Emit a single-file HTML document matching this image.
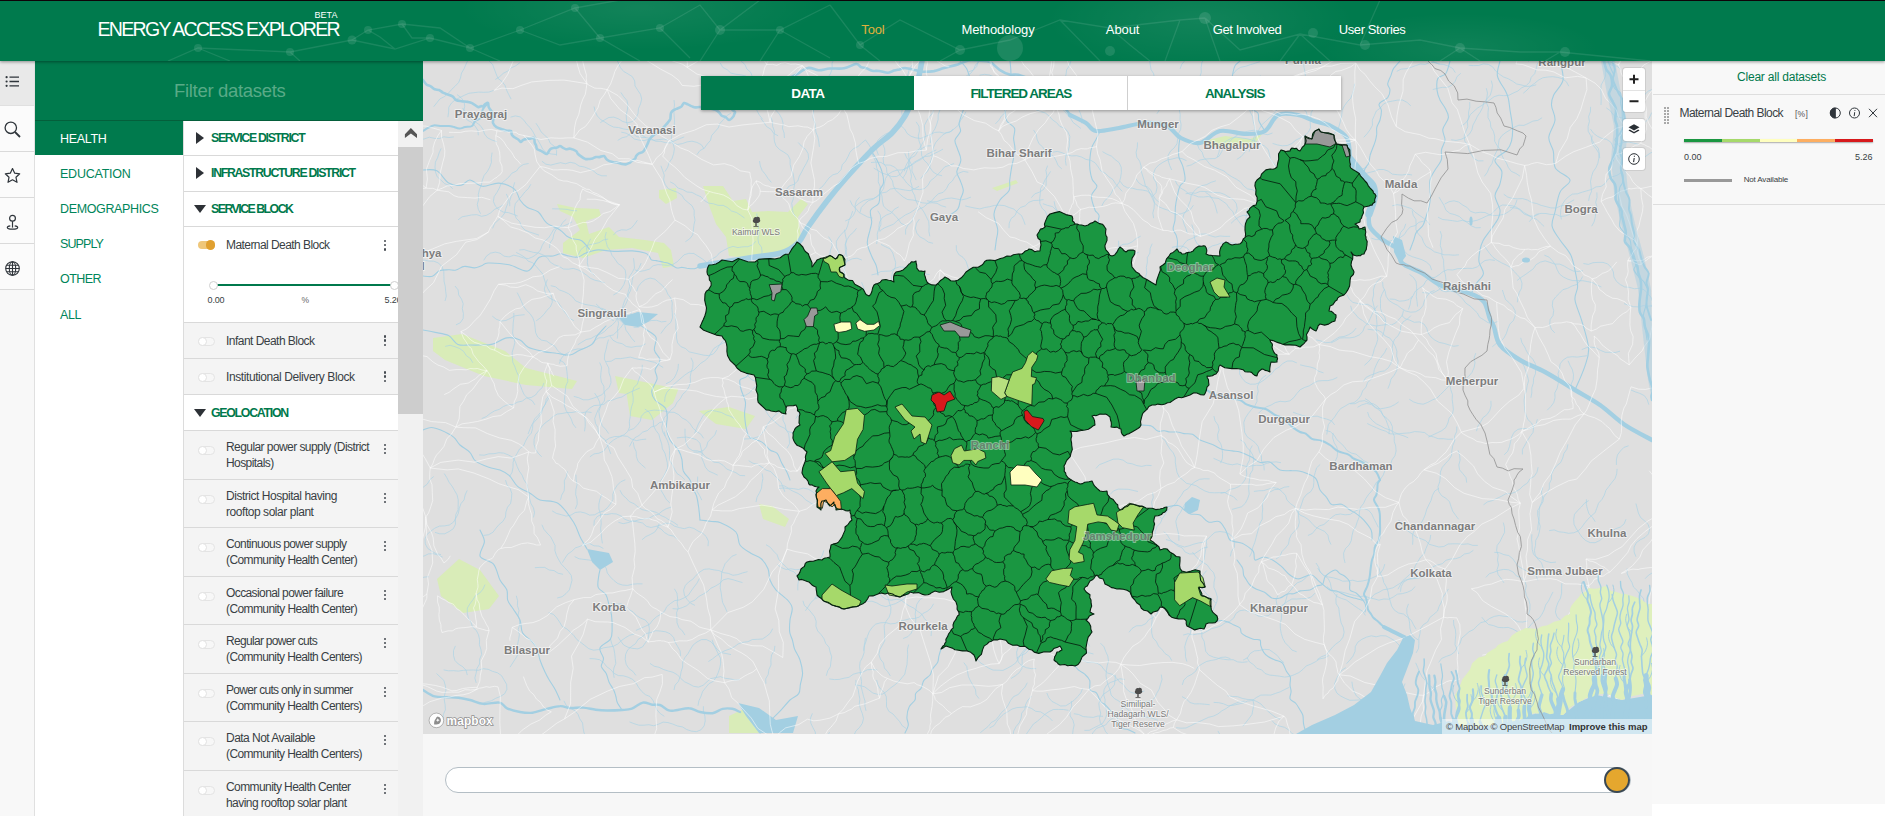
<!DOCTYPE html>
<html lang="en">
<head>
<meta charset="utf-8">
<title>Energy Access Explorer</title>
<style>
*{box-sizing:border-box;margin:0;padding:0}
html,body{width:1885px;height:816px;overflow:hidden;background:#f7f7f7;font-family:"Liberation Sans",sans-serif;color:#393f44}
.abs{position:absolute}
#top{position:absolute;left:0;top:0;width:1885px;height:61px;background:#007a4d;z-index:20;box-shadow:0 1px 3px rgba(0,0,0,.4);overflow:hidden}
#topline{position:absolute;left:0;top:0;width:1885px;height:1px;background:#0e0308;z-index:21}
#iconbar{position:absolute;left:0;top:61px;width:35px;height:755px;background:#f8f8f8;border-right:1px solid #e0e0e0}
.ic{position:absolute;left:0;width:34px;height:46px;border-bottom:1px solid #dadada;background:#fbfbfb}
.ic svg{position:absolute;left:3.800px;width:17px;height:17px}
#filter{position:absolute;left:35px;top:61px;width:388px;height:60px;background:#007a4d;border-bottom:1px solid #045f3b}
#cats{position:absolute;left:35px;top:121px;width:148px;height:695px;background:#fff}
#list{position:absolute;left:183px;top:121px;width:215px;height:695px;background:#fff;border-left:1px solid #dcdcdc;overflow:hidden}
#listin{position:absolute;left:-184px;top:-121px;width:1885px;height:816px}
.row{position:absolute;left:184px;width:214px;border-bottom:1px solid #d9d9d9}
.hd{background:#fff}
.off{background:#f4f4f4}
.tri-r{position:absolute;width:0;height:0;border-left:8px solid #2d3136;border-top:6.500px solid transparent;border-bottom:6.500px solid transparent}
.tri-d{position:absolute;width:0;height:0;border-top:8px solid #2d3136;border-left:6.500px solid transparent;border-right:6.500px solid transparent}
.tg{position:absolute;left:198px;width:17px;height:9px;border-radius:5px;border:1px solid #e4e4e4;background:#f7f7f7}
.tg i{position:absolute;left:-1px;top:-1px;width:9px;height:9px;border-radius:5px;background:#fff;border:1px solid #e2e2e2}
.dots{position:absolute;left:384px;width:3px;height:12px}
.dots i{position:absolute;left:0;width:2.400px;height:2.400px;border-radius:2px;background:#444a50}
.lbl{position:absolute;left:226px;font-size:12px;line-height:16px;color:#393f44;white-space:nowrap}
#sbar{position:absolute;left:398px;top:121px;width:25px;height:695px;background:#f1f1f1}
#sthumb{position:absolute;left:398px;top:147px;width:25px;height:267px;background:#cdcdcd}
#map{position:absolute;left:423px;top:61px;width:1229px;height:673px;background:#dfdfdf;overflow:hidden}
#tabs{position:absolute;left:701px;top:76px;width:640px;height:34px;background:#fff;box-shadow:0 1px 3px rgba(0,0,0,.35);z-index:5}
.ctl{position:absolute;left:1623px;width:22px;background:#fff;border-radius:3px;box-shadow:0 0 0 1px rgba(0,0,0,.08);z-index:5}
#right{position:absolute;left:1652px;top:61px;width:233px;height:743px;background:#f8f8f8}
#rightb{position:absolute;left:1652px;top:804px;width:233px;height:12px;background:#fff}
#tl{position:absolute;left:445px;top:767px;width:1186px;height:26px;border:1px solid #b4bec5;border-radius:13px;background:#fff}
#knob{position:absolute;left:1604px;top:767px;width:26px;height:26px;border-radius:13px;background:#e5a72e;border:2px solid #3a4853}
#attr{position:absolute;left:1442px;top:719px;width:210px;height:15px;background:rgba(255,255,255,.5);z-index:4}
</style>
</head>
<body>
<div id="top">
<div class="abs" style="left:0;top:0;width:1885px;height:61px;background:radial-gradient(ellipse 260px 60px at 640px 8px,rgba(255,255,255,.07),rgba(255,255,255,0) 70%),radial-gradient(ellipse 220px 70px at 1200px 20px,rgba(255,255,255,.07),rgba(255,255,255,0) 70%),radial-gradient(ellipse 200px 50px at 1460px 48px,rgba(255,255,255,.06),rgba(255,255,255,0) 70%)"></div>
<svg class="abs" style="left:0;top:0" width="1885" height="61" viewBox="0 0 1885 61" fill="none" stroke="#fff" stroke-opacity=".1" stroke-width="1.300">
<path d="M168 61L198 48 290 52 352 40 395 49 430 38 470 48 520 30 575 8 620 0M352 40L368 30 402 24 412 38 430 38M368 30L380 37 395 49M402 24L440 28 470 48M198 48L230 61M290 52L300 61M470 48L500 61M520 30L560 45 600 38 640 61M575 8L600 38M600 38L660 28 700 5 720 30 760 0M660 28L690 58M720 30L780 30 830 5M720 30L700 61M780 30L760 61M780 30L830 58M830 5L860 45 900 20 960 50 1010 40 1060 20 1110 28 1180 20 1205 18M860 45L880 61M960 50L940 61M1060 20L1100 61M1110 28L1130 45 1150 61M1180 20L1165 61M1205 18L1240 50 1300 34 1360 45 1420 40 1460 48 1520 52 1560 52 1600 56 1650 61M1205 18L1220 61M1300 34L1280 61M1300 34L1330 61M1360 45L1380 0M1460 48L1440 61M1460 48L1480 61M1560 52L1545 61"/>
<g fill="#fff" fill-opacity=".11" stroke="none"><circle cx="198" cy="48" r="4"/><circle cx="290" cy="52" r="4"/><circle cx="352" cy="40" r="4.500"/><circle cx="368" cy="30" r="4"/><circle cx="402" cy="24" r="4"/><circle cx="430" cy="38" r="4"/><circle cx="470" cy="48" r="4"/><circle cx="520" cy="30" r="4"/><circle cx="575" cy="8" r="4"/><circle cx="600" cy="38" r="4"/><circle cx="660" cy="28" r="4"/><circle cx="720" cy="30" r="5"/><circle cx="780" cy="30" r="4"/><circle cx="860" cy="45" r="4"/><circle cx="960" cy="50" r="5"/><circle cx="1010" cy="48" r="13"/><circle cx="1110" cy="51" r="5"/><circle cx="1205" cy="18" r="6"/><circle cx="1313" cy="33" r="5"/><circle cx="1365" cy="45" r="5"/><circle cx="1460" cy="48" r="5"/><circle cx="1565" cy="52" r="5"/></g>
</svg>
<div style="position:absolute;top:15.5px;font-size:19.5px;line-height:27px;white-space:nowrap;letter-spacing:-1.67px;color:#fff;left:97.5px;">ENERGY ACCESS EXPLORER</div>
<div style="position:absolute;top:9.2px;font-size:9px;line-height:13px;white-space:nowrap;letter-spacing:0.04px;color:#fff;left:314.5px;">BETA</div>
<div style="position:absolute;top:20.7px;font-size:13px;line-height:18px;white-space:nowrap;letter-spacing:-0.14px;color:#e0b13c;left:861.3px;">Tool</div>
<div style="position:absolute;top:20.7px;font-size:13px;line-height:18px;white-space:nowrap;letter-spacing:-0.13px;color:#fff;left:961.5px;">Methodology</div>
<div style="position:absolute;top:20.7px;font-size:13px;line-height:18px;white-space:nowrap;letter-spacing:-0.09px;color:#fff;left:1105.8px;">About</div>
<div style="position:absolute;top:20.7px;font-size:13px;line-height:18px;white-space:nowrap;letter-spacing:-0.35px;color:#fff;left:1212.7px;">Get Involved</div>
<div style="position:absolute;top:20.7px;font-size:13px;line-height:18px;white-space:nowrap;letter-spacing:-0.41px;color:#fff;left:1338.8px;">User Stories</div>
</div>
<div id="topline"></div>

<div id="iconbar">
<div class="ic" style="top:0;height:45px;background:#e9e9e9;border-bottom-color:#e0e0e0">
<svg style="top:12.200px" viewBox="0 0 17 17" fill="none" stroke="#2f353b" stroke-width="1.300"><path d="M5.500 4.200H15M5.500 8.500H15M5.500 12.800H15"/><g fill="#2f353b" stroke="none"><circle cx="2.600" cy="4.200" r="1.100"/><circle cx="2.600" cy="8.500" r="1.100"/><circle cx="2.600" cy="12.800" r="1.100"/></g></svg></div>
<div class="ic" style="top:45px">
<svg style="top:14.800px" viewBox="0 0 17 17" fill="none" stroke="#2f353b" stroke-width="1.300"><circle cx="6.800" cy="6.800" r="5.700"/><path d="M11 11L16 16" stroke-width="1.800"/></svg></div>
<div class="ic" style="top:91px">
<svg style="top:15.200px" viewBox="0 0 17 17" fill="none" stroke="#2f353b" stroke-width="1.200" stroke-linejoin="round"><path d="M8.500 1.500l2.200 4.700 5 .6-3.700 3.500 1 5-4.500-2.500-4.500 2.500 1-5L1.300 6.800l5-.6z"/></svg></div>
<div class="ic" style="top:137px">
<svg style="top:15.600px" viewBox="0 0 17 17" fill="none" stroke="#2f353b" stroke-width="1.200"><circle cx="8.500" cy="4.300" r="2.900"/><path d="M8.500 7.200V13.600"/><path d="M6.300 11.900c-2 .3-3 .9-3 1.600 0 1 2.300 1.700 5.200 1.700s5.200-.7 5.200-1.700c0-.7-1-1.300-3-1.600"/></svg></div>
<div class="ic" style="top:183px">
<svg style="top:15.500px" viewBox="0 0 17 17" fill="none" stroke="#2f353b" stroke-width="1.100"><circle cx="8.500" cy="8.500" r="6.800"/><ellipse cx="8.500" cy="8.500" rx="3.200" ry="6.800"/><path d="M8.500 1.700v13.600M1.700 8.500h13.600M2.600 5.200h11.800M2.600 11.800h11.800"/></svg></div>
</div>

<div id="filter"></div>
<div style="position:absolute;top:78.0px;font-size:18.5px;line-height:26px;white-space:nowrap;letter-spacing:-0.31px;color:#59aa87;left:174px;">Filter datasets</div>

<div id="cats"></div>
<div class="abs" style="left:35px;top:121px;width:148px;height:34px;background:#007a4d"></div>
<div style="position:absolute;top:129.5px;font-size:12.5px;line-height:18px;white-space:nowrap;letter-spacing:-0.32px;color:#fff;left:60px;">HEALTH</div>
<div style="position:absolute;top:165.0px;font-size:12.5px;line-height:18px;white-space:nowrap;letter-spacing:-0.24px;color:#00855a;left:60px;">EDUCATION</div>
<div style="position:absolute;top:200.0px;font-size:12.5px;line-height:18px;white-space:nowrap;letter-spacing:-0.36px;color:#00855a;left:60px;">DEMOGRAPHICS</div>
<div style="position:absolute;top:235.0px;font-size:12.5px;line-height:18px;white-space:nowrap;letter-spacing:-0.90px;color:#00855a;left:60px;">SUPPLY</div>
<div style="position:absolute;top:270.0px;font-size:12.5px;line-height:18px;white-space:nowrap;letter-spacing:-0.55px;color:#00855a;left:60px;">OTHER</div>
<div style="position:absolute;top:306.0px;font-size:12.5px;line-height:18px;white-space:nowrap;letter-spacing:-0.41px;color:#00855a;left:60px;">ALL</div>

<div id="list"><div id="listin">
<div class="row hd" style="top:121px;height:35px"></div><div class="tri-r" style="left:196px;top:131.5px"></div><div style="position:absolute;top:129.8px;font-size:12.3px;line-height:17px;white-space:nowrap;letter-spacing:-1.28px;font-weight:bold;color:#00794c;left:211px;">SERVICE DISTRICT</div>
<div class="row hd" style="top:156px;height:36px"></div><div class="tri-r" style="left:196px;top:167px"></div><div style="position:absolute;top:165.3px;font-size:12.3px;line-height:17px;white-space:nowrap;letter-spacing:-1.29px;font-weight:bold;color:#00794c;left:211px;">INFRASTRUCTURE DISTRICT</div>
<div class="row hd" style="top:192px;height:35px"></div><div class="tri-d" style="left:193.500px;top:204.5px"></div><div style="position:absolute;top:200.8px;font-size:12.3px;line-height:17px;white-space:nowrap;letter-spacing:-1.50px;font-weight:bold;color:#00794c;left:211px;">SERVICE BLOCK</div>
<div class="row" style="top:227px;height:96px;background:#fff"></div>
<div class="abs" style="left:198px;top:241px;width:17px;height:8px;border-radius:4px;background:#efc77a"></div><div class="abs" style="left:205.500px;top:240.200px;width:9.600px;height:9.600px;border-radius:5px;background:#e0a030"></div>
<div style="position:absolute;top:236.5px;font-size:12px;line-height:17px;white-space:nowrap;letter-spacing:-0.56px;left:226px;">Maternal Death Block</div>
<div class="dots" style="top:239.8px"><i style="top:0"></i><i style="top:4.2px"></i><i style="top:8.400px"></i></div>
<div class="abs" style="left:213px;top:284px;width:185px;height:2px;background:#00794c"></div>
<div class="abs" style="left:208.500px;top:280.500px;width:9px;height:9px;border-radius:5px;background:#fff;border:1px solid #cfcfcf"></div>
<div class="abs" style="left:390px;top:280.500px;width:9px;height:9px;border-radius:5px;background:#fff;border:1px solid #cfcfcf"></div>
<div style="position:absolute;top:293.8px;font-size:9px;line-height:13px;white-space:nowrap;letter-spacing:-0.13px;left:207.5px;">0.00</div>
<div style="position:absolute;top:294.3px;font-size:8.5px;line-height:12px;white-space:nowrap;letter-spacing:-1.06px;color:#666;left:301.5px;">%</div>
<div style="position:absolute;top:293.8px;font-size:9px;line-height:13px;white-space:nowrap;letter-spacing:-0.13px;left:384.5px;">5.26</div>
<div class="row off" style="top:323px;height:36px"></div><div class="tg" style="top:336.5px"><i></i></div><div style="position:absolute;top:332.5px;font-size:12px;line-height:17px;white-space:nowrap;letter-spacing:-0.53px;left:226px;">Infant Death Block</div><div class="dots" style="top:335.3px"><i style="top:0"></i><i style="top:4.2px"></i><i style="top:8.400px"></i></div>
<div class="row off" style="top:359px;height:36px"></div><div class="tg" style="top:372.5px"><i></i></div><div style="position:absolute;top:368.5px;font-size:12px;line-height:17px;white-space:nowrap;letter-spacing:-0.41px;left:226px;">Institutional Delivery Block</div><div class="dots" style="top:371.3px"><i style="top:0"></i><i style="top:4.2px"></i><i style="top:8.400px"></i></div>
<div class="row hd" style="top:395px;height:36px"></div><div class="tri-d" style="left:193.500px;top:408.8px"></div><div style="position:absolute;top:405.1px;font-size:12.3px;line-height:17px;white-space:nowrap;letter-spacing:-1.25px;font-weight:bold;color:#00794c;left:211px;">GEOLOCATION</div>
<div class="row off" style="top:431px;height:49px"></div><div class="tg" style="top:446px"><i></i></div><div style="position:absolute;top:439.0px;font-size:12px;line-height:17px;white-space:nowrap;letter-spacing:-0.57px;left:226px;">Regular power supply (District</div><div style="position:absolute;top:455.0px;font-size:12px;line-height:17px;white-space:nowrap;letter-spacing:-0.58px;left:226px;">Hospitals)</div><div class="dots" style="top:443.5px"><i style="top:0"></i><i style="top:4.2px"></i><i style="top:8.400px"></i></div>
<div class="row off" style="top:480px;height:48px"></div><div class="tg" style="top:495px"><i></i></div><div style="position:absolute;top:488.0px;font-size:12px;line-height:17px;white-space:nowrap;letter-spacing:-0.46px;left:226px;">District Hospital having</div><div style="position:absolute;top:504.0px;font-size:12px;line-height:17px;white-space:nowrap;letter-spacing:-0.45px;left:226px;">rooftop solar plant</div><div class="dots" style="top:492.5px"><i style="top:0"></i><i style="top:4.2px"></i><i style="top:8.400px"></i></div>
<div class="row off" style="top:528px;height:49px"></div><div class="tg" style="top:543px"><i></i></div><div style="position:absolute;top:536.0px;font-size:12px;line-height:17px;white-space:nowrap;letter-spacing:-0.62px;left:226px;">Continuous power supply</div><div style="position:absolute;top:552.0px;font-size:12px;line-height:17px;white-space:nowrap;letter-spacing:-0.60px;left:226px;">(Community Health Center)</div><div class="dots" style="top:540.5px"><i style="top:0"></i><i style="top:4.2px"></i><i style="top:8.400px"></i></div>
<div class="row off" style="top:577px;height:48px"></div><div class="tg" style="top:592px"><i></i></div><div style="position:absolute;top:585.0px;font-size:12px;line-height:17px;white-space:nowrap;letter-spacing:-0.60px;left:226px;">Occasional power failure</div><div style="position:absolute;top:601.0px;font-size:12px;line-height:17px;white-space:nowrap;letter-spacing:-0.60px;left:226px;">(Community Health Center)</div><div class="dots" style="top:589.5px"><i style="top:0"></i><i style="top:4.2px"></i><i style="top:8.400px"></i></div>
<div class="row off" style="top:625px;height:49px"></div><div class="tg" style="top:640px"><i></i></div><div style="position:absolute;top:633.0px;font-size:12px;line-height:17px;white-space:nowrap;letter-spacing:-0.69px;left:226px;">Regular power cuts</div><div style="position:absolute;top:649.0px;font-size:12px;line-height:17px;white-space:nowrap;letter-spacing:-0.62px;left:226px;">(Community Health Centers)</div><div class="dots" style="top:637.5px"><i style="top:0"></i><i style="top:4.2px"></i><i style="top:8.400px"></i></div>
<div class="row off" style="top:674px;height:48px"></div><div class="tg" style="top:689px"><i></i></div><div style="position:absolute;top:682.0px;font-size:12px;line-height:17px;white-space:nowrap;letter-spacing:-0.70px;left:226px;">Power cuts only in summer</div><div style="position:absolute;top:698.0px;font-size:12px;line-height:17px;white-space:nowrap;letter-spacing:-0.62px;left:226px;">(Community Health Centers)</div><div class="dots" style="top:686.5px"><i style="top:0"></i><i style="top:4.2px"></i><i style="top:8.400px"></i></div>
<div class="row off" style="top:722px;height:49px"></div><div class="tg" style="top:737px"><i></i></div><div style="position:absolute;top:730.0px;font-size:12px;line-height:17px;white-space:nowrap;letter-spacing:-0.53px;left:226px;">Data Not Available</div><div style="position:absolute;top:746.0px;font-size:12px;line-height:17px;white-space:nowrap;letter-spacing:-0.62px;left:226px;">(Community Health Centers)</div><div class="dots" style="top:734.5px"><i style="top:0"></i><i style="top:4.2px"></i><i style="top:8.400px"></i></div>
<div class="row off" style="top:771px;height:49px"></div><div class="tg" style="top:786px"><i></i></div><div style="position:absolute;top:779.0px;font-size:12px;line-height:17px;white-space:nowrap;letter-spacing:-0.59px;left:226px;">Community Health Center</div><div style="position:absolute;top:795.0px;font-size:12px;line-height:17px;white-space:nowrap;letter-spacing:-0.55px;left:226px;">having rooftop solar plant</div><div class="dots" style="top:783.5px"><i style="top:0"></i><i style="top:4.2px"></i><i style="top:8.400px"></i></div>
</div></div>
<div id="sbar"></div>
<div id="sthumb"></div>
<div class="abs" style="left:398px;top:122px;width:25px;height:25px;background:#f1f1f1"></div>
<svg class="abs" style="left:398px;top:121px" width="25" height="26" viewBox="0 0 25 26" fill="#555"><path d="M12.900 7L19 13.200V17L12.900 12.400 6.900 17V13.200z"/></svg>

<div id="map">
<svg width="1229" height="673" viewBox="0 0 1229 673" style="position:absolute;left:0;top:0">
<rect width="1229" height="673" fill="#dfdfdf"/>
<g fill="#d9ecb8"><path d="M280 125L300 125 310 140 323 138 329 151 345 150 365 151 378 138 385 143 375 156 378 176 368 189 345 194 326 197 306 195 303 176 293 163 287 147Z"/><path d="M236 129L253 127 254 137 243 143 236 137Z"/><path d="M134 143L153 147 176 148 178 155 163 160 166 173 186 166 196 176 222 179 241 182 248 189 251 205 240 207 235 192 209 187 183 189 160 197 140 192 140 182 157 169 150 156 137 150Z"/><path d="M569 127L593 119 595 122 574 130Z"/><path d="M10 277L39 273 82 290 103 307 154 320 149 328 103 324 61 315 22 299 10 290Z"/><path d="M192 315L255 328 251 339 196 332Z"/><path d="M203 329L255 329 250 342 229 359 207 355Z"/><path d="M276 350L306 346 332 355 323 368 293 363Z"/><path d="M336 443L349 445 366 458 362 466 340 458Z"/><path d="M14 518L36 498 57 509 76 535 66 548 40 552 18 535Z"/><path d="M306 655L323 647 336 672 306 672Z"/><path d="M781 80L802 75 827 78 839 73 832 83 807 85 787 86Z"/></g>
<path d="M318.1 0.2L321.9 3.4 323.9 8 327.7 11.3 329.4 16 329.5 21 330.5 25.9 331.8 30.7 333.8 35.3 333.5 40.3 332.8 45.2 334.1 50 336.6 54.4 339.7 58.3M607.7 346.5L608.2 341.5 611.2 337.5 612 332.6 611.4 327.6 609.1 323.2 606.3 319.1 602.3 316 597.9 313.6 593 313 588.6 310.6 583.7 309.4 578.7 309.2 574.2 307.1 569.3 306M732 475.2L732.3 470.2 734.1 465.5 737.5 461.9 739.4 457.3 742.3 453.2 744.9 448.9 748.9 445.9 752.7 442.7 755.2 438.4 758.3 434.4 760.8 430.1 765.1 427.6 768.2 423.7 772.2 420.6 776.6 418.3 781.6 417.8 786.6 417.9M140.1 513.3L135.2 512.3 131 509.6 126.1 509 121.8 506.4 116.8 506.4 111.8 506.7M496.8 227.8L495 232.5 491.5 236 488.4 240 485 243.6 482.8 248.1 481.8 253 479.6 257.5 479.1 262.5 479 267.5 478.1 272.4 476.5 277.1 475 281.9 475 286.9 472.8 291.4 468.8 294.3 464 295.8 459 295.3 454.9 292.5 449.9 291.9 445 292.9 440.3 294.5 436.8 298.1M738.7 457.5L734.9 454.3 731.5 450.6 729.4 446.1 728.6 441.2 730.3 436.4 729.5 431.5M729.8 135.3L733 131.5 734 126.6 733.1 121.6 730.5 117.4 730.5 112.4 732.3 107.7 735.7 104.1 739.9 101.3 744.3 99 749.2 98 754.1 96.7 759 97.7 763.5 99.7M482.6 164.5L478.1 162.3 475.2 158.2 472 154.4 468.3 151 464 148.6 460.5 145 459.4 140.1 459 135.1 457 130.5 457.2 125.5 455.2 120.9 455.5 115.9 455.4 110.9 453.5 106.3 453.1 101.3 450.9 96.8 449 92.2 448.1 87.3 445.5 83.1 442.5 79M129.2 147.8L134.2 147.9 139.2 148 144.1 148.4 149 149.5 154 149.8M324.5 510.7L319.7 511.9 314.9 513.6 310 514.3 305.4 512.4 300.4 511.6 295.9 509.5 291 508.9 286.1 507.9 281.1 508.3 276.8 511 273.1 514.3 269.9 518.1 265.7 520.9 262.3 524.5 260.6 529.2 261.4 534.2 264.1 538.4 267.4 542.1 271.9 544.4M966 373.1L966.3 368.1 964.6 363.4 962.9 358.7 960.2 354.5 957.5 350.2 953.5 347.2 949.8 343.9 946.3 340.3 942.1 337.6M236.3 462.3L234.6 467 231.7 471.1 227.3 473.5 222.8 475.6 219 478.8M1147.1 153.1L1142.4 154.9 1137.5 155.4 1132.9 153.3 1127.9 153.5 1123 152.5 1118 152.4 1113.1 153.4 1109.5 156.9 1106.3 160.7M730.7 157.2L729.8 152.2 731 147.4 731.4 142.4 730.6 137.5 728.1 133.1 724.2 130 719.3 129 714.3 128.6 709.5 127.2 704.5 126.8 700.1 124.4 697.2 120.3M715 430.5L710.1 429.4 705.2 428.3 700.2 428.2 695.2 428.1 690.5 429.9 687.1 433.5 683.2 436.6 680.5 440.8 677.3 444.7 675.7 449.4 676.8 454.3M922.1 502L920.9 497.1 920.6 492.1 922.5 487.5 926.1 484 928.3 479.5 929 474.6 930.2 469.7 932.8 465.4 934.3 460.7 936.2 456 936.4 451 937.6 446.2 940.7 442.2 942.7 437.7 945.5 433.5 948.9 429.8 951.2 425.4 953.6 421 957.6 418.1 960.3 413.9 962 409.2 963.4 404.3M583.9 379.1L580.5 382.7 579.1 387.5 575.8 391.3 572.5 395 569.5 399 566.2 402.8 562.4 406.1 559.8 410.3 555.8 413.4 552.3 417 547.6 418.7 542.6 418.5 537.8 417.1 532.9 416.6 528.1 415 523.2 415.7 518.4 414.3 513.4 414.5 508.8 416.5M756.8 228.8L751.8 228.4 746.8 228.5 742.4 226.2 737.6 224.7 732.6 224.3 727.8 225.8 722.8 225.5 718.1 227 713.9 229.7 709 230.8 704 231.3 699.7 233.8 696.2 237.4 694.1 241.9 694.1 246.9 693.7 251.9 692 256.6M432.1 623.8L437 624.6 441.8 625.9 445.8 628.9 449.8 632 454.6 633.3 459.6 633.1 463.8 630.3 467.5 627 471.6 624.1 475.4 620.9 478.6 617.1 481.8 613.2 482.8 608.3 484 603.5 484.3 598.5 484.7 593.5 484.4 588.5 485.6 583.6M542.9 50.8L540.6 55.2 537.6 59.3 535.7 63.9 531.9 67.2 528.2 70.5 523.3 71.6 519.2 74.4 515.7 78 512.5 81.8 510.5 86.4 509.2 91.3 509.1 96.2 507.4 101 506.8 105.9 504.5 110.4 500.8 113.7 497.7 117.7M270.5 391.1L275.5 391.2 280.2 389.6 283.5 385.8 284.8 381 288.3 377.4 291.8 373.9 293.6 369.2M91.7 121.3L90.3 126.1 90.5 131.1 88.1 135.5 86.6 140.2 86.8 145.2M285 485.2L285.4 480.2 283.3 475.7 279.7 472.2 275.1 470.1 270.9 467.4 266.1 466.2 261.3 467.7 256.4 466.6 251.6 465.2 247.5 462.4 242.5 462.2 237.8 464 233 465.3 228.1 466.5 223.3 465.3 219.6 462 214.7 460.9 209.8 460 205.1 461.6 200.2 462.7 195.4 461.3M438.8 199L434.1 197.2 429.2 197.8 424.7 200 420.5 202.8 417.5 206.7 413.4 209.7 409.9 213.2 407.2 217.4 405.4 222.1 404.6 227 401.4 230.9 397.4 233.9 393.6 237.1 391.8 241.8 389.8 246.4 389.2 251.3M985.5 542.8L983.8 547.5 983.9 552.5 985.7 557.1 986.6 562 986.9 567 988.1 571.9 991 576 995.1 578.9M825.7 71.9L820.8 73.1 815.9 73.2 811.6 75.9 807.9 79.2 804.6 82.9 800.7 86.1 798.7 90.7 796.2 95.1 791.9 97.6 786.9 97.7 782 98.1 777 99 772.6 101.4 768.3 103.9 763.5 105.2M476.5 233.1L472.7 229.9 470.6 225.3 468.7 220.7 468.5 215.7 469.7 210.8 472.2 206.5 472.7 201.5 471.2 196.8 469.8 192 467 187.8 462.4 185.7 458 183.4M969.2 144.8L974.1 143.7 979 144.4 983.7 146.1 988.5 147.6 992 151.1 996.1 154.1 1000.2 156.9 1004 160.1 1007 164.1M753.1 666.7L758 667.2 763 667 767.5 664.8 772 662.5 776.6 660.5 781.1 658.4 785.6 656.3 790.5 655.1 795 652.9 798.9 649.8 803.3 647.4 807.4 644.5 812 642.5 816.7 640.8 821.6 640.1M555 588.3L555.4 583.3 557.4 578.7 556.8 573.8 558.1 568.9 560.2 564.4 564.1 561.2 568.5 558.9 573.1 556.9 576.8 553.5 578.8 548.9 582.5 545.5 587.1 543.6 590.9 540.3 595.8 539.3 600.8 539.2 605.6 540.6 609.8 543.3 614.4 545.2 619.2 546.6 624.2 546.7 628.9 545M703.1 250.1L707 246.9 709.3 242.5 710.2 237.6 712.2 233 714.9 228.8 716.1 223.9 719 219.9 722.5 216.3 723.8 211.5 723.3 206.5 724.3 201.6 724.3 196.6 726.8 192.2 727.2 187.3 729.2 182.7M447.2 521.5L449.2 526.1 453.2 529.1 458.1 529.7 462.2 532.6 465 536.8 466.4 541.6 467.9 546.4 467.7 551.4 466.2 556.1 463.2 560.1 461.2 564.7 461.4 569.7 461.8 574.7 461.7 579.7 459.4 584.1 456.9 588.5 455.9 593.4 457.4 598.1 460.5 602 461.4 607 464.7 610.7 467.4 614.9M1148.8 328.1L1148.2 323.1 1150.2 318.5 1150.5 313.6 1149.4 308.7 1147 304.3 1145 299.7M558.3 370.2L563.3 369.4 567.6 366.9 572.6 366.5 577.5 367.1 582.2 368.9 585.9 372.3M535.4 33.8L530.4 33.5 525.5 34.8 520.7 36 516.7 39 513.4 42.8 511.2 47.2 509.6 52 506.4 55.8 503.7 60 501.4 64.5 501.7 69.5 502.8 74.3 501.4 79.1 498.8 83.4 496.5 87.8 492.4 90.6 488.9 94.3 486.1 98.4 485.5 103.3 484.3 108.2 482.6 112.9 479.8 117.1M152.3 447.9L154.2 443.3 154 438.3 152.7 433.5 152.9 428.5 154.1 423.6 153.1 418.7 152.9 413.7M989.1 114L984.2 113.2 979.2 114 974.2 113.7 969.3 113.1 965.2 110.1 960.5 108.5 955.5 108.5 950.9 110.4 946 111.5 941.2 113 936.4 114.3 931.4 114.6M197 429.2L199.3 433.7 203 437 206.4 440.7 211 442.7 214.9 445.8 219.1 448.6 223.9 449.8 228.9 450.1 233.7 451.5 237.7 454.4 242.3 456.4 246.5 459.2 250.9 461.5 255 464.4M631.1 140.3L632.1 145.2 634.2 149.8 635.7 154.5 634.8 159.5 632.2 163.7M20.2 658.4L20.4 653.4 22.4 648.8 22.1 643.8 21.3 638.9 21.6 633.9 23 629.1 22.2 624.1 20.8 619.3 17.1 615.9 13.5 612.5M44.3 614.1L43 609.2 39.6 605.6 35.3 603 31.9 599.4 30.5 594.6 30.5 589.6 32.4 584.9M144.3 410.3L143.5 415.3 141.3 419.8 141.5 424.8 141.2 429.8 138.7 434.1 137.5 438.9M430.3 400.9L426 403.4 421.1 404.4 416.1 404.1 411.1 403.9 406.5 406 403.4 409.8 398.9 411.9 394.3 413.9M561 304.7L558.9 300.2 557.1 295.5 557 290.5 555.1 285.9 552.5 281.6 548.4 278.8 545.4 274.8 541.6 271.5 537.7 268.4M871.6 34.1L867.6 37.1 862.9 38.7 859.2 42.1 856.5 46.3 853 49.9 850 53.9 846.2 57.1 842.5 60.5 838.8 63.8 836.3 68.1 833.9 72.5 832.2 77.2 830.9 82.1 828.1 86.2 826 90.7M10.7 415.5L6.9 418.7 4.4 423 0.4 426.1 -3.6 429.1 -7 432.7 -10 436.7 -14.1 439.6 -18.4 442.2 -22.3 445.3 -25.2 449.4 -27.9 453.6 -31 457.5 -33.7 461.8M489.7 346.8L485 348.4 480.6 350.8 476.9 354.2 475.3 359 472.2 362.9 469.8 367.3 469.4 372.3 467 376.6 465.8 381.5 466.6 386.4 466.7 391.4 464.6 396 462.7 400.6 462.9 405.6 461.8 410.5 461.5 415.4M938.4 539.1L943.4 539 948 537.1 951.3 533.4 955.9 531.3 960.2 528.8 965.1 528 970 526.8 974.2 524.1 978.4 521.5 982.8 518.9 987.7 518 992.6 517.4 996.7 514.5 1001.7 513.8 1006.7 513.8 1011.6 514.5M652.5 179.3L648.6 182.3 644 184.4 640.8 188.2 638.6 192.7 638.3 197.7 639 202.6 637.6 207.4M982.8 162.8L981.1 167.5 977.8 171.3 976.3 176.1 977.1 181 979.1 185.6 981.4 190 984.8 193.7 989.4 195.7 994.1 197.2 998.9 198.7 1003.3 201 1007.1 204.4 1008.6 209.1M140.9 639.8L143.2 644.3 147.2 647.3 151.7 649.5 155 653.3 156.8 657.9 159.6 662 160.1 667 161 671.9 163.4 676.3 166.3 680.4 170.1 683.6 175 684.5 180 684.5 184.6 686.3 189.3 688.1 194.2 687.2 199.2 686.8 204.2 687.4 209.2 687.5 214 688.9 218.9 688.4 223 685.4M1067.9 339.8L1068.1 344.8 1066.7 349.6 1063.9 353.7 1059.9 356.7 1057.5 361.1 1054.8 365.3 1053.5 370.2M572.4 62.9L575.8 59.3 578.4 55.1 582.2 51.7 583.6 47 583.4 42 582.6 37 582.4 32 579.7 27.8 577.6 23.3 574.8 19.2 571 15.9 566.4 14 561.4 13.3 556.5 14.2M733.9 52.8L736.6 48.6 741.1 46.3 744.5 42.7 747.2 38.4 751 35.2 754.9 32 759.8 31.2 764.4 29.2 769.3 28.4 774.2 29.5 779.2 30.3 783.5 32.7 788.3 34M136.4 302.6L138 297.9 141 293.9 145.5 291.6 149.8 289.1 154.6 287.9 159.6 288 164.2 286.1 168.5 283.5 171.5 279.5 175.8 276.9 180.8 276.7 185.5 275 190.3 273.9 193.9 270.4 197.5 266.9 200.4 262.8 204 259.3 207.1 255.4 208.7 250.7M351.9 584.9L351.2 589.9 348.5 594 347.9 599 348 604 345.9 608.5 345.2 613.5 342.7 617.8 342.9 622.8M742.9 478.5L747.7 479.9 752.1 482.4 756.6 484.5 761.4 486 766.2 484.8 770.9 483.1 775.8 481.9 780.7 481.2 784.7 478.2 788.2 474.6 792 471.3 797 470.5 801.9 471.2 806.5 473.2 810.2 476.6 811.7 481.4 811.3 486.4 808.4 490.5 807.4 495.4M701.7 618.4L696.7 617.8 692.1 619.8 687.4 621.5 683.4 624.4 681 628.8 680.7 633.8 682.1 638.6 681.8 643.6 683.3 648.4 683.9 653.3 682.2 658 679.7 662.3 675.3 664.7 670.8 666.9 666.4 669.3 661.4 669.4M940.1 320.9L942.8 316.6 947.2 314.3 951.9 312.6 956.6 310.7 961.5 309.9 965.4 306.7 967.9 302.4 969.3 297.6 969.9 292.7 969.1 287.7 969.8 282.8 971.6 278.1 975.2 274.6 977.4 270.1 977.7 265.1 980.1 260.8 984.4 258.1 987.9 254.6M153 366.9L149.9 362.9 148.3 358.2 145.9 353.8 143.2 349.7 141.4 345 141.3 340 141.8 335 142.4 330 142.8 325 144.8 320.5 144.4 315.5 143.9 310.5 143.2 305.5 140.6 301.3 136.2 298.9M372.8 357.6L375.5 353.4 377.2 348.6 379 344 380.5 339.2 383 334.9 385.9 330.8 387.4 326 386.9 321.1 387 316.1 387.4 311.1 388.5 306.2 391.1 301.9M1026.8 318.8L1026.9 323.8 1027.8 328.7 1029.4 333.5 1029.2 338.5 1029.8 343.4 1030.4 348.4 1029.4 353.3 1026.1 357.1 1024.9 361.9 1022.8 366.5 1018.9 369.6 1014.4 371.8 1009.9 373.9 1005.4 376.1M635 505.7L635.6 510.7 636.2 515.6 635.9 520.6 638.1 525.1 638.6 530.1 640.5 534.7 643.1 539 643.4 544 645.7 548.4 648.7 552.4 649.5 557.3 651.9 561.7 654.1 566.2 655.3 571.1 654.8 576 655.6 581 658.5 585.1 661.3 589.2 665.6 591.7 670.5 593M643.2 104.6L642.4 99.7 642.9 94.7 645.1 90.2 646.3 85.4 646.3 80.4 646.9 75.4 644.9 70.8 641.5 67.1 636.8 65.4 633.5 61.6 629.4 58.8 626.1 55 622.2 51.9 617.4 50.6 612.8 48.6 608.2 46.6M22 240L23.3 235.2 22.7 230.2 22.2 225.2 21.1 220.4 20.9 215.4 20.8 210.4 19 205.7 15.6 202.1 10.9 200.2 5.9 200.1 1 199 -3.9 199.3 -8.3 201.8 -13.3 201.8 -18.2 202.6 -23.2 202.7 -27.7 204.8 -32.3 206.9 -37.2 207.8M993.1 568.1L990.5 563.8 988.3 559.3 984.4 556.2 980.5 553 975.6 552 971.4 549.2 968.6 545.1 967.3 540.3 965.8 535.5 965 530.6 963.4 525.9 960.8 521.6 959.7 516.7 957.2 512.4 956.2 507.5 953.7 503.2M533.3 184.2L533.4 189.2 535.8 193.6 540 196.3 543 200.3 544.6 205.1 546.2 209.8 546.6 214.8M555.9 378L554.7 382.8 553 387.6 553.8 392.5 555.5 397.2 557.4 401.8 559.8 406.2 564 408.9 566.5 413.2 569 417.6 570.1 422.4 571.4 427.3 570.8 432.2 569.8 437.1 568.3 441.9 565.5 446M406.6 671.2L404.1 675.5 401.6 679.8 397.2 682.2 394.6 686.5 391.9 690.7 390.1 695.4 390.6 700.4 390.9 705.3 389 710 385.4 713.4 381.9 717 379.8 721.5 376.1 724.9 373.5 729.2 370.2 732.9 368.2 737.5 364.5 740.9M345 227.5L342.9 223 340.1 218.8 337.9 214.4 335 210.3 334.4 205.3 335.6 200.5 337.7 195.9 339.1 191.1 338.5 186.2 335.6 182.1 334.9 177.1 336.2 172.3 335.5 167.3 334.7 162.4 334 157.4 333.8 152.5M1032.3 11.6L1029.6 7.4 1025.2 5 1020.5 3.4 1015.5 3 1010.9 1 1006.9 -2 1002.3 -3.9 998 -6.5M88.1 38.1L85.8 33.7 83.6 29.2 82 24.4 79 20.5 75 17.4 73.1 12.8 71.3 8.1 69.6 3.4 66 -0 64.2 -4.7 65 -9.6 67.3 -14.1 71.2 -17.2 76.1 -18 80.3 -20.7 85.2 -22 90 -23.1 95 -23.2 100 -23.6 104.9 -22.5M1080.7 133.2L1084.8 136.1 1089.6 137.5 1094.6 137.8 1099.6 137.6 1104.4 139 1108.7 141.5 1113.6 142.5 1118.2 144.4 1123.1 145.6 1127.9 146.9 1132.9 147 1137.5 145.1 1142.4 143.8 1146.7 141.3 1151.1 138.8M1138.4 657.9L1141.8 654.3 1143.7 649.7 1146.6 645.6 1151.2 643.6 1156.2 642.9 1160.8 641 1164.8 638 1169.6 636.9 1173.5 633.8 1175.4 629.1 1177.2 624.4 1179.5 620 1182.7 616.2M658.8 62.4L659 57.5 657.5 52.7 655.6 48.1 654.3 43.2 654.3 38.2 653.4 33.3 650.2 29.6 646.3 26.3 642.9 22.7 638.2 21.1 633.2 20.5 628.3 21.4 623.5 22.7 618.6 21.7 613.8 23.1 609.4 25.5 606.9 29.9 602.6 32.5 599.7 36.5 597.8 41.1 594.3 44.7M912.1 400.4L914.2 395.9 914.6 390.9 913.8 385.9 911.2 381.7 909.7 376.9 910.1 371.9M769.4 491L772.5 494.9 775.9 498.6 780 501.4 784.3 504 787.1 508.1 790.6 511.7 792 516.5 791 521.4 790.9 526.4 792.9 531 794.3 535.8 793.9 540.8 791.7 545.3 789.8 549.9 786.1 553.2M72.3 18.5L76.5 15.8 80.2 12.4 84.6 10.1 88.4 6.8 92.9 4.7 96.9 1.7M1193.4 403.9L1193.4 398.9 1194.4 394 1197.4 390 1200.9 386.4 1205.6 384.8M294.7 414.2L290.2 412 285.6 410 282.4 406.2 280.7 401.5 278.7 396.9 279.2 391.9 278 387.1 276.9 382.2 273.4 378.6 268.6 377.2 263.7 376.1 258.7 376.4 253.8 376.9M455.4 94L453.7 89.3 453.2 84.3 454.6 79.6 458.2 76 462.3 73.2 466.9 71.1 470.7 68 474.2 64.4 477.8 61 479.6 56.3 478.7 51.3 479.7 46.4 480 41.4 479.4 36.5 480.3 31.6 482.3 27 482.9 22 483.9 17.1 485.3 12.3 486.4 7.4 489.7 3.6M356 427.5L360.9 426.9 365.8 427.9 370.2 430.3 374.8 432.3 379 435 382.4 438.7 386.7 441.3 390.8 444.1M836.9 0.7L832.1 2.2 827.3 3.7 822.6 5.3 817.7 6.3 813.4 8.9 810.4 12.9M214.4 251.7L209.8 253.6 204.8 254.2 199.8 254.4 195.3 252.3 190.3 251.9 185.8 249.7 180.8 249.4 176.5 246.8 171.8 245.1 166.9 244.3 162 243.4 157.2 241.8 152.6 239.9 149.6 235.9 145.7 232.8 141.2 230.6 136.5 229 132.6 225.8 127.7 224.7M468.4 286.1L471.5 290 476.1 292.1 481 292.5 486 292.3 490.9 291.1 495.8 290.5 500.8 290.3 505.7 291.6 510.4 293.3 515.1 295 520 294.2 525 294.4M470.1 440.4L468 435.8 468.2 430.8 465.8 426.4 463.9 421.8 462.6 417 463 412 462.6 407 461.1 402.2 460.4 397.3 459.5 392.4 459 387.4 460.3 382.6 461.8 377.8 464.3 373.5 464.7 368.5 462.5 364 459.7 359.9 455.3 357.5M656.1 223.8L660 220.6 664.8 219.3 669.3 217.1 674.3 217 678.6 214.4 683 212 688 211.9 692.9 211.1 697.9 210.3 702.6 208.9M126.1 334.3L123.1 338.4 122.3 343.3 119.5 347.4 118.5 352.3 115.5 356.3 112.2 360 108.8 363.7 106.9 368.3 105.1 373M757.1 7.9L758.8 3.2 762.1 -0.6 766.7 -2.4 769.8 -6.3 773.5 -9.7 775.7 -14.2 776.1 -19.2 773.9 -23.7 770.3 -27.1 768.5 -31.8 764.6 -35 761.5 -38.9 758.8 -43.1 757.6 -48 757.9 -53 760 -57.5 762.7 -61.7 764.2 -66.4 766.7 -70.8M243 322.8L247.5 320.5 251.1 317.1 253.4 312.7 255 307.9 255.4 302.9M118.9 463.7L120.9 468.3 124.1 472.1 127.6 475.7 129.9 480.1 132.1 484.6 131.9 489.6 133.4 494.3 135.7 498.8 138.3 503.1 141.8 506.7 145.2 510.4 148.2 514.3 149 519.3 147.7 524.1 146.4 528.9 143 532.6 139.1 535.7 134.2 537M914.3 316.4L909.8 318.5 904.9 319.6 899.9 319.6 894.9 320 890.4 322.2 886.2 324.9 881.5 326.5 877.1 328.8 873.8 332.6 870.8 336.6 867 339.8 862.1 340.8 857.1 340.3 852.3 341.6 848 344.1 843.3 345.9 839.1 348.7 835.6 352.2M1054.5 657.8L1053.4 662.7 1054.1 667.7 1056.5 672 1056.3 677 1054.5 681.7 1054.8 686.7 1054.3 691.7 1056.1 696.4 1059.1 700.4 1061.2 704.9 1064.5 708.6 1069 710.7 1073.4 713.2M1194.1 407.8L1193.7 412.8 1192.1 417.5 1188.9 421.4 1185.9 425.4 1182.9 429.3 1181.3 434.1 1178.9 438.5 1175.5 442.2 1173.9 446.9 1172.2 451.6 1168.4 454.8 1164.8 458.3 1161.6 462.2 1158.7 466.3 1155.3 469.9 1150.7 471.8 1145.7 472.3 1140.8 471.3 1135.8 470.8 1131.2 468.9 1126.2 469.6M967.6 403.7L969 398.9 971.9 394.8 973.1 390 972.7 385 971.2 380.2 971.3 375.2 969.2 370.7 969.4 365.7 967.4 361.1 964 357.4 960 354.4 958 349.8 955 345.8 950.9 343 946 341.8 941.5 339.7 936.5 340.3 932.1 342.7 927.1 342.8M792.1 285.8L789.2 281.7 787.9 276.8 784.6 273.1 783.2 268.3 782.2 263.4 783.6 258.6 787.3 255.3 790.5 251.4 791.7 246.6 791.5 241.6 792.1 236.6 794.3 232.2 798.6 229.5 801.5 225.4 802.2 220.4 802.7 215.5 803.6 210.6 806.1 206.2 808.2 201.7 808.3 196.7 809.3 191.8M1200.2 549.6L1200.4 554.6 1201.1 559.6 1203.6 563.9 1204.2 568.9 1202.9 573.7 1199.3 577.1 1194.6 579 1189.6 578.9M650.8 652.7L655.7 653.5 660.2 655.6 665.2 656 670.2 656.4 675 655 680 655.3M237.9 104.7L239.6 109.4 241.3 114.1 240.6 119 242.3 123.7 245.3 127.7 249.9 129.7 254.6 131.3 258.8 134.1 261.4 138.4 265.2 141.6 269.1 144.8 271.2 149.3 271.1 154.3 272 159.2 270.9 164.1 270.4 169 269.7 174 266.6 177.9 262.4 180.7M959.5 658.8L957.5 654.2 956.6 649.3 953.6 645.2 951 641 946.6 638.6 941.7 637.6 936.9 638.9 931.9 639.2 926.9 639.3 922.3 637.4 917.8 635.1 913.9 632.1 911.8 627.5 911.7 622.5 913.5 617.8 915.9 613.4 918.7 609.3 922.9 606.6M855.7 142.1L851.5 139.3 846.6 138.6 841.8 137.2 838 133.9 833.8 131.2 829.5 128.7 824.5 127.9 820.6 124.8 817.5 120.9 813.3 118.1 808.9 115.8 804.7 113.1 800.8 109.9 796.2 108.1 791.6 106.2 787.2 103.7 784.1 99.8 780.7 96.1 779.2 91.3 776 87.6 774.2 82.9M555.9 432.1L551.5 434.4 547 436.7 542.3 438.5 538.8 442 535.3 445.6 530.9 448 528.4 452.3 524.2 455.1 519.5 456.7 516.1 460.4 511.3 461.9 507.5 465.2M166.6 597.6L171.6 597.8 176.5 598.7 180.6 601.6 183.6 605.6 187.6 608.5 190.9 612.3 195.4 614.6 200.4 614.8 205.1 616.2 209.7 618.4 213.1 622 215.6 626.4 218.6 630.3 222.4 633.7 227 635.5 230.1 639.5 231.9 644.1 233.9 648.7 237.2 652.5 241.3 655.3M873.8 301.9L869.2 300 864.2 300 859.8 302.5 856.2 306 851.9 308.5 848.9 312.5 845 315.6 841.2 318.9 837 321.6 832.2 323.1 827.2 323.2 822.6 321.2 819.3 317.5 816.7 313.2 816.6 308.2 816.1 303.2 815.9 298.2 813.5 293.8 812.8 288.9M243.4 260.3L238.4 260.9 233.7 259.3 228.7 259.5 223.8 260.5 219.8 263.5 215.6 266.2 210.6 266.3M1069.3 285.8L1073.1 282.6 1077.7 280.5 1081 276.8 1083.4 272.4 1084.9 267.6 1086.9 263 1090.4 259.5 1092.2 254.8 1092.1 249.8 1089.7 245.4 1086.3 241.8 1082.5 238.5 1080.9 233.7 1079.4 229M305.6 282.1L303.7 277.4 300.3 273.7 297 270 295.1 265.4 295.2 260.4 293.2 255.8 290.6 251.5M58.8 642.6L63.5 640.9 68.4 639.8 72.7 637.3 77.4 635.5 81.6 632.8 83.9 628.3 83.6 623.3 81.1 619 78.6 614.7 74.5 611.8 69.7 610.4 65.1 608.3 60.2 607.7 55.4 609.3 50.4 609 45.4 609.1 40.4 609.3 35.5 610.1 30.5 609.7 25.5 609.8 20.6 608.9M987.8 44.8L984.1 41.4 979.7 39.1 974.7 39.1 969.8 40 964.9 40.9 960.4 43.1 957.3 47 953.3 50 951.3 54.6 949.3 59.2 949.5 64.2 947.1 68.6 944.2 72.6 940.8 76.3M481.3 110.4L482.5 105.5 484.8 101.1 487.8 97.1 492.2 94.6 494.7 90.3 498.9 87.5 503.2 85 508.2 84.8M10.7 45.7L13.8 41.8 16.9 37.9 21.4 35.6 25.2 32.4 28.5 28.6 32.1 25.2 35.6 21.6 37.5 16.9 38.5 12.1 41.1 7.8 43 3.1 45.2 -1.3 46 -6.3M993.1 591.9L995.5 587.5 995.9 582.5 995.8 577.5 997 572.7 997.4 567.7 1000.3 563.7 1004.6 561 1006.8 556.5 1010.7 553.4 1014.5 550.1 1016.1 545.4 1018.5 541 1019.8 536.2 1022.8 532.2 1025.4 527.9M1035.1 389.4L1036.6 394.2 1037.1 399.1 1035.8 404 1036.6 408.9 1039.9 412.7 1043 416.6 1043.7 421.6M792.9 542.3L789.6 538.6 785.9 535.2 782.5 531.6 779.4 527.6 777.7 522.9 778.4 518 780.4 513.4 783.6 509.6M1208.7 99.9L1213.2 97.9 1218.2 97.9 1222.6 95.4 1226.6 92.5 1231.1 90.2 1236 89.1 1240.9 89.9 1245.2 92.6 1249.8 94.5 1253.5 97.8 1258.2 99.6 1263.2 99.3 1268.1 98.4 1272.9 99.6M1172.2 460.7L1169.5 456.4 1166 452.9 1164.4 448.1 1163.3 443.3 1163.4 438.3M783 478.7L783.8 483.6 782.6 488.5 781.8 493.4 781.1 498.4 778.4 502.5 774.7 506 771.6 509.9 769.5 514.4 766.1 518.1 764 522.6 762.7 527.4M673 407.4L676.3 403.7 681 401.9 685.6 400 690.3 398.2 695.3 398 700.1 399.1 704.2 402 709.2 402.8 713.8 404.6 718.8 405.4 723.6 404.3 728.6 404.6M658.7 460.7L654.5 463.4 649.6 464.6 644.6 464.9 639.8 463.6 635.2 461.7 630.2 461 625.4 459.6 620.4 459.3 615.4 459.4 610.5 460.1 605.5 459.6 600.9 461.4 596.4 463.6M857.5 658.4L852.8 656.5 848.8 653.5 845 650.3 841.4 646.8 838.1 643.1 833.8 640.5 829.1 638.6 824.1 638.4 819.3 637.4 814.6 635.7 809.6 635.5 804.6 634.7M364.2 28.3L369.1 27.7 373.4 25.1 376.5 21.2 381 19.1 385.5 16.9 390.4 15.6 395.4 15.5 399.8 17.8 404.7 18.6 408.7 21.7 413.3 23.7 416.9 27.1 421.7 28.4 426.1 30.8 431 31.8 435.3 34.3 439.6 37 442.8 40.8M522.6 297.2L525.2 301.5 528.5 305.2 532 308.8 536.7 310.5 541.7 310.6 546.6 309.7M1071.9 199.4L1066.9 198.7 1062 199.5 1058 202.5 1054.3 205.9 1049.5 207.4 1044.5 207.3 1039.6 207.6 1034.6 207.7 1029.7 209 1024.7 208.7 1020.1 210.5 1016.2 213.7 1012 216.4 1007 216.8 1003 219.8 1000.6 224.2 996.5 227.1 992.5 230 990.2 234.4 987.8 238.8 987.1 243.8 985.4 248.5M432.9 618.9L433 623.9 435.2 628.3 435.9 633.3 436.9 638.2 436.2 643.1 437.5 648 439.3 652.6 440.5 657.5 439.3 662.3 436.5 666.5 432.9 670 430.8 674.5 428.2 678.7 424.9 682.5 423.3 687.3 422.8 692.3 423 697.2M49.8 301.8L47.4 297.5 43.3 294.6 40.6 290.4 36.6 287.5 31.9 285.7 27.1 284.3 22.2 285.4M351.7 22.4L354.4 26.6 357.7 30.4 361.6 33.5 366.4 34.9 371.4 35.7 376.4 35.4 381.4 35.8 385.7 38.3 389.1 41.9 390.3 46.8 390.5 51.8 390 56.7 391.8 61.4 392.3 66.4 393 71.3 394.9 76 395.8 80.9 396.4 85.9M480.6 388.8L475.6 388.4 470.9 389.9 467 393.1 463.9 397 462.5 401.8 463.5 406.7 465.6 411.2 466.3 416.2 466.9 421.2 468 426M486.3 500L481.8 502.1 476.8 501.9 471.9 500.7 467.3 498.7 462.6 497.1 457.6 497.2M87.5 56.2L92.3 54.9 97.2 55.9 100.9 59.2 103.8 63.3 107.4 66.8 110.1 71 112.3 75.4 115.1 79.6 117.6 83.9 119.8 88.4 123.5 91.8 128.4 93 133.4 93.5M1178 44L1178.2 39 1178 34 1177.9 29 1178.1 24 1180.5 19.6 1182.6 15.1 1182.7 10.1 1183.2 5.1M1160.4 202.5L1165.3 203.4 1170 201.7 1175 201.4 1180 201.4 1184.7 202.9 1188.2 206.5 1190.4 211 1190.9 216 1193.4 220.3 1197.2 223.5 1201.6 225.9 1206.6 226.4 1211.4 227.8 1216.3 227.2 1221.1 228.7 1224.6 232.3 1227.8 236.1 1229.7 240.8 1228.9 245.7M1114.5 605.2L1113.7 600.2 1114.1 595.2 1114.6 590.3 1114.6 585.3 1112.8 580.6M959.3 275.7L960.8 270.9 961.9 266 962.8 261.1 961.9 256.2 959 252.1 957.5 247.4 957.5 242.4 957.4 237.4 959.2 232.7 961.6 228.3M982.1 622.5L980.2 627.1 976.7 630.7 975.5 635.5 974 640.3 970.9 644.3 968.3 648.5 965.1 652.3 961.1 655.4 956.4 657.1 952 659.3 947 659 942 658.7 937 658.5M139.4 501.7L141.9 497.4 144.7 493.2 148.8 490.3 152.4 486.9 157.2 485.3 161.6 483 166.6 482.5 171 484.8 176 485.1 180.4 487.5M980.5 249.4L979.4 254.3 976.2 258.1 972.8 261.8 968.3 264 963.3 263.6 958.4 264.2 953.4 265 948.5 264 943.6 262.8 939.7 259.7 935.5 257 932.3 253.1 928.9 249.5 927.6 244.7M242 110.6L244.6 106.4 246.2 101.6 249 97.5 250.6 92.7 251.4 87.8 250.2 82.9 248.2 78.4 248.8 73.4 250.9 68.9 251.3 63.9 251.5 58.9 251.1 53.9 250.8 48.9 251.5 44 251 39M894.9 195.8L895.5 190.9 894.6 186 895 181 897.2 176.5 898.7 171.7 902.1 168.1 904.8 163.9 906.2 159.1 908.1 154.4 907.9 149.4 905.2 145.2 902.9 140.7M734.3 508.1L730.4 505 726.8 501.6 723.7 497.6 721.5 493.1 721.8 488.1 720.4 483.3 717.5 479.3 716.4 474.4M254.5 478.4L250.7 475.1 245.8 474.1 241.5 471.6 238 468 233.7 465.5M211.4 572.9L206.6 574.3 202.3 576.8 198.2 579.7 194.6 583.1 190.1 585.4 185.2 586.1 180.3 586.9 175.6 588.6 170.6 589.2 165.8 587.7 161.9 584.6 157.9 581.5 153.9 578.6 150.9 574.6 147.4 571.1 143.6 567.8 139.2 565.4 136.6 561.1 133.8 557 130.4 553.3 125.6 551.8M319.4 277.7L323.1 281.1 326.6 284.6 330.5 287.7 332.4 292.3 334.1 297 337.8 300.4 340.4 304.6 343.2 308.8 346.9 312.2 350.6 315.5 354.9 318 357.9 322.1 359.5 326.8 359.4 331.8 357.2 336.2M501.8 304.9L500 309.6 499.2 314.5 498.1 319.4 496.8 324.2 494.5 328.7 494.4 333.7 492.6 338.3M493.8 496.6L493.5 491.6 495.6 487 498.5 482.9 502.4 479.8 504.3 475.2 507.8 471.6 511.4 468.1 516.2 466.8 520.7 464.6 524.5 461.4 526.8 456.9 529 452.5 531.9 448.4 532.4 443.4 530.4 438.8 527 435.2 523.2 431.9 519.2 429 516.8 424.6M247.2 120.9L251.6 123.2 254.9 127 259.7 128.5 264 131 269 131.4 273.4 133.8 278 135.8 281.3 139.5 285.6 142.1 290.6 142.8 295.3 144.4 300.3 144.4 304.7 146.7 308.5 150 313.3 151.4 317.5 154.1 321.5 157.1M1038.2 65.1L1042.3 62.3 1045.4 58.3 1047.2 53.7 1050.9 50.3 1054.6 47 1058.9 44.4 1063.1 41.6 1067.1 38.7 1071.1 35.7 1075.9 34.2 1080.9 34.7 1085.9 34.3 1090.3 32 1094.9 30 1098.7 26.8 1103.2 24.6 1106.8 21.1 1108.2 16.3 1111.7 12.7 1113.1 7.9 1114.2 3.1 1116.9 -1.2M934.5 346.3L938.8 343.9 943.6 342.4 948.5 343.6 952.4 346.8 957.3 347.8 962.2 347 967.1 345.9 971.6 343.7 975.7 340.9M759.3 623.9L760.8 619.1 764.4 615.6 768.8 613.3 772.7 610.2 775 605.7 779.1 602.9 783.5 600.5 788.3 599.4 793.3 598.5 797.8 596.4 802.8 596.1 807.5 597.7M942.4 554.4L939.6 550.2 935.4 547.6 931.3 544.8 927.2 541.8 923.2 538.9 918.4 537.4 913.8 535.4 910.6 531.5 908.3 527.1 907.4 522.2 905.3 517.7 901.3 514.7 897.6 511.3 894.7 507.2M712.8 117.5L715.6 121.7 719.7 124.5 724.5 126 728.1 129.5 729.9 134.1 732.6 138.3 736.5 141.5M5.8 515.7L0.8 516.2 -3.2 519.1 -7.3 522 -11.8 524.3 -15.2 528 -18.6 531.6 -22.3 534.9 -27.2 536.2 -31.8 538.2 -36.6 539.5 -41.6 539 -46.5 538.2 -51.4 537.2 -55.7 534.6 -60.5 533.4M554.6 428.4L557.4 432.5 558.1 437.5 558.3 442.5 560.7 446.9 561.7 451.8 560.2 456.5 557 460.4 556.2 465.3 555.1 470.2 552.3 474.3 548.2 477.1 545.8 481.5 541.9 484.6 538.1 488M666.6 585.3L664.3 580.9 660.9 577.2 658.4 572.8 658.1 567.8 656.3 563.2 652.9 559.5 648.4 557.3 643.4 557.5 638.6 556.1M143.4 158.1L139.7 161.5 137.1 165.8 132.9 168.6 130.8 173.1 129.8 178 127 182.1 126.5 187.1M638.8 107.9L635.1 104.5 633.2 99.9 630.8 95.5 626.6 92.7 622.4 90.1 619.6 85.9 615.9 82.6 614 78 613.2 73.1 610.5 68.9M493.2 119.1L491.1 114.5 488.9 110 489.2 105 486.9 100.6 483.7 96.8 481.7 92.2M1107.9 336.8L1108.8 331.9 1108.8 326.9 1110.3 322.2 1110.6 317.2 1112.5 312.5 1112.5 307.5 1112.3 302.6 1109.8 298.2 1106.3 294.6 1103.7 290.4 1101.6 285.9 1098.9 281.6 1097.7 276.8M152.1 196.9L155.5 193.3 157.7 188.8 161.5 185.5 166.2 183.8 171.1 182.8 176 181.7 180.2 179 185.1 178.1M457 170.8L455.9 165.9 456.6 160.9 459.3 156.7 463.5 154 468.2 152.2 471.3 148.3 475.7 145.9M607.6 419.3L602.7 418.6 598.7 415.6 595.2 412 590.8 409.7 587.4 406 585.4 401.4 582 397.8 579.4 393.5 576.9 389.1 572.6 386.5 568.2 384.3 564.3 381.1 560.5 377.9 557.3 374.1 554.6 369.9 553.4 365 550.7 360.8 547 357.4 544.3 353.2 543.9 348.2 541 344.1 538.2 340M1222.1 517.7L1225.6 514.1 1229.9 511.5 1233 507.6 1234.6 502.9 1235.2 497.9 1233.5 493.2 1232.9 488.2 1233.9 483.3 1234.6 478.4 1234.2 473.4 1236.3 468.9M487.5 456.5L483.7 453.2 481.3 448.8 477.2 446 473.6 442.5 468.9 440.6 465.6 436.8 461.8 433.6 457.4 431.3 453.2 428.6 449.3 425.4 445 422.8M908 483.6L905.9 479.1 904.9 474.2 901.6 470.4 897.1 468.3 892.5 466.1 889.1 462.5 885.7 458.8 881.5 456 877 454 874 450 871.7 445.6 867.6 442.7 864 439.2 862.5 434.4 859.1 430.7 855.3 427.6 850.4 426.6 845.6 428.1 840.8 429.6 835.8 429.8 830.9 430.4M723.6 513L723.5 518 724.7 522.8 724.6 527.8 724.7 532.8 726.3 537.6 726.4 542.6 726.4 547.6 728.3 552.2 729.3 557.1 728.8 562.1 728.6 567.1 728.7 572.1 730 576.9 733.4 580.6 735.5 585.1 739 588.6 742.1 592.6 746.3 595.3 748.8 599.6M211.8 208.8L216.6 210.5 221.5 209.6 226.3 208.2 230 204.8 234.9 203.6 239.8 203.9 244.8 204.4 249.7 203.5 254 200.9 257.6 197.4 261.1 193.8 265.9 192.3 270.9 192.5 275 195.2 279.3 197.9 283.2 201M986.5 213.4L990.5 216.5 993.1 220.7 993.6 225.7 993.7 230.7 993.3 235.7 994.1 240.6 994.5 245.6M989.6 235L986.1 238.5 981.2 239.8 976.3 240.2 971.6 238.3 966.7 238M989.6 483.7L989.9 478.8 989.5 473.8 991.4 469.1 993.9 464.8 998.2 462.2 1000.5 457.8 1002.4 453.1 1003.7 448.3 1005.9 443.8 1008.1 439.3 1009.4 434.5 1011.7 430.1 1015.9 427.3M834.7 215.1L830.1 217 825.2 217.9 821 220.7 816.7 223.3 811.8 224.1 807.2 226.1 802.3 226.6 797.3 225.8 792.5 227.2 788.6 230.3 785.2 233.9 782.9 238.4M206.5 385.5L208.8 381 211.7 376.9 216 374.5 219.7 371.1 224.5 369.5 228.1 366 232.9 364.7 236.7 361.5 241.6 360.6M1015.7 601.4L1018.7 597.4 1023.3 595.4 1028 593.7 1032 590.6 1034.3 586.2 1037.2 582.1 1038.6 577.3 1042.4 574 1046.1 570.7 1050.6 568.5 1054.1 564.9 1057.9 561.6 1062.7 560.4 1066.7 557.4 1071.3 555.4 1076.2 554.5 1081.2 555.3 1086.1 555.7 1090.3 558.4 1094.7 560.8 1099.7 561 1104.6 560M770.6 227.7L774.6 230.7 777.7 234.6 781.6 237.7 784.6 241.7 788.6 244.7 792.8 247.3 797.5 249.1 802.3 250.5 807.2 249.6 812 251 816.9 249.8 821.9 249.6 826.7 248.5 830.9 245.7 834.9 242.7 838 238.8 841.9 235.7 844.7 231.5M636.9 331.3L633.2 327.9 629.3 324.7 624.7 322.9 621 319.6 617.5 315.9 612.7 314.5 608 312.9 603 312.5 598 312.5 593.1 313.2 588.1 313.2 583.3 311.5 578.6 309.9 575.2 306.2 571.7 302.7 567.5 300 563.2 297.4 558.4 296M1080.9 521.8L1078.1 517.6 1075.1 513.6 1074 508.8 1075.5 504 1074.5 499.1 1075.2 494.1 1073.6 489.4 1074.2 484.4 1077.1 480.4 1079.3 475.8 1081.6 471.4 1081.5 466.4 1080.3 461.6M348.4 121.4L345.1 117.6 342.4 113.4 339.2 109.5 337.3 104.9 336.5 100M107.9 123.2L105.4 127.5 101.8 131 98.8 135 95.5 138.8 92.3 142.6 91.4 147.5 91.5 152.5 93.2 157.2 96.7 160.7 98.5 165.4 101.9 169 106.5 171 111.3 172.5 116 174.2M1121.1 165.4L1117.4 162 1113.9 158.4 1109.2 156.7 1105 153.9 1100.7 151.4 1096.9 148.2 1092 147 1087.1 146.5M866.2 626.4L861.7 628.5 857.3 630.8 852.5 632.4 847.8 634.1 842.8 634 837.8 634.1 833.4 636.5 829.4 639.5 824.5 640.1 819.9 642.1 815 643.2 810.1 644.3 805.1 644.8 800.6 642.8 795.7 641.7 790.7 641.4M1030.5 559L1030.8 564 1032.4 568.7 1032.8 573.7 1032.3 578.7 1032 583.7 1034.1 588.2 1035.7 593M285.3 600.6L289.5 597.9 293.4 594.8 297.4 591.9 301.9 589.7 306.7 588 311.2 585.9 315.2 582.9 319.9 581.3 324.9 580.7 329.4 578.5 334.4 578.3 339.4 578 343.6 575.3 347.4 572.1 349.7 567.6M401.7 384.3L396.7 384 392.6 381.1 387.8 379.6 383 378.4 379 375.5 374.7 372.9 369.8 371.9 364.9 370.5 361.3 367.1 356.8 365.1 353 361.8 349.2 358.5 345.9 354.8 343.1 350.6 342.5 345.7 343.5 340.8 346.6 336.9 350.1 333.3 354.8 331.6M900.5 311.9L895.8 310.3 891.7 307.4 886.9 305.9 882 305 877.1 303.8M60.6 474.4L65.5 473.8 69.9 471.3 72.9 467.3 76.1 463.5 80 460.3 82.5 456 82.9 451 84.5 446.3 87.6 442.4 88.5 437.4 88.8 432.4 87.2 427.7 84 423.8 82.5 419.1M420.8 227.3L420.6 222.3 422.3 217.6 421.6 212.7 421.3 207.7 422.5 202.9 424.4 198.2 423.6 193.3 422.3 188.5 422.2 183.5 424 178.8 426.6 174.5 430.4 171.3 433.5 167.3M790.5 397.3L795.1 399.3 799.6 401.3 804.4 402.9 809.3 403.8 814.2 402.8 818.9 404.3 823.8 405.6 828.7 404.8 833.7 404.3 838.7 404.5 843.2 402.5 848.1 401.2 853.1 400.9 858 401.7M317 618.5L312.1 619 307.2 617.9 302.2 617.3 297.5 615.7 292.6 616.6 287.7 617.7 283.9 620.9 280.1 624.3 275.5 626.1 270.5 625.3 266.1 622.9 261.6 620.8 257.8 617.5 254.4 613.8 250.1 611.3 245.3 610 240.5 608.5 236 606.3 231.1 605.2 227 602.4M332.9 180.2L329.5 183.9 324.8 185.7 319.8 185.8 314.9 186.6 310.1 185.4 305.3 186.9 300.9 189.2 296.6 191.7 293.3 195.6 288.9 198 284.8 200.7M527.8 520.2L526.1 515.5 524.9 510.7 523.4 505.9 524.6 501 526.1 496.3 528 491.6 529.6 486.9 529.2 481.9 528.9 476.9 530.2 472.1 533.8 468.6 537.6 465.3 542.1 463.2 547.1 463.1 552.1 463.7 556.8 465.4 560 469.2 563.5 472.8M1044.3 664.3L1045.6 669.1 1045.9 674.1 1048.7 678.2 1049.4 683.2 1052.4 687.2 1055.5 691.1 1058.4 695.2 1058.6 700.2 1059.5 705.1 1060.3 710 1061.8 714.8 1064.4 719.1 1066.9 723.4 1067.9 728.3 1070.6 732.5 1072.7 737.1 1073.6 742M624.6 104.6L622.9 109.3 623.8 114.2 623.2 119.2 623.1 124.2 620.5 128.5 616.4 131.2 611.7 132.9 608.4 136.7M240.2 306.6L236 303.9 231.7 301.3 226.8 300.3 222 298.9 217 298.6 212.1 297.5 207.3 296.1 202.4 296.9 197.5 297.6 192.5 297.6 188.2 300.2 183.2 300.5M150.8 259.6L146.3 257.4 143.5 253.3 140.4 249.4 137.7 245.1 134.7 241.1 130.2 239 125.8 236.6 122.6 232.8 121.3 228 122.6 223.2 124.4 218.5M246.9 442L243.3 438.5 240.9 434.1 238.3 429.8 237 425 237.6 420 240.4 415.9 242.7 411.4 244.6 406.8 244.3 401.8 243.2 396.9 241.9 392.1 239.4 387.8 238.7 382.9 237.1 378.1 235.8 373.3 232.8 369.3 230.5 364.8 230.4 359.8 228.6 355.2 226 350.9 221.9 348.1M171.6 332.1L174.4 336.2 176.5 340.8 177.5 345.7 175.8 350.4 176.5 355.3 177.6 360.2 179.3 364.9 182.8 368.5 185.7 372.6M83.3 132.9L85.4 137.4 84.8 142.4 83 147 81.8 151.9 78.8 155.9 75.1 159.3 71.5 162.7 69.6 167.4M19.7 496.2L15.2 494.1 10.4 492.7 5.4 492.9 0.9 495.1 -4.1 495.1 -9.1 495 -14 493.9 -19 494.2 -24 494 -28.5 491.9 -33.3 490.3 -37.7 488 -42.7 487.9 -47.1 485.6 -52 484.2M62 523.6L60 528.1 56.8 532 52.5 534.5 49.9 538.8 46.9 542.8 44.3 547.1 44.3 552.1 45.3 557 48 561.2 49.5 566 53.2 569.3 55.5 573.8 56.6 578.7 56.4 583.7 57.9 588.4 58.7 593.4 56.7 598 56.6 603 54 607.3 53.1 612.2 51.8 617 53.2 621.8M586 167.2L586.2 162.2 588.1 157.6 592 154.5 594 149.9 597.6 146.4 602.3 144.8 605.9 141.3 610.6 139.5 615.6 139.3 620.5 138.6M281.1 87.8L278.3 83.7 273.9 81.4 269 80.2 264 80.9 259.3 82.6 254.4 83.5 249.6 82 245.6 79 240.7 78 235.8 78.6 230.8 79.3 225.9 78.2 221.1 79.6 216.1 79.1 211.3 78 207.5 74.8 203.2 72.2 198.3 71.2M645.4 649.3L640.4 648.5 635.4 648.4 630.4 648.5 625.9 650.6 621.8 653.5 618.2 656.9 614.4 660.2 610.3 663.1 607.5 667.2 604.6 671.3 601.8 675.4 597.8 678.4 593.7 681.3 591.3 685.7M973.7 10.4L978.1 8.1 983.1 7.7 987.9 6.4 992.6 4.6 997.3 3 1002.3 3.4 1006.9 1.4 1011.9 1.6 1016.7 3M545.3 111.3L540.4 110.4 535.7 112.2 531.9 115.5 529.5 119.8 525.7 123.1 523.5 127.6 520.2 131.3 515.4 132.8 511.7 136.2 508.6 140.1 504.4 142.8 500.6 146.1 496 148.1 492.6 151.7 490.4 156.2 488.7 160.9 484.9 164.1 482.6 168.6 482.6 173.6M12 471.4L16.7 472.8 21.7 472.8 26.2 470.5 30.3 467.7 32.5 463.2 32.3 458.2 32.9 453.3 35.1 448.8 35.2 443.8 35.2 438.8 34.1 433.9 31.6 429.6 29.1 425.2 26.1 421.3 23.9 416.8 21.2 412.5M30.8 75.9L25.8 76.5 20.9 75.8 16.2 77.6 11.2 77.3 6.3 76.2 1.6 77.8 -3.3 79.1 -8 80.5 -12 83.6 -16.8 85.1 -21.5 86.6 -26.4 85.5 -31.3 84.2 -35 80.8 -38.8 77.6 -43 75 -47.7 73.2 -52.6 74M237.8 272.6L240.7 268.6 243.8 264.7 247.7 261.5 249.5 256.8 249.3 251.8 248.9 246.8 249.3 241.9 247.8 237.1 244.8 233.1 242.8 228.5 239.5 224.7 235.7 221.4 232 218.2 227.1 217.1 222.3 218.5 218.4 221.6 215.3 225.5 213.7 230.3M532.1 262L532.5 257 534.8 252.6 536.5 247.9 539.8 244.1 541.5 239.4 543 234.7 546.7 231.3 550.1 227.6 554 224.6 557.1 220.6 561.3 217.8 565.5 215.2 570.5 215.2 575.5 215 580.5 215.9 585.1 217.7 589.5 220 593.6 222.9 597.9 225.5M190.4 174.1L193.8 170.4 198.6 168.8 203.6 169.1 208.2 167.2 211.5 163.4 214.4 159.3M771.4 201L776.1 199.4 779.8 195.9 781.6 191.3 785 187.6 789.2 184.9 794.1 183.7 798.7 181.8 803.7 181.3 808.6 181.9 813.5 182.8M457.5 504.7L460.6 500.8 461.8 496 460.6 491.1 457.8 487 457.5 482 454.8 477.8 453.1 473.1 450.8 468.6 448.3 464.3 445 460.6 441.6 456.9 438.8 452.7 437.6 447.9M884.9 474.5L889.4 472.4 892.5 468.5 896.1 465 900.9 463.5 904.7 460.2 908.3 456.7 912.3 453.8 917.3 453 922.2 453.8 927.2 453.4 931.4 450.6 935.8 448.4 940.8 447.5 945.5 449.2 948.7 452.9 950.8 457.5 953.1 461.9 955.3 466.4M422.2 160L426.8 158 430.3 154.4 432.5 149.9 432 144.9 433.3 140.1 436.5 136.3M178.8 433.3L177 438 175.9 442.8 175.9 447.8 177.3 452.6 177.9 457.6 178.2 462.6 177.6 467.5 178.2 472.5 178.6 477.5 179.4 482.4M507.3 82.1L508 77.1 509 72.2 511.8 68.1 513.7 63.5 515.1 58.7 515.2 53.7 516.9 49 518.3 44.2 519.8 39.4 522.3 35.1 526.5 32.3 530.7 29.7 535 27.1 538.4 23.5 541 19.2 543.5 14.8 547.8 12.3 550.8 8.3 552.6 3.6 556.5 0.5 558.3 -4.2 557.4 -9.1M416.4 508.2L412.5 511.3 409 514.9 406.7 519.4 405.4 524.2 402.4 528.2 399 531.8 396.2 536 391.6 538.1 387.9 541.5 385.3 545.7 382.4 549.8M149.1 160.8L144.7 163.3 140.1 165.1 135.1 165.8 130.8 168.3 128.3 172.6 125.6 176.9 121.8 180.1 119.2 184.4 117.4 189.1 114.1 192.8 110 195.7 105.4 197.6 100.4 196.9 95.7 195.3 90.8 194.2 86.1 195.9 81.1 195.2 77.1 192.2 72.3 191.1 67.4 192.2 63.4 195.2 60.7 199.4M280.4 645.2L280.4 650.2 281.9 655 282.2 660 281.1 664.9 278 668.8 273.4 670.7 268.4 670.1 263.7 668.5 259.4 665.9 254.5 665 249.8 663.1 245.1 661.6 240.1 661.1 235.5 663.2 230.8 664.8 225.9 663.7 220.9 664.2 215.9 664.2 211.2 662.7 206.5 660.9M1145.7 560.8L1147.4 565.5 1150.4 569.6 1153.2 573.6 1157.5 576.2 1161 579.9 1162.5 584.6 1165.9 588.3 1169.7 591.5 1173.5 594.8 1176 599.1 1179.9 602.2 1181.8 606.9 1184.1 611.3 1187.5 615 1189.3 619.6 1190 624.6 1189.2 629.5M821.7 209L817 207.3 812.2 206 808.3 202.9 803.4 201.8 798.5 200.7 793.5 200.9 788.5 200.4 783.8 201.9 778.8 202.3 774.2 200.4 769.2 200.7 764.2 200 759.4 201 754.9 203.3 750 204.1 745.3 205.9 740.4 207.1 736.1 209.5M593.7 597.1L597.9 594.4 602.5 592.5 606 588.9 610.7 587.1 614 583.3 615 578.4 613.4 573.7 613.3 568.7M1177.3 666.2L1179.1 670.9 1178.9 675.9 1177.8 680.7 1174.8 684.7 1171.8 688.8 1167.7 691.6 1165.2 695.9 1164.5 700.9 1163 705.7 1163 710.7 1160.4 715 1159.7 719.9 1160.1 724.9 1159.4 729.9 1158.6 734.8 1155.3 738.6 1150.7 740.5 1146 742.3 1141 742.4M403.3 614.7L404.7 609.9 407.4 605.7 407.9 600.7 408.7 595.8 407.1 591 406 586.2 402.7 582.4 401 577.7 398.1 573.6 394.7 570 392.9 565.3 393.2 560.3 391.5 555.6 388.4 551.6 385.2 547.8 381.4 544.5 379.9 539.8M178.4 247.1L183 249 186 253.1 189.7 256.4 194.6 257.4 198.5 260.6 201.8 264.2 202.9 269.1 205.9 273.1 208.7 277.3 212 281M873.1 25.2L872.6 30.2 872 35.1 873.6 39.9 875.8 44.4 879.8 47.3 883.3 50.9 884.5 55.8 887.2 60M1218.5 47.3L1218.1 42.3 1218.8 37.4 1221.8 33.4 1225.5 30 1230.2 28.2M483.4 667.6L479.3 664.8 476.6 660.5 473.3 656.8 470 653 465.8 650.3 463.5 645.8 463.5 640.8 463.3 635.8 461.2 631.3 457.5 628 454.9 623.7 453.6 618.9M959.6 220.9L960 225.8 962.2 230.3 963.1 235.2 965.8 239.4 970 242.1 974.5 244.3 978.4 247.4 982.7 250 987.6 251.2 992.5 250.8 996.9 248.4 1000 244.5 1001.4 239.7 1003.8 235.3 1006.9 231.4 1011.5 229.4M964.9 327.6L966.8 323 968 318.1 971.2 314.2 973.6 309.9 974.4 304.9 975.1 300 973.7 295.2 973.9 290.2 972.4 285.5 969.9 281.1 966.9 277.1 962.3 275.1 959 271.4 954.6 269.1 949.6 268.9 944.6 268.2M1186 550.1L1187.9 554.7 1189.4 559.5 1191.6 564 1195.5 567.1 1200.3 568.7 1203.5 572.5 1206 576.8 1208.4 581.2 1212.6 583.8 1216.3 587.2 1220.6 589.9 1224.7 592.7 1229.6 593.4 1234.6 592.9 1239 590.5 1243.3 588 1247.9 586 1251.8 582.9 1254.2 578.5M778.2 279.3L776.7 274.5 776.4 269.5 778.4 265 781.2 260.9 785.8 258.8 788.7 254.7 789.8 249.8 788.3 245 787.1 240.2 788.3 235.3 787.2 230.4 784.1 226.5 780.8 222.8 779.4 218 779.6 213M650 195.1L650.2 200.1 649.4 205 651 209.8 652.3 214.6 653.9 219.3 653 224.3 649.8 228.1 647.2 232.4 646.4 237.3 643.3 241.2 642.4 246.2 644 250.9 645.8 255.6 649.5 258.9 652.7 262.8 654.2 267.6 658 270.8 660.9 274.9 664 278.9M337.9 57.5L340.9 61.5 343.6 65.6 347.9 68.2 350.7 72.4 355.1 74.8M804.7 221.8L809.2 224 813.4 226.7 817.5 229.5 821.5 232.6 826.3 234 831.2 233.8 836 232.3 839.5 228.7 843.6 225.9 846.5 221.8 849.9 218.1 851.4 213.3 851.3 208.3 852.1 203.4 851.9 198.4 849.4 194.1 848.5 189.2 849.9 184.4 850.4 179.4 853.3 175.4M1187 4.1L1187 -0.9 1187.8 -5.9 1190.1 -10.3 1192.7 -14.5 1195.2 -18.9 1198.1 -23 1201.3 -26.8 1204.8 -30.4M358.6 137.2L361.9 133.6 363.1 128.7 366.4 124.9 371.1 123.3 374.8 120 376.3 115.2 378.7 110.9 381 106.4 383.5 102.1 385.6 97.5 385.1 92.6 382.5 88.3 378.5 85.2 375.2 81.5M1115.7 153.2L1111.1 155.2 1106.1 154.9 1101.4 153.2 1097.7 149.9 1094 146.4 1089.3 144.8 1084.3 144.2 1079.3 144 1074.9 146.3 1071.5 150 1067.8 153.4 1063.2 155.2 1058.7 157.4 1054 159.3 1049.1 160.3 1044.1 160.6 1039.3 159.3 1034.4 160.4 1029.5 159.7 1024.5 159 1019.6 158.5 1015.1 156.2M362.9 348L358.1 349.5 354.1 352.5 350.3 355.7 347.3 359.7 344.3 363.7 342.1 368.2 339.1 372.2 335.5 375.7 330.7 377.1 325.7 377.8 320.7 378M353.8 288.2L355.5 283.5 357.7 278.9 358.5 274 360.7 269.5 363.3 265.2 364.7 260.4M794.9 669.9L797.3 674.3 799.7 678.7 799.8 683.7 798 688.4 794.4 691.9 790.3 694.7 785.4 695.5 780.7 697.3 775.8 696.5 770.9 695.4 766.8 692.5 762.5 689.9 757.5 689.8 752.8 691.5 747.9 691.9 742.9 692.5 738 693.5 733 693.4 728 693.9 723.2 692.7 718.7 690.4M555.1 308.8L550.4 307.1 545.5 308.1 540.7 309.5 537.1 313 535.3 317.7 534.7 322.6 533.1 327.4 532.9 332.4 533.7 337.3 533.5 342.3 533.2 347.3 530.6 351.5 530.2 356.5 528.9 361.3 527 366 524.6 370.4 523.8 375.3 525 380.1 525.8 385.1 523.9 389.7 523.6 394.7 525.7 399.3M897.2 403.4L893.6 406.8 892.2 411.6 890.7 416.4 890.9 421.4 890.3 426.3 887.8 430.6 883.6 433.4 880.5 437.3 878.9 442.1 877.3 446.8 875.4 451.4 875.7 456.4 876.3 461.4 875.1 466.2 871.8 469.9 868.3 473.6 866.3 478.2 865.5 483.1 862.4 487 858.9 490.6 857 495.2 852.9 498.1M849.5 72L844.8 73.7 839.9 72.8 835.9 69.8 830.9 69.2 826 70 821.1 71 816.1 70.6M1017.2 170.1L1018.7 174.8 1017.7 179.7 1017.3 184.7 1018.9 189.5 1018.9 194.5 1020.6 199.2 1020.7 204.2 1021.2 209.2 1022.4 214 1023 219 1021.4 223.7 1018 227.4 1013.7 230 1009.3 232.3 1004.3 232 999.3 231.6M481.3 51.8L480.1 56.6 479 61.5 476.9 66 473.1 69.3 470.3 73.4 466.3 76.4 462.6 79.8 458.2 82.2 453.3 82.8M1131.8 271.9L1128.4 268.3 1126.7 263.6 1127.1 258.6 1130 254.5 1130.7 249.6 1129.3 244.8 1129.8 239.8 1132.8 235.8 1136.4 232.3 1139.8 228.7 1144.6 227.3 1149 225 1153.8 223.5 1157.2 219.9 1159.7 215.5M677.5 582.2L681 585.8 682.7 590.5 684.8 595 685.5 600 684.2 604.8 683.4 609.7 683 614.7 683.8 619.6 685.2 624.4 687.1 629.1 688.1 634 691.5 637.7 695.9 640 699.3 643.7 703 647 706.8 650.3 710.9 653.1 715.8 654.1 720.5 655.9 725.5 656.2 730.3 657.6 735 659.3M1035.6 458.3L1032.6 454.3 1029.7 450.2 1028 445.5 1026.5 440.7 1022.9 437.3 1018.6 434.7 1015.8 430.6 1015 425.6 1016.7 420.9 1017.2 416 1017.4 411 1019.3 406.3 1022.5 402.5 1025.9 398.9 1028.5 394.6 1028.9 389.6 1029.7 384.7 1031.7 380 1031.6 375 1033.7 370.5 1033.8 365.5M275 644.7L275.9 639.8 278 635.2 279.6 630.5 282.7 626.6 285.9 622.7 290.3 620.3 293.2 616.2 295.2 611.7 296.8 606.9 297.7 602 297.4 597 295.1 592.6 292.9 588.1 290.7 583.6 289.1 578.8M34 33.6L38 36.6 41.1 40.5 41.7 45.5 40.5 50.4 41.3 55.3 44.4 59.2 48.9 61.4 52.2 65.2 54.9 69.4 55.3 74.3M217 69L212.3 70.6 207.6 72.3 203.8 75.6 199 76.8 194.7 79.4M510.6 542.8L508 547.1 504.3 550.3 499.8 552.5 496.3 556.1 491.5 557.5 486.5 557.8 481.7 559.2 476.8 560.1 472.3 562.4 467.3 562.9 462.6 561.5 457.6 561.8 452.7 563.1 449.1 566.5 446.3 570.6 444.4 575.3 443.1 580.1 441.5 584.8 440.8 589.8M691.6 191.2L696.4 190.1 701.4 189.8 706 191.8 710.9 192.7 715.7 191.3M319.5 521.6L314.7 520.2 309.9 518.7 305 517.6 300.2 518.9 296.7 522.5 292.4 525.1 287.9 527.2 284.3 530.7 280 533.2 275.6 535.6 272.1 539.1 267.5 541.1 263.9 544.6 259.3 546.6 254.6 548.1 249.6 547.6M901.6 26.6L902.1 31.5 900.3 36.2 897.1 40 894 43.9 890.4 47.5 888.1 51.9 887.7 56.9 887.2 61.8 887.5 66.8 885.3 71.3 881.6 74.6 877.2 77 872.7 79.2 868.9 82.5 864.3 84.5 859.3 84.8 854.4 83.9 849.6 82.4M354.3 330.5L349.5 329 344.6 329.6 339.9 328 336.3 324.4 333.2 320.5 328.5 318.7 325.1 315.1 323.1 310.5 323 305.5 321.2 300.8 321.4 295.8 323.1 291.1 326.1 287.1 327.7 282.4 331.3 278.9 335 275.5M958.1 216.7L954.4 220.1 951.7 224.3 950.4 229.1 950.6 234.1 949.4 238.9 950.6 243.8 951.8 248.6 953.2 253.5 953.6 258.4 954 263.4 953.2 268.4 954.1 273.3 954.8 278.2 953.4 283.1 951.4 287.6 950.2 292.5 948.4 297.2 945.2 301 941.4 304.3M755.9 479.9L755.9 474.9 754.9 470 753.6 465.2 752.8 460.3 754.5 455.5 757.4 451.5 759.7 447.1 762.1 442.7M118.9 100.2L122.9 103.2 127.8 104.1 132.6 102.8 137.5 101.7 142.4 102.8 147.1 101.3 152 102.3 156.2 105.1 161.1 105.9 165.8 107.7 170.3 109.8 174.1 113 178.8 114.8 183.8 114.8M1169.2 74.5L1168.4 79.5 1170.1 84.2 1173.3 88 1175.8 92.3 1175.8 97.3 1174.9 102.2 1172.9 106.8 1170 110.9 1168.5 115.7 1167.5 120.6 1168.1 125.5 1168.5 130.5 1166.5 135.1 1165.6 140M1176.7 97.2L1176.3 92.2 1175.3 87.3 1171.9 83.6 1169.3 79.3 1167.7 74.6 1165.2 70.3 1165.1 65.3 1166.4 60.5 1165.6 55.5 1167.4 50.8 1167.6 45.8M341.6 262.9L341.2 257.9 339.6 253.2 337.5 248.6 334.4 244.7 329.9 242.6 324.9 242.4 320.1 241.2 316.1 238.2 313.3 234 312 229.2 313.1 224.3 313.4 219.3 315.9 215 319.7 211.8 323.6 208.7 328.4 207.3 332.4 204.3 335.4 200.2 339.7 197.7 344.7 197.2 349.5 198.4 354.4 197.7M510.1 182.3L505.3 181.1 501.3 178.1 496.8 175.8 493.7 171.9 492.4 167.1 493.5 162.2 496.4 158.1M87 606.2L89.7 602 92.4 597.8 94.9 593.5 95 588.5 94.6 583.5 95.6 578.6 96.4 573.7 95.2 568.8 96.5 564 96.7 559 95 554.3 96 549.4 94.4 544.7 94.6 539.7 93.3 534.8M101.6 253.7L96.7 254.2 91.7 254.9 87.4 257.4 82.9 259.5 77.9 260 73.2 258.2 69.3 255.1M1201 242.6L1205.8 244.2 1210.5 245.7 1215.5 245.9 1220.4 244.7 1225.4 245.1 1230.3 244.8 1235.1 246.2 1239.3 249 1242.8 252.6 1245.3 256.9 1248 261.1 1250.1 265.7 1250.9 270.6 1252 275.5 1252 280.5 1254.3 284.9M1203 458.2L1201.1 462.9 1197.3 466.1 1192.6 467.7 1188.5 470.5 1184.8 473.9 1180.4 476.4 1176.6 479.6 1172.1 481.7 1167.1 481.6 1162.5 479.4 1158.9 476 1156.1 471.9 1153.3 467.7 1151 463.3 1150.7 458.3 1151.5 453.3 1154.7 449.5 1158.3 446 1161.5 442.2 1165.8 439.6M590.8 317.7L588.6 322.2 585.2 325.9 583.4 330.5 582.9 335.5 580.5 339.9 578 344.2 574.3 347.6 572.8 352.4 570.9 357M629.5 660L626.1 656.4 621.9 653.6 617.7 650.9 612.7 650.3 608.6 647.5 603.9 645.7 598.9 646.3 593.9 646.6 589.2 648 584.9 650.7 580.6 653.2 576.9 656.6 573.7 660.4 571 664.6 566.6 666.9M707.6 459.3L703 457.2 698.5 455.2 694.5 452.1 690.3 449.5 685.8 447.2M496 125.3L491.7 127.7 487.1 129.7 482.1 129.1 477.2 128.2 472.3 127.3 467.3 128.1 463.3 131.1 458.4 132 454.7 135.4 450.2 137.6 445.3 138.2 440.5 139.6 436.2 142.2 432.4 145.4M523.1 146.1L518.3 144.7 514 142.3 509 141.7 504 142.3 499.1 141.8 494.4 140 489.5 139 484.5 138.5 480.2 136 476.4 132.7 472.7 129.4 470.4 124.9 469.5 120 466.8 115.8 463.9 111.7 463.5 106.7 460.7 102.6 460.1 97.6 461.9 92.9 461.7 87.9 459.9 83.3M343 483.7L347.3 486.3 350.5 490.1 354 493.6 355.7 498.3 359 502.2 362.7 505.5 366.2 509.1 370.9 510.8 374.3 514.5 375.5 519.3 374.8 524.3 374.8 529.3M848.7 659.3L852.1 663 856.6 665.1 861.5 666.3 865.7 668.9 869.1 672.6 873.7 674.6 877.1 678.2 881.3 680.8 885.2 684 888.5 687.8 893.1 689.6 898.1 690.3 902.3 693 907.2 694.2 912 695.4 917 695.9 921.4 698.3 926.4 698.8M242.3 375.4L239.8 371.1 238.7 366.2 239.9 361.3 241.2 356.5 244.8 353 247.8 349.1 251.7 345.9 254 341.4 257.3 337.7 259.7 333.3 263.4 329.9 266 325.7 267.5 320.9 267.2 315.9 268.1 311 269.8 306.3 270 301.3 268 296.7M448 101.5L453 101.1 457.9 101.4 462.2 104 467.2 104.1 471.8 106.2 475.2 109.9 477.2 114.4 480.8 117.9 483.7 122 487.4 125.4 491.5 128.2 496.5 128.7 501.4 127.6 505.1 124.2 507.4 119.8 511.4 116.8 514.9 113.3 518.4 109.7 521.7 105.9 526.4 104.3 531.1 102.5M190.8 259.7L186.3 257.6 182.3 254.5 180.3 249.9 176.7 246.4 173.1 243M1114.8 519.3L1113.2 514.6 1109.4 511.3 1104.5 510.5 1100.1 508.1 1095.7 505.7 1092.6 501.8 1089.7 497.7 1085.8 494.6 1080.8 493.6 1076.3 491.7 1071.3 491.3M1114.7 469.3L1115.1 464.3 1115.9 459.3 1114.7 454.5 1114.7 449.5 1117.3 445.2 1119.9 440.9 1120.7 436 1123.8 432 1126.3 427.7 1126.3 422.7 1128.5 418.3 1128.5 413.3 1130.6 408.7 1133.7 404.8 1137.6 401.7 1139.7 397.1 1141 392.3 1143.9 388.2 1144.9 383.3M1138.8 522.2L1138.6 527.2 1138.6 532.2 1137.5 537.1 1135 541.5 1133.3 546.2 1132.4 551.1 1134 555.8 1137.7 559.3 1142.3 561.1M557.3 671.7L561.2 668.6 565.1 665.5 568.2 661.5 572.6 659.2 575.8 655.3 578.7 651.3 582.5 648 585.3 643.9 587.6 639.4 590.7 635.5 595.3 633.5 598.5 629.7 602 626.1 604.3 621.7M443 649.9L441.9 645.1 442 640.1 440.5 635.3 439.3 630.4 438.1 625.6 438.6 620.6 437.7 615.7 437.3 610.7 436.6 605.7 437.1 600.8 439.5 596.4 441.1 591.6 440.9 586.7 441.7 581.7 442.5 576.8M763.9 600.6L762.5 595.8 762.4 590.8 761.7 585.9 763 581.1 764.7 576.4 767.5 572.2 768 567.2M923.9 233.6L926.2 238.1 929.9 241.4 934.8 242.5 939.7 243.4 944.7 243.4 949.1 245.7 952.4 249.5 955.5 253.5 958.9 257.1 962 261M1204 507.6L1204.2 512.6 1206.3 517.1 1208.9 521.4 1210.5 526.1 1214.2 529.5 1217 533.6 1220.4 537.3 1221.3 542.2 1221.1 547.2M1183.3 46.9L1187.4 49.8 1190.3 53.9 1194.9 55.9 1199.8 57.1 1203.9 59.8 1208.4 62.1 1213.2 63.4 1218.1 62.6 1222.8 60.7 1226.2 57.1 1228.3 52.5 1231.5 48.7 1234.5 44.7 1238.8 42.2 1243.7 41 1247.4 37.7 1250.8 34 1255.2 31.8 1260.2 30.9 1264.9 29.3 1268.7 26.1M650.2 314L655.2 313.6 659.9 311.8 664.5 309.9 667.5 305.9 670.5 301.9 671.7 297 674.6 293 675.9 288.2 676.2 283.2 675.9 278.2M678.3 285.1L682.4 288 687.1 289.7 691.9 291 696.3 293.3 701.3 294.1 705.5 296.8 710.2 298.3 715.2 298.2 719.9 300.1 724.8 301 729.6 299.8 734.6 300.4 738.7 303.1M740.9 470.6L744.4 474.1 746.9 478.4 750.8 481.6 754.6 484.9 759.2 486.9 762.1 491 766.7 493 771.7 492.7 775.9 489.9 780 487.1 784.9 486.1M1126.6 641.7L1127.7 646.6 1129.3 651.3 1128.8 656.3 1125.9 660.4 1125.5 665.4 1124.1 670.2 1121.3 674.3 1119.3 678.9 1115.8 682.4 1112.5 686.2 1107.7 687.7 1102.7 687.4 1098.2 689.5 1094.6 693M602.2 163.8L600.5 159.1 598.5 154.5 594.6 151.5 590.9 148.1 586.1 146.5 581.5 144.6 576.5 144.2 571.5 144.4 566.7 145.7 561.8 146.5 556.9 147.9 552 147.1 547.1 146.1 542.2 144.9M194.9 575.8L197.7 580 200.6 584 205.1 586.3 209.9 587.4 214.9 587.9 219.5 585.9 222.4 581.8 225.2 577.7 225.9 572.7 226.4 567.8 225.5 562.8 222.2 559 217.6 557.1 213.4 554.4 210 550.8 205.6 548.4 202.2 544.7 197.6 542.7 192.6 543.5 187.8 542.2M812.6 152.4L814.2 147.6 813.3 142.7 810.4 138.7 806 136.2 801.8 133.5 797.1 131.8 792.1 131.6 787.1 131.1 782.2 130.5 777.2 130.4 772.5 132.3 767.5 131.8 762.6 132.8M611.8 242.6L616.5 244.5 619.8 248.2 623.6 251.6 628.4 252.8 633 254.7 638 254.4 642.9 255.5 647.9 255.2 652.4 257.4 655.6 261.2M170.9 464.6L171.3 459.6 174.2 455.6 178.7 453.3 183.7 453.6 188.6 452.6 193.5 453 198.1 455 201.8 458.3 206.5 460 211.5 460.1 216.3 458.7 221.2 457.8 226.2 457.2 230.5 454.7 235.3 453.3 239.2 450.1 243.5 447.6 248.3 446.1M779.3 560.9L776.9 556.6 773.3 553.1 769.6 549.6 765.9 546.3 761.2 544.6 756.5 542.9 751.7 541.7 747.3 539.2 742.5 537.8M1212.9 495.7L1211.1 491 1211.1 486 1213.4 481.6 1217.5 478.7 1222 476.4 1225.5 472.9 1226.7 468 1225.1 463.3 1221.5 459.8 1217.7 456.6 1215.4 452.1 1214.2 447.3 1212.9 442.5M622.2 165L623.8 160.3 624.3 155.3 622.5 150.6 619 147.1 616.9 142.6 616.7 137.6 617.3 132.6 617.6 127.6 620.1 123.3 622.1 118.7 625 114.6 627.6 110.4M605.3 586.6L601 589.2 597.9 593.2 595.4 597.5 592.9 601.8 588.8 604.7 584.4 607.2 580 609.4 575 609.2 570 609.1 565.5 607 561.3 604.3 557.1 601.5 553.7 597.8 550.6 593.9 546.8 590.7 543.4 587 540.6 582.9 537.2 579.3 532.9 576.7 528.1 575.2 523.1 574.7M680.1 329.4L675.3 330.6 670.3 330.4 665.7 328.4 660.8 327.6 656.3 325.4 652.3 322.3 649.9 318M1223.1 616.3L1221.1 611.8 1220.9 606.8 1219.1 602.1 1219.8 597.2 1222 592.7 1222.6 587.7 1221.2 582.9 1222.2 578 1224.1 573.4 1226.9 569.2 1230.3 565.6M382.6 36.5L387.5 35.4 392.2 33.8 397.2 33.6 401.4 31 403.7 26.5 404.5 21.6 404.9 16.6 407.6 12.3 409.3 7.6 409 2.6 410.8 -2 411.3 -7M1124.2 349.2L1127.7 345.7 1130.7 341.7 1132 336.9 1131.8 331.9 1134.1 327.4 1135.2 322.5 1135.9 317.6 1135 312.7 1136.5 307.9 1137.1 302.9 1140.1 299 1144.3 296.3 1149.3 295.7 1154.3 296.1 1159.2 295.4 1164.2 294.7M695.8 185.9L700 183.3 705 183 709.4 180.7 713.3 177.4 717.7 175.2M837.3 14.4L835.8 19.2 832.9 23.3 830 27.3 827.2 31.4 826.5 36.4 826.6 41.4 826.2 46.4 827.3 51.2 829.7 55.6 830.3 60.6 831.6 65.4 832.6 70.3 831.4 75.1 829.8 79.9 826 83.2 824.2 87.9 821.3 91.9 818 95.7 813.8 98.4M517.4 244.4L521.7 246.9 526.7 246.8 531.6 245.6 536 243.2 541 243.1 545.7 244.8 550.3 246.6 555.3 246.9 560.2 248 565 249.6 569 252.5M978.4 254.1L982 257.6 986.8 259.2 991.3 261.3 996.3 260.9 1000.8 262.9 1003.7 267 1005 271.8 1007.9 275.9 1011.8 279.1 1016.2 281.4 1021.1 282.4 1025.9 283.9 1030.7 285.3 1035.6 284.6M1122.1 516.4L1121.7 511.4 1120.1 506.6 1118.5 501.9 1115.1 498.3 1112.2 494.2 1111.4 489.3 1112.5 484.4 1112.7 479.4 1115.2 475 1116.5 470.2 1117.2 465.3 1115.9 460.4 1116.2 455.4 1116.2 450.4 1116.8 445.5 1118.8 440.9 1119.6 435.9 1118.4 431.1 1119.7 426.2M151.6 495.6L156.1 497.8 161 498.4 166 499 171 499.6 175.9 500.6 180 503.3 183.2 507.2 184.3 512 187.4 516 190.9 519.5 194.9 522.6 199.7 524.1 204.6 524.4 209.5 523.2 214.5 522.8 219.5 522.9M210.5 197.1L211.1 202.1 211.5 207.1 209.2 211.5 206.3 215.6 205.7 220.6 206.7 225.4 205.4 230.3 204.2 235.1 201.7 239.4 200.1 244.2 198.8 249 195.7 252.9 194.6 257.8 195.6 262.7 194.5 267.6 194.8 272.6 194.3 277.6M508.1 575.1L508.4 570.1 507.8 565.1 504.9 561.1 501.4 557.6 498.9 553.2 494.7 550.4 490.9 547.2 486.4 545 482.2 542.3 478.3 539.1 473.4 538.3 468.5 539.2 463.5 538.4 459.3 535.8 456.2 531.9 452.4 528.6 448.8 525.1 446.4 520.7 442.5 517.5M312.1 357.7L307.7 355.4 302.9 353.8 298.5 351.5 293.6 350.3 288.7 349.4 284 351.1 280.2 354.4 277.8 358.8 275.3 363.1 273.5 367.7 271.6 372.3M261.2 75.9L256.6 77.7 252 79.6 247.5 81.9 242.5 81.7 237.7 80.3 232.7 80.3 228.3 77.9 223.5 76.6 218.5 76.4 213.6 75.6 209.7 72.4 206.6 68.5 204.3 64.1 203.5 59.1 203.2 54.2 204.3 49.3 205 44.3 203.9 39.5 200.6 35.6 197.9 31.4M702.5 222.5L697.5 223 692.5 223.2 687.8 224.8 683.7 227.6 679.3 230.1 676.5 234.2M168.5 351.5L163.6 350.8 158.7 351.9 153.9 350.5 149 351.5 144 351.5 139.1 352.5 134.2 353.1 129.9 355.7 126.2 359.1 122.1 362 118.7 365.6 115.8 369.7 112.5 373.5 111.1 378.3 111 383.3 112.5 388 115.2 392.2 118.7 395.8M480.1 577.5L484.8 575.7 488.3 572.1 490 567.4 492.5 563.1 492.8 558.1 492.2 553.2 492.9 548.2 493.8 543.3 496.6 539.1 500.5 536M1081.2 393.8L1084.7 390.3 1086.5 385.6 1087.5 380.7 1088.7 375.9 1090.9 371.4 1094.9 368.4 1099.8 367.4 1104.8 367.9 1109.6 366.6 1113.1 363 1114.4 358.2M389.4 652.4L387.5 657.1 387.8 662.1 389.9 666.6 392.3 671 392.6 676 391.2 680.8 387.8 684.4 384.5 688.1 379.8 689.8 374.8 690.7 371 694 366.1 694.8 361.9 697.5 357.3 699.4 352.7 701.4 349.5 705.2 346.4 709.2 345.2 714 341.8 717.7 337.4 720.1 332.9 722.4 327.9 722.2M677.9 195.5L673.1 194 669 191.2 664.4 189.2 659.4 188.8 654.6 187.5 649.6 187.9 644.7 187 640.1 184.9 637 181 635.3 176.3M262 574.1L259.3 569.9 255.8 566.4 254 561.7 253.9 556.7 253.6 551.7 255.2 547 254.2 542.1 254.6 537.1 253.9 532.1 251.4 527.8M588.9 556.4L584.9 553.4 582.9 548.8 580.7 544.3 577.5 540.5 576.8 535.5M57.6 152.7L55.3 148.3 54.3 143.4 55.6 138.5 55.3 133.5 56.4 128.7 58.3 124 59.4 119.1 61.1 114.4 64.3 110.6 66.7 106.2 68.4 101.5 68.3 96.5 69.1 91.6M748.7 109L746.7 104.4 745.2 99.6 745 94.6 747.4 90.2 751.2 86.9 754 82.8 754.7 77.8 755.4 72.8 757.7 68.4 758.1 63.5 757 58.6 757.2 53.6 756.3 48.7M1000.8 160.1L995.9 161.3 992.2 164.6 987.3 165.9 983.9 169.5 981.2 173.7 977.1 176.6 972.3 178.1 967.6 179.9 962.7 180.6 958.1 178.6 953.1 178.6 948.3 177.2M1057.8 166.6L1052.8 166.8 1048.2 164.7 1044.3 161.6 1040.1 158.9 1036.4 155.5 1031.7 153.6 1026.9 152.4 1023 149.3 1021.1 144.7 1018.6 140.4 1016 136.1M657.9 67.5L654 64.4 650 61.4 647.5 57 644.1 53.3 640.8 49.5 637.5 45.8 634.8 41.6 631.8 37.6 630.1 32.9 629 28M961.8 503.1L960.3 507.8 957.6 512.1 953.5 514.9 949 517 944.4 518.9 939.5 520 934.5 520.5 929.7 519.2 924.7 520 919.7 520.2 915.1 518.2 910.3 516.8 905.4 516 900.6 514.5 897 511 895.7 506.2 893 502M861.1 601.8L857.3 598.5 854.3 594.5 850.4 591.5 846.2 588.7 841.2 588.3 836.3 589.5 831.3 589.9 827.1 592.6 824.5 596.8 820.1 599.1M1097 115.2L1092.9 112.4 1088.3 110.4 1085.3 106.4 1083.4 101.8 1080.5 97.7 1078.4 93.2 1077.2 88.3 1074 84.4 1071.6 80.1 1071.7 75.1 1070.4 70.3 1067.8 66 1067.3 61 1065 56.6 1065 51.6 1065.5 46.6 1063.5 42 1063.8 37 1064.5 32.1 1063.3 27.2M431.1 257.5L432.8 252.8 433.9 247.9 437.1 244.1 440.7 240.6 442 235.8 441.7 230.8 440.5 226 438.6 221.3M112.9 62.2L115.7 66.3 118 70.8 121.6 74.2 125.3 77.6 127.2 82.2 131.2 85.2 133.6 89.6 133.5 94.6M992.7 601.8L994.7 606.4 996.5 611 998.8 615.5 1002.2 619.2 1004.9 623.3 1009.1 626.2 1011.7 630.4M396.5 437.5L393.1 433.8 389.4 430.5 385.1 428 380.2 427.1 375.4 428.5 370.5 427.6 365.5 427.2 361.1 424.8 356.1 424.9M70.5 29.5L65.8 31.1 60.8 31.3 55.8 31.1 50.8 31.7 45.8 32.3 41.3 34.3 36.8 36.6 32.3 38.7 28.5 42 25.8 46.2 25.6 51.2 24.9 56.2M540.9 447.8L536.9 450.8 534 454.9 530.3 458.3 526.8 461.8 522.2 463.9 517.9 466.4 513.5 468.8 510 472.4 506.6 476 503.3 479.8 498.7 481.5 493.8 482.7 489.7 485.6 486.6 489.5 482.8 492.8 480.2 497 477.3 501.1 474.1 504.9M905.1 256L904.8 251 904.3 246.1 905.9 241.3 905.9 236.3 905.9 231.3M1168.7 165.2L1171.1 160.8 1172.3 155.9 1172.8 151 1174 146.1 1172.7 141.3 1174 136.4 1173.9 131.4M714.5 81.4L714.3 86.4 713.1 91.3 713.8 96.2 716.7 100.3 718.1 105.1 718.2 110.1 719.7 114.9 721.2 119.7 722.3 124.5 725.1 128.7 727.3 133.2 729.5 137.7 731.6 142.2 735.3 145.5 739.9 147.5 744.7 149.1 749 151.7 753.6 153.5 758.5 152.7 763.2 150.8 767.5 148.3 770.4 144.3M620.4 298L615.6 296.5 610.7 296.8 606 298.7 602.9 302.6 598.8 305.5 596.3 309.8 591.9 312.2 588.2 315.6 585.6 319.8 581.2 322.3 576.7 324.4 571.7 324.4 567.3 326.8 563 329.4 558.5 331.5M1197.8 8.4L1194 5.2 1189 4.4 1185 1.4 1180.1 0.6 1176 -2.2 1171.6 -4.6 1166.6 -4.5 1161.6 -4.7 1156.6 -4.7 1151.8 -6.1 1147.1 -7.9 1142.2 -8.7 1137.2 -8.2 1132.7 -6 1128.2 -3.8 1123.2 -3.7 1118.4 -5.1 1113.4 -5 1109.2 -2.3 1105 0.4M587.6 440L584.5 444 583.8 448.9 583.8 453.9 584.2 458.9 585 463.9 585.2 468.9 586.4 473.7 588.1 478.4 587.7 483.4 587 488.4 587.2 493.4M824.7 147L824.1 151.9 823 156.8 822.1 161.7 823.1 166.6 824.8 171.4M222.6 282.8L218.2 285.1 213.2 285.4 208.3 286.3 203.3 285.5 199.2 282.7 194.3 281.6 189.9 279.2 187 275.1M332.2 17.9L337 19.4 340.5 22.9 344.5 26 346.3 30.6 347.8 35.4 349.8 40 351.8 44.6 353.1 49.4 356.4 53.2 358.8 57.5 360.1 62.3 359.5 67.3 361.1 72 361.4 77M914.1 532.9L912.9 537.7 913.1 542.7 915.8 547 916.3 551.9 917.1 556.9 918.1 561.8 920.2 566.3 921.1 571.2 920 576.1 917 580.1 912.9 583 909.3 586.4 906.1 590.3 902.9 594.1 898.2 595.8 894.1 598.7M421.5 168.7L422.3 173.6 423.4 178.5 422.6 183.4 423.7 188.3 422.3 193.1 419.2 197.1 416.8 201.5 412.7 204.2 408.1 206.2 403.1 205.8 398.9 203.1M495 145.9L491.1 149.1 486.9 151.9 482.4 153.9 478.3 156.8 474.2 159.6 470.6 163.2 466 165 461.4 166.9 457.1 169.6M1215.7 83.3L1210.8 82.2 1205.9 81.1 1200.9 81.3 1196.2 82.8 1191.2 83.3M958.7 641.1L960.7 636.6 964.3 633 967.2 629 968.2 624.1 970.1 619.5 973.9 616.2 975.7 611.5 976.8 606.7 976.7 601.7 977.9 596.8M540.8 601.6L543.8 605.6 544.5 610.5 545.4 615.5 547.5 620 550 624.3 552.5 628.6 553 633.6 556 637.6M171.1 45.5L172.1 50.4 174.3 54.9 177.7 58.6 182 61.1 186.1 63.9 190.6 66.1 195.6 66.5 200.4 67.9 205.3 68.7 210.3 69.1 214.7 71.4 218.9 74.2 223.2 76.7M1212.7 656.8L1213.7 651.9 1215.8 647.3 1219 643.5 1222.6 640.1 1224.1 635.3 1227.7 631.8 1232.1 629.6 1237.1 628.9 1241.4 626.3 1245.8 623.9 1250.7 623.7 1255.7 623 1260.7 623.2 1265.5 624.6 1269.8 627.2 1272.1 631.7 1276.3 634.4 1280.8 636.5 1285.8 636.6 1290.6 637.9 1295.6 638.2M648.8 167.9L646.2 163.6 642.4 160.3 639.7 156.1 637.3 151.8 633.1 149 629.5 145.6 624.6 144.4 619.9 142.7M790.9 355.1L792.1 359.9 795 364 796.1 368.9 794.6 373.6 795 378.6 797.8 382.8 799.1 387.6 799.6 392.6 799.4 397.6 797.6 402.2M29.9 127.8L26.2 124.4 21.5 122.6 18 119.1 14.2 115.8 12.5 111.1 12 106.1 12.4 101.1 14.6 96.7 16.1 91.9 18.2 87.4M257.6 594.9L257.1 589.9 254.7 585.5 252.1 581.2 250.6 576.5 247.2 572.8 242.6 570.8 237.7 570.1 232.7 569.7 228.1 571.5 223.2 572.5 219.3 575.7 215.1 578.4 212.5 582.7 208.4 585.5 204.7 588.8 202.6 593.4 202.2 598.4 203.2 603.3 205.8 607.5 209.9 610.4 212.9 614.4M1221.9 574.4L1224.8 578.5 1225.8 583.3 1225.4 588.3 1226.9 593.1 1227.3 598.1 1226.1 602.9 1225 607.8 1226.2 612.7 1225.6 617.6 1226.4 622.6M317.8 334.9L322.8 334.1 327 331.5 330.1 327.5 334.1 324.5 337.1 320.5 338.2 315.7 337.4 310.7 338.8 305.9 338 301 335.8 296.5 332.6 292.6 328 290.6 323.1 290 318.1 289.4M177.3 61.7L181.5 58.9 185.8 56.5 190.8 56.1 195.5 57.8 199.7 60.5 204.5 61.8 209.4 60.6 213 57.1 215 52.5 215.5 47.5 217.5 42.9 218.7 38.1 217.5 33.3 214.7 29.1 212 24.9 211.7 19.9 209.2 15.5 205 12.9 200.6 10.4 197.4 6.6 195.5 2 193 -2.3M724.9 456.8L725.4 461.8 726.9 466.5 727.8 471.5 726.7 476.3 723.8 480.4 721.8 485 721 489.9 722.2 494.8 721.4 499.7 720.7 504.6 722.2 509.4 723.9 514.1 725.4 518.9 727.8 523.3 730.6 527.4 733 531.8 735 536.4 737.3 540.9 740.5 544.7 743.6 548.6M1167.5 68.1L1170.4 72.2 1174.3 75.2 1178.8 77.4 1183.7 78.4 1187.8 81.2 1190 85.8 1192.6 90 1194.1 94.8 1197.7 98.3 1201 102M829.3 384.5L826.9 388.9 826.8 393.9 826.6 398.9 824.3 403.3 823.3 408.2 823.8 413.2 822.4 418 819.7 422.1 816 425.5 811.4 427.5 806.5 428.5 802.5 431.5 797.6 432.2M1083.1 657.9L1080.6 653.6 1079.6 648.7 1078.1 643.9 1077.9 638.9 1075.8 634.4 1075.2 629.4 1073.3 624.8 1069.3 621.8 1064.5 620.5M167.6 177.8L165.4 182.3 163.5 186.9 164.1 191.9 164.6 196.8 164.3 201.8 165.3 206.7 167.9 211 171.5 214.4M1034.7 641.8L1035.6 646.8 1035.7 651.7 1037.4 656.5 1038.7 661.3 1040.6 665.9 1042.1 670.7 1043.6 675.4 1043.6 680.4 1043.2 685.4 1040.3 689.5 1036.8 693 1032 694.4M1108.9 473.3L1108.6 478.3 1109.1 483.3 1109.2 488.3 1110.4 493.1 1113.9 496.7 1118.7 498.2 1123.2 500.4 1128 501.6 1133 501.1M315.2 264.4L311.9 268.2 309.6 272.6 307.8 277.3 303.8 280.3 299.3 282.5 294.9 284.8 290.7 287.6 288.1 291.8 285.6 296.2 282 299.6 277.7 302.3 274.2 305.8 270.6 309.3 266 311.2 261.9 314 258 317.2 254.2 320.4 250.4 323.7 247.3 327.6 243.8 331.3 242.1 335.9 241.6 340.9M1009.8 28.5L1014.7 27.3 1019.6 26.3 1024.5 26.4 1028.9 24 1032.2 20.3 1034 15.6 1037.8 12.3M861.3 112.2L857.7 108.7 853.5 106 850.4 102.1 847.3 98.1 846.5 93.2 845.1 88.4 841.5 85 837 82.8 832.6 80.3 827.9 78.7 823 77.6 818.1 76.9 813.1 76.1 808.3 77.3 803.9 79.6 799.6 82.3 796.7 86.3 796 91.3 794.3 96M604.8 93.8L609.8 93.3 614.8 93.7 619.7 92.7 624.5 91.4 629.5 91.2 634.5 90.4 639.3 91.8 643.8 94 648.7 94.9 653.7 94.7 658.5 96 662.9 98.4 667.8 99.3 672.1 101.8 675.1 105.8 677.8 110 682.3 112.3 685.9 115.8 690 118.7 692.6 122.9 695.9 126.7 699.2 130.4M120.9 321.9L119.2 326.7 115.5 329.9 112.6 334 108.2 336.5 103.3 337.1 99.3 340.1 94.4 341.2 90 343.6 85 343.7 80.4 345.5 76.2 348.4 71.5 349.9 67.2 352.5 63.3 355.6 58.7 357.6M824.6 600.8L819.7 601.3 814.7 600.9 810.2 598.7 805.2 598.8 800.2 598.2 795.3 597.3 790.4 596.1 785.8 594.1 782.7 590.3 781.9 585.3 781.2 580.4 778.8 576 778.9 571 776.4 566.6 774.5 562 773.8 557.1 773.7 552.1 773.1 547.1 772 542.2M183.3 171.1L182 175.9 183.1 180.8 184.4 185.6 187.3 189.7 189 194.3 192.1 198.3 194.9 202.5 199 205.2 202.2 209.1 202.9 214 202.4 219 200.8 223.7 198.1 228 194.7 231.6 190.3 234M944.2 362.5L948.7 364.7 953.3 366.7 957.9 368.7 962.7 370.2 966.9 372.8 971.9 373.1 976.9 372.6 981.9 372.2 986.9 371.8 991.7 370.6 996.7 370.9 1001.7 371.6 1005.6 374.7 1010.5 375.9 1015.1 377.7 1020.1 377.7 1025.1 378.3 1030.1 378.1M501.8 477.3L506.1 474.9 511.1 474.5 515.6 472.3 520.6 471.8 525.1 469.8 530.1 470.2 534.8 471.9 538.6 475.2 543.1 477.3 548 478.6 552.9 478.4 557.9 478.6 562.5 476.5 565.5 472.5 568.8 468.8M1198.2 111.7L1193.9 114.4 1189.1 115.8 1184.8 118.3 1182.1 122.6 1178 125.4 1173 125.9 1168.7 128.4 1164 129.8 1159.1 131.2 1154.4 132.8 1149.4 133.1 1145.3 135.9 1141.8 139.5 1139.1 143.7 1137.8 148.5 1137.5 153.5 1138.4 158.4M527 417.8L525.2 422.5 524 427.4 523.8 432.3 524.9 437.2 524.3 442.2 522.1 446.7 521.6 451.6 523.8 456.1 525.9 460.7 527.4 465.4 530.5 469.4 531.6 474.2 532.7 479.1 534.9 483.6 538.2 487.4 542.7 489.5 545.7 493.5 549.7 496.5M593.7 531.8L593.4 536.8 594.9 541.6 597.6 545.8 601.1 549.3 602.9 554 605.7 558.2 609.5 561.5 611.5 566 611.7 571 610.1 575.8 607.9 580.2 604.7 584 603 588.7 599.8 592.6 599 597.5 599.2 602.5 598.9 607.5 596.2 611.7 592.3 614.8 588.1 617.5M928.9 620.7L929.6 625.7 931.1 630.5 933.3 634.9 937.2 638.1 940.7 641.7 944.7 644.7 948.1 648.3 952.7 650.3 957.7 650.2M129.1 449.8L133.4 452.4 138.3 453.7 143.1 455.1 148 454.1 152.2 451.5 157.2 450.9 162.1 452 166.6 454.1 171.6 453.8 176 451.4 180.8 449.9 184.5 446.6 187.6 442.6 190 438.3 189.8 433.3 191.5 428.6 194.2 424.3 197.7 420.8 202.3 418.8M210.3 381.2L211.1 386.1 213.2 390.7 213.4 395.7 215.1 400.4 218.7 403.8 222.5 407.1M453.4 537.5L449.5 534.3 446.6 530.3 442.9 527 438 525.7 434 522.7 431 518.8 426.7 516.2M110.5 456.4L111.5 451.5 110.4 446.7 107.9 442.4 106.6 437.5 106.2 432.5 104.8 427.8 103.7 422.9 100.9 418.7 99.1 414.1 96.2 410 94.1 405.4 92.4 400.7 89.9 396.4 85.5 394 80.8 392.1 75.9 391.7 71 392.7 66 392.8 61.2 394.2 56.2 393.9M1225.8 343.6L1224.3 338.8 1221.4 334.7 1216.9 332.4 1212.2 330.8 1207.6 328.9M870 351.2L874.7 352.9 879.5 354.4 884.3 355.7 889.3 355.4 894.3 355.2 899 356.9 903.8 358.1 908.5 359.9 911.6 363.8M733.7 22.3L731.4 17.8 730.7 12.9 728.1 8.6 727.2 3.7 726.6 -1.3 724.8 -5.9 722.8 -10.5 722.1 -15.5 724 -20.1 725.8 -24.8 726.6 -29.7 729.8 -33.6 732.5 -37.8 733.4 -42.7 735 -47.4 736.8 -52.1M659.7 627.3L657.8 631.9 654.6 635.7 651.1 639.3 647 642.2 642.7 644.8 637.7 645 633.3 642.6 628.9 640.4 625.7 636.5 623.8 631.9M476.8 2.5L477.4 -2.5 476.4 -7.4 473.6 -11.6 469.2 -14 464.2 -13.9 459.2 -13.9 454.3 -14.2 449.3 -14.8 444.5 -16.4 439.6 -17.2 434.8 -18.5 429.8 -18.2 425 -19.5 420.2 -20.9 416.3 -24.1 411.6 -25.8 407.2 -28.1 402.4 -29.5 399 -33.2 395.1 -36.3 391.9 -40.1 388.2 -43.5M954.6 244.6L951.6 248.6 949.3 253 947.2 257.5 945.1 262.1 941.6 265.7 939.9 270.4 936.3 273.9 931.8 276 926.9 276.9 921.9 276.8 916.9 277 912.7 279.7 908.2 281.8M616.3 31.2L621.3 31.1 625.6 28.6 629.7 25.8 634.7 25.3 639 22.9 641.5 18.5 643 13.7 643.6 8.8 646.4 4.6 647.9 -0.1 649 -5 651.7 -9.2 652.2 -14.2 653.7 -19 657.3 -22.4 660.3 -26.4 662.3 -31 662.1 -36M905.8 594.6L901.4 596.9 896.5 598 892.4 600.8 887.9 603.1 883.3 604.9 879.8 608.5 875.9 611.6 871.3 613.7 866.6 615.4 861.7 616.1 856.8 615.2 851.8 614.6 846.8 614.1 842.1 612.5 838.7 608.9 833.9 607.4 830.6 603.7 826.4 600.9 824 596.5M574 448.6L570.2 451.8 566 454.6 562 457.6 559.1 461.7 556 465.6 552 468.7 547.2 469.9 542.6 471.9 537.6 471.5 532.7 472.4M262 367.7L262 372.7 262.4 377.7 263.3 382.6 265.6 387.1 269.8 389.7 274.8 389.9 279.3 392.1 282.6 395.9 286.9 398.3 291 401.2 296 401.7 300.2 404.4 303.6 408 308.3 409.9 312.9 411.7 317.1 414.5 322.1 414.7M619.5 330.1L623.6 332.9 627.6 336 629.9 340.4 632.4 344.7 634 349.4 636.1 354 639.9 357.3 644.6 358.8 649.6 359.4 654.1 361.6M1074.6 260.5L1070 262.3 1065 261.7 1060.9 258.9 1056.6 256.3 1054.3 251.9 1050.7 248.4 1047.1 245 1042.9 242.2 1039.9 238.2 1036.4 234.6 1032.6 231.4 1027.8 229.9 1022.9 230.8 1018.1 229.4 1014.8 225.6M191.2 616.9L190.3 612 190.9 607 192.8 602.4 192.2 597.4 191.7 592.4 190.8 587.5 188.8 582.9 187.5 578.1M219.3 303.8L219.1 308.8 217.7 313.6 215.9 318.3 214.4 323 210.8 326.6 209.4 331.4 210.2 336.3 210.1 341.3 208.5 346 207.5 350.9 207.2 355.9 206.3 360.8 206.7 365.8 204.8 370.4 201.1 373.8 196.4 375.4 191.4 375.6 186.6 377 182.4 379.8M305 267.6L304.6 272.6 302.9 277.3 299.2 280.6 296.2 284.6 293.7 289 290.5 292.8 285.8 294.6 280.8 294.2 276 293.1 271.1 292 266.2 290.9 262.5 287.5 257.9 285.7 254.6 281.9 253.5 277 253.6 272 252.8 267.1 253 262.1 252.7 257.1 251.5 252.2M663.5 299.1L665.5 294.5 667.2 289.7 667.6 284.8 670.1 280.4 672.2 275.9 671.9 270.9 672.7 266 675.6 261.9 679.6 258.9M1045.6 4.3L1050.6 4.6 1055.6 4.5 1060.4 2.9 1065.3 3.4 1069.7 5.9 1072.6 10 1076.4 13.2 1080.6 16 1085.2 17.7 1089.6 20.2 1093.7 23 1098.6 24 1103.4 25.5 1108.4 25.1 1113.2 23.8M779 199.3L775.1 196.1 771 193.3 767.1 190.2 763.5 186.7 758.8 185.1 753.8 185.4 748.9 186.4M486.7 206L481.8 206.4 476.8 205.8 472.1 207.3 467.8 210 462.8 210.2 457.8 210.5 453.4 212.8 448.5 213.9M371.8 23.6L376.8 24 381.4 26.1 385.3 29.1 389 32.5 392.8 35.7 397.2 38.1 401.6 40.5 406.6 41 411.6 41.3M1119.1 56.7L1114.8 59.4 1109.9 60.1 1105.4 62.4 1100.9 64.4 1095.9 64.2 1091.3 66.2 1087.1 68.9 1082.8 71.5 1078.9 74.6 1076.1 78.7 1075.4 83.7 1074.6 88.6 1072.2 93 1070.4 97.7 1069 102.5 1066.2 106.7 1064.3 111.3 1061.4 115.3M449.6 157.1L444.7 156 440.3 153.7 435.9 151.4 432.9 147.4 429.2 144 427.1 139.4M839.4 550.2L844.4 551 849.4 551 853.8 548.7 858.1 546 861.7 542.6 863.3 537.9 864.3 533 867.7 529.3 870.7 525.3 874.3 521.8 879 520 882.8 516.8 886.3 513.2M945.2 401.8L940.7 399.7 936.9 396.4 933.1 393.2 928.2 392 923.9 389.4 921 385.3 917.4 381.9 913.7 378.5 911.2 374.2 907.5 370.8 902.7 369.4M678.8 144.9L681.1 140.4 684.7 137 687.8 133.1 690 128.6 693.5 125 696.4 120.9 697.7 116.1 698.4 111.2 698.2 106.2 696.1 101.6 692.2 98.6 688.5 95.2 683.9 93.1 679.5 90.7M695.6 179.8L695.8 184.8 694.4 189.6 692.8 194.3 689.7 198.3 687 202.5 684.1 206.6M397.1 346.8L400.6 343.2 403.1 338.9 405.5 334.5 406.1 329.5 407.3 324.7 409.7 320.3 412.2 316 416.2 312.9 419.7 309.4 423.4 306 427.2 302.8 429.1 298.2 430.6 293.4 431 288.4 432.3 283.6 433.5 278.7M782.5 131.4L786.7 134.1 789.3 138.3 791.7 142.7 793 147.5 794.3 152.4M538.7 308L542.9 310.9 545.4 315.2 548 319.4 548.8 324.4 549.9 329.2 552.3 333.6 555.1 337.8 557.4 342.2 561.3 345.3 565.4 348.3 569.7 350.7M648.4 640.2L648.7 645.2 646.9 649.9 647.2 654.9 649.9 659.1 651.2 663.9 650.1 668.8 649.6 673.8 651.6 678.4 652.3 683.3 653.1 688.3 652.7 693.3 654.3 698 653.7 703 653.6 708 653.2 713 651.5 717.7 648.4 721.6 646.5 726.2 644.6 730.8 641.7 734.9 640 739.6M738.1 376.4L742.1 379.4 744.3 383.9 747 388.1 750.3 391.9 752.3 396.5 752.3 401.5 753.1 406.4 754 411.3 756.1 415.9 759.9 419.1 763.6 422.4 768.5 423.4 773.3 424.8 777.5 427.5 781.9 430 786.6 431.6 791.6 431.8 796.6 431.7 801.6 431.5 806 433.8 810.6 435.8 814.1 439.4M610.5 349L606.9 345.5 603.3 342.1 600.3 338.1 596.6 334.7 593.7 330.6 590.1 327.1 586.9 323.3 583.2 319.9 579.2 316.9 576.5 312.7 572.5 309.8 567.7 308.4 562.7 308.7 558.2 306.5 553.7 304.2 548.7 304M216.8 327L212.2 329 207.7 331 203.2 333.2 199 336 194.1 337.2 189.5 339.1 184.6 340 180.9 343.3 175.9 344.2 171 344.6 166.7 347.2 163 350.6 161.6 355.4 162.2 360.4 162.2 365.4 161.5 370.3M1115.6 658.6L1112.6 654.6 1111.9 649.6 1111.4 644.7 1111.8 639.7 1113.6 635 1113 630 1111.7 625.2 1109.4 620.8 1107.3 616.2M94.2 231.6L96.5 236.1 98.5 240.7 100.5 245.2 103.5 249.3 107.1 252.7 109.9 256.9 111.5 261.6 112.1 266.6 112.6 271.5 114.7 276.1 118.6 279.2 123.5 280 127.6 282.9 132 285.3 134.6 289.5 138.4 292.7 143 294.7M467.1 249.4L466.6 254.3 466.4 259.3 465.4 264.2 465.3 269.2 466.4 274.1M944 106.3L939.3 107.9 934.4 108.7 929.8 110.8 925 112.1 920 111.4 915.3 109.7 910.7 107.9 905.7 107.7 901.1 109.8 897.6 113.4 894.7 117.5 892.4 121.9 889.4 125.9 885.5 129 880.8 130.7 875.9 131.9 871.5 134.2M125.7 337.1L123.2 341.5 120.7 345.8 118.4 350.3 115.3 354.2 111.8 357.7 109.8 362.3 109.6 367.3 108.3 372.1 104.9 375.8 102.5 380.2 100.5 384.8 96.6 387.9 94.2 392.3 91.6 396.6 90.1 401.3 90 406.3 89.1 411.2 86.6 415.6M557.3 556.7L557 551.7 557.5 546.7 557.6 541.7 559.4 537 559.9 532.1M1091.5 598.9L1091.9 594 1094.6 589.8 1096.3 585 1099.4 581.1 1101.1 576.4 1103.4 572 1105.1 567.3 1108.3 563.4 1111.7 559.8 1116.1 557.3 1119 553.2 1121.2 548.8 1122.6 544 1125.5 539.9 1127.7 535.4 1130 530.9M1099.4 393.5L1099.4 388.5 1101.9 384.1 1104.4 379.8 1107 375.5 1110 371.5 1110.6 366.6 1108.6 362 1104.9 358.6 1103 354 1101.7 349.2 1101.4 344.2 1101.1 339.2 1101.9 334.3 1103.4 329.5 1104.2 324.6 1105.6 319.8 1104.4 314.9 1102.8 310.2 1101.2 305.4 1098.7 301.1M150.8 335.4L155.7 336.7 160.2 338.8 165.2 338.8 170 337.3 174.7 335.6 179.2 333.6 182.4 329.7 186.2 326.4 188 321.7 187.7 316.8 186 312 185.8 307 183.5 302.6 181.4 298.1 181.7 293.1 183.1 288.3 184.1 283.4 185.5 278.6M420.5 516.7L416.8 513.4 411.9 512.3 406.9 512.9 402 512.5 397.6 510 392.8 508.6 387.9 507.8 382.9 508.1 377.9 508.3 372.9 508.7 368 507.8 363.1 508.5 358.4 506.6 354.5 503.6M166.9 395.8L171 392.9 175.9 392.2 180.5 390.2 183.6 386.3 186.6 382.3 190.4 379.1 194.7 376.6 199.4 374.8 204.4 375.3 208.6 378.1 213.4 379.6 218.3 378.6 223.2 378.1M545.4 10.9L550.1 9.2 553.6 5.7 555 0.9 557.9 -3.2 560.1 -7.7 560 -12.7 561.8 -17.4M39.5 46.9L42.5 50.9 45.1 55.2 48.7 58.6 52.9 61.3 57 64.2 60 68.3 61.5 73 64.6 76.9 69.1 79.1 73.9 80.7M1123.1 620.1L1123 615.1 1121.7 610.3 1121 605.3 1119.3 600.6 1116 596.8 1112.6 593.2 1109.6 589.2 1105.1 587 1101.4 583.7 1098.8 579.4 1096.8 574.8 1094.3 570.5 1089.9 568.1 1085.2 566.4 1080.2 566.7 1075.2 566.4 1070.5 564.6 1065.6 563.5 1062 560.1 1058.8 556.2M826.6 495.7L828.8 491.2 829.8 486.3 831.7 481.7 833 476.9 834.3 472.1 835.6 467.3 836.9 462.4 839.3 458.1 839.2 453.1 839.7 448.1 839.3 443.1 841.2 438.5 843.4 433.9 847.2 430.8 851.7 428.6 856.7 428.3 861.3 426.2 866.2 425.6M829.8 638.7L830.9 643.6 829.9 648.5 829 653.4 826.1 657.4 823 661.3 819.9 665.2M944.6 351.1L946.2 355.8 949.4 359.6 953.3 362.8 957.8 365 962.1 367.4 966.9 368.9 971.3 371.3 975.8 373.4 980.6 374.8 985.2 376.8M992.1 525.5L988.8 529.2 984.2 531.3 979.4 532.6 974.4 533.2 970.3 536 965.8 538.2 960.8 538 955.9 539.2 951.1 537.8 946.2 536.7 941.6 534.9 936.6 535.7 931.8 534.5 926.9 533.3 922.2 531.9 917.3 530.8 912.3 531 907.9 528.6 903.9 525.6M1007.7 473.9L1007 478.8 1004.8 483.3 1002.8 487.9 1001.3 492.6 997.6 496 995 500.3 992.4 504.6 990.7 509.3 987.3 512.9 983.6 516.3 979.8 519.6 977.3 523.9 974.9 528.3M297.3 2L299.8 6.4 304.2 8.7 307.9 12.1 312.8 13.2 317.7 13.9 322.6 14.9 326.8 17.6 331.7 18.6 336 21.2 340.5 23.3 344.2 26.6 348.9 28.5 353.2 31 357.4 33.7 362.4 34.1M406.3 617.9L411.3 618.6 416.2 618.4 421.1 617.2 426 616.3 430.1 613.3 434.9 611.9 439.8 611.2 444.2 608.8 449.2 608.5 454.2 609M400.8 489.4L399.4 494.2 396.7 498.4 394 502.6 393.9 507.6 394.8 512.6 397.3 516.9 401.5 519.6 406.4 520.4 411.4 519.8 416.4 520 421.4 520.7 425.8 523M618.2 270.2L616.4 274.8 612.5 277.9 609.2 281.7 604.9 284.3 600.2 285.9 595.9 288.4 591.3 290.5 586.4 291.5 581.8 293.4M32.9 263.9L37.4 261.7 40.1 257.6 40.4 252.6 39.3 247.7 40.2 242.8 38.5 238.1 35.7 233.9 35.1 228.9 32 225M105.6 102.5L100.7 103.4 96.4 106 93.5 110 88.9 112.2 85.8 116.1 82.1 119.4 78.1 122.5 76.3 127.1 73.9 131.5 71.1 135.7 70.4 140.6 72.4 145.2 76 148.7 80.3 151.1 85.3 151.6 90.1 153.2 94.7 155.1M454.7 149.7L457.3 153.9 457.8 158.9 457.9 163.9 455.6 168.3 454.2 173.1 454.5 178.1 453.6 183M1228.8 619.7L1227.5 614.9 1228.7 610.1 1232.2 606.5 1236.9 604.8 1241.9 604.1 1246.7 605.3 1250.5 608.6 1255.1 610.6 1259.5 612.9 1264.1 615 1268.9 616.4 1273.1 619.1 1276.1 623 1278.1 627.7 1282.1 630.6 1287 631.8 1292 631.6 1296.6 633.5 1300.9 636.1 1304.8 639.2M485.5 90.6L485.8 95.6 486.3 100.6 486.1 105.6 487.6 110.4 488.5 115.3 487.5 120.2 489 125 489.2 130 491.6 134.4 492.7 139.3 494.9 143.8 498.4 147.3 501.2 151.4 503.4 155.9 505.7 160.4 506.1 165.4 505.9 170.4 506.8 175.3M738.3 613.6L739 618.5 737.5 623.3 736.2 628.1 733.7 632.4 731.7 637 727.7 639.9 722.8 641 717.8 641.2 712.8 641.6 707.8 641.2 703.3 643.3 699.4 646.5 697.7 651.2 694.2 654.7 689.8 657.1 685.8 660 682.7 664 678 665.7 673.4 667.5 670.2 671.4 667.6 675.7 664.2 679.3M891.9 532.2L888.5 535.8 883.8 537.5 878.8 537.7 873.8 538 868.8 538 864.4 540.5 860.4 543.5 856.1 546M520 88.1L515.7 90.5 511.1 92.6 506.7 95 501.8 95.6 497.7 98.6 493.3 100.9 489.2 103.7 484.6 105.7 480.4 108.5 477.9 112.8 473.7 115.5 468.7 115.6 464.1 113.6 459.3 112.2 455 109.6 450.7 107.1M1094.4 241.3L1094.9 236.4 1096.2 231.5 1098.6 227.1 1099 222.2 1097.4 217.4 1094.2 213.6 1090.6 210.1 1087.4 206.3 1083 203.9 1078.5 201.8 1074.1 199.3 1070 196.5 1066.8 192.7 1063.8 188.7 1061.1 184.5M308 593.6L303.1 592.5 298.2 591.7 294.3 588.5 291.3 584.5 288 580.8 283.5 578.6 278.5 578.6 274.1 580.9 270.1 584 267.5 588.2 265 592.6 261.9 596.5 259.7 601 259.6 606 258.1 610.8 257.2 615.7 255.4 620.4 252.1 624.1 251 629M692.3 613.9L692.1 618.9 691.4 623.8 688.3 627.8 684.3 630.7 680.1 633.5 677.6 637.8 675.8 642.4 676.4 647.4 677.7 652.2 676.5 657.1 677.4 662 680.6 665.9 682.5 670.5 685.7 674.3 688.7 678.3 691.4 682.5 692.1 687.5 694 692.1 693.7 697.1 691.6 701.7 690.4 706.5M408.3 199L406.7 194.3 407.4 189.3 409.2 184.7 408.3 179.7 405.5 175.6M854.8 534.5L853.1 539.2 854 544.1 857.1 548 858.5 552.8 858.4 557.8 857.2 562.7 857.4 567.7 858.3 572.6 859.8 577.4 862.2 581.8 865.7 585.3 869 589.1 873.7 590.8M280.6 377.3L277.8 373.1 273.6 370.5 269.9 367.1 267.2 362.9 263.7 359.3 259.2 357 255.6 353.6 251.1 351.3 246.1 351.2 241.3 350 236.3 349.4 231.3 349.1 226.4 349.8 221.7 351.5 218.3 355.3 217.3 360.1 214.3 364.2 210.7 367.6 206 369.3M35.1 158.8L39.1 155.8 44 154.9 48.9 153.9 53.9 153.7 58.6 155.3 63.5 154.3 67.8 151.8 71.5 148.4 76 146.3 80.4 143.8M534.2 370L531.4 365.9 527.8 362.3 526.4 357.6 523.1 353.8 520.5 349.5 517.2 345.7 514.6 341.5 510.4 338.8 506.6 335.5 503.8 331.4 502 326.7 499.1 322.7 497.1 318.1 497.7 313.1 499 308.3 500.2 303.4 502.3 298.9 505 294.6 509.3 292.1M769.4 23.1L773.1 19.8 776.6 16.3 778.3 11.5 778.1 6.5 778.9 1.6 781.6 -2.6 784.9 -6.3 789.1 -9.1 793.7 -11 797.7 -14 802 -16.6 805.2 -20.4M979.6 601.9L980.4 597 979.2 592.1 978.4 587.2 975.3 583.2 971.7 579.7 967.4 577.2 963 574.9 958 574.7 953.1 575.8 948.2 574.8 943.4 576.2 938.9 578.3 934.8 581.2 932.3 585.5 932 590.5 930 595.1 926.9 599 923.5 602.7M361.3 339.6L362.2 344.5 361.7 349.5 360 354.2 360 359.2 362.2 363.7 363 368.6 365.7 372.8 366.3 377.8 366.5 382.8 364 387.2M613 279.2L615.4 274.8 616.6 270 617.7 265.1 620.9 261.3 622.6 256.6 625.5 252.5 626.6 247.6 627.1 242.7 628.9 238 630.3 233.2 633 229 635.7 224.8 637.2 220 636.6 215.1M820 193.2L822.5 188.9 826.4 185.8 829.6 181.9 833 178.2 834.5 173.5 837.5 169.5 839.1 164.7 840.5 159.9 843 155.6 846.4 152 849.7 148.2M372.9 156.3L370.1 152.2 369.4 147.3 368.7 142.3 370.4 137.6 370.3 132.6 370.8 127.6 371.7 122.7 370.9 117.8 370.2 112.8 368.3 108.2 367.1 103.4 367.1 98.4 364.9 93.9 360.8 91.1 356.5 88.5 353 84.9 351.4 80.2 351 75.2 351.4 70.2 349.7 65.5 349.5 60.5 347.7 55.8M809.1 448.4L813.9 447.1 818.7 445.7 822.3 442.3 824.6 437.8 826.2 433.1 825.7 428.1 825.9 423.1 826.6 418.2 827.1 413.2 829.7 408.9 830 403.9 830.8 399 829.8 394.1 827.2 389.8 823.7 386.2 821.6 381.7 817.4 378.9M1068.3 19.6L1069.5 24.4 1068.7 29.3 1067.3 34.1 1063.9 37.8 1060.7 41.6 1059.6 46.5 1057.3 51 1054.5 55.1 1052.4 59.6 1050 64 1048.9 68.9 1046.4 73.2 1042.5 76.3 1037.9 78.4 1033 79.4 1028.1 78.8M583.9 282.8L580.6 279.1 577 275.7 573.2 272.3 568.5 270.6 564.3 267.9 559.7 266.1 555.3 263.6M1158.7 288.7L1163.3 286.7 1168.3 286.1 1173.2 286.9 1177.6 289.4 1182.2 291.3 1187.2 291.3 1192.2 291.5 1197 290.2M786.7 643.7L781.7 643.2 776.7 642.8 771.7 642.9 767 641.5 763.4 638 759 635.6M428.8 402.4L431.1 398 434.3 394.1 437.7 390.5 439.5 385.8 440.8 381 441.9 376.1 442.1 371.1 443.2 366.2 445.8 362 447.5 357.3 449.2 352.6 450.6 347.8 450.7 342.8 449.2 338 447.6 333.3M339.1 412.4L339.9 417.4 339 422.3 338.5 427.2 336.5 431.8 334 436.2 333 441.1M735.7 548.2L734 552.9 730.4 556.3 725.9 558.6 722.9 562.6 718.4 564.7 713.4 564.8 709.1 567.4 706 571.3M176.6 301.5L178.6 306.1 178 311.1 177.6 316 178.4 321 180.9 325.3 181 330.3 182 335.2 181.3 340.1 178.1 344 175.4 348.2 173.4 352.8 171.7 357.5 172.5 362.4 175 366.7 175.4 371.7 178.2 375.9 182.2 378.8 184.2 383.4 186 388.1 187.7 392.8M96.2 189L101.2 188.6 105.9 190.2 110.7 191.4 115.7 192.1 120.3 194.1 124.4 196.9 127.2 201.1 131.4 203.8 136.1 205.4 140.4 208 145.4 208.2 150.3 207.4 155.1 208.9 159.5 211.3 163.6 214.2 167.4 217.3 172 219.3 176.9 220.3 181.7 221.9M856 544.1L852.8 547.9 849.3 551.5 845.4 554.6 840.4 555.4 835.4 555.1 831.2 552.4 826.5 550.8 821.8 549 816.9 549.7 812.8 552.6 810.7 557.1 806.8 560.3 802.1 561.8 798 564.8 793.3 566.5 788.5 567.6 784.2 570.2 779.8 572.6 774.8 572.9 769.9 573.8 765 572.7 760.2 574.1M304 550.8L302 546.1 299.7 541.7 298.8 536.8 298.2 531.8 297.2 526.9 297.6 521.9 298.5 517 298.6 512 300.3 507.3 302.1 502.7 305.5 499 308.9 495.3 313.5 493.4M547.9 136.1L543.2 137.9 538.3 138.9 533.4 137.9 528.5 137 523.5 137.5 518.7 138.8 514 140.6 509 140.9 504.1 139.7M417.1 194.4L414.8 190 413.3 185.2 413.4 180.2 416 176 419.2 172.2 423 168.8 424.8 164.2 425.9 159.3 428.1 154.8 429.7 150.1M212.9 569.4L217.5 567.4 222.1 565.4 226.6 563.3 229.6 559.3 233.3 555.9 237.6 553.3 241.5 550.3 243.7 545.7 247.5 542.5 251.6 539.7 256.5 538.9 261.1 536.9 265.4 534.2 268.1 530 271 526 274.1 522 276.3 517.6M396.2 128.2L400 124.9 403 120.9 406 116.9 409.9 113.8 414.7 112.4 418.1 108.7 419.2 103.8 422.6 100.1 425 95.7 427 91.2 430.5 87.6 435.1 85.5 438.7 82.1 442.5 78.9M90.8 252L90.9 257 90.2 262 90 267 89.6 272 90.9 276.8 91.9 281.7 90.6 286.5 89.2 291.3 89.3 296.3 89.8 301.3 91.9 305.8 93.5 310.5 95.7 315 95.2 320 97.4 324.5 99.1 329.2 101.2 333.8 104.8 337.3 109.2 339.7 111.9 343.8M487.9 530.4L484.2 533.7 481.2 537.7 476.9 540.3 472.5 542.6 467.7 544.1 462.9 545.6 458.1 544.4 453.8 541.9 449 540.2 444 540.4 439 540.5 434.6 538.3 429.9 536.4 425.4 534.3 421.1 531.8 416.3 530.2 412 527.7 407.1 526.6 402.1 526.9 398 529.7 394.7 533.4 391.8 537.4M475.6 348.4L476.5 353.3 478 358.1 476.9 363 474.5 367.4 473.5 372.3M241 370.5L242.3 375.4 244.5 379.8 246 384.6 246.6 389.6 246.4 394.6 246.7 399.5 249.4 403.8 251.5 408.3 254.1 412.6 258.3 415.3 261.9 418.8M883.8 24.6L883.7 19.6 882.4 14.7 881.7 9.8 880.8 4.9 881.3 -0.1 883.1 -4.8 885.8 -9 886.7 -13.9 887.4 -18.8 890.4 -22.8 894.5 -25.8 896.6 -30.3 896.3 -35.3 894.2 -39.8 891.5 -44.1 890.8 -49 890.7 -54 892.8 -58.5 894.7 -63.2 894.5 -68.2 895.6 -73M274.7 415.6L274.5 420.6 273.4 425.5 274.1 430.4 276.7 434.7 278.8 439.2M1060.4 99.8L1055.4 99.9 1050.9 97.6 1048.2 93.4 1046 89 1044.8 84.1 1041.8 80.1 1041.2 75.1 1042.8 70.4 1044.8 65.8 1044.3 60.8 1045.6 56 1045.6 51 1046.8 46.1 1046.7 41.1M807.1 175.3L802.1 175.4 797.1 175 792.2 176.1 787.4 174.7 782.7 173 777.7 173.1 773.2 175.4 768.8 177.6 764.1 179.4 760.9 183.2 758.1 187.4 753.6 189.7 750.9 193.8M721.4 630L716.6 631.3 711.7 632.4 706.9 630.9 703.1 627.6 700.4 623.4 696.2 620.7 693.3 616.7 689.6 613.4 684.7 612.1 681.1 608.7 678.2 604.6 673.9 602.1 669 601.1 664 601.1 659.4 599.2 655.4 596.2 650.9 593.9M154.8 283.8L158.9 281.1 163.3 278.5 168.1 277.5 172.4 274.8 177.1 273.2 181.4 270.7 184.9 267 189 264.2 192.5 260.6 194.8 256.2 197.1 251.8 199.9 247.6 202.6 243.4 204.6 238.8 205.3 233.9 207.6 229.4 208.5 224.5 209.2 219.6 210.2 214.7 213.3 210.8 216.2 206.7 218.1 202.1M1115.1 406.2L1114 411.1 1111.3 415.3 1106.9 417.8 1104.4 422.1 1100.2 424.8 1096.6 428.3 1092.4 431 1087.7 432.7 1082.7 432.8 1078.4 435.3 1073.9 437.4 1069.4 439.6 1064.5 440.9 1060.5 443.8M1145.8 25.2L1143.4 20.8 1139.5 17.7 1134.6 16.4 1129.7 15.7 1124.7 16 1119.8 16.8 1115.4 19.2 1111.5 22.4 1107.4 25.3 1104.1 29 1100.3 32.2M506.6 213.5L501.7 213 496.8 214.1 492.1 215.9 489 219.8 487.4 224.5 485.2 229 481.5 232.4 477.9 235.8 473.2 237.7 468.3 238.4 463.4 239.5 458.4 240.2 453.9 242.3 449 243.4 445 246.3 440 246.7 435.5 249 431.3 251.6 426.7 253.7M1105.4 553.5L1106.9 548.7 1107 543.7 1105.8 538.8 1103.4 534.5 1102.3 529.6 1103.3 524.7 1101.7 520 1098 516.6 1093.3 514.9 1090.1 511 1085.6 508.8 1080.6 508.4 1075.7 509.4 1071.1 511.2 1066.3 512.7 1062.9 516.4M703.5 526.3L708.4 525.3 713.4 524.6 718.3 523.5 722.8 521.4 727.8 521.8 731.9 524.7 736.2 527.1 741.2 527.3 746.2 526.8M1035.9 193.8L1030.9 194.2 1026 193.8 1021 193.8 1016.2 192.2 1011.4 190.8 1007.4 187.8 1003 185.4 1000.5 181.1 998.8 176.4 995.2 172.9 992.9 168.5 993.1 163.5 992.9 158.5 990.2 154.3 989.2 149.4M1052.7 292.2L1051.1 297 1052 301.9 1051 306.8 1049 311.4 1045.8 315.2 1041.9 318.4 1037 319.4 1032.1 320.1 1028 323.1 1024.4 326.5 1021 330.1 1017.4 333.6 1013.9 337.2 1009.2 339 1004.8 341.4 1000.2 343.2 995.2 342.5 990.5 340.9 986.2 338.2M808 162.4L811.6 159 815.7 156 820.4 154.3 825.3 154.7 830 156.5 833.8 159.8 836.3 164.1 836.8 169.1M821.3 166.6L817.8 163.1 814.8 159.1 811.7 155.2 809.8 150.5 806.2 147 803.5 142.9 799.4 140 795.2 137.3 790.2 136.9 785.4 135.5 780.4 136 775.4 135.9 770.8 134.1 765.9 133 762.1 129.7 757.8 127.2 754.2 123.7 752.1 119.2M473 63.6L477.9 64.7 481.6 68 484.1 72.4 488.1 75.3 492.9 76.9 497.8 77.4 502.4 75.5 507.1 73.7 511.6 71.4 516.6 71.1 521.4 72.2 526.4 71.4 530.1 68.1M791.5 231.8L789.8 227.1 788.5 222.3 789.3 217.4 788.5 212.4 788.2 207.5 787.6 202.5 784.5 198.5 783.6 193.6 781.7 189 778.1 185.5 774 182.7 771.8 178.2 770.9 173.3 770.3 168.3 768.8 163.6M963.8 287.1L961.6 291.6 958.5 295.5 955.5 299.5 953.2 304 951.3 308.6 950.5 313.5 948.4 318.1 944.6 321.4 943 326.1 939.7 329.8 937.9 334.5 935 338.5 931 341.6 926.1 342.7 921.8 345.3 917.5 347.7 914.4 351.7 911.7 355.9 908.5 359.7 905.3 363.6 904.5 368.5 903.8 373.5M1094.1 138.7L1092.4 143.4 1089.6 147.6 1085.7 150.6 1081.4 153.2 1076.5 154.2 1071.5 154.6 1066.6 153.8 1062.1 151.5 1057.1 151.3 1052.2 151.9 1047.4 150.3 1044.2 146.5 1039.8 144.1 1035.8 141.1 1031 139.8 1026.1 140.7 1021.7 143.1M752.5 260.4L751.5 255.5 752.3 250.6 751.2 245.7 752.8 241 754.7 236.4 757 231.9 759.4 227.5 761.1 222.8 763 218.2 764.2 213.3 767.1 209.3 769.5 204.9M764.3 172.1L762.8 167.3 760.9 162.7 759.7 157.8 760.9 153 763.9 149 765.5 144.3 767.4 139.6 768.1 134.7 770.8 130.4 774.4 127 778.8 124.7 783.7 123.6 788.1 121.3 792.9 119.8M307.8 52.2L303.6 54.8 300.4 58.7 297 62.3 295.2 67 291.9 70.8 288.6 74.5 287.5 79.4 284.2 83.1 281.3 87.2 276.9 89.6 273.9 93.7M1094.1 219.5L1098 216.4 1102.2 213.7 1106.2 210.8 1110.3 207.8 1113.1 203.7 1117.4 201.1 1122.2 199.9 1127 201.4 1131.7 203.1 1136.7 203.1 1141.3 205.1 1145.6 207.7 1150.1 210 1155 210.5 1160 209.7M841.2 409.4L840.9 404.4 838.5 400 838.4 395 836.4 390.4 835.2 385.5 832.1 381.6 828.1 378.6 824.1 375.7 821.6 371.3 821.2 366.4 820.8 361.4 822.5 356.7 825.3 352.5 828.4 348.6 831.8 344.9 834 340.4 833.8 335.4 835.2 330.6 834.4 325.7 836.3 321.1 839.2 317 843.2 314.1M482 480.2L483.6 484.9 485.4 489.6 488.2 493.7 492.4 496.5 496.6 499.2 500.6 502.2 504.4 505.4 509.1 507.2 514.1 507.4 519 506.8M1178.4 226L1173.8 224.1 1169.5 221.6 1164.6 220.6 1159.7 219.7 1154.7 219.7 1149.7 219.6 1144.9 218.2 1140.3 216 1136.4 212.9 1134.1 208.5 1132.4 203.8 1129.4 199.8 1126 196.1 1121.4 194.2M18 493.6L13.1 492.6 8.7 490.2 4.6 487.3 2.3 482.9 2 477.9 4.1 473.4 7.9 470.1 11.9 467.1 16.5 465.1 21.5 464.9 26.4 464 30.5 461.1 33.1 456.8 35.3 452.4 36.3 447.4 37.9 442.7 41.1 438.9 42.1 434 44.2 429.4M977.5 530.7L978.1 525.7 980.5 521.3 984.6 518.6 989.4 517 994.4 517.3 999.3 516.3 1003.3 513.4 1006.7 509.7 1009.8 505.8 1014.4 504 1019.3 502.7 1022.9 499.3 1027.7 498 1032.7 497.7 1037.5 496.1 1041.4 493 1046.3 492.1 1050.4 489.3M608.4 635.3L605 639 602.7 643.4 601.8 648.3 598.7 652.2 598.1 657.2 596.2 661.8 593 665.6 590.7 670.1 590 675 588.9 679.9 590.1 684.7 593.7 688.2 597.6 691.4 600.7 695.3 602.8 699.8 606.4 703.4 609.1 707.6 611.5 711.9 613 716.7 613.3 721.7M893.7 122.7L897.2 119.2 899.1 114.5 899.5 109.6 900 104.6 899.7 99.6 900.7 94.7 902.8 90.2 905.5 86 907.3 81.3 908.7 76.5 911.4 72.3 914.9 68.7 916.4 64 917.7 59.1 918.7 54.2 919.2 49.3 921.4 44.8 924.4 40.7 927.8 37.1 929.7 32.4 931.1 27.6 931.5 22.7M832.1 226.1L836.2 228.9 839.5 232.7 841.1 237.4 844.5 241.1 848.3 244.4 850.1 249 850.7 254 850.8 259 850.3 264M584.3 287.6L587.2 291.7 589 296.3 588.6 301.3 588.5 306.3 588.7 311.3 587.6 316.2 585.5 320.7 585.2 325.7 582.8 330.1 579.8 334.1 577.4 338.5 576.2 343.3 575.9 348.3 574.4 353.1 570.8 356.6 569 361.2 568.1 366.1 566.9 371 565.1 375.7 564.6 380.6 565 385.6M93.1 191.4L97.6 193.7 101.8 196.3 105.1 200.1 109.8 201.8 113.3 205.5 116.5 209.3 119.8 213 121.2 217.8 122.7 222.6 124.6 227.2 127 231.6 128.8 236.3 129.3 241.3 127.4 245.9 123.8 249.4 120.9 253.4 117.3 256.9 113.2 259.8M975.7 458.9L978.2 463.3 981.4 467.1 985.2 470.3 989.4 473.1 993.4 476.1 998.1 477.8 1002.7 479.7 1006.2 483.3 1011 484.6 1015.8 486 1020.8 485.5 1025.1 483 1030.1 482.8 1035.1 482.8 1040.1 483.3 1045 482.8 1049.8 484.4 1054.8 484.4M361.8 430.8L360.1 426.1 358 421.5 354.8 417.7 351.2 414.2 347.8 410.6 343 409.1 339 406.2 334.9 403.3 330 402.3 325.7 399.7M513.3 88.9L508.8 91 504.3 93.2 500.2 96.1 495.9 98.6 491.5 101 487.9 104.4 483.8 107.4 479.1 108.9 474.1 109.1 469.4 110.7 465.1 113.3 462.5 117.6 461.4 122.5 460.6 127.4 457.8 131.6 454.3 135.1 450.3 138.1 445.5 139.6 441.7 142.9 438.3 146.5 437.1 151.4M493.2 60.9L495.9 65.1 496.4 70.1 495.3 74.9 496 79.9 497.7 84.6 498.3 89.5 498.7 94.5 500.9 99 504.5 102.5 507.1 106.8 510 110.9 514.2 113.5 519.1 114.8M576 352.5L576.5 347.5 576 342.5 576.8 337.6 577.5 332.6 578.6 327.7 580.5 323.1 581.9 318.3 581.2 313.4 579.4 308.7 578.1 303.9 575.2 299.8 571.7 296.2 568.8 292.1 564.4 289.8 559.7 288 555.1 286.2 550.6 284M691.8 243.9L695.7 247 700.3 249 704.1 252.2 707.3 256 712.1 257.6 717 258.5 721.4 260.8 724.3 264.9M933.1 267.1L929.9 271 925.7 273.7 921.1 275.5 916.1 276.1 911.8 278.7 907.6 281.3 902.6 281.7 897.9 280 893.1 278.8M633.4 570.9L628.4 571.6 623.6 570.1 618.7 569.2 613.9 570.3 609.8 573.2 606.1 576.6 602.2 579.7 597.9 582.2 595.1 586.4 593.6 591.1 594.1 596.1 595.3 601 598.7 604.6 603.3 606.7 608.2 607.6 613.2 607.7" fill="none" stroke="#a9d3e6" stroke-width=".8" opacity=".8"/>
<path d="M0 19C0.6 19.7 2.2 22.4 3.5 23.5C4.8 24.5 6.3 24.5 7.7 25.3C9.1 26.1 10.4 27.7 11.8 28.3C13.2 28.9 14.6 28.5 16 29C17.4 29.5 18.8 30.9 20 31.6C21.1 32.2 21.4 32.3 23 32.9C24.6 33.5 27.8 34.3 29.5 35.4C31.1 36.4 31.5 38.2 33 39C34.5 39.8 36.8 39.9 38.7 40.2C40.6 40.5 42.6 40.6 44.4 40.9C46.1 41.2 47.3 41.3 49 42.1C50.8 43 53.6 45.5 55 46C56.4 46.5 56.9 45.3 57.7 45.2C58.6 45 59.2 45.7 60 45.3C60.8 45 61.6 43.5 62.5 43C63.3 42.4 64.4 41.4 65 42C65.6 42.6 65.1 44.8 65.9 46.5C66.6 48.1 68.9 50.3 69.7 51.9C70.5 53.6 70.6 54.7 70.6 56.4C70.7 58 69.5 60.3 70 62C70.5 63.7 72 65.2 73.7 66.3C75.3 67.4 78.2 68.1 79.9 68.6C81.6 69.2 82.6 69.5 83.9 69.7C85.3 70 87.2 69.3 88 70C88.8 70.7 88.3 72.7 88.8 73.7C89.4 74.7 90 75.3 91.1 76.1C92.1 76.9 94.2 77.7 95.3 78.5C96.5 79.4 97.2 80.9 98 81C98.8 81.1 99.1 79.5 100.1 79C101.1 78.4 102.6 78.1 103.8 77.9C104.9 77.7 105.9 77.8 107.1 77.7C108.3 77.5 110.2 76.4 111 77C111.8 77.6 111.3 80.3 111.7 81.6C112 82.8 112.7 83.4 113.1 84.4C113.5 85.5 113.4 87.2 114 88C114.6 88.8 115.7 88.8 116.6 89.3C117.6 89.7 118.4 90.1 119.7 90.8C120.9 91.4 122.8 93.4 124 93C125.2 92.6 125.8 89.6 126.8 88.7C127.8 87.7 128.8 87.4 130 87.1C131.3 86.7 132.9 86.9 134.1 86.6C135.2 86.3 136 85 137 85C138 85 138.8 86.1 139.8 86.7C140.8 87.2 141.8 88.1 143.1 88.3C144.3 88.5 145.6 87.4 147.3 87.7C148.9 88 151.8 89.2 153 90C154.2 90.8 153.9 91.7 154.7 92.6C155.4 93.5 156.4 94.3 157.7 95.1C158.9 96 160.8 97.4 162.2 97.9C163.6 98.3 164.8 98.1 166 98C167.2 97.9 168.5 97.9 169.6 97.5C170.8 97.2 171.8 96.2 172.9 96C174 95.8 175 96.3 176.4 96.1C177.7 96 179.7 94.6 181 95C182.3 95.4 182.4 97.7 184 98.7C185.5 99.8 188.6 100.8 190.3 101.3C191.9 101.8 192.5 101.3 194 101.6C195.5 101.9 197.6 102.7 199 103C200.4 103.3 201.4 103.5 202.6 103.4C203.8 103.2 205.3 102.5 206.4 101.9C207.4 101.3 208.1 100.3 209 99.6C210 99 211.3 98.7 212 98C212.7 97.3 212.4 96.3 213 95.3C213.6 94.4 214.6 93.2 215.7 92.5C216.9 91.7 218.7 91.7 219.7 90.9C220.8 90.2 221.1 89.5 222 88C222.9 86.5 224.1 83.8 224.9 82.2C225.6 80.6 225.5 79.7 226.6 78.2C227.7 76.7 229.6 74.8 231.5 73.4C233.4 72.1 236.4 71.3 238 70C239.6 68.7 240 67.1 241.2 65.7C242.3 64.3 243.8 62.9 244.8 61.6C245.8 60.3 246.7 59.6 247.3 58C247.8 56.4 247.4 53.5 248 52C248.6 50.5 249.7 49.8 250.6 49.1C251.4 48.5 252 48.5 253.3 47.9C254.5 47.3 256.9 46.6 258.2 45.7C259.5 44.7 260 42.4 261 42C262 41.6 263.1 42.7 264.5 43.3C265.8 43.8 267.8 44.9 269.1 45.4C270.4 45.9 271.1 46.3 272.4 46.4C273.8 46.5 275.5 45.8 277 46C278.5 46.2 280.1 47.2 281.3 47.4C282.5 47.6 283 47 284.4 47.2C285.8 47.3 288.1 47.8 289.5 48.1C291 48.5 291.9 48.4 293 49C294.1 49.6 295.3 50.6 296.2 51.5C297.2 52.5 297.7 54 298.8 54.8C299.9 55.6 301.5 55.4 302.7 56.1C303.9 56.8 304.8 59 306 59C307.2 59 309.1 57 309.9 56C310.8 55 311 54 311.3 53.1C311.7 52.3 312.3 51.7 312 51C311.7 50.3 310.4 49.9 309.5 49C308.7 48.1 307.6 46.7 307 45.4C306.3 44.2 306.1 42.5 305.4 41.4C304.8 40.4 302.7 39.7 303 39C303.3 38.3 306.1 38 307.3 37.4C308.5 36.8 309.2 36.2 310.4 35.4C311.6 34.6 313.3 33.5 314.4 32.5C315.5 31.4 315.4 29.9 317 29C318.6 28.1 321.3 27.8 323.8 27.1C326.2 26.5 329 26 331.9 25C334.7 24.1 338.2 22.7 340.7 21.4C343.2 20.1 344.3 17.6 347 17C349.7 16.4 353.8 17.5 356.9 17.5C360 17.5 362.9 17.8 365.7 17.2C368.5 16.5 370.4 15 373.6 13.3C376.8 11.6 381.3 7.7 385 7C388.7 6.3 392.1 9.1 395.7 9.2C399.3 9.3 402.6 7.8 406.8 7.5C411 7.2 416.7 8.1 421 7.3C425.4 6.6 430.1 3.2 433 3C435.9 2.8 436.6 5.6 438.4 6.3C440.1 7 441.7 6.6 443.5 7.2C445.3 7.8 447 9.3 449.1 9.7C451.2 10.2 453.3 9.7 456 10C458.7 10.3 462.5 11.8 465 11.7C467.5 11.7 469.2 10.2 471.1 9.6C473 9.1 474.8 8.8 476.6 8.4C478.4 8 479.4 6.9 482 7C484.6 7.1 489.1 8.4 491.9 9.1C494.8 9.7 495.7 10.5 498.9 10.7C502.1 10.8 507.3 10.7 511 10.1C514.7 9.4 517 8.1 521 7C525 5.9 530.7 4.6 534.8 3.4C538.9 2.1 541.9 0.1 545.6 -0.5C549.3 -1.1 553.5 -0.4 557 -0.2C560.6 0.1 563.7 -0.5 567 1C570.3 2.5 573.3 6.7 576.6 8.8C579.8 10.9 583.5 12.7 586.6 13.5C589.7 14.4 592 12.9 595.4 13.8C598.8 14.7 604.5 17.3 607 19C609.5 20.7 608.9 22.4 610.4 24.2C611.9 25.9 613.8 28.1 615.9 29.6C618 31.1 621.1 31.6 623 33.1C624.8 34.7 625.5 37.8 627 39C628.5 40.2 630.3 39.3 632.1 40.3C634 41.3 636.2 43.5 638 44.9C639.8 46.2 641.5 46.8 643 48.3C644.5 49.8 646.3 53.1 647 54" fill="none" stroke="#a3cfe2" stroke-width="2.6" stroke-linecap="round" stroke-linejoin="round"/>
<path d="M0 70C0.9 69.5 3.3 67.8 5.1 66.9C6.9 66 8.5 64.7 10.8 64.4C13 64.1 16.2 65 18.7 65.1C21.2 65.2 24.1 64.9 26 65C27.9 65.1 28.5 65.3 30.2 65.8C31.9 66.2 34.3 67.5 36.3 67.6C38.3 67.7 39.9 66.5 42 66.1C44.1 65.7 47.3 66 49 65C50.7 64 50.7 61.3 52.2 59.9C53.6 58.6 56.6 58.7 57.9 56.8C59.2 54.8 58.8 50.7 59.9 48.2C61.1 45.8 64.2 43 65 42" fill="none" stroke="#a3cfe2" stroke-width="2" stroke-linecap="round" stroke-linejoin="round"/>
<path d="M647 54C649.7 55.3 658.7 59.3 663 62C667.3 64.7 667.5 69.2 673 70C678.5 70.8 687.8 68.3 696 67C704.2 65.7 714 62.3 722 62C730 61.7 738 62.5 744 65C750 67.5 752.5 74.2 758 77C763.5 79.8 770.5 83.2 777 82C783.5 80.8 789.3 71.5 797 70C804.7 68.5 815.5 73 823 73C830.5 73 836.7 73.2 842 70C847.3 66.8 849.5 56.7 855 54C860.5 51.3 869 53 875 54C881 55 885.5 58.2 891 60C896.5 61.8 902.5 62.2 908 65C913.5 67.8 920.8 71.5 924 77C927.2 82.5 926.5 94.5 927 98" fill="none" stroke="#a3cfe2" stroke-width="4.2" stroke-linecap="round" stroke-linejoin="round"/>
<path d="M927 98C929.2 100.7 936.2 109.5 940 114C943.8 118.5 948.2 121.2 950 125C951.8 128.8 951.7 132.3 951 137C950.3 141.7 946.8 150.3 946 153" fill="none" stroke="#a3cfe2" stroke-width="7.5" stroke-linecap="round" stroke-linejoin="round"/>
<path d="M946 153C946.2 155.2 944.7 161.7 947 166C949.3 170.3 955.2 175.2 960 179C964.8 182.8 972.8 185.2 976 189C979.2 192.8 975.2 198.2 979 202C982.8 205.8 992.3 208.2 999 212C1005.7 215.8 1010.8 221.5 1019 225C1027.2 228.5 1041 230.3 1048 233C1055 235.7 1057.8 236.8 1061 241C1064.2 245.2 1065.3 253.8 1067 258C1068.7 262.2 1069.3 261.7 1071 266C1072.7 270.3 1072.7 278.5 1077 284C1081.3 289.5 1089.5 294.5 1097 299C1104.5 303.5 1112.8 306 1122 311C1131.2 316 1142.8 323.5 1152 329C1161.2 334.5 1168.7 338.2 1177 344C1185.3 349.8 1193.3 358.2 1202 364C1210.7 369.8 1224.5 376.5 1229 379" fill="none" stroke="#a3cfe2" stroke-width="4.5" stroke-linecap="round" stroke-linejoin="round"/>
<path d="M0 215C1.6 215.1 6.7 216.2 9.4 215.3C12.2 214.5 13.7 210.9 16.4 209.8C19.1 208.7 23 209 25.7 208.8C28.5 208.7 30.4 209.6 33 209C35.6 208.4 38.4 205.7 41.4 205.4C44.5 205 48.5 207 51.4 206.9C54.3 206.8 56.3 205.5 58.6 204.7C60.9 203.9 60.4 202.1 65 202C69.6 201.9 79.6 202.5 86.2 203.8C92.8 205.2 99.7 211.3 104.8 210C109.8 208.8 112.2 198.8 116.4 196.3C120.6 193.8 126.5 195.6 130 195C133.5 194.4 134.9 192.8 137.3 192.8C139.6 192.7 141.1 194 144 194.6C146.8 195.2 151.2 196.6 154.4 196.2C157.6 195.8 159.5 193.2 163 192C166.5 190.8 170.7 189.2 175.3 188.9C180 188.7 185.3 190.2 191 190.4C196.7 190.5 204.4 189.6 209.5 189.9C214.7 190.1 219.3 191.1 222 192C224.7 192.9 224.9 193.8 226 195C227 196.1 227.3 198.1 228.4 198.9C229.4 199.7 231.2 199.4 232.3 199.5C233.4 199.7 233.6 199.7 235 200C236.4 200.3 239.2 200.8 240.8 201.2C242.4 201.5 243.3 201.5 244.7 202C246.1 202.5 247.4 203.4 249 204.2C250.5 205 252.4 206.6 254 207C255.6 207.4 257.2 206.3 258.8 206.3C260.5 206.4 261.8 207 263.9 207.3C266 207.5 269.3 208.1 271.5 207.7C273.7 207.3 276.1 205.5 277 205" fill="none" stroke="#a3cfe2" stroke-width="1.1" stroke-linecap="round" stroke-linejoin="round"/>
<path d="M277 205C285.2 203.7 312.5 199.2 326 197C339.5 194.8 349.8 194.5 358 192C366.2 189.5 370.5 186.3 375 182C379.5 177.7 380.2 173 385 166C389.8 159 397.5 148.3 404 140C410.5 131.7 416.3 124.7 424 116C431.7 107.3 442.5 95.3 450 88C457.5 80.7 463.7 77.5 469 72C474.3 66.5 478.7 60.5 482 55C485.3 49.5 486.8 45 489 39C491.2 33 493.3 25.5 495 19C496.7 12.5 498.3 3.2 499 0" fill="none" stroke="#a3cfe2" stroke-width="5.5" stroke-linecap="round" stroke-linejoin="round"/>
<path d="M957 419C956.6 419.6 955.3 421 954.8 422.3C954.4 423.7 954.6 425.1 954.4 427C954.2 428.9 953.9 431.9 953.4 433.9C952.8 435.9 950.7 436.8 951 439C951.3 441.2 954.3 444.7 955.3 447C956.3 449.3 956.5 450.4 956.8 452.9C957.1 455.5 957 459.3 957 462.4C957.1 465.4 957.2 468.1 957 471C956.8 473.9 956.6 477.1 955.8 479.5C954.9 482 952.7 483.3 952 485.6C951.2 487.8 951.6 490.9 951.1 493.2C950.6 495.4 949.6 496.7 949 499C948.4 501.3 948.1 504.1 947.7 507.1C947.3 510 947.1 513.6 946.5 516.6C946 519.6 945.3 522.2 944.4 524.9C943.5 527.6 941.2 530.9 941 533C940.8 535.1 942.6 535.5 943.1 537.3C943.7 539.2 944 542.2 944.3 544.2C944.7 546.1 944.5 547.5 945.1 548.9C945.7 550.4 947.1 551.7 948 553C948.9 554.3 949.1 555.4 950.4 556.7C951.6 557.9 954.1 559.6 955.3 560.7C956.6 561.8 957 562.5 958 563.4C958.9 564.3 960.5 565.6 961 566" fill="none" stroke="#a3cfe2" stroke-width="2" stroke-linecap="round" stroke-linejoin="round"/>
<path d="M961 566C963 567 969.3 570.2 973 572C976.7 573.8 981.3 576.2 983 577" fill="none" stroke="#a3cfe2" stroke-width="4" stroke-linecap="round" stroke-linejoin="round"/>
<path d="M0 629C1.9 630.1 7.4 634.3 11.6 635.4C15.8 636.6 21.1 635.9 25.1 636.2C29.1 636.4 32 636.4 35.6 636.8C39.3 637.3 42.9 638 47 639C51.1 640 55.4 642.5 60.3 642.9C65.3 643.4 72.6 640.8 76.5 641.6C80.5 642.3 80.7 645.8 84.1 647.4C87.5 649 92.8 650.3 97 651C101.2 651.7 105.1 652.2 109.5 651.7C114 651.2 119.3 649 123.9 647.9C128.5 646.8 133.4 645.2 137.2 645.1C141.1 644.9 143.2 646.7 147 647C150.8 647.3 155.7 646.3 159.9 646.6C164.2 646.9 168.7 648.2 172.7 648.7C176.8 649.2 179.7 649.4 184 649.5C188.4 649.5 194.9 649.3 199 649C203.1 648.7 205.5 648.8 208.9 647.6C212.4 646.3 216.4 642.2 219.8 641.6C223.2 641 226.4 643.3 229.3 643.7C232.2 644.1 234.3 643.1 237 644C239.7 644.9 243 648.5 245.7 649.4C248.3 650.3 249.4 649.7 252.8 649.3C256.2 649 262 646.9 266.1 647.2C270.1 647.4 273.1 650.2 277 651C280.9 651.8 285.6 652.7 289.4 652.2C293.2 651.7 296.4 648.6 299.7 647.9C303.1 647.1 306.5 647.3 309.4 647.8C312.3 648.3 315.7 650.5 317 651" fill="none" stroke="#a3cfe2" stroke-width="2.4" stroke-linecap="round" stroke-linejoin="round"/>
<path d="M177 509C176.7 510.2 175.8 513.5 175.5 516.5C175.2 519.4 174.1 523.7 175.3 526.6C176.5 529.4 181 530.6 182.8 533.5C184.6 536.4 185.1 540.6 186 544C186.9 547.4 188 550 188.5 554.1C189 558.1 189.3 564.2 189.1 568.2C189 572.2 189.5 575 187.4 578.1C185.4 581.3 178.2 583.8 177 587C175.8 590.2 180.2 594.3 180.5 597.4C180.7 600.5 177.9 602.9 178.3 605.4C178.8 607.9 181.9 609.8 183.2 612.4C184.5 615 184.7 618.2 186 621C187.3 623.8 189.6 626.8 190.8 629.2C191.9 631.6 192.3 633.4 192.9 635.5C193.5 637.6 193.3 639.3 194.3 641.5C195.4 643.8 198.2 647.8 199 649" fill="none" stroke="#a3cfe2" stroke-width="1.1" stroke-linecap="round" stroke-linejoin="round"/>
<path d="M784 329C785 329.7 788 332.4 790.3 333.4C792.6 334.3 795 333.8 797.8 334.5C800.7 335.2 804.3 336.7 807.5 337.5C810.7 338.2 814.3 338 817 339C819.7 340 820.9 342.2 823.5 343.4C826.1 344.6 829.4 345.5 832.6 346.3C835.9 347.1 839.9 346.9 843.2 348.2C846.4 349.5 849.4 352.6 852 354C854.6 355.4 857.1 355.5 859.1 356.6C861 357.7 861.9 359 863.8 360.7C865.7 362.4 868.3 365.1 870.5 366.9C872.7 368.6 875 370 877 371C879 372 880.7 371.5 882.7 372.6C884.7 373.7 886.2 376.6 888.9 377.8C891.6 379 895.7 378.7 898.7 379.7C901.8 380.7 904.3 382.3 907 384C909.7 385.7 911.7 388.4 914.8 390C917.9 391.6 922.9 392.4 925.5 393.6C928.1 394.8 928.3 396.2 930.5 397.5C932.8 398.7 936.7 399.8 939 401C941.3 402.2 942.6 403.9 944.1 404.8C945.6 405.7 946.6 405.6 948.2 406.6C949.7 407.7 951.9 409.1 953.4 411.2C954.9 413.2 956.4 417.7 957 419" fill="none" stroke="#a3cfe2" stroke-width="2" stroke-linecap="round" stroke-linejoin="round"/>
<path d="M718 364C719.7 364.2 725.5 364 728.3 365C731.1 366 732.6 369.3 734.8 370.1C736.9 370.9 739.2 369.7 741.2 369.8C743.3 370 744.8 370.8 747 371C749.2 371.2 752.1 370.7 754.4 371C756.7 371.2 758.4 372.2 760.9 372.6C763.5 373 766.9 372.2 769.5 373.3C772.2 374.4 773.7 377.3 777 379C780.3 380.7 785.9 382 789.5 383.6C793.2 385.1 795.7 387.1 798.9 388.2C802.2 389.2 806.2 389.4 809.2 389.9C812.2 390.4 813.8 390 817 391C820.2 392 825.1 394.2 828.5 395.9C831.9 397.7 834.1 400.7 837.2 401.5C840.3 402.3 843.6 399.7 846.9 401C850.2 402.2 853.3 407.5 857 409C860.7 410.5 865.8 409.4 869.3 409.7C872.9 409.9 874.5 409.2 878.3 410.4C882.1 411.7 889.2 413.9 892.3 417C895.4 420 895.1 425.8 897 429C898.9 432.2 901.6 433.9 903.5 436.3C905.5 438.7 906.2 442.4 908.7 443.6C911.2 444.7 915.5 442.4 918.6 443.3C921.6 444.2 924.4 447.4 927 449C929.6 450.6 931.6 451.4 933.9 453.1C936.2 454.7 938.2 456.2 940.6 458.9C943 461.6 946.8 466 948.2 469.3C949.6 472.7 948.9 477.4 949 479" fill="none" stroke="#a3cfe2" stroke-width="1.1" stroke-linecap="round" stroke-linejoin="round"/>
<path d="M794 560C794.8 559.9 797 559.4 798.8 559.5C800.7 559.7 803.1 560.4 805 561.1C806.9 561.8 808.4 562.7 810.4 563.7C812.4 564.6 815.7 565.6 817 567C818.3 568.4 817.4 570.6 818.4 572C819.5 573.4 821.1 574.2 823.1 575.3C825.1 576.3 828 577.6 830.3 578.2C832.6 578.9 835.8 577.9 837 579C838.2 580.1 837.1 582.5 837.8 584.6C838.4 586.7 839.6 589.7 840.9 591.6C842.1 593.4 843.6 594.5 845.4 595.7C847.3 597 849.7 598 852 599C854.3 600 857.4 600 859.3 601.9C861.2 603.9 862.2 608.3 863.6 610.6C864.9 613 866.8 613.8 867.3 616C867.9 618.2 866.9 621.6 867 624C867.1 626.4 868.1 628.3 868.1 630.6C868.1 632.9 866.3 635.9 867.1 637.9C867.9 639.9 871.3 640.7 872.9 642.5C874.6 644.4 875.8 647 877 649C878.2 651 879.3 652.2 879.9 654.5C880.5 656.7 880.1 660.1 880.5 662.4C880.9 664.8 881.2 667.1 882.3 668.7C883.4 670.3 886.2 671.5 887 672" fill="none" stroke="#a3cfe2" stroke-width="1.1" stroke-linecap="round" stroke-linejoin="round"/>
<path d="M744 446C745.9 445.7 752.2 443.9 755.2 444.5C758.1 445 759.6 447.9 761.7 449.3C763.7 450.7 764.9 452.2 767.5 453C770 453.7 774 452.6 777 454C780 455.4 782.2 460 785.4 461.1C788.6 462.2 793.1 459.2 796 460.6C798.9 461.9 800.8 466.1 802.7 469.2C804.5 472.3 804.9 477 807 479C809.1 481 812.8 480.6 815.1 481.3C817.4 482 818.4 481.6 820.9 483.1C823.4 484.6 828.4 487.8 830.3 490.4C832.1 493.1 830.2 498.1 832 499C833.8 499.9 837.8 495.9 840.9 496C844 496 847.5 497.9 850.4 499.4C853.3 501 855.7 503 858.4 505.4C861.2 507.8 864.1 511.9 867 514C869.9 516.1 872.1 517.9 875.7 517.9C879.2 517.8 884.7 513.3 888.1 513.7C891.6 514.2 893.2 517.9 896.3 520.5C899.5 523 904.1 527.4 907 529C909.9 530.6 911.2 529.2 913.7 530C916.3 530.9 919.7 533.1 922.2 534.2C924.8 535.3 926.4 535.7 929.2 536.5C932 537.3 937.4 538.6 939 539" fill="none" stroke="#a3cfe2" stroke-width="1.1" stroke-linecap="round" stroke-linejoin="round"/>
<path d="M814 499C814.9 500.3 818.4 504.4 819.5 506.9C820.6 509.4 820 512.2 820.6 514.1C821.2 516 822 516.6 823 518.2C824.1 519.9 825.2 522.3 827 524C828.8 525.7 831.1 527 833.5 528.2C836 529.4 839 529.9 841.5 531.3C844.1 532.8 846.5 536 849 537C851.6 537.9 854.5 537.7 857 537C859.5 536.3 862 533.8 864.3 533.1C866.5 532.3 868.5 533.2 870.7 532.7C872.9 532.2 874.6 530.5 877.3 529.9C880 529.3 884.3 529.8 887 529C889.7 528.2 891.6 525.8 893.7 524.9C895.8 523.9 898.2 525 899.6 523.4C901.1 521.8 900.4 517.6 902.5 515.2C904.6 512.8 909.6 509.5 912 509C914.4 508.5 915 511.4 916.7 512.5C918.4 513.5 920.4 514.1 922.1 515.5C923.7 516.9 925.8 518.4 926.6 520.7C927.5 522.9 925.9 527.1 927 529C928.1 530.9 931.1 530.5 933.1 532C935.1 533.5 937.5 536.2 939.1 538.2C940.7 540.1 942 541.7 942.5 543.8C943 545.9 942.1 549.8 942 551" fill="none" stroke="#a3cfe2" stroke-width="1.1" stroke-linecap="round" stroke-linejoin="round"/>
<path d="M518 588C517.6 589.2 516.4 593.1 515.8 595.3C515.3 597.5 515.7 599.3 514.6 601.4C513.5 603.6 510.7 606.1 509.4 608.2C508.2 610.3 508.4 612.1 507 614C505.6 615.9 502.4 617.2 500.9 619.4C499.4 621.6 499.3 625.2 498 627.4C496.6 629.5 493.7 630.5 492.7 632.5C491.7 634.4 493.1 636.8 492 639C490.9 641.2 487.5 642.9 486.2 645.8C484.8 648.7 484 653.2 483.9 656.2C483.7 659.2 485.6 661.4 485.3 664C485 666.6 482.6 670.7 482 672" fill="none" stroke="#a3cfe2" stroke-width="1.1" stroke-linecap="round" stroke-linejoin="round"/>
<path d="M652 605C652.6 605.7 654.1 607.9 655.7 609.2C657.2 610.6 659.5 611.3 661.4 612.9C663.2 614.6 665.8 616.6 666.7 619.3C667.7 622 665.9 626.9 667 629C668.1 631.1 671.6 629.8 673.4 631.8C675.1 633.7 676.1 638.5 677.6 640.5C679.1 642.5 680.5 642.2 682.1 643.6C683.7 645 685 646.7 687 649C689 651.3 692.5 654.2 694.2 657.1C695.9 660.1 695.4 664.8 697.2 666.6C698.9 668.5 702.2 667.5 704.7 668.4C707.1 669.3 710.8 671.4 712 672" fill="none" stroke="#a3cfe2" stroke-width="1.1" stroke-linecap="round" stroke-linejoin="round"/>
<path d="M1181 0C1181.4 1.4 1182 5.8 1183.2 8.2C1184.3 10.7 1186.9 11.9 1187.8 14.7C1188.8 17.5 1189.2 21.8 1188.9 24.9C1188.6 27.9 1185.8 30.3 1186 33C1186.2 35.7 1188.9 38.7 1190 41.3C1191.2 43.8 1192.6 45.6 1193 48.5C1193.4 51.3 1192.1 55.5 1192.2 58.3C1192.4 61 1193.7 62.5 1194 65C1194.3 67.5 1194.2 70.9 1194.2 73.3C1194.2 75.6 1194.3 76.7 1194 79.2C1193.7 81.7 1193 85.3 1192.4 88.4C1191.7 91.5 1191 94.9 1190 98C1189 101.1 1186.7 104 1186.3 107.1C1186 110.2 1186.7 113.9 1187.6 116.6C1188.6 119.4 1191.1 121.1 1192 123.5C1192.9 125.9 1192.9 128.4 1193 131C1193.1 133.6 1191.9 136 1192.8 139C1193.6 142 1197.2 146.2 1198.2 148.8C1199.3 151.4 1198.6 152.3 1199 154.7C1199.5 157 1200.4 160.2 1201 163C1201.6 165.8 1202.7 168.3 1202.8 171.2C1203 174.1 1201.3 177.7 1201.9 180.3C1202.6 182.9 1205.6 184.2 1206.9 186.8C1208.3 189.4 1208.8 193.1 1210 196C1211.2 198.9 1213.2 201.8 1214.1 204.5C1215 207.1 1214.8 209.6 1215.4 212.1C1216 214.6 1217.3 216.7 1217.7 219.4C1218.2 222 1218.2 224.4 1218 228C1217.8 231.6 1216.7 237.3 1216.5 241.1C1216.3 244.9 1216.1 248.3 1216.8 251C1217.5 253.8 1219.9 255.2 1220.8 257.7C1221.6 260.2 1221.1 262.6 1222 266C1222.9 269.4 1225.5 273 1226 278C1226.5 283 1225.2 291.4 1225 296C1224.7 300.6 1224.1 301.9 1224.4 305.8C1224.8 309.6 1226.2 315.8 1227 319C1227.8 322.2 1228.7 323.3 1229.2 325.3C1229.6 327.2 1229.9 328.8 1229.8 330.4C1229.7 332 1228.7 333.5 1228.5 334.9C1228.4 336.4 1228.9 338.3 1229 339" fill="none" stroke="#a3cfe2" stroke-width="2.6" stroke-linecap="round" stroke-linejoin="round"/>
<path d="M1189 0C1189.5 1.4 1191.7 5.4 1191.9 8.4C1192 11.4 1189.8 15 1189.9 17.9C1190 20.8 1191.6 23.1 1192.6 25.6C1193.6 28.2 1194.8 30.8 1196 33C1197.2 35.2 1198.9 36.6 1199.5 38.9C1200.1 41.2 1199.3 44.1 1199.6 46.8C1199.9 49.5 1200.9 52.1 1201.3 55.1C1201.7 58.2 1202.5 62.1 1202 65C1201.5 67.9 1198.8 69.6 1198.2 72.3C1197.6 75 1198.9 78.1 1198.6 81.2C1198.4 84.2 1196.8 87.9 1196.8 90.7C1196.9 93.5 1198.8 95.3 1199 98C1199.2 100.7 1197.7 104.2 1197.8 107.2C1197.9 110.2 1199.1 113.3 1199.6 116C1200.1 118.6 1200.2 120.7 1200.8 123.2C1201.4 125.7 1202.1 128.4 1203 131C1203.9 133.6 1205.9 135.6 1206.4 138.5C1206.9 141.4 1205.8 145.6 1206 148.2C1206.3 150.8 1207.4 151.8 1207.9 154.2C1208.4 156.7 1208.4 160 1209 163C1209.6 166 1210.8 169.5 1211.2 172.5C1211.6 175.4 1210.4 177.9 1211.2 180.7C1212.1 183.5 1215 186.7 1216.2 189.2C1217.3 191.8 1217.1 193.3 1218 196C1218.9 198.7 1220.1 202.7 1221.4 205.5C1222.7 208.2 1225.3 209.9 1225.6 212.5C1226 215.2 1223.6 219 1223.5 221.6C1223.4 224.2 1225 225.4 1225 228C1225 230.6 1224 234.4 1223.7 237.2C1223.5 240.1 1223.4 242.6 1223.7 244.9C1224 247.3 1224.8 248.8 1225.5 251.2C1226.2 253.5 1227.6 257.7 1228 259" fill="none" stroke="#a3cfe2" stroke-width="2" stroke-linecap="round" stroke-linejoin="round"/>
<path d="M1185 0C1185.4 1.1 1186.7 4.6 1187.4 6.4C1188.1 8.1 1188.7 9.2 1189.3 10.6C1189.9 12 1190.9 13.3 1190.8 14.7C1190.8 16.1 1188.9 16.9 1189 19C1189.1 21.1 1190.1 25.1 1191.5 27.3C1192.9 29.5 1196.6 29.6 1197.6 32.1C1198.7 34.5 1197.4 39.2 1197.7 42C1197.9 44.8 1198.7 46.4 1199 49C1199.3 51.6 1199.2 54.7 1199.4 57.3C1199.6 59.9 1200.8 61.8 1200.4 64.4C1199.9 67 1197.9 70.3 1196.6 72.8C1195.2 75.2 1191.8 76.6 1192 79C1192.2 81.4 1196.3 83.9 1197.8 87.1C1199.2 90.3 1200.6 95.1 1200.6 98.3C1200.6 101.5 1197.9 103.8 1197.8 106.4C1197.7 109 1199.7 111.5 1200 114C1200.3 116.5 1200.1 119.3 1199.6 121.4C1199 123.6 1197.3 124.7 1196.7 126.8C1196.1 128.9 1196.1 131 1195.9 133.9C1195.8 136.7 1195.8 140.4 1196 144C1196.2 147.6 1197.1 152.1 1197.2 155.7C1197.4 159.3 1196.2 162.7 1196.9 165.5C1197.7 168.2 1200 169.9 1201.7 172.2C1203.3 174.4 1205.9 176.5 1207 179C1208.1 181.5 1207.6 184.2 1208.4 187C1209.2 189.9 1211 193.3 1211.7 196.1C1212.4 198.9 1213 201.7 1212.9 203.8C1212.8 206 1210.5 207 1211 209C1211.5 211 1214 213.7 1215.7 215.8C1217.5 217.8 1219.7 218.8 1221.3 221.4C1222.8 223.9 1224.5 227.3 1224.8 231C1225.1 234.8 1223.7 240.2 1223 244C1222.3 247.8 1220.8 250.6 1220.5 253.7C1220.3 256.7 1221.1 259.6 1221.5 262.2C1221.8 264.8 1222.2 266.3 1222.6 269.1C1223 271.9 1223.8 277.4 1224 279" fill="none" stroke="#a3cfe2" stroke-width="1.1" stroke-linecap="round" stroke-linejoin="round"/>
<path d="M817 0C816.1 0.8 813.1 2.8 811.9 4.9C810.7 7 810.3 10.3 809.8 12.7C809.3 15.1 808.7 17.2 809 19.1C809.4 20.9 811.2 22.3 812 24C812.8 25.7 813.2 27.9 813.7 29.5C814.2 31.1 814 32.4 814.9 33.7C815.8 35 817.9 35.4 819.1 37.2C820.3 38.9 820.7 42.2 822 44C823.3 45.8 825 46.7 827.2 48C829.3 49.3 833.4 49.9 834.9 52C836.3 54 834.8 57.3 836 60.3C837.2 63.3 841 68.4 842 70" fill="none" stroke="#a3cfe2" stroke-width="1.1" stroke-linecap="round" stroke-linejoin="round"/>
<path d="M977 0C975.9 1.2 972.2 5 970.6 7.4C969.1 9.8 968.8 12 967.9 14.6C966.9 17.2 964.9 20.5 964.7 22.9C964.6 25.3 967 26.7 967 29C967 31.3 966.5 34.2 964.7 36.6C962.8 38.9 957.2 40.7 956.2 42.9C955.1 45 958.3 46.8 958.4 49.4C958.5 52.1 957.8 56.2 957 59C956.2 61.8 954.4 64 953.8 66.4C953.3 68.8 953.9 71.1 953.7 73.4C953.4 75.7 953.1 77.5 952.3 80.1C951.6 82.7 949.9 86.6 949 89C948.1 91.4 947.6 92.3 947.1 94.4C946.5 96.6 946.5 100 945.7 102.2C944.8 104.3 943.1 105.4 942.1 107.4C941.2 109.3 940.4 112.9 940 114" fill="none" stroke="#a3cfe2" stroke-width="1.1" stroke-linecap="round" stroke-linejoin="round"/>
<path d="M1027 0C1026.3 2.1 1024.9 9.5 1022.8 12.5C1020.8 15.4 1016.2 14.8 1014.8 17.6C1013.3 20.5 1013.7 26 1014.1 29.6C1014.5 33.2 1015.7 36.1 1017 39C1018.3 41.9 1020.8 44.3 1022.2 47.2C1023.6 50.2 1025.8 53.1 1025.4 56.6C1025 60.1 1020.4 64.6 1019.8 68.3C1019.2 72 1022.2 75.6 1022 79C1021.8 82.4 1019.1 85.5 1018.5 88.9C1017.9 92.2 1019.4 95.8 1018.2 99.3C1017 102.8 1013.2 106.7 1011.4 110C1009.5 113.2 1007.7 115.7 1007 119C1006.3 122.3 1007 126.5 1007 129.7C1007.1 132.8 1007.5 134.9 1007.3 137.7C1007.1 140.5 1006.7 143 1005.8 146.6C1004.9 150.2 1003 155.9 1002 159C1001 162.1 1001 162.9 999.5 165C998.1 167 994.7 169.1 993.3 171.4C991.8 173.7 991.9 175.9 990.8 178.9C989.8 181.8 987.6 187.3 987 189" fill="none" stroke="#a3cfe2" stroke-width="1.1" stroke-linecap="round" stroke-linejoin="round"/>
<path d="M1077 0C1076.6 2.5 1073.5 10 1074.4 14.9C1075.2 19.8 1080.3 25.7 1082.2 29.4C1084 33.1 1084.5 34.1 1085.3 37.3C1086.1 40.6 1086.3 44.2 1087 49C1087.7 53.8 1089.3 60.9 1089.5 66.1C1089.8 71.3 1089.4 76.2 1088.5 80.1C1087.5 84 1086.5 86.2 1083.7 89.3C1081 92.5 1072.8 95.5 1072 99C1071.2 102.5 1078 106.3 1078.8 110.4C1079.6 114.5 1077.9 119.3 1076.8 123.3C1075.7 127.4 1072 130.5 1072 134.8C1072.1 139 1076.5 145.1 1077 149C1077.5 152.9 1076.4 154.8 1074.9 158.1C1073.3 161.4 1070.2 165.1 1067.7 168.8C1065.2 172.4 1061.6 176.6 1059.9 179.9C1058.1 183.3 1057.6 185.5 1057 189C1056.4 192.5 1055.4 196.8 1056 200.7C1056.5 204.7 1060.8 209.1 1060.4 212.7C1060 216.2 1055.6 218.7 1053.6 222.1C1051.5 225.5 1048.9 231.2 1048 233" fill="none" stroke="#a3cfe2" stroke-width="1.1" stroke-linecap="round" stroke-linejoin="round"/>
<path d="M1137 0C1137.5 3.2 1141 13.4 1140 19.1C1138.9 24.7 1132.6 29.8 1130.7 34C1128.8 38.2 1128.3 40.1 1128.5 44.2C1128.7 48.4 1132.4 53.6 1132 59C1131.6 64.4 1126.1 71.1 1125.8 76.3C1125.5 81.5 1129.2 85.1 1130.3 90.2C1131.4 95.4 1129.7 102.4 1132.5 107.2C1135.3 112 1146.2 115.1 1147 119C1147.8 122.9 1139.5 125.6 1137.1 130.9C1134.6 136.1 1133.4 144.8 1132.1 150.5C1130.8 156.2 1128.3 160.5 1129.1 165.2C1129.9 170 1133.9 174.2 1137 179C1140.1 183.8 1145.1 188.4 1147.8 194.1C1150.4 199.8 1151.6 207.9 1152.8 213.2C1153.9 218.5 1154.7 221.7 1154.6 226C1154.5 230.3 1151.3 233.4 1152 239C1152.7 244.6 1156.4 251.6 1158.7 259.6C1161 267.6 1165 279.4 1165.6 287C1166.1 294.6 1164.2 298.1 1161.9 305.1C1159.7 312.1 1153.7 325 1152 329" fill="none" stroke="#a3cfe2" stroke-width="1.1" stroke-linecap="round" stroke-linejoin="round"/>
<path d="M0 109C2.3 109.1 9.5 107.6 13.8 109.8C18.1 112 21.6 119.6 25.7 122C29.8 124.5 34.8 124.8 38.3 124.2C41.9 123.7 43.5 118.8 47 119C50.5 119.2 54.6 124.7 59.4 125.3C64.2 125.8 70.6 121.7 75.9 122.1C81.2 122.6 87.9 125.3 91.5 128.1C95 130.9 94.9 136 97 139C99.1 142 101 144.3 104.1 146.3C107.1 148.3 112.1 148.4 115.3 151C118.6 153.6 120 158.9 123.6 161.9C127.2 164.9 133.6 166.8 137 169C140.4 171.2 141.8 173.8 143.9 175.3C146 176.8 147.3 177.1 149.8 177.8C152.2 178.6 155.8 178 158.7 179.8C161.6 181.7 165.6 187.5 167 189" fill="none" stroke="#a3cfe2" stroke-width="1.1" stroke-linecap="round" stroke-linejoin="round"/>
<path d="M0 269C2 269.4 7.9 270.5 12.2 271.4C16.4 272.3 21.8 272.6 25.6 274.6C29.4 276.6 31.3 281.9 34.9 283.4C38.5 285 43.3 283.9 47 284C50.7 284.1 53.5 284.2 57.2 284C61 283.9 65.1 284.3 69.5 283.1C74 281.9 79.4 277.5 83.9 276.9C88.5 276.2 93.5 277.4 97 279C100.5 280.6 101.3 284.3 105.2 286.2C109.1 288.1 115.9 289.5 120.6 290.6C125.3 291.6 129 291.7 133.4 292.3C137.8 292.8 143.2 294.5 147 294C150.8 293.5 152.4 291.3 156.1 289.5C159.8 287.7 166.2 285.5 169.2 283.1C172.2 280.7 171.7 278.1 174 275.1C176.3 272.1 181.5 266.7 183 265" fill="none" stroke="#a3cfe2" stroke-width="1.1" stroke-linecap="round" stroke-linejoin="round"/>
<path d="M217 264C218.3 264.9 222 267.4 224.6 269.5C227.3 271.6 232 273.3 233.1 276.6C234.2 279.9 230.7 285.4 231.4 289.2C232 292.9 236.9 295.7 237 299C237.1 302.3 232.6 305.6 232.1 308.8C231.7 311.9 234.7 314.4 234.1 317.9C233.6 321.4 229.1 326.4 228.8 329.9C228.4 333.4 229.8 336.2 232 339C234.2 341.8 239.9 343.8 242 346.6C244 349.3 244 352 244.2 355.4C244.5 358.9 242.9 363.3 243.4 367.2C243.8 371.2 245 375.3 247 379C249 382.7 253.5 386.1 255.5 389.4C257.5 392.6 258.1 394.9 258.9 398.3C259.7 401.8 259 406.5 260.3 410C261.7 413.4 265.4 416.1 267 419C268.6 421.9 268.8 424.7 269.9 427.4C271 430.2 272.7 432.4 273.7 435.5C274.6 438.6 275 441.9 275.6 445.8C276.1 449.7 276.8 456.8 277 459" fill="none" stroke="#a3cfe2" stroke-width="1.1" stroke-linecap="round" stroke-linejoin="round"/>
<path d="M0 369C1.4 368.6 5.4 366.5 8.3 366.5C11.3 366.5 14 367.5 17.7 369.1C21.4 370.7 27.4 373.6 30.6 376.1C33.8 378.6 34.3 381.5 37 384C39.7 386.5 44.4 388.6 46.9 391.3C49.5 393.9 49.2 397.4 52.4 399.9C55.5 402.4 61.7 404.8 65.8 406.3C70 407.8 73.6 407.6 77 409C80.4 410.4 83.5 412 86.4 414.7C89.4 417.4 91 422.4 94.6 425.4C98.1 428.4 104.1 430.4 107.8 432.7C111.5 434.9 112.4 437.4 117 439C121.6 440.6 129.8 438.8 135.3 442.5C140.9 446.2 146.9 455.7 150.6 461.3C154.2 466.9 155 471.8 157.3 476.3C159.5 480.7 162.9 486 164 488" fill="none" stroke="#a3cfe2" stroke-width="1.1" stroke-linecap="round" stroke-linejoin="round"/>
<path d="M277 459C278.9 459.3 285.2 460 288.7 460.5C292.1 461 293.6 460 297.6 461.7C301.7 463.5 309.6 467.3 312.9 471C316.1 474.7 314.5 480.4 317 484C319.5 487.6 324.3 490 327.8 492.3C331.2 494.5 335 495 337.9 497.5C340.8 500.1 343.5 504.2 345 507.7C346.6 511.3 345.7 515.5 347 519C348.3 522.5 349.9 525.4 352.9 528.8C355.9 532.2 362.3 536.4 365 539.5C367.7 542.6 368.9 544.1 369.2 547.3C369.6 550.6 367.4 555.1 367 559C366.6 562.9 366.3 567.6 366.7 571C367.1 574.3 368.7 576.5 369.5 579.3C370.3 582.1 370.3 584.6 371.5 587.9C372.7 591.2 375.7 594.9 377 599C378.3 603.1 379.5 608.3 379.6 612.3C379.6 616.4 378 619.9 377.4 623.3C376.7 626.6 377.5 629.9 375.7 632.6C374 635.2 370 636.1 367 639C364 641.9 360.3 646.7 357.5 649.7C354.7 652.7 352.1 654.5 350.2 657C348.4 659.6 348.4 662.5 346.2 665C344 667.5 338.5 670.8 337 672" fill="none" stroke="#a3cfe2" stroke-width="1.1" stroke-linecap="round" stroke-linejoin="round"/>
<path d="M57 469C57.7 470.9 61.3 476.2 61.4 480.5C61.4 484.9 55.6 491.5 57.1 495.2C58.6 499 67.2 499.1 70.5 503.1C73.8 507 74.8 514.7 77 519C79.2 523.3 82.5 525.4 83.8 528.8C85.1 532.2 83.7 536.2 84.8 539.4C85.8 542.5 88 544.5 90.1 547.7C92.1 551 95.4 555 97 559C98.6 563 97.6 568.2 99.5 571.8C101.4 575.3 106.2 577.5 108.6 580.1C111 582.7 112.6 584.3 114 587.4C115.4 590.6 115.7 595.1 117 599C118.3 602.9 120.4 607.6 122 610.9C123.6 614.3 124.6 616.2 126.4 619.2C128.2 622.3 130.9 626.1 132.7 629.4C134.4 632.7 136.3 637.4 137 639" fill="none" stroke="#a3cfe2" stroke-width="1.1" stroke-linecap="round" stroke-linejoin="round"/>
<path d="M367 269C365.7 269.8 362.2 273.2 359.1 273.9C356 274.6 350.8 272.5 348.3 273.3C345.7 274.1 345.7 277 343.8 278.8C341.9 280.6 339.1 281.3 337 284C334.9 286.7 332.8 291.5 331.4 295.2C330 298.8 330 302.7 328.7 306.1C327.5 309.5 325.7 313.4 323.8 315.5C321.8 317.7 317.9 316.8 317 319C316.1 321.2 317.2 324.8 318.1 328.5C319 332.1 321.8 337.1 322.4 340.8C323 344.6 321.6 348.1 321.6 351.2C321.5 354.2 321.7 356.3 322 359C322.3 361.7 322.5 364.5 323.3 367.4C324 370.2 324 373.7 326.6 376C329.2 378.3 335.5 379 338.9 381.1C342.4 383.3 344.5 387.1 347 389C349.5 390.9 352.2 390.3 354.2 392.4C356.1 394.6 357.1 399 358.7 402.1C360.3 405.2 362.4 408.2 363.8 411C365.2 413.8 366.5 417.7 367 419" fill="none" stroke="#a3cfe2" stroke-width="1.1" stroke-linecap="round" stroke-linejoin="round"/>
<path d="M537 0C538.2 1.4 542.6 5.1 544.2 8.7C545.8 12.2 547.1 17.7 546.7 21.5C546.3 25.3 542.7 28.3 541.9 31.3C541.1 34.2 542.3 36.1 542 39C541.7 41.9 541.3 45.1 540.3 48.9C539.3 52.8 536.6 58.6 536.1 62.1C535.6 65.7 538.2 67.6 537.5 70.4C536.8 73.2 532.5 76.2 532 79C531.5 81.8 533.4 84.2 534.4 87.5C535.4 90.9 538 95.2 537.9 99.1C537.8 103 534 107.3 533.8 110.6C533.7 113.9 535.9 115.9 537 119C538.1 122.1 540.1 126.2 540.3 129.3C540.4 132.5 538.5 134.8 537.6 137.9C536.7 140.9 536.7 145.1 534.9 147.8C533.2 150.5 528.3 153 527 154" fill="none" stroke="#a3cfe2" stroke-width="1.1" stroke-linecap="round" stroke-linejoin="round"/>
<path d="M587 0C587.1 2.4 588.4 9.7 587.8 14.6C587.2 19.4 584.7 25.1 583.2 29.2C581.7 33.3 579 35.8 578.8 39.1C578.6 42.4 581.2 45.6 582 49C582.8 52.4 582.1 56.7 583.7 59.8C585.3 62.8 590.4 64.3 591.5 67.3C592.6 70.2 590.5 74 590.6 77.6C590.7 81.3 592.3 84.3 592 89C591.7 93.7 589.6 100.9 588.7 105.9C587.8 111 587.2 115.3 586.7 119.2C586.3 123.1 587.7 126.1 586.1 129.4C584.5 132.7 579.5 135.1 577 139C574.5 142.9 571.4 148.1 571 153C570.6 157.9 574.3 164.1 574.7 168.5C575.1 172.8 573.8 175.6 573.3 179C572.9 182.5 572.2 187.3 572 189" fill="none" stroke="#a3cfe2" stroke-width="1.1" stroke-linecap="round" stroke-linejoin="round"/>
<path d="M677 70C676.4 71.3 674.8 74.9 673.4 77.7C672 80.5 669.7 83.3 668.6 86.8C667.5 90.4 667.1 95.3 666.8 99C666.5 102.7 666.6 105.7 667 109C667.4 112.3 668.1 115.8 669.2 118.5C670.4 121.3 674 122.7 673.9 125.5C673.8 128.2 668.7 131.1 668.4 135C668.1 138.9 671.1 146.3 672 149C672.9 151.7 673.2 150.4 673.8 151.3C674.5 152.3 675.9 153.3 676.1 154.7C676.4 156.1 675.1 158.2 675.3 159.7C675.4 161.3 676.7 163.3 677 164" fill="none" stroke="#a3cfe2" stroke-width="1.1" stroke-linecap="round" stroke-linejoin="round"/>
<path d="M757 77C756.8 78.3 756.1 81.7 755.9 84.8C755.7 87.9 755.2 92.1 755.8 95.6C756.5 99.1 758.9 101.9 760 105.8C761 109.7 762.5 115.8 762 119C761.5 122.2 758.4 122.2 757.1 124.8C755.8 127.4 755.2 131 754.4 134.5C753.6 138.1 752.8 141.8 752.4 145.9C752 150 752.4 155.3 752 159C751.6 162.7 749.9 165.4 750.1 168C750.3 170.5 752.5 172.2 753.2 174.3C753.9 176.4 754.3 178.2 754.5 180.5C754.6 182.8 754.1 186.7 754 188" fill="none" stroke="#a3cfe2" stroke-width="1.1" stroke-linecap="round" stroke-linejoin="round"/>
<path d="M447 88C448.1 89.7 451.5 94.6 453.5 98.3C455.4 102 457.6 106.2 458.8 110.1C460 114 460.8 118.5 460.5 121.6C460.2 124.8 457.8 125.6 457 129C456.2 132.4 457.5 138.5 455.9 141.9C454.3 145.3 448.8 146 447.6 149.2C446.4 152.4 448.8 157.6 448.7 160.9C448.6 164.2 447.7 165.5 447 169C446.3 172.5 444 177.5 444.3 181.9C444.5 186.3 447.2 191.4 448.7 195.2C450.2 199 452.2 201.7 453.3 204.9C454.3 208 454.7 212.5 455 214" fill="none" stroke="#a3cfe2" stroke-width="1.1" stroke-linecap="round" stroke-linejoin="round"/>
<g fill="#a3cfe2"><path d="M196 257L215 251 235 253 225 261 215 266 202 264Z"/><path d="M164 488L186 492 190 501 177 509 169 501Z"/><path d="M315 642L336 647 353 659 375 655 370 672 336 672 323 655Z"/><path d="M970 175L979 179 983 195 977 203 971 191Z"/><path d="M762 442L769 436 777 439 775 449 767 453 761 449Z"/></g>
<path d="M1264.2 127.4L1256.9 126.3 1249 125.1 1244.5 124.3 1239.2 124.7 1232.8 124.6 1228.1 125.3 1222 126.7 1217.8 127.5M1109.2 441.4L1107 452.8 1108.6 468.8 1104.6 478.5 1104.5 488.5 1103 495.5 1104.2 505.6 1103.7 512.5 1100.9 520.8M582.2 27L586.8 27.8 590.5 28.9 598.4 28.9 603.7 28.9 608.2 28.9 613.6 27.8 617.7 29 621.2 29.4M164.5 558.2L162.5 565.1 160.2 573.4 155.8 582.3 148.5 595.1 150.2 607.3 147.7 621.3 147.6 642.8 141.5 657.9M1178.1 140.3L1181.3 145.7 1184.1 151.1 1188.9 158.9 1191.5 164 1196.7 170 1204.4 175 1211.1 178.9 1214.1 183.2M590.4 464.5L590.6 459.2 591 451.9 591.2 446 589.2 438.3 588.7 431.7 588.1 426.7 587.6 421.9 588.1 417.8M144.5 -31.1L152.8 -28.3 158.6 -24.9 167.5 -18.6 175.6 -15.7 181.4 -15.3 188.2 -13.5 196.4 -12.6 205.8 -13.7M122.9 593.3L117.4 589.1 113.4 586.2 111 582.1 108 579.3 102.9 577.1 99.8 573.9 94.9 570.2 89.2 566.4M609.4 629.7L609.8 626.7 611.4 623.4 611.3 618.7 612.6 613.9 611.2 610.3 610.9 606.2 610.7 601.1 611.4 598M347.2 291.7L345.7 288 345.5 283.5 343.1 278.4 340 273.1 338.9 269.3 336.6 265.3 333.8 260.1 331.1 257.3M237.7 550.8L237.5 554.3 236.8 559 235.1 563.3 233.8 565.9 230 570.3 228.1 574.9 226.4 578 225.3 581.1M690 255.8L686.1 258.6 680.5 263.7 675.7 270.1 670.7 281 669.9 287.8 668.3 292.4 665.1 299.1 662.4 303.4M588.4 689.4L580.1 688 569.6 684.9 560.6 683.9 547.9 679.9 539.7 680.4 528.4 677.8 513.5 677.8 504.2 679M-10.8 646.5L-12.8 646.5 -15.4 645.5 -18.3 644.9 -20.6 644.7 -22.4 644.2 -24.2 644.2M509.8 632.8L516.5 626 526.5 618.5 534.1 613.9 544.7 609.6 551.7 607.7 558.1 605.6 568 603.1 576.1 602.6M690 255.8L700 258.4 709.4 259.1 717.7 257.7 730.5 255.1 745.5 257.9 755.7 264.2 769.5 262.7 777.9 265.3M714.6 184.8L714.4 179.3 713.2 171.2 712 167.7 710.5 162.6 708.4 159.5 705 154.8 701.9 150.2 699 142.5M2.8 456L3.9 463.6 6.6 468.5 8.7 472 10.2 477 10.9 484.8 14.7 493.3 17.6 496.4 20.9 501.9M641.9 252.6L642.2 256.6 642.7 262.4 644.6 268.8 646.5 274.6 652.1 284 658.5 290.1 661.2 296.6 662.4 303.4M712.4 476.3L708 472 704.7 468.8 701.6 467.8 697.6 464.4 692.8 461.4 689.5 457.6 685.8 453.1 684.5 448.8M522 494.6L515.5 489.6 511.5 485.3 504.5 479.9 500.6 475.8 494.1 474.1 486.5 472.8 479 467.7 465.7 464.2M-37 241.2L-33.5 242.9 -31.4 244.6 -26.7 245.9 -22 248.5 -17.4 248.3 -14 248.9 -11.3 249.4 -8.8 249.3M286.8 130.6L290.5 131.7 295.8 132.8 300.4 134 306.1 137.1 310.7 140.7 313.7 144.5 319.8 148.1 324.8 149M421.9 348.2L420.6 363 424 375.5 427.4 384 428 393.5 427.3 401.3 429 409.1 434 423.6 435.2 433.3M490.4 157.2L491.1 160.5 491.1 164 490.1 169.6 490.4 174.3 486.4 182.3 484.9 189.1 483.4 195.2 481.4 199.9M999.5 226.6L1002.2 232.9 1002.9 239.1 1003 246.4 1001.2 253.8 999.2 257.2 998.5 261.7 998.2 268.3 998.3 273.6M289 449.1L294.9 444.2 303.5 440.1 312.5 435.7 322.6 427.3 327.5 419.8 336.6 411.6 340.7 406.9 346.3 401.8M65.5 171L66.3 168.9 67.4 166.5 68.4 165.1 70.2 163.1 71 161.2 72.7 159.2 73.5 157.1 74.8 155.4M364 488.2L358.3 503.5 355.4 514.8 355.6 527.8 352.2 548 355.8 559.4 356.3 570.7 360.3 581.5 359.8 596.5M124.8 302.2L125.4 304.8 126.5 307.1 126.3 309.2 126.4 311.9 126.9 315.1 127.4 318.9 128.1 321.9 128.6 324.4M644.5 391.9L650.1 397.7 656.3 406.9 662 415.9 664 425.8 670.1 429.7 675 434.8 681.7 442.1 684.5 448.8M277.7 141L279.4 139.1 281.2 137.6 282 136.4 282.7 134.7 284.5 133.2 285.3 131.9 286.8 130.6M465.7 464.2L472.5 462 479.3 458 486.8 449.5 495.8 445 503.5 442.3 513.8 441.8 526.4 437.8 534.5 436.5M216 245.7L214.9 242.4 213.6 239.7 213 234.9 213.6 231.5 211.7 229.3 210.2 226.1 207.6 223.4 205.7 218.5M841.8 263.4L843.8 261.7 845.7 260.4 848.1 256.8 850.7 255 853.8 253.8 858.9 253.3 862.6 250.7 866.6 248.6M1000.9 408.9L1005.6 406.7 1010.1 404.3 1014.9 402.4 1019.8 398.8 1023.5 396.6 1026.3 393.8 1029.8 391.8 1033.5 390.3M265 490.9L270.2 502.5 276.1 514.9 280.7 524.1 282.4 532 283.5 537.9 284.8 547.6 287.3 556.1 287.8 568.8M834.1 280.5L833.7 277.3 833.4 272 833.4 267.9 832.7 264.6 832.2 260.1 832.1 255.7 833.3 253.1 833.9 250.2M209.8 527.7L209.1 516.5 211.8 505.9 211 498.7 212.2 490.6 211.8 482.2 210.5 470.4 209.6 461.2 207.1 455.2M657.8 169L660.1 170 661.3 171.1 664.3 171.7 666.3 171.8 668.9 171.6 671.9 171.9M582.2 27L578.9 20.4 576.6 15.5 571.5 11 567.5 4.8 566.7 -4.1 564.2 -15.6 560.5 -24 558.6 -30M247 298.5L243.5 299.1 240.7 298.9 235.6 298 230.4 298.2 226.6 298.1 223.5 298.6 219.6 296.9 215.7 296.6M1000.9 408.9L997.7 411.9 995 416.1 990.6 420.5 986.4 423 982.2 427 978.5 432.6 976.9 437.4 975.9 441.4M833.7 153.2L835.1 150.7 835.6 148.8 836.3 145.7 836.4 143.1M1214.1 183.2L1215.1 186.7 1215 189.2 1214.6 191 1214.9 193.5 1215.6 195 1215.8 196.9 1216.4 198.3 1217.7 199.7M388.1 341.1L390.8 336.9 395.3 332.7 398.2 324.7 401.3 316.6 404.9 311.4 408 303.3 409.6 296.6 412.2 288.9M807.4 423.2L814.1 423.4 822 423.4 828.5 423.3 833 424.3 839.7 423.8 844 422.7 849.5 421.8 853.2 421.5M14.2 129.2L19.5 127.1 24.1 124.9 31.2 124.3 36.7 122.6 46.3 122.3 55 121.9 60.6 121.1 66.5 121.1M333.7 607.8L329.8 600.3 323.8 595.2 318.4 591.8 311.8 588.4 305.1 584.2 299.1 578.5 291.4 573.5 287.8 568.8M746.7 117.8L748.9 124.3 752 131.8 757.2 138.7 763.8 145.3 768.1 150.9 770.7 160.8 775.9 167.9 777.6 175.3M596.6 333.4L588.1 331.7 576.7 327.7 566.9 319.1 557.2 313.1 541 308.7 528.1 299.5 515.4 299.3 504.6 297.9M156.1 204.9L160.6 198 164 193.8 168.4 186.3 171.9 178.3 178.3 169.8 184.8 158.2 190.1 151.7 196.5 143.8M247 298.5L249.1 291.5 249 283.6 251.2 273.5 255.2 267.3 253.9 260.1 252 254.7 252.9 247.2 251.6 237M1226.4 558.7L1225 548.2 1226.2 541.2 1226.8 535.1 1228.5 528.6 1230.4 522.3 1232.1 516.2 1232.6 511.9 1232.8 506.7M769.1 571L769 576.5 771 582.3 772.3 587.3 773.8 593.9 774.8 597.5 774.5 602 776 605.5 776.4 608.6M-23.1 557.4L-22 559.7 -21.2 561.5 -19.6 563.2 -18.6 564.8 -16.3 566.7M333.6 379.5L335.1 377.6 335.8 376.1 337.1 373.6 338.5 372.5 338.8 370.1 339.5 368.3 340.3 365.7M771.7 406.5L764.2 402 760.6 397.3 757.1 391.3 754.4 387.1 749.4 383.3 745.1 381.3 742.7 377.7 738.3 374.5M1002.8 498.8L1004.5 498.8 1006.8 499.5 1009.2 500.9 1011.4 502.3 1013.4 504.1 1015.2 505.6 1018.3 506.6 1022 508.1M1073.7 241.2L1080.9 244.3 1085 248.2 1089.3 250.5 1092.1 253.5 1097.6 256.7 1102 257.7 1107.7 262.7 1112 266.6M1186.4 634.8L1188.6 632.2 1189.9 630.3 1191.2 627 1192.2 621.4 1191.8 618.8 1192.4 616.1 1193.3 614.4 1194.4 611.7M144.2 304.4L142.2 304.9 140.2 305 137.1 305.3 135.2 304.7 132.9 304.4 130.7 303.4 127.9 303.1 124.8 302.2M347.1 61.3L351 62.1 357.3 63.4 360.9 63.9 365.8 65.7 374.9 64.8 380.7 65.9 384.7 66.1 390.3 68.7M631.4 -22.7L631.6 -14.9 630.7 -8 628.7 0.2 627.7 8.8 626.7 13.9 626.3 18.5 624.5 22.7 621.2 29.4M184.2 28.5L195 34.6 204.7 44.4 210.5 52.3 214.9 57.4 222.5 64.6 232.7 71.5 238.8 75.1 246.3 79.6M601.8 98.8L593.6 102.4 585.8 103.2 579.8 106.2 573.4 107.1 567.7 107.1 561.3 106.8 555.7 107.8 550.8 108.9M975.9 441.4L962.5 436.7 952.3 430.3 941.4 418 931.2 409 919.9 405.9 908.9 401.4 902.4 397.1 895.9 390.8M112.7 391.9L113.2 385.2 115.3 379.7 115.9 371.3 118.4 361.8 117.9 351.6 118.2 345.2 119.8 335.7 123.2 330.2M1143.3 -33.8L1137.9 -30.2 1130.6 -27.3 1122.2 -22.6 1117 -18.7 1111.6 -16.4 1108 -13.9 1104 -11.6 1098.7 -9.4M131 315.2L129.3 312.9 128.9 311.3 127.7 309.5 127.4 307.7 126.3 305.9 125.3 304.1 124.8 302.2M843.9 126.5L844.9 128.8 846.6 130.9 847.1 133.2 847.9 134.8 851.2 137.2 854.2 139.2 856.7 141 859 144.5M645.5 328.4L648.4 323.4 649.2 319.4 652 316.7 654.8 312.8 656.8 309.3 658.9 307.5 660.2 305.4 662.4 303.4M657.8 169L657.3 165.8 657.1 162.8 656.9 160.1 656.5 157.6 656.7 155.8 656.7 153.4 656.9 150.5 657.5 148.5M231.2 331.1L238.5 327.9 244.7 327.1 254.1 328 265.7 329.1 273.8 330.1 281.7 332.9 293.4 335.5 303.4 336.5M488.3 517.1L492.6 517.2 499.4 518.3 504.2 517.7 509.3 518.9 513.4 519.1 519.3 519.1 525.6 517.6 533.7 515.5M1000.9 408.9L1013.4 412.2 1022.3 417.4 1031.9 426.8 1041 432.3 1059.6 437.7 1074.8 438.5 1087.7 441.1 1097.3 442.2M922 219.3L925.9 206.3 929.2 198 931.6 182.7 930.6 172.5 931.8 163.4 935.1 152.5 938.1 143.7 940.9 136.4M379.5 4.8L383.5 10.4 386.4 17.4 387.4 25.6 388.3 31.3 387.5 38.5 389.5 49.9 391.9 61.3 390.3 68.7M444.7 511.5L442.8 508.2 442.2 505.6 440.7 503.4 439.3 502.5 438.1 501.1 436.7 499.2 435.4 498.4 433.5 497.1M672.8 461.1L663.1 463.8 652.4 464.8 640.1 463.9 627.6 463.6 619.1 463.5 609.8 463.3 600.1 462.6 590.4 464.5M218.9 444.1L217.9 445.5 216.2 446.9 213.7 447.9 212.2 449.2 211 450.5 209.8 452.7 208.6 454.2 207.1 455.2M866.5 685.2L867.9 678.8 867.3 674.5 866.7 671.8 866.2 667.9 865 665.2 863.9 661.3 862.9 657.6 861.1 655.2M1165.7 524.7L1154.6 523 1142.1 522.8 1133.7 518.7 1126.8 517.5 1122.7 518.1 1116.1 517.9 1110.1 519 1100.9 520.8M932.4 79.1L926.3 81.4 916.9 81.5 909 86.2 901.1 90.9 895.3 98.1 885.6 105.9 878.2 107.8 871.1 111.8M872.5 447.5L874.3 441.6 877.9 433.3 879.1 429 881.5 422.2 884.8 416 886.5 407.9 888.8 400.3 895.9 390.8M807.4 423.2L803.6 420.8 798.1 417.7 793.9 414.8 791.5 412 784.8 409.4 780.2 409.4 776.8 407.7 771.7 406.5M89.2 566.4L88.9 568.3 88.6 570.1 88.1 572.6 87.3 575.2 86.8 577 86.9 579.6M376.1 159.9L377.9 162 379.8 162.9 381.4 163.5 383.5 164.9 385.9 166.2 388.2 168.2 391 168.8 393.7 169.7M522 494.6L525.6 495.7 531 495.8 537.2 497.7 543.8 499.2 548.1 499.2 552.9 498.3 559.1 499.4 567 497.7M1198.3 512.4L1202.3 511.2 1204.5 509.3 1210.1 508.1 1215.1 508.5 1218 507.7 1222.6 507.1 1227.1 506.6 1232.8 506.7M392.6 191.6L390.7 187.1 388.6 183.9 387.6 178 387.3 173.6 383.4 169.5 379.7 166.6 378 163.1 376.1 159.9M1254.7 639.3L1254.2 640.8 1253.6 642.7 1253.6 645.9 1253.9 647.7 1253.4 649.3 1253.1 651.5 1252.3 652.9M834.1 280.5L829.5 282.4 825.4 283.5 821.3 287.5 818.2 289.4 813.7 290 810.5 291.2 805.3 293.1 799.9 296M538.1 269L542.3 266.1 547.3 263.2 552.3 259.5 555.1 256.4 557.7 252.7 559.1 248 561.9 245.6 563.2 243.6M1256.9 -15.4L1253.1 -13 1246.7 -9.6 1240.4 -5.9 1231.6 -1.5 1221.1 3.7 1215.6 9.6 1210.4 15.2 1203.4 21M370 199.9L371.4 194.4 371.6 187.6 373.9 183.7 374.8 177.3 375.1 173.1 374.3 170 375.9 165.9 376.1 159.9M872.5 447.5L882.3 449.1 891.1 448.1 905.6 448.6 915 446 934.5 448.4 948.2 446.3 962.4 446.3 975.9 441.4M1203.4 21L1202.3 19.2 1201.2 17.3 1200.2 16 1199 14.1 1197.8 11.2 1197.7 8.6 1196.7 6.6 1195.5 3.9M507.8 26.4L508.8 34.3 508.1 39.8 506.6 49.8 505.7 57.1 507.9 64.3 507.8 71.6 509.1 82.5 510.4 94.8M231.2 331.1L244 325.2 255.1 323.6 264 323.2 272 321.3 280.4 317.6 287.6 316.6 295 316.6 299.6 317.4M1168.1 270.1L1165.8 268.5 1164 267.7 1162.1 266.1 1160.7 264.7 1157.7 263.5 1155.4 263 1151.4 262.9 1148.4 261.7M1068.3 181.4L1070.3 183.6 1072.8 187.7 1074.8 189.9 1077 192.8 1079.5 195.1 1082.7 198.2 1086.3 202.7 1087.9 206.4M245 466.3L238 463.2 233.9 460 229.3 458.8 225.5 457.3 221.3 457.8 217.7 457.2 213.5 455.7 207.1 455.2M1152.4 644.3L1154.6 643.2 1156.1 642.8 1159.2 641.4 1162.1 640.2 1167.1 638.9 1171.3 639.2 1175.8 638.8 1178.5 637.8M722.7 674.4L727.6 670.8 733.3 669.1 736.5 666.9 739.9 664.9 743.6 662.7 746.4 661.5 749.2 660.1 753.7 658.8M736.3 137.7L742.6 142.9 747.5 150.3 752.8 151.8 758.3 155.4 762.7 161.5 768.8 168 773.2 173.1 777.6 175.3M1137.5 598.9L1142.9 603.9 1149.1 609 1154.6 613.4 1159.9 619.3 1163.3 623.4 1167.8 629.2 1171.7 633.9 1178.5 637.8M289 449.1L287.6 455 282.9 462.6 281.4 467 278 473.4 273.2 477.6 270.1 480.5 267.1 486 265 490.9M1241.3 451.1L1237 457.1 1231 464.1 1223 469.8 1214 477.6 1208.2 484.4 1204.6 491.7 1194.8 503 1186.8 511.1M71.5 289.2L74.6 290.7 78.9 293.2 81.9 294.5 85.8 295.1 94.1 293.6 99.4 293.9 103.7 294.9 109.9 295.9M247 298.5L240 291.4 234.4 281 227.7 276.4 224 270.8 222.5 265.9 218.8 261.4 217.6 253.9 216.6 248.5M867 16.6L859 20.4 853.5 22.2 849.2 27.1 845.8 29.6 842.7 31.4 839 35.5 833 40.8 830.2 45.1M502 267.3L505.4 266.8 510.2 266.6 513 266.9 516.2 267.6 521.6 266.9 526.4 266.3 532.6 267.3 538.1 269M356.4 129.8L361.9 122.4 368.2 115 370.6 104.3 376.3 95.6 380 87.1 381 81 384.1 75.4 390.3 68.7M571.6 505.6L577.4 512.6 580.7 521.8 584 529.2 586.6 541.2 589.7 546.6 592.9 554.2 593.6 566.3 598.3 576.4M932.4 79.1L937.2 85.8 943.6 97.3 947.3 103.1 953.7 110.4 956.2 115.4 961.8 120.6 966.6 125.3 970.5 132.6M922 219.3L913 226.1 909 233 903.1 235.4 898.1 238.9 891.4 241.6 886.7 244.5 878.7 247.1 866.6 248.6M644.5 391.9L642.3 388.7 639.5 384.7 638 381.9 634.8 377.9 632.5 374.1 629.7 370.3 629 367.2 627.9 364.7M549.1 543.3L547.1 539.3 546.4 536.2 544.7 532.9 543.4 529.4 541.7 527.1 540.4 523.4 538 519.7 533.7 515.5M209.8 527.7L209.4 529.3 208.5 531.7 207.7 534.6 207 536.3 205.8 538.9 204.9 541.8 204.1 544.3 203.6 546.4M1146.9 325.2L1141.7 319.4 1139 312.1 1134.5 305.6 1127.9 300.6 1125.3 294.1 1121.7 286.1 1115.6 275.4 1112 266.6M650.4 206.6L658.9 202.2 666.3 195.7 677.5 191.7 687.9 187.1 694.3 186.3 699.5 186.3 705.4 187.2 714.6 184.8M64 309.6L56.6 313.9 52.5 317.7 45.2 322.1 37.3 323.3 34.4 325.3 30.1 328.2 26 331.4 21.2 333.6M1226.4 558.7L1221.1 566.7 1214.1 576.9 1208.1 584.6 1203 588.6 1201 591.9 1197.9 597.2 1195.6 606.1 1194.4 611.7M323.4 372.5L319.8 369.3 316.5 363.8 313.1 359.7 309.5 354.6 305.9 348.6 305.2 343.8 303.8 340.4 303.4 336.5M549.1 543.3L541.4 558.3 537.7 569.6 534.3 578.3 532.2 592 525 605.7 515.5 615.2 512.2 625.6 509.8 632.8M1039.7 247.6L1033.9 244.7 1030.8 241.4 1023 238.2 1014.3 237.3 1008.9 234.5 1006.5 231.6 1002.9 229.7 999.5 226.6M902.5 338.2L899.6 346 899.6 354.4 900 359.4 901.6 365.9 899.3 374.3 899.4 381.6 897.8 387.1 895.9 390.8M838.2 500.8L844.1 498.8 850 496 855.1 495.8 858.7 494.4 862.6 494.1 865.6 493.1 870.2 492.3 873.7 492.3M1101.7 578.4L1103.1 572.6 1103.4 563.5 1103.8 555 1102.3 546 1101.6 540 1100.9 532.9 1100.3 527.9 1100.9 520.8M64 309.6L66.4 313.2 68.8 318.5 71.1 322.7 72.3 327.8 75.4 334.6 78.8 338.1 85.7 343.9 90.7 346.8M816.6 543.6L827.2 551.2 835.3 553.4 852.1 559.2 862.5 563.4 872 573 881.6 578.3 893.1 581.6 901.3 583.6M1264.2 127.4L1263.4 137.2 1264.6 144.3 1262.7 153.7 1260.8 161.9 1260.3 171.5 1261 179.7 1266.6 191.5 1267.2 201.2M239.7 95.1L240.5 93.6 241.5 91.6 241.7 87.9 242.4 85.6 243.5 83.7 243.9 82.3 245.2 81.1 246.3 79.6M650.4 206.6L653.4 202.7 655 198.7 660.1 193.6 664.3 187.7 665.6 184.1 668.3 180.1 670.5 175.3 671.9 171.9M1036.2 618.4L1034.5 613 1034.9 606.5 1034.2 598.4 1034.6 592.7 1035.2 583.1 1037.3 572.6 1036.8 563.7 1033.7 556.8M973.2 65.5L974.1 54 975.9 44.1 980 30.2 980.2 18.6 982.9 11.8 988.4 2.5 995 -7.7 998.5 -18.4M66.5 121.1L67.8 120.5 69.5 119.2 71.7 117.4 74 116.3 75.5 114.6 77.6 113.2 79.2 110.6M333.3 119.8L331.5 122.2 329.7 125.1 328.4 128.5 327.3 132.6 326.9 135.7 326.7 139.1 325.6 144.8 324.8 149M579.7 623.3L573.3 624.6 565.7 625.3 558 624.7 550.1 624 538.8 624 526.6 626.7 518.4 631.5 509.8 632.8M957.3 483.2L955.5 488.9 954.5 492.6 954.6 496.4 954.8 502.3 955.2 505.3 954.8 508 954.8 511 954.7 515.5M1087.9 206.4L1089.1 215.8 1090.1 227 1093.9 232.5 1096.3 238.4 1101.6 249.1 1104.3 256.3 1108.1 261.5 1112 266.6M225.3 581.1L228 580.5 231 580.4 233.7 579.8 237.5 579.6 238.8 580 240.7 580 243.3 580.8 245.5 581.5M1109.2 441.4L1121.2 432.7 1133.9 425.4 1145.7 419.8 1153.7 418.1 1162.8 407.6 1168.1 400.2 1183.7 387.8 1196.3 378.1M1242.8 90.3L1247.7 74.2 1249.7 63.4 1248.3 49.5 1250.1 39.3 1252.8 30.2 1257.5 16.4 1257.5 2.5 1256.9 -15.4M1194.4 611.7L1198.5 613.6 1201.7 614.7 1203.7 615.7 1206.3 616.9 1209.4 616.6 1214.1 617.3 1220.5 618.7 1225 619.6M1218.2 203.6L1221 200.5 1223.4 199.3 1225.6 197.4 1229.1 195.5 1231.7 194.2 1235.3 191.9 1239.1 190.2 1241.7 188.9M1203.4 21L1206.1 22.6 1208 23.9 1211.4 25.9 1213.2 28 1216.3 30.7 1217.9 33.2 1219.9 37.1 1221.7 40.7M531.9 366.9L539.4 366.4 549.8 365.2 555.6 363.8 561.4 364.3 567.6 364.5 572.7 365.2 582.1 365.1 590.2 366.6M442.2 270.8L447.9 263.4 457 258.2 462.3 255.1 467.4 250.6 472.6 246.3 477.7 241.4 480.9 238.8 485.9 234.8M922 219.3L915 214.2 907.5 208 899.1 200.4 892 197.9 881.2 187.7 870.8 173.4 866 162.1 862.1 154.9M1109.2 441.4L1106.7 433.6 1107.6 423.6 1107.9 417 1109.2 412.4 1108.3 402.4 1107.9 394 1106 382.9 1098.7 370.5M899.5 543.8L900.9 549.4 901 556.8 901.2 559.9 901.3 565 901.4 570.2 900.4 576.2 900.4 580.5 901.3 583.6M251.6 237L260.3 238.7 267.5 243.3 275.3 243.6 281.9 245.3 291.9 247.6 300.4 248.2 308.1 249.7 313.7 249.4M216.6 248.5L213.7 246.1 211.4 244.3 209.2 242.6 207.7 240.5 206.8 239.2 205 237.9 203.4 235.3 202.5 233.4M370 199.9L372 199.4 375.2 199.6 378.8 197.6 382 196.4 384.8 195.2 387.7 194 390.5 192.5 392.6 191.6M838.2 500.8L840.1 503.3 841.3 508 842.9 513.7 844.1 519.1 846 521.9 849.5 524.5 852.2 529.1 854.5 533.6M356.4 129.8L354.5 128 352.4 126.8 348 126.3 345.2 125 343 124.7 340.2 123.6 337.2 121.3 333.3 119.8M1246.8 521L1243 525.5 1238.5 532.7 1236.1 538.1 1235.6 541.8 1234.2 545.6 1231.2 550.7 1230 554.3 1226.4 558.7M732.8 557.2L728.7 565.9 724.7 571 721.7 575.8 716.5 581.2 709.8 585.2 703.4 593.1 700.8 596.8 697.8 603.2M117.1 105.5L121.3 106.2 124.6 107.1 130.3 108.9 134.5 108.9 138.2 108.6 144.3 108.7 149.6 109.4 157.4 111.6M415.6 652.8L412.9 660.1 408.1 666 404.9 669.1 401.4 675.1 401.2 681 399.3 688.3 398.1 696.9 394 707.6M976.8 687.7L981.1 682.5 984 678.8 987.5 670.7 988.8 665.1 990.1 657.2 995.9 646.9 999.7 640.1 1000.5 634.4M176.6 375.9L180.4 388.1 181.3 398.9 184.8 405.2 188.9 415.6 189.9 421.3 190.5 427.9 192.7 434.7 192.9 443.3M1259.7 163.6L1255.7 158.2 1250.2 152.2 1246.9 147 1243.8 144.1 1239.5 140.8 1231.6 138.4 1225.2 133.8 1217.8 127.5M1092.7 664.1L1094.5 658.5 1095 649.3 1098.9 639.2 1100.5 625.9 1100.7 613.7 1097.5 599.2 1099.4 587.8 1101.7 578.4M44.8 557.8L41 553.5 37 549.7 33.8 547.8 30.3 543.2 25.3 541.3 22.2 539.1 18.5 537.5 14.6 534.8M53.3 566.2L53.4 561 52.6 556.9 52.2 552.5 50.5 546.8 52 544 52.9 539.9 53.2 535.3 53.1 532.2M1152.4 644.3L1149.1 650.5 1144.7 654.2 1142 659.9 1136.3 665.7 1128.3 672.5 1123.4 678.8 1117.2 683.8 1112.1 693.4M859 144.5L860 140 862 134.8 862.7 130.7 864.8 126.7 866.8 122.4 867.3 118.1 869.9 114.7 871.1 111.8M1242.8 90.3L1239.7 85.4 1238.6 82 1234.9 77.5 1232 72.5 1226.1 62.9 1223.2 55.9 1223.6 49.4 1221.7 40.7M1137.5 598.9L1146.6 594.4 1153.4 591.1 1161.1 588.3 1170.5 583.9 1177.3 579.8 1181.4 576 1185.3 571.9 1190.9 565.4M1259.7 163.6L1258.8 165.4 1257 167.4 1255.4 171.6 1253.7 174.2 1250.6 178.9 1246.7 181.9 1244.1 184.6 1241.7 188.9M18.5 69.5L15 74.5 11.7 81 10 87.1 10.1 91.2 6.5 99.8 3.4 108.2 4.4 118 3.1 127.1M644.6 92.8L643.7 87.3 644.7 79.1 643.5 71.7 639.1 64.3 636.8 58.5 636.1 53.9 633.9 47.8 633.9 43M389.9 141.4L384.5 140.6 380.7 139.2 374.1 136 369.9 133.7 367 132.3 364.6 131.5 361.4 131 356.4 129.8M479.7 -36.2L490.5 -37.1 500.1 -37.5 510 -37 521.8 -36.2 528.6 -35.9 536.4 -33.9 542.1 -31.1 548.7 -26.8M-40 252.7L-38.3 247.2 -37.5 242.8 -35.4 236.1 -31.4 228.7 -30.6 218.3 -32.6 210.7 -31.8 204.7 -32 196.1M456.6 637.2L450.1 639.6 442.2 642.8 437.4 643.9 431.8 645.3 428.6 648.1 425.1 649.6 421.2 651.7 415.6 652.8M419 199.3L413.4 203.4 407.1 206.7 402.7 209 398.8 212.1 392.8 214.9 385.4 220.1 376.4 220.7 368 224.4M1232.8 506.7L1235.4 505.9 1238.8 505 1241.1 504.2 1243.8 504.3 1247.3 503.4 1251.4 503.7 1253.4 503.4 1256.2 503.7M503.1 -7L500.3 -3.7 497.3 -2.1 495.4 1.6 491.7 5.7 490.4 8.9 487.2 13.3 486.3 15.7 485.2 19.1M976.6 306.6L966.5 311.3 956.1 315.1 941.3 320 929.5 320.8 920.9 323.9 913.3 330.5 907.9 333.5 902.5 338.2M247 298.5L243.4 299.5 240.7 299.8 237.5 300.6 234.6 302.5 232.8 304.9 230.9 306.1 229.4 307.2 227.7 308.4M1141.4 348.7L1137.9 351 1132.5 354.9 1127.2 357.3 1118.2 358.8 1113.5 362.9 1108.7 365.1 1103.8 368 1098.7 370.5M448.3 601.2L454.3 592.1 456.7 583.2 464.5 574.5 475 566.1 478.2 557.8 479.8 549.8 482.1 543.9 482.8 537.6M464.4 617.4L470.7 620 477.3 621.6 484.4 622.8 491.2 621.6 494.2 623.7 499.1 625.2 506.1 629.2 509.8 632.8M995.6 279L1001.1 284.6 1006.1 290.8 1010.5 294.5 1013.4 299.7 1014.7 303.5 1015.8 308.4 1021.4 314.7 1024.3 319.3M1161 352.9L1155.1 354.5 1147.9 358.1 1139.2 358.2 1130.8 359.4 1121.4 363.6 1112.8 365.1 1106.9 367.6 1098.7 370.5M690 255.8L685 255.4 678.2 252.5 673.1 252.6 669.3 251.7 663.5 251 658.7 251.6 649.4 251.8 641.9 252.6M129.7 184.2L124.4 181.3 119.9 178.9 112.3 177 105.1 172 95.3 168.1 87.5 165.9 80.4 159.3 74.8 155.4M985.5 687.5L989.2 682.5 991.6 676 994.5 670.2 996.9 665.1 998.2 655 1000.6 649.1 999.9 640.2 1000.5 634.4M502 267.3L504.2 259.7 506.4 252.3 509.4 244.1 514.1 235.8 516.5 231.4 517.6 225.8 516.1 216.9 517.2 208.9M1033.9 213.7L1038.5 208.5 1042 204.9 1044.1 200.1 1048.8 195.2 1054.8 190.3 1059.1 188.1 1062.8 185.5 1068.3 181.4M816.9 413L825.1 405.4 833.9 399.8 840.7 388.1 850.9 376.5 863.1 369.3 873.3 365.2 889.1 355.2 902.5 338.2M163.9 22.7L157.1 12.6 154.9 5.3 153.4 -0.9 150.1 -8.9 147.8 -14.7 147.3 -19.1 146.4 -24.4 144.5 -31.1M1214.1 183.2L1215 175.6 1213.6 170 1215.9 165.3 1217.2 159.2 1219.5 150.5 1220 144.8 1218.4 136.6 1217.8 127.5M1020.6 556.1L1005.4 564.4 982.3 576.5 965.3 582.2 955.2 586.6 944 593.6 931.7 601.2 925.2 607.1 916.2 613.8M642.6 294.8L646 296.8 649.3 297.5 651 299.2 654.3 300.5 655.8 300.6 658 301 660.6 302.1 662.4 303.4M394 707.6L384.8 705.5 378.3 701.3 372.1 697.3 367.8 693.8 362.4 690.4 357.4 686.4 354.7 682.9 351.3 677.7M1092.7 664.1L1099.8 659.5 1104.8 655.7 1112 650 1116.1 642.9 1121.9 632.5 1129.3 622.8 1132.7 607.4 1137.5 598.9M1165.7 524.7L1169.4 521.7 1171.3 518.3 1174.5 517.3 1176.6 515.7 1180.3 515 1182.4 513.6 1184.3 512.2 1186.8 511.1M64 309.6L60 315.1 55.9 319.7 49.8 328.1 43.6 333.9 40.6 340.1 36.9 345.5 36.2 357.5 32.8 366.1M216.6 248.5L206.3 252 199.3 253.6 191.8 256.5 181.9 260.7 176.9 263.8 172.5 266.2 166.9 269.7 158 271M333.8 221.5L329.1 225.9 327.5 229.6 323.5 234 321.3 237.2 319.1 239.8 316.2 243.1 315.1 246.4 313.7 249.4M900 637.8L902 634.4 905 632.1 906.6 629.5 910.5 626.7 912.6 622.4 914.8 619.5 915.2 616.4 916.2 613.8M1098.7 -9.4L1089.1 -15.4 1078.8 -17 1066.5 -18.6 1048.3 -17.5 1035.6 -18.9 1019.7 -22.9 1006.9 -21.1 998.5 -18.4M390.3 68.7L393.1 67 396.6 66.1 400.6 64.2 404.9 60.7 409.5 58.7 415.2 53.7 417.5 50 419.8 46.9M117.6 484L114.4 476.6 111.1 472.6 111 465.5 108.7 460.2 108.7 453.8 107.3 449.9 105.3 442.6 105.6 435.9M645.2 157.2L645.3 154.9 645.9 152.1 646.9 148.4 648.2 146.3 648.6 144.3 650.3 142 650.5 139.1 650.7 135.8M1038.3 371.1L1034.7 362.9 1029 352.7 1014.6 340.1 1007.4 328 1001.1 321.2 993.5 314.5 983.8 310.5 976.6 306.6M1073.7 241.2L1074 248.5 1074.9 258.8 1075.3 267.6 1076.9 276.7 1082 287.2 1088.9 296 1098.5 311.6 1101.2 327.2M368 224.4L373.6 233.7 377.7 245.3 382.5 250.8 387.3 256.3 393.7 263.8 396.8 270.3 404.8 280.2 412.2 288.9M771.2 607.4L766.2 604.8 759.7 602.7 749.7 601.4 741.1 601.5 729.2 602.5 716.7 604.5 706.2 604.1 697.8 603.2M538.1 269L543.9 274.2 548.1 282.4 555.7 289 561.1 295.4 571.8 302.6 578.7 307.2 588.4 316.5 596.6 333.4M1195.6 131.5L1198.2 130.1 1200.9 129.5 1202.9 128.9 1206 127.5 1208.1 127.9 1210.5 127.5 1214.2 127 1217.8 127.5M1178.1 140.3L1179.8 139.5 1181.6 138.4 1183.5 137.5 1185.9 136.8 1189 136 1190.8 135 1193.4 132.9 1195.6 131.5M176.6 375.9L173.2 381.3 170.6 387.1 163.9 390.6 158.1 397.3 154.8 402.5 154.1 406.9 151.7 413 150.3 420.2M14.2 129.2L21.3 130.2 25.7 130.8 31.1 134.7 35.6 136.1 44.6 136.6 52.2 137.1 58.8 136.3 67.4 138.8M973.2 65.5L968.5 55.9 965 43.9 958.8 32.5 951.7 25.7 946.4 19.4 942.1 13.4 936.7 8.7 932.8 2M531.9 366.9L542.6 360.2 552.7 357 560.4 351.9 568 345.8 573.8 340.8 583.8 335.7 590.9 333.5 596.6 333.4M1039.7 247.6L1036.8 255.4 1036.5 263.4 1032.5 272.8 1030 279.5 1025.9 291.1 1023.5 300.9 1025.4 311.2 1024.3 319.3M650.4 206.6L651.1 203.2 651 199.8 653.6 194 653.7 190 654.5 184.6 657.1 179.1 657.8 174.5 657.8 169M389.9 141.4L388.3 143.4 386.7 145.5 385.7 148 385.3 149.7 382.6 153 380.2 155.2 378.3 156.8 376.1 159.9M333.7 25.3L337.5 23.7 343.6 23 349.7 22.3 354 21 360.7 18 367.3 12.8 374.2 6.8 379.5 4.8M650.7 135.8L651.6 137.1 652 138.8 653.2 140.9 653.7 143.1 654.1 144.4 655.3 146 656.6 147.3 657.5 148.5M419 199.3L416.5 195.7 414.8 190.8 411.9 187.1 409.7 182.5 405.3 178.8 401.1 176.9 396.8 173.3 393.7 169.7M388.1 341.1L383.8 339.4 381.1 337.8 375.9 336.5 370.6 334.1 367 332.6 362.7 332.1 357.7 331.8 350 334M1255.7 664.6L1245.9 662.9 1235.6 659.5 1224.1 658.8 1209.9 652.1 1204.5 649.8 1196.8 648.8 1187.1 642.7 1178.5 637.8M20.9 501.9L23 500.3 25.2 498.2 26.2 496.7 27.3 494.8M1246.8 521L1248.7 521.5 1250.5 522.2 1252.6 523.4 1254.9 524.6 1256.3 526 1258 527.4 1259.3 529.1 1260.6 530.4M184.2 28.5L187.5 23.2 189 19.2 190.6 14.8 191.8 10.6 194.5 5.4 198.4 -0 202.8 -5.3 205.8 -13.7M1020.6 556.1L1022.9 556.6 1024.5 556.8 1026.5 556.5 1029.7 556.6 1031.9 556.8 1033.7 556.8M567 497.7L563.4 489.4 557.6 482 553.4 475.3 548.6 463.8 542.6 456.2 538.7 450 535.5 442.2 534.5 436.5M833.7 153.2L833.8 159.6 834.2 163.7 835 169.6 836.8 173.3 837 177.6 837.7 182.1 837.7 185.1 836.9 187.7M802.7 226.6L796 221.4 791.8 217.6 786 212.3 779 203.1 774.2 199.8 769.5 196.4 765.5 192.2 762.7 188.1M245 466.3L246.9 459.8 249.2 450.9 247.8 443 249 433.2 250.4 423.9 250.9 414.6 249.3 400.1 252.2 388.1M490.4 157.2L493.3 151.1 496.5 141.5 500 131.3 499.5 118.5 500.6 114.1 504 108.7 508.3 101.4 510.4 94.8M575.6 69.9L579.9 65.2 585.1 62.8 593.4 59.9 598.8 56.3 607.4 52.5 620.5 49.2 626.6 47.8 633.9 43M634.2 402.9L633.2 405.7 631.5 409.3 631.3 412.1 631.3 414.9 631.3 417.2 631.7 420 631.1 422 631.1 425M141.5 657.9L152.4 650.5 167.3 638.3 184.3 630.2 196.3 625.5 210.7 622.6 221.6 616.7 229.2 616.1 239.2 613.4M150.8 76.9L144 76.9 137.6 77.3 132.2 77.1 128.1 76.8 117.9 78.5 111.5 76.9 105.1 75.4 100.4 74.4M18.5 69.5L18.5 76 20.7 83.7 21.8 89.5 21.6 94.8 19.7 101.7 17.1 112.5 16.6 121.5 14.2 129.2M209.8 527.7L202.1 529.5 197.2 530.1 189.8 531.9 182 532.2 172.8 533.6 167.5 536.6 160.6 536.6 151.1 538.7M954.8 484.4L953 488.4 952.1 491.7 951.6 496.3 952 501.2 952.7 504.6 954.5 509.7 954.1 512 954.7 515.5M-23.1 557.4L-20.7 551.7 -17.4 547.8 -14.1 544.2 -8.2 540.3 -4.7 539.3 -2.6 538.2 0.9 535.3 3.9 533M1165.7 524.7L1163.1 529.6 1158.5 536.8 1152.8 542.8 1149.6 547.7 1143.8 555.9 1138.6 568.6 1134 574.8 1126.9 584M598.3 576.4L603.1 580.1 608.5 585.9 614.1 587.2 619.9 590.5 625.2 591.8 630.8 594.2 638.2 597.4 644.3 598.8M252.2 388.1L260.5 384.1 268.5 377 274.6 370.4 279.2 362.6 285.6 354.2 291.8 346.8 296.4 342.2 303.4 336.5M53.8 628.4L56.4 627.2 59 626.8 61.2 626.2 63.4 625.7 66.5 626.3 69.4 625.7 71.7 625.3 75 625.9M590.4 464.5L588.6 461.3 585.3 458.8 583.1 455.3 580.3 449.8 579.5 446.8 578.1 443.5 578.2 439.9 577.6 437M722.7 674.4L716.9 669.7 711.9 666.9 701.9 662.3 693.2 657.4 688.3 653.4 682.2 646.4 673.3 636.1 665.9 628.5M732.8 557.2L743.1 540.9 749.8 527.1 757 517.8 766.2 511.3 774 503.1 777.8 494.6 779.3 483 783.5 475.1M1214.1 183.2L1211.1 176.9 1208.5 169.4 1206.4 162 1203.8 154.6 1201.3 149.7 1198.9 145.5 1197.3 138.5 1195.6 131.5M799.9 296L806 295.9 813.4 296.3 819.8 295.3 829.9 295.2 839.9 293.5 847.7 295.1 856.1 293.2 866.3 293.2M830.2 45.1L830.9 58 832.8 70.8 835.7 79 841.8 89.7 845.1 94.8 849.5 101.3 853.3 108.8 859.8 115.5M992.1 93.3L989.9 98.6 986.8 104.9 985.7 109.7 981.8 116.5 978.5 119.9 976 123.5 974.3 127.5 970.5 132.6M1101.7 104.4L1105.6 103.9 1108.2 102.8 1111.4 102 1114.4 101.5 1118 102.3 1123.2 103.7 1128.6 103.2 1132.7 102.3M1196.5 631.6L1202.6 634.2 1209 640.8 1219.8 645.1 1229.1 647.2 1234.6 647.3 1242.2 650.6 1247.5 652.3 1252.3 652.9M421.9 348.2L431.1 342.6 440.1 340.2 448.3 336.1 454.2 331.3 464.8 325.6 475.3 322.4 485.9 318.4 491.1 313.6M750.4 666.5L758.5 671.7 771.2 675.9 781.8 685.6 795.1 690.4 802 696.8 808.1 702.1 817.6 703.4 829.7 709.9M337.2 130.3L337 128.3 335.9 125.9 334.9 124 333.9 122.9 333.3 119.8M954.8 484.4L957.3 483.2M-40 252.7L-35.3 254.1 -30.9 254.2 -28.5 254 -24.9 253 -19.6 251.2 -15.6 250.3 -11.7 249.5 -8.8 249.3M156.1 204.9L153.1 203.3 149.6 201.8 144.6 197.5 140.6 196 138.5 194.2 136.6 190.7 134.3 187.6 129.7 184.2M159.7 127.9L157.5 133.1 157 138.8 154.6 141.9 151.8 147.3 151.2 150.7 149 154.9 147.6 159.6 145.2 166.7M333.8 221.5L332.3 215.8 330.9 208.1 328.7 198 329.2 191.5 330.1 179.3 329.2 166.6 328.7 157.1 324.8 149M657.8 169L648.8 172.1 641.4 176.4 636.8 176.6 629.9 177 624.2 178.3 618.3 181.2 613.8 184.2 610.4 185.5M601.8 98.8L608.8 110.1 614.3 121.1 620.3 123.8 627 131 631.3 135.3 636 143.2 640.7 151.9 645.2 157.2M868.7 523.8L870.2 519.5 871.9 513.9 872.1 510.6 873.3 505.3 872.8 502.2 872.5 499.7 873.4 496.4 873.7 492.3M590.4 464.5L586 460.7 578.3 456.4 568.3 451.4 562.4 444.8 554.6 443.7 548.8 443.4 542.8 439.8 534.5 436.5M862.1 154.9L870.1 152.9 879.5 148.8 893.1 147.8 908.2 142.2 917.3 142.3 923.3 142.2 930.4 141 940.9 136.4M1202.4 64.9L1198.9 61.6 1195.9 56.7 1193.2 48.8 1188.3 43.4 1182.6 37.3 1178 27.9 1172 22.1 1163.1 17M399.5 195.4L397.2 194.6 395.8 193.5 394.4 192.6 392.6 191.6M1024.3 319.3L1019.2 312.1 1016.4 305.6 1014.5 300.6 1013 292.8 1010.4 288.9 1006.1 283.7 1003.4 278.2 998.3 273.6M117.1 105.5L121.1 109.8 128.8 113.9 135.3 118.6 140.3 120 144 120.1 148.2 121.4 153.5 122.6 159.3 126.1M-23.1 557.4L-26.5 572.7 -25.5 587.3 -24 596.8 -20.9 608.6 -18.8 620.5 -19.1 628 -22.6 635.9 -24.2 644.2M158 271L152.3 273.8 144.9 274.3 140.6 274.5 135.8 276.6 129.8 284.5 122.6 289.3 115.7 291.4 109.9 295.9M1092.7 664.1L1073.7 668.1 1060.2 671.4 1043.8 679.3 1028.9 687.1 1016 686.3 1005.3 683.2 996.7 685.1 985.5 687.5M337.2 130.3L336.8 133.4 335.5 135.6 333.9 137.9 331 141.5 329.2 143.3 326.7 145.2 326.2 146.9 324.8 149M453.7 179.4L447.1 183.4 443 186 438.8 186.7 433.8 189 431.2 192.7 428.3 194.9 422.3 197 419 199.3M720.5 106.3L717.3 110.5 713.9 113.7 712.1 119.1 709 125 705.6 128.6 702.9 132.2 701.6 138.3 699 142.5M1259.7 163.6L1260.2 168.8 1264.2 176.1 1265.1 180.2 1267.1 184.3 1267.9 188.9 1268.8 194.7 1267.8 197.6 1267.2 201.2M-16.1 101L-13.5 104.9 -11.8 107.7 -9.2 111.7 -8.3 114.5 -5.4 117.4 -4.2 120 -1.2 123.6 3.1 127.1M269 -36.7L260 -33.2 249.3 -31.7 242.7 -30.5 235.7 -27.3 227.4 -25.1 218.5 -18.5 213.6 -16.4 205.8 -13.7M1126.9 584L1131.8 582.8 1136.6 580.6 1143.5 580.4 1152.6 579 1158.2 574.3 1166.4 571.1 1180.6 568.2 1190.9 565.4M216 245.7L219.6 244.3 223.6 242.1 228.8 236.5 232.8 232.7 238.2 230.2 241.3 227.1 245 222.7 249.6 218.6M53.3 566.2L54.8 567 57 567.6 59.9 568.4 61.3 568.8 63.3 569.5 66.1 569.6M575.6 69.9L570.4 67.3 562.6 62.2 551.3 59.6 540.6 53.9 534.2 48.5 525.8 38.9 516.4 31.7 507.8 26.4M1092.7 664.1L1095.3 667.4 1098.5 671.6 1099.9 673.7 1102.2 676.6 1103.6 681 1107.7 687.1 1110.1 689.3 1112.1 693.4M299.6 317.4L299.5 319.4 300.1 321.1 300 322.7 299.1 325 300.5 327 301.2 329.6 302.1 334 303.4 336.5M699 142.5L693.7 139.6 689.3 137.7 682.2 136.5 675.5 136.3 670.6 135.8 666 134.2 658.8 134.3 650.7 135.8M73.8 69.7L77.2 70.3 81 69.6 83.4 70.4 85.4 71.1 89.6 71 93 71.4 95.6 73.3 100.4 74.4M1143.3 -33.8L1155.7 -29 1172.2 -25.6 1187.8 -21.1 1205.3 -22.8 1223.4 -22.2 1235.8 -21.3 1246 -20.1 1256.9 -15.4M130.3 232.3L118 236.8 108.9 238.4 104.2 241.6 97.4 247.1 92.8 247.8 86.5 251.5 81.9 255.2 77 260.6M1241.3 451.1L1242.5 460.4 1246 466.4 1245.7 473.1 1245.8 478 1250.2 484.2 1253.3 490.6 1253.5 496.6 1256.2 503.7M900 672L896.5 673.2 893.4 675.5 889.9 679.7 886.4 683 885.3 687 883 690.3 879.7 694.6 876.9 697M340.3 365.7L345 372.2 351.3 377 357.5 383.9 364.3 389.7 367.8 394.7 370.1 400.6 370.8 404.9 374 410.3M89.2 566.4L96.4 563.6 102.1 562.5 110 561.6 116.4 559.3 124.2 554.7 133.7 545.8 142.7 541.6 151.1 538.7M485.2 19.1L475.5 20.8 469.3 20.1 460.7 23.2 449 27 444.2 31.8 435.3 35.6 429.9 41.4 419.8 46.9M343.6 3.5L349.7 3.3 353.6 4.4 358.1 2.2 362.3 1.7 367.7 3.2 372.5 2.9 376 3.6 379.5 4.8M503.1 -7L505.6 -6.1 508.2 -4.3 511.3 -2.6 515.2 0.8 518.6 2.5 521.3 4.5 523.5 5.5 526.3 5.8M963.7 215.4L960.7 217.2 958 220.3 953 222.1 949.6 223.7 946 227 943.4 231.9 940.9 236.1 937 239.6M799.9 296L790.1 300.5 782.1 308.3 778.3 312.9 771.7 317.7 761.2 326.8 751.7 332.4 745.2 333 736.7 337.3M720.5 106.3L723.2 108 725.4 111 727.5 112.4 730 114 731.9 116.6 733.3 119.6 736.5 122.2 738.7 125.4M737.9 427.5L732.4 431.3 724.3 433.8 715.9 439.8 706.3 443.5 700.9 443.8 694.4 446.4 689.2 447 684.5 448.8M3.1 127.1L5.4 127.3 8.1 127.4 9.7 127.3 11.7 128 14.2 129.2M1082.7 403.6L1085.1 409 1087.2 415.7 1089.2 419.9 1090.8 427.1 1093.2 430.7 1094.5 434.4 1095.1 438.3 1097.3 442.2M769.1 571L777.4 571.1 782.2 569.1 786.2 567.6 789.7 565.1 795.6 562.9 802.5 557.7 811 550.3 816.6 543.6M1020.6 556.1L1021.4 548.8 1023.3 543 1024.1 538.8 1024.2 534.2 1022.5 528.6 1023.3 520.6 1023.4 514.3 1022 508.1M1152.4 644.3L1146.7 642.9 1140.3 642.9 1132.7 644.5 1125.8 646.8 1119.5 653.4 1114 656 1102 658.4 1092.7 664.1M899.5 543.8L895.8 537.8 891.9 528.4 889.3 522.1 888.2 516 885.4 510.8 881.3 505.1 876.8 497.3 873.7 492.3M634.2 402.9L629.6 404.3 622 406.2 617.9 406.9 612.9 405.8 607.3 407.2 601.7 409.2 595.6 414.6 588.1 417.8M1101.2 327.2L1101.9 316.1 1106.1 304.9 1105.4 295.9 1107.1 290.4 1107.6 283.9 1108.6 278.8 1109.6 273.9 1112 266.6M1208.9 -16.5L1206 -13 1203.4 -9.4 1202.3 -7.4 1200.1 -4.7 1198.5 -2.3 1197.8 -0.5 1196.3 1.3 1195.5 3.9M872.5 447.5L866.2 449.9 861.3 453.5 852.8 455.7 847 459.7 836.5 465 828.7 472.6 818.9 473.6 808.7 478.8M389.9 141.4L394.3 139.2 398.9 134.5 405.9 129 410.4 125.3 415.8 122.2 421.2 115.9 428.6 107 435.6 102.4M834.1 280.5L838 280 840.8 280.4 844.3 281.3 849.3 283.7 852.6 286.3 855.3 288.3 861.6 292.2 866.3 293.2M105.8 390.9L100.4 386 95.9 382.9 88.3 379.3 76.5 376.9 64.7 372.7 52.6 366.9 40.9 366.7 32.8 366.1M577.3 567.3L577.5 573.7 576.8 577.6 577.8 582 578.7 587.1 578.6 590.8 579.2 593.9 578.3 598.3 576.1 602.6M465.7 464.2L465.1 467.1 465 469.1 465.1 472.2 464 476.6 464 482.1 462.2 486.8 459.9 489.6 457.9 494.6M196.5 143.8L193.3 143.9 189.7 142.5 185 141 180 139.5 176.1 138.9 172 138.2 168.5 138.3 163.8 138.2M697.8 603.2L692.8 601.4 685.4 600.8 675.7 601.9 669 601 665 600.5 658.6 599.8 651.5 598.5 644.3 598.8M144.5 -31.1L140.9 -31.4 137.3 -32.2 133.2 -33.5 129.7 -34.1 125.9 -34.9 121.1 -35.3 113.3 -37.7 107.3 -38.1M579.7 623.3L578.5 632.5 579.8 638.8 583.8 650.2 584.3 663.2 586.9 668.7 588.1 676 587 683.8 588.4 689.4M333.8 221.5L339.3 218.5 346 216.1 349.7 215.3 354.3 213 358.5 209.4 361.3 206.7 364.8 204.2 370 199.9M1165.7 524.7L1167.5 530.6 1170.4 534.5 1172 539.2 1174.5 543.9 1176.1 548.2 1179.4 554.3 1185.7 558.6 1190.9 565.4M54.3 626.3L53.8 628.4M503.1 -7L503.5 -3.3 504.4 2.4 503.5 7 503.3 12.2 504.2 15.7 506 18.5 506.4 22.5 507.8 26.4M861.1 655.2L848.9 650.2 830 644.9 815.5 639.9 806.7 635.8 802.9 630.1 794.4 624.4 784.7 616.1 776.4 608.6M237.7 550.8L233.1 547.9 229.9 546.4 226.8 543.8 225 540.5 221.1 536.9 215.4 533.1 212.3 530.8 209.8 527.7M992.1 93.3L1002.5 91.3 1009.6 92.5 1016.8 93.7 1024.3 92.7 1031 90.2 1036.3 89.2 1042 84.6 1046.6 83.3M1161 352.9L1159.2 351.3 1157.5 349.7 1155.9 346.1 1153.5 343.4 1151.5 338.3 1148.9 335.6 1148.5 329.1 1146.9 325.2M3.1 127.1L-1.5 127.6 -7.5 126 -10.8 125.7 -14.2 124.5 -20.7 126.5 -25.6 127.7 -31.3 128.2 -39.2 129.6M159.3 126.1L163.3 128.2 166.3 128.4 169.9 131.3 174.2 132.9 179.5 136 184.1 139.8 189.5 142.6 196.5 143.8M1092.9 2.8L1093.7 0.9 1094.2 -0.7 1095.5 -2.4 1097.4 -4.1 1098.4 -7 1098.7 -9.4M838.2 500.8L836 505.6 835.7 511.2 832.7 515.2 831.3 518 828.4 525.6 822.3 532.2 820.7 538.4 816.6 543.6M644.6 92.8L649.2 91.5 652.8 89.1 658.2 87.6 661.7 87.9 664.3 87.8 666.8 86.8 670.6 86.3 673.5 85.6M503.3 89.2L501.5 83.1 500 75.8 499.7 64.4 496.9 53.5 493.2 45.1 489 36.8 487.8 29.8 485.2 19.1M872.3 287.5L870.6 289.4 868.9 290.3 867.8 291.8 866.3 293.2M465.7 464.2L463.2 457.4 459.8 448.8 460.6 441.3 460.1 436.1 461.5 430.9 460.9 424.3 460 421 458.4 416.5M1256.9 -15.4L1250.6 -8.8 1246.6 -1.5 1244.9 10.8 1241.5 17.7 1236.5 22.5 1232.2 25.4 1225.6 33.8 1221.7 40.7M7.2 407L17.7 401.4 35.2 399.1 51.4 401.2 63.3 398 75.5 395.6 88.2 397.1 98.8 393.5 105.8 390.9M26.4 309.4L33 308.6 39 308.6 43.3 308.8 47.2 307.5 51.1 307.8 54.4 307.5 59.1 309 64 309.6M356.4 129.8L354.8 129.7 352.7 130.4 350.6 130.8 348.2 130.7 346.4 130.7 343.7 130.6 341 130.5 337.2 130.3M389.9 141.4L389.9 134.6 391.5 125 391.4 118.7 390.2 113 387.9 102 390.6 86.4 391.8 77.2 390.3 68.7M364 488.2L359.4 499.2 349.3 510.8 340.7 528.4 329.3 540.9 320.3 546.3 304.7 551.6 297.9 558.6 287.8 568.8M631.1 425L625.3 425.3 619.9 423.7 612 422.2 606.6 422.6 601 422.8 595.9 421.5 590.9 419.8 588.1 417.8M650.4 206.6L645.5 203 639.3 200.8 635.4 198.9 630.2 196.5 627.2 194.1 623 191 615.6 189 610.4 185.5M838.2 500.8L842.4 503.7 845.3 507.1 850.9 508.7 855.6 511 858.9 513.7 861.9 514.7 864.4 519 868.7 523.8M879.7 75.4L878.1 79.2 876.9 84.6 875.3 87.3 872.8 89.8 871.4 94.9 870.4 98.2 870.3 105.8 871.1 111.8M699 142.5L692.9 141.9 688.9 142.4 684.6 144.2 680.3 145.4 671.6 146.5 666.1 146.2 661.9 147.4 657.5 148.5M1150.1 347.6L1150 343.1 1149.1 340.2 1149.3 337.5 1148.2 334.4 1148 331.4 1148 328.9 1147.3 327.5 1146.9 325.2M237.7 550.8L247 555.6 254 556.5 259.1 558.6 267.7 560.2 271.1 562.3 276 565.9 280.5 567.3 287.8 568.8M-39.2 129.6L-38.8 119 -41.4 108.6 -43.3 101.1 -47 95 -48.3 83.9 -47.9 74.6 -41.6 60.6 -38.3 46.7M1246.8 521L1245.3 519.4 1244.4 517.4 1243.1 515.2 1241.8 513.3 1240.3 511.5 1238.3 510.2 1235.4 509 1232.8 506.7M14.2 129.2L6.5 135.8 0.5 143.9 -6.4 151.4 -12.6 154.9 -14.4 165.3 -18 175.1 -24.9 184 -32 196.1M1092.9 2.8L1099.7 3.5 1107.3 6.3 1114.1 8.9 1122.9 9.2 1130.8 10.9 1142.2 16.8 1154.8 15.3 1163.1 17M326.9 111.4L317.3 109.8 309.5 105 301.4 102.7 290.6 103.9 278.6 98.4 265.5 89.9 257.5 86.9 246.3 79.6M1206.2 303.9L1211.9 297.2 1219.3 289.5 1221.6 284.9 1226.2 279.1 1228.3 269.3 1229.7 262.4 1235 254.9 1240.3 245.8M549.1 543.3L552.8 549 556.8 555.6 559.4 564.2 562.8 569.7 569.4 580.7 570.8 588.9 573.5 597.1 576.1 602.6M313.7 249.4L311.6 243.7 310.4 238.7 308 231.1 303.3 223 298 215.6 291.4 206.6 289.6 200.6 288.4 193.2M461.6 -29.3L464.4 -20.4 464.5 -14.4 466.5 -7.4 472.4 0.4 475.8 5.1 478.5 7.3 481.6 12.2 485.2 19.1M346.3 401.8L349.4 403.2 351.5 403.9 354.4 406 358 407 362.9 408 367.2 410.4 370.3 409.9 374 410.3M1207.8 246.5L1201.9 240.8 1194.4 237.7 1189.5 237.2 1183.2 233.9 1179.5 230.6 1176.4 228.4 1174.1 223.6 1169.2 217.8M150.3 420.2L156.2 423 160.3 427.1 166.6 428.8 173.4 430.2 177.7 433.7 184 437.5 188.3 440.7 192.9 443.3M1010 186.6L1005.5 175.4 1005 161.4 1004.3 150 1005.8 141.4 1007.4 131.2 1007.4 123.7 1008.1 118.2 1007.5 110.8M269 -36.7L269.6 -31.7 268.5 -26.9 265.6 -22.2 264.2 -16.1 264.6 -9.8 263.1 -3 264.4 1.6 264.1 6.3M1048.3 527.8L1054.8 526.6 1061.8 524.2 1068.3 523.1 1077.8 519.5 1082.8 518.3 1090.3 518.9 1094.8 519.6 1100.9 520.8M916.2 613.8L919.7 602.3 922.2 589.6 926.8 577.5 931.6 560.5 941.8 548.5 947.1 538.2 949 525.7 954.7 515.5M872.5 447.5L868.6 452.9 865.7 462.1 859.8 468.9 853 475.4 849.3 482.5 844.2 490.6 841 495.5 838.2 500.8M301.6 621.7L306 628 308.6 636.5 314.9 642 318.1 646 328.3 657.1 334.8 667.3 342.9 672.7 351.3 677.7M364.7 216.6L365.8 219.2 366.6 221.5 367 222.9 368 224.4M65.5 171L54.2 178.5 42.7 181.2 33.4 193.8 18.7 205.1 10.5 221.7 1.1 230.4 -5.1 238.8 -8.8 249.3M124.8 302.2L122.6 301.9 120.6 301.8 118.5 301.2 115.7 299.4 114.7 298.4 112.9 297.5 111.4 296.6 109.9 295.9M1152.4 644.3L1150.5 639.2 1150.5 633.8 1147.6 628.9 1146.3 622.7 1143.4 615.8 1139.1 609.3 1137.3 604.4 1137.5 598.9M866.6 248.6L869.5 253.1 872.8 257.7 873.5 261.6 876.2 266.3 879.5 270.8 883.8 274.1 889.4 277 896.1 283.5M565.1 225.1L569.2 220.3 574.3 217 578.2 210.2 583 205.3 587.5 201.1 592.5 196.5 599.5 190.4 610.4 185.5M156.1 204.9L162.4 207.8 167.2 211.1 171.8 213.5 174.8 216.7 183.8 225 190.3 229.4 196.2 231.6 202.5 233.4M-23.1 557.4L-20.4 544.6 -19.8 528.8 -14.3 516.4 -7.9 497.2 -5.2 490.4 -1.4 481.7 2.3 466.8 2.8 456M288.4 193.2L285.7 188.8 282.8 184.3 278.2 178.7 274.5 173.5 268.5 170.4 262.1 164.8 256.7 161.7 252 159.2M998.5 -18.4L1004.2 -7.7 1010.8 9.6 1024.8 27.3 1029.1 41.9 1034.3 48.3 1037.6 58.5 1041.6 71.2 1046.6 83.3M105.8 390.9L104.3 397 104.6 400.9 105.8 407 104.5 413.9 103.9 418.8 103.8 424.2 104.9 430.6 105.6 435.9M340.3 365.7L340.4 370.1 341.4 373.9 342.2 379.2 343.1 383.5 344.5 389.5 344 394.3 345.4 398.8 346.3 401.8M-32 196.1L-22.5 195.8 -15.3 194.3 -2.3 192.4 9.7 187.9 21.6 182.9 33.6 180.3 53.6 177.5 65.5 171M609.4 629.7L607.4 636.9 606 642.8 603.8 648.7 603.5 653.4 596.9 665 594.3 675.3 590.5 681 588.4 689.4M1204.8 199.7L1204.6 204.7 1205.2 210.4 1204.5 214.1 1202.4 218.6 1204.6 224.7 1205.5 231.1 1205.2 238.2 1207.8 246.5M759.1 90.5L767.2 82.7 782 75.5 789.1 69.3 797 66 806.6 63.2 816.5 55.6 824.6 48.8 830.2 45.1M1097.3 442.2L1095.7 449.1 1096 456.8 1096.6 467 1094 477.8 1095.8 485.5 1097.2 494.2 1100.1 508.9 1100.9 520.8M862.1 154.9L859.6 157.9 858.1 162.2 857.6 165.8 855.1 170.7 852.8 174.6 848.1 179.2 841.5 184.8 836.9 187.7M1260.6 530.4L1259.6 537.3 1259.1 543.5 1260.4 548.7 1260 553.6 1259 558.5 1259 562 1258.7 565.6 1258.8 569.4M77.7 487.5L75 488.9 72.3 492.3 71 494.7 69.3 497.4 64.6 499.2 61.7 501.5 59 504.1 56.7 506.8M105.8 390.9L108.4 391.9 110.3 392 112.7 391.9M53.8 628.4L47.8 629 42.2 628.7 35.8 631.2 28.4 631.1 19.4 631.4 13.8 630.1 4.2 625.5 -4.5 622.6M853.2 421.5L847.1 428.7 844.3 436.3 835 446.9 824.7 452 822.2 458.9 818.2 467.8 813.3 474.1 808.7 478.8M1256.9 -15.4L1252 -13.8 1248.1 -14.1 1241.3 -13.8 1234.8 -14.7 1228 -14.9 1221 -14.3 1213.8 -14.7 1209.3 -16.4M3.9 533L3.8 537.3 1.9 541.6 -0.3 546.5 -3.6 552.8 -8.1 557.5 -12.1 559.5 -13.9 562.3 -16.3 566.7M164.5 558.2L159.8 562.8 154.2 566.9 150.1 569.3 147.4 572.6 140.7 578.8 135.2 584.1 128.9 589.2 122.9 593.3M176.6 375.9L176.3 366.6 178.8 359.4 182.9 349.3 185.4 341.8 191 335.8 196.6 328.8 200.7 318.1 209.1 306.9M376.3 450.3L361.2 448.4 349.5 445.8 338.9 444.1 322.5 446.7 316.2 447.6 308.8 449.9 299.2 449.9 289 449.1M1127.5 185.3L1135.7 191.5 1142.6 194.6 1146.5 199.3 1149.9 204.5 1157.5 209.1 1161 213.8 1165.8 215.7 1169.2 217.8M548.7 -26.8L551.9 -27.4 554.8 -28.2 556.4 -28.8 558.6 -30M498.2 -16.8L499.3 -15.2 500.8 -13.2 502 -10.4 502.8 -8.8 503.1 -7M746.7 117.8L753.7 119.6 764.9 122.4 775 124.3 781.5 126.3 794.4 134.2 804.8 137.4 820.7 138.4 836.4 143.1M1258.1 320.7L1260.1 309.7 1260.7 300.1 1263.5 287.1 1265.7 271.2 1264.1 250.5 1270.3 229.6 1267.4 218.5 1267.2 201.2M502 267.3L502.5 276.7 501.2 283 499.9 288.3 500.4 292.9 498.3 300.1 496.2 304.6 493.8 308.9 491.1 313.6M346.3 401.8L341.4 403.1 338 402.8 332.5 403.9 328.6 406 324.4 405.4 321.6 405.2 314.6 404.3 310.1 404.4M479.7 -36.2L483.4 -35.1 485.5 -33.4 488.8 -30.5 490.4 -28 491.8 -25.5 493.1 -23.3 495.6 -20.5 498.2 -16.8M347.1 61.3L335.9 62.3 320 63.9 306 66 294.2 63.1 283.4 63.7 271.3 69.2 257.9 73.3 246.3 79.6M302.5 673.4L313.3 676 324.9 675 336 677.2 347.4 682.5 360.5 690.6 374 695 383.6 699.4 394 707.6M37.9 270.5L43 268.2 46.4 265.6 52.5 258.8 56.8 254.9 61 248.5 67.5 237.9 71.2 229.7 75.4 223.3M1242.8 90.3L1238.4 89.7 1234.3 87.7 1231.2 88.3 1228.3 87.7 1226.6 86.2 1224.1 85.2 1220.8 83.4 1217.6 82.3M722.7 674.4L735.8 673.7 752.9 678.5 766.2 685.7 776.8 690.1 786.3 694 797.7 702.5 812 707.7 829.7 709.9M571.6 505.6L592.8 500.2 609.4 495.6 626.4 489.1 636.4 482.9 645.4 477.3 655.2 472.7 665.5 467.6 672.8 461.1M129.5 397.1L131.2 399.2 132.8 402.1 135.3 403 138.2 405.7 141.8 408.5 144.1 412.3 147.3 417.5 150.3 420.2M582.2 27L582.3 32.4 583.4 37.6 583 45.4 582 51.2 582.1 54.9 581 59 578 63.6 575.6 69.9M841.8 263.4L845.5 267.8 847.3 272.2 850.5 275.1 853.4 276.5 857 280.9 860.8 283.7 863.6 289.9 866.3 293.2M586.7 -20.7L592.3 -20.7 597.1 -22.5 606 -21 613.1 -20.3 618.6 -21.2 622.7 -21.7 627.9 -22.4 631.4 -22.7M571.6 505.6L569.8 503.4 569 500.6 567.9 499.3 567 497.7M973.2 65.5L982.2 70.7 990 72.3 996.8 73.6 1005.9 77.2 1012.2 77.7 1021.7 80.2 1036.6 81.6 1046.6 83.3M502 267.3L500.4 263.4 496.1 258.3 495.2 254 493.8 251 491.5 247.5 489.4 241.7 487 238.1 485.9 234.8M229.3 103.3L225.6 94.2 219.6 81.4 215.1 72.5 214.2 63.7 207 55.9 196.8 48.4 187.6 37.4 184.2 28.5M841.8 263.4L840.1 266.7 839.1 269.4 837.9 270.9 835.8 273.2 835.7 274.8 835.4 277 835 278.4 834.1 280.5M77.7 487.5L81.7 481.3 85.1 473.8 87.5 468 90.3 464.7 96.1 454.7 101.5 449.3 103.5 441.2 105.6 435.9M73.3 698.2L80.6 691 85.5 685.4 92.3 676.1 99.2 669.1 107.9 663.1 116.6 659.1 122.4 654.4 128.3 650.8M286.8 130.6L279.4 128.3 274 125.1 267.2 120.3 261.7 116.3 255.6 109.6 251.5 105.8 246 101.6 239.7 95.1M264.1 6.3L273.5 1 281 -6.3 291.9 -8.3 305.8 -14.9 313.8 -14.4 320.8 -16.4 331 -16.1 337.4 -18.5M598.3 576.4L595.1 580.3 590.2 583.7 587.2 587.7 583.3 591.1 581.3 592.4 579.6 594.9 578.2 598.9 576.1 602.6M740.1 169.4L738.4 165.9 737.8 163.4 736.2 158.8 735.2 155.3 735 151.2 735.3 147.1 736.3 142.2 736.3 137.7M1258.1 320.7L1255.4 311.9 1255.2 305.6 1251.4 297.6 1250.8 284.4 1247.6 276 1245.2 267.7 1242.5 254.1 1240.3 245.8M156.1 204.9L159.4 212.6 161.1 219.2 160.6 227.2 160.3 233.7 158.7 247 161.2 255.6 159.4 262.9 158 271M150.8 76.9L156.7 68.9 162.2 65.7 165.8 61.2 169.6 55.5 175 46.5 177.3 38.8 181.1 33.9 184.2 28.5M74.8 155.4L80.2 158.3 88.7 162.2 99.6 164.2 112 166.3 121.7 166.7 131.3 165.1 138.3 166.1 145.2 166.7M901.3 583.6L902.5 587.4 905.8 592.7 909.7 596.1 913 600.9 913.4 605.1 914.3 608.3 914.8 611.5 916.2 613.8M488.3 517.1L485.5 512 480.5 507.3 477.9 503.4 474.9 498 471.3 487.3 470.5 477 467.5 469.7 465.7 464.2M72.8 74.6L72.9 79.2 73.3 82.9 75.1 86 76.6 91.3 77 95.5 76.9 100.3 79 105.1 79.2 110.6M442.2 270.8L435.9 280.6 431.8 290.4 428.1 295.2 425.8 304 424 316.6 423.2 327.1 422.4 339.3 421.9 348.2M1254.7 639.3L1255.2 643.4 1254.8 645.9 1255 648.6 1256 652.6 1256.2 655.8 1255.2 659.4 1255.1 661.9 1255.7 664.6M1161 352.9L1163.7 349 1166 343.6 1169.1 335.6 1172.6 328 1174.2 317.7 1174.6 308.7 1175.5 303.2 1176.2 296.7M816.6 543.6L815 535.1 815 522.4 814.2 512.4 810.8 503.8 811.9 497.5 811.3 491.6 809.3 484 808.7 478.8M347.2 291.7L341.4 294.7 336.9 295.7 328.5 297.3 321.3 301.1 316 306.5 309.9 311.6 305.4 315.3 299.6 317.4M130.3 232.3L122.9 232.3 114.7 230 109.7 226.5 102.8 223.7 94.3 226.5 87.3 226.1 82.9 224.1 75.4 223.3M157.4 111.6L171.3 108.4 180.5 103.9 189.2 102.5 197.9 100.4 206 100.1 213.3 99.2 219.7 100.8 229.3 103.3M231.6 673.6L233.7 667.8 233.4 663.2 232.9 655 233.2 646.5 233.8 638.3 236.8 631.2 239.5 622.7 239.2 613.4M861.1 655.2L841.5 661 821.5 663.7 809.8 664.9 795.4 665.6 786.6 663 773.1 661.4 763.4 661.8 753.7 658.8M1241.3 451.1L1241.4 456.8 1239.4 465.3 1236.4 475.3 1232 481 1231.8 486.6 1234.8 494.9 1232.8 501.4 1232.8 506.7M323.4 372.5L321 376.1 319.6 382.6 318.5 386.1 317.4 391.1 316 394.8 314.1 397.2 312.4 400.5 310.1 404.4M503.3 89.2L504.5 78.6 507.1 69.9 507.6 60.3 510 52.8 510 43.9 510.1 36.8 508.8 31.4 507.8 26.4M421.9 348.2L416.7 351.5 410.8 358.6 404.6 366.5 402.7 372.9 396.9 379.7 391.3 390.8 382.8 402.5 374 410.3M1143.3 -33.8L1147.7 -29.8 1153.5 -27.2 1162.8 -26.1 1171.2 -22.5 1179.7 -22 1192.2 -17.5 1199.1 -17.4 1208.9 -16.5M333.6 379.5L329.2 381.8 326.4 384.8 322.1 388.2 319.3 390.5 318.3 393.8 316 397.8 312.9 400.9 310.1 404.4M976.8 687.7L969.6 672.7 962.3 657.4 957.8 648.8 946.7 639.4 937.1 633.1 929.5 630 921.4 622 916.2 613.8M753.7 658.8L757.5 652.3 758.7 646.8 761 640.5 763.9 637.4 768 631.4 771.5 623.7 773.5 617.5 776.4 608.6M333.6 379.5L330.7 378.6 328.2 377.1 327 375.3 326.1 374.4 324.6 373.4 323.4 372.5M932.4 79.1L927.7 78.5 920 78.9 912.4 79 905.6 78.2 898.6 76.7 891.3 75.4 886.7 76.4 879.7 75.4M571.6 505.6L568.4 510.3 565.1 512.5 563 516.3 559.8 521.4 559.6 526.3 557.6 531.3 551.7 537.9 549.1 543.3M722.7 674.4L716.2 667.7 712.9 661.1 709.8 650.7 702.9 637 700.7 630.5 700.6 620.4 699.3 612.3 697.8 603.2M582.2 27L570.5 27.9 559.9 26.4 548.5 25 541 23.4 531.2 24.7 523.4 23.4 517.4 25.3 507.8 26.4M740.1 169.4L735 167.6 728.1 165.1 725.3 162.1 720.1 159 715.8 154.4 710.4 148.7 705.1 144.9 699 142.5M56.7 506.8L55.9 509.5 55.4 512.9 54.3 518.7 54.8 522.4 55 524.9 54.9 526.6 54.1 529.1 53.1 532.2M1000.9 408.9L1007.7 403.8 1012.7 401.6 1015.6 398.2 1019.2 394.6 1023 391.2 1026.8 385.3 1030.9 378.7 1038.3 371.1M77 260.6L76.9 265.1 75.9 268.1 76 271.7 75.3 275.2 74 278.5 72.5 280.7 72.5 285.7 71.5 289.2M192.9 443.3L187.3 448.7 181.4 451.8 175.5 460.6 171.1 466.2 168.6 473.6 166 478.1 162 481.7 159.4 484.4M642.6 294.8L635.3 300 631.4 304 623.2 310.8 613.5 316.2 609.3 321.8 604.6 327.8 600 330.2 596.6 333.4M631.4 -22.7L629.8 -14.9 631.3 -3.4 630.7 5.1 628.7 11.6 631.3 18.6 631.8 27.6 633.7 36 633.9 43M379.5 4.8L384.7 9.5 392.5 13.5 396.6 16.1 400.7 19.2 402.7 25.4 409.6 33.5 414.3 40.3 419.8 46.9M376.3 450.3L370.9 443.5 364.3 438.3 359.9 434.4 355.6 427.1 354.9 421 354 415.3 350.9 407 346.3 401.8M937 239.6L942.1 245 951.7 252.2 956.2 255 960.4 260.6 967.5 264.5 978.3 270.2 989.9 272.3 998.3 273.6M2.8 456L3.2 464.6 3.7 476.5 9 489.6 9.7 502.1 6.6 510.8 4.6 516.1 5.5 522.9 3.9 533M359.8 596.5L350.9 591.2 339.7 585 329.1 584.7 319.2 582.3 313.5 577.5 306.6 574.8 297.8 572.5 287.8 568.8M1002.8 498.8L994.4 501.4 985.4 503 979.1 505.6 975.1 507.4 969.8 510.7 964.8 513.9 958.9 515.3 954.7 515.5M1132.7 102.3L1136.2 91.2 1144.2 77.9 1147.2 66.5 1153.8 57.8 1157.7 48.9 1161.3 36.7 1163.9 28.5 1163.1 17M488.3 517.1L487.1 519.9 486.9 522 486.8 526.7 485.9 529.8 484.4 531.4 483.7 533.2 483.6 535.3 482.8 537.6M176.6 375.9L169.7 364 164 357.1 157.2 352.7 149.3 347.4 144.1 344.7 138.5 341 128.8 336.1 123.2 330.2M72.8 74.6L73.7 72.1 73.8 69.7M872.5 447.5L873.1 453.1 872.3 460.2 872.3 464.6 872.7 468.4 873.8 472 873.4 475.5 875.2 479.3 878 483.7M-32 196.1L-30.2 201.2 -26.5 206.7 -25.5 215.6 -25 225.6 -22 235 -17.8 241 -13.1 245.1 -8.8 249.3M954.8 484.4L955.7 479.9 956.9 475.7 960.5 472 962.6 467.8 967.9 460.2 969.9 451.7 973.1 445.1 975.9 441.4M1207.8 246.5L1207.1 254.2 1206.9 263.8 1207.6 269.5 1210.1 275.5 1209.6 283.4 1205.4 292.4 1205.7 297.3 1206.2 303.9M-22.8 350.4L-24.8 352 -26.3 354.1 -28.3 356.4 -30.2 358.4 -31.4 360.7 -33.3 362.5 -34.8 365.7 -34.9 368.1M427.2 473.9L430.3 475.2 433.5 477.3 436.9 481.2 440.9 484.5 446.3 487.2 449.9 489.5 452.9 492.2 457.9 494.6M816.9 413L819.4 414.4 822.2 415.7 827.2 417.1 831.1 417.7 836.8 419.1 844.7 419.4 849.8 420.9 853.2 421.5M370 199.9L369.9 203.8 370.2 206.3 370.1 208.6 369.4 210.5 367.9 213.9 367.6 217.1 367.3 221.3 368 224.4M333.7 607.8L337 614.5 341 621.7 344.2 632.9 346.3 639.9 346.7 652 347.3 663.4 348.8 669.4 351.3 677.7M963.7 215.4L959.4 204.9 953.1 193.1 950.3 187.1 946.6 178 942.8 169.8 940.8 157.1 941.4 145 940.9 136.4M790.9 295L788.5 291.5 787.2 287.5 785.5 282.5 784.5 279.2 783 275.5 782.6 272.7 780.4 268 777.9 265.3M333.6 379.5L336 382.6 337.9 384.4 339.9 387 341.6 388.5 341.5 392.3 343 396.2 345 398.9 346.3 401.8M1258.1 320.7L1255.7 334.4 1255.9 345.3 1252.4 358.6 1247.2 368.9 1244.6 376.3 1240.3 383.2 1234.3 395.5 1231.3 404.1M1141.4 348.7L1143 348.7 1145.2 348.7 1147.8 348 1150.1 347.6M1132.7 102.3L1142.5 95.3 1150.4 90.8 1162.8 86.3 1176.7 81 1181.3 76.5 1187.3 71.6 1193.6 67.1 1202.4 64.9M340.3 365.7L349.7 361.6 355.9 356.8 360.8 352.2 367 347.7 373 346.2 379.5 344.9 383.7 342.2 388.1 341.1M225.3 581.1L223.9 578 222.6 572.9 219.2 569.1 215.7 561.9 213 556.2 209.9 553 205.8 549.4 203.6 546.4M53.3 566.2L52.1 564.2 50 562.4 48.2 560.7 47.2 559.5 44.8 557.8M156.1 204.9L156.5 200.4 154.7 193.6 153.3 188.8 153.1 184.3 150.1 179.3 148.7 175.7 148.2 171.9 145.2 166.7M937 239.6L939.5 245.6 940.8 252.6 945.3 262 951.5 269 960.7 278.2 967.9 286.9 971.5 299.4 976.6 306.6M720.5 106.3L724.4 108.2 726.4 110.2 730.4 112.4 733.7 114 736.5 114.9 738.6 116.2 743.5 117.5 746.7 117.8M1097.3 442.2L1088.2 435.8 1082.7 430.5 1069.9 426.4 1061.8 420.6 1054.6 412.9 1050.6 405.1 1040.6 395.5 1033.5 390.3M1226.4 558.7L1232.5 555.4 1237.9 549.9 1245.6 547.1 1249.4 543.5 1252.5 540.1 1254.9 536.2 1257.4 533.9 1260.6 530.4M424.8 507.8L427.9 508.1 430.9 508.9 434.6 509.9 436.5 511.4 438.5 511.3 440.5 511.1 442.6 510.9 444.7 511.5M461.6 -29.3L459.7 -20.7 454.3 -11.3 447 -1.4 443.5 6 437.2 12.3 429.1 23.6 422 36.1 419.8 46.9M231.2 331.1L232.9 337.7 234.9 342.7 237.1 348.7 237.9 355.2 241.9 363.9 246.2 374.8 250 381.7 252.2 388.1M1148.4 261.7L1143.6 260.8 1138.1 261.9 1131.8 262.1 1128.1 263.3 1124.3 265.2 1119.6 266.5 1115 266.3 1112 266.6M859.8 115.5L861.7 114.9 862.9 114.7 866.1 114.7 868.8 113.2 871.1 111.8M1196.3 378.1L1191.7 374.4 1186.8 367.6 1182.9 364.5 1178.9 360.5 1174.5 358.2 1171.5 356.7 1165.5 354.9 1161 352.9M549.1 543.3L540.1 541.1 534 541.3 527.2 539.6 521.7 538 509.3 536.7 501.7 536.8 493.3 535.9 482.8 537.6M1059.3 594.2L1064.8 593 1069.5 590.4 1076.2 589.6 1080.3 587.4 1085.9 582.3 1091 580.5 1097.3 579 1101.7 578.4M207.1 455.2L200 455.7 192.3 459.6 187.9 462.7 183.1 466.4 177.9 472.4 172 477.4 167.3 481.6 159.4 484.4M1038.3 371.1L1040.2 373 1043 374.5 1045.7 376 1047.6 376.7 1051 378.4 1054 380.5 1058.2 381.2 1063.1 382.6M1241.3 451.1L1238.2 459.8 1233.4 471.8 1227.6 480.6 1219.6 489.2 1216.9 496.2 1209.5 504.7 1205.4 508 1198.3 512.4M740.1 169.4L744.7 169.5 749 170.9 753.9 169.2 757.9 169.2 762.5 171.3 766.3 172.9 771.9 173.1 777.6 175.3M491.1 313.6L492 311.3 493.7 308.6 495.2 306.8 496.5 305.1 498.6 303 500.9 300.9 502.6 300 504.6 297.9M163.9 22.7L166.3 24.4 169.6 26 171.7 27.1 174.9 27.3 177.9 27.3 180.5 27.9 182.4 28.3 184.2 28.5M7.2 407L9.7 403 11.6 397.6 13.5 394 16.6 390.8 20.9 385.5 23.9 377.6 28.4 373.2 32.8 366.1M607.6 264.5L601.3 261.9 592.4 260.9 586 259 582.6 256.3 575.9 253.6 570.9 248.7 565.9 246.2 563.2 243.6M634.2 402.9L626.2 397.7 621.4 392.2 615.9 390.7 611.3 387.8 607.5 380.6 602.3 375.2 596.8 371.2 590.2 366.6M456.6 637.2L455.3 632.9 454.7 627.4 453.2 621.9 450.7 618 449.8 615 450.2 610.8 448.8 607.1 448.3 601.2M1176.2 296.7L1175.9 292.9 1174.8 290.2 1173.3 287.7 1171.7 283.8 1171.3 281.8 1171.2 279.3 1171.5 277.3 1171.1 275.1M609.4 629.7L613.9 626 617.5 623.6 621.6 620.2 625.9 615.6 628.7 612.5 632.4 608.4 637.6 603.1 644.3 598.8M216.6 248.5L219.5 254.8 221 263.1 221.4 268.5 220.3 273.4 221.3 278.3 220.6 283.1 217.7 290 215.7 296.6M895 24.6L899.6 21.7 906 16 908.5 13.6 912.8 10.4 918.4 9.5 923.2 7.6 927.9 5.8 932.8 2M343.6 3.5L342.3 5.5 341.5 7.3 340.8 10.2 340 13.5 338.7 16.2 336.1 20 334.4 23 333.7 25.3M376.3 450.3L383.5 448 389.4 443.6 396.7 439.8 402.7 437.7 410.6 437.2 420 436.5 428.4 433.7 435.2 433.3M859 144.5L858.9 141.1 859.2 138 857.4 135 856.5 130.3 857.4 127.5 858 124.6 859.6 120.6 859.8 115.5M71.4 29.2L79 27.1 89.9 27.7 98 24.5 108.9 20.9 126.1 19.4 141 19.1 153.1 20.9 163.9 22.7M205.7 218.5L210.8 214.4 218.5 208.1 222.5 201.8 225.3 195.5 228.9 187.4 232 179.1 242.8 169.7 252 159.2M607.6 264.5L614 263.2 619 263.1 623.5 261.8 628.3 259.3 633.7 257.5 637 255.7 639.4 253.6 641.9 252.6M1068.3 181.4L1071.4 182.1 1076 182.3 1081.1 184.4 1085.8 184.4 1090.5 186.6 1094.1 187.6 1097.3 188.3 1102.2 188.4M1178.1 140.3L1179.5 133.3 1183.2 125.8 1182.3 119 1183.2 113 1186.4 110 1189.1 105.9 1189.7 99.4 1192.7 93.8M830.2 45.1L834.9 46.6 840.1 49.9 848.5 52.6 854.8 55.4 860.4 58.3 867.2 61.9 872.3 68.8 879.7 75.4M1039.7 247.6L1036 251 1032.9 253.2 1028.9 258.3 1026.5 261.6 1017.2 264 1011 266.9 1006.2 270.6 998.3 273.6M128.6 324.4L127.7 325.9 126.3 327.5 124.9 329.2 123.2 330.2M900 672L907.6 674.3 913.5 679.1 923.6 681.2 929.8 684 941.3 684 949 684.4 964.9 685.3 976.8 687.7M1143.3 -33.8L1148.1 -29.4 1151.6 -24.3 1159.5 -16.9 1165.8 -11.8 1172.2 -8.8 1180 -5 1188.8 0.7 1195.5 3.9M-4.5 622.6L-5.8 617.9 -8.5 613.1 -9.9 607.3 -14.3 600.9 -13.2 594.2 -13.9 587.4 -13.7 579 -16.3 566.7M53.3 566.2L48.9 565.6 43.7 566.4 40.1 566.7 35.5 567.1 32.7 567.8 29.5 569.8 25 569.9 19 571.5M995.6 279L992.9 282.9 990.1 287.9 986.5 290.3 984.3 292.5 981.9 297.6 979.7 301.2 978.2 304.8 976.6 306.6M37.9 270.5L40.5 277.2 43.3 281.1 45.5 285.1 48.4 287.5 50.1 293.2 55.7 300.6 60.9 305.9 64 309.6M1204.8 199.7L1206.6 199.9 1208.1 199.4 1210.8 199 1213.7 199.8 1215.9 199.6 1217.7 199.7M1207.8 246.5L1203.7 250.9 1200.3 252.5 1195.6 256.1 1189.4 262.7 1184.8 263.6 1177.6 265.2 1173.3 268.1 1168.1 270.1M488.3 517.1L484.4 511.5 479.1 507.8 476.3 505.2 471 502.8 467.9 500.6 464.4 499.4 461.1 496.5 457.9 494.6M303.4 336.5L308.1 335.3 314.8 335.8 319.9 336.2 325.1 338.1 332.5 336.7 337.7 334 344.7 333.5 350 334M833.7 153.2L836.1 152.3 838.8 152 841.5 150.1 845.3 148.6 849.7 147.9 852.5 147.5 855.4 146.6 859 144.5M205.8 -13.7L202.3 -15.4 196.7 -16.2 192.6 -17.1 188.5 -17.9 182.5 -17.2 177.1 -17.7 169.3 -19.8 162.4 -20.2M992.1 93.3L995.3 96.3 997.1 98.5 998.3 100.8 1000.7 103 1002.7 104.5 1004.9 106.7 1006.3 108 1007.5 110.8M77.7 487.5L82.1 486.6 88.3 486.5 93.3 484.5 98.4 482.7 104.7 481.9 110.3 483 113.4 484 117.6 484M509.8 632.8L509.7 639.3 509 645.6 507.5 654 508 661.2 507 664.6 506.9 668.1 504.8 672.1 504.2 679M218.9 444.1L222.5 447.6 228.5 451 231.8 454.7 234.2 457.7 238.4 459.6 241.1 461.6 243.4 463.6 245 466.3M905.2 697.1L894.4 701.6 883.3 706.8 870.5 709.6 862.2 711.1 855.4 712.3 848.9 711 837.4 709.3 829.7 709.9M356.4 129.8L357.4 133 359.7 136.7 363.6 140 365.8 142.8 367.6 149.2 370.8 154 373.8 156.5 376.1 159.9M1148.4 261.7L1152.4 265.5 1154.2 269 1157.5 273.4 1161.5 280.5 1165.1 285.3 1168.1 287.9 1172.5 292.6 1176.2 296.7M1168.1 270.1L1168.2 264 1169.6 254.9 1172 249.7 1172.3 243.7 1169.5 238.5 1168.6 233 1168.3 225.1 1169.2 217.8M491.5 397.1L487.4 399.7 483.7 403.6 480.5 404.9 476.6 408 472.6 409.7 467.1 410.7 463.7 413.7 458.4 416.5M868.7 523.8L866.3 524.8 864.4 526.5 863 529 861.2 530.4 859.6 530.6 857.9 531.4 856.4 532.8 854.5 533.6M259.1 24.4L256 19.6 248.8 14 237.7 8.2 228.5 2.4 223.2 -0.7 217.2 -4.1 209.7 -9.4 205.8 -13.7M732.8 557.2L719.4 537.6 714.7 521.5 708.7 509.9 699.9 498.7 690 487.6 681.3 477.6 677.6 470.3 672.8 461.1M807.4 423.2L807.7 428.4 805.7 434.7 804.6 440.3 805.6 445.6 809.1 454.5 809 462.7 810.2 469.3 808.7 478.8M289 449.1L290.7 442.7 293.1 437.4 295.7 432 301.5 426.6 303.7 420.3 307.7 413.8 310 408.3 310.1 404.4M218.9 444.1L214.7 432.4 209.6 426.3 208.4 417.9 203.1 408.8 194.8 396 190.9 387 182 381.6 176.6 375.9M464.4 617.4L460.6 615.8 458 614 455.8 611.7 454.2 610.4 451.8 608 450.7 605.8 449.3 603.1 448.3 601.2M19 571.5L18 567.8 17.9 563.7 16.4 559.4 15.9 553.5 16.3 550.4 16.2 546.2 14.6 540.9 14.6 534.8M130.3 232.3L131.4 236.6 133.6 240.6 136.6 245.6 142.5 250.4 145.8 256.2 148.5 260 151.5 265.2 158 271M252.2 388.1L258.2 388.7 264.8 390.9 275.9 393.8 283.2 398.3 288.3 399.7 295.5 399.3 301.6 400 310.1 404.4M1073.7 241.2L1070.4 239.3 1065.9 236.3 1059.2 234.3 1054.5 230.4 1050.5 227.2 1043.3 223.8 1039 220.5 1033.9 213.7M900 637.8L900 630.6 900.2 626.1 899.5 620.5 899.9 616.6 902.1 609.2 903.8 601.1 903.6 590.7 901.3 583.6M333.7 25.3L326.3 25 317 22.8 310.8 20.9 306.3 19.9 296.9 19.2 285.6 16.1 274 13.1 264.1 6.3M1255.7 664.6L1255.8 663.2 1255.4 661.3 1254.5 658.3 1253.4 656 1252.6 654.5 1252.3 652.9M932.4 79.1L925.7 77.4 917.5 73.1 908.8 68 902.2 61.9 895.4 57.9 890.2 56.1 884.7 54.2 877.9 53.2M645.5 328.4L644.7 332.6 642.3 339.1 640.5 345.1 639.1 349.4 635.1 353.5 631.2 357.8 629.6 360.6 627.9 364.7M231.2 331.1L229.1 326.1 226.8 323.2 224.4 321.2 221.2 318.3 218.7 315.9 214.4 312.2 211.7 310.6 209.1 306.9M750.4 666.5L747.1 667.1 743.7 668.8 739.9 669.6 736 671.2 732.4 671.8 729.2 673 726 673.5 722.7 674.4M737.9 427.5L735.1 434.8 731.6 440.7 730.6 445.5 728.9 449.9 726.7 455.1 721 460.8 716.9 469.4 712.4 476.3M976.6 306.6L968 300.4 958.3 297.5 946.5 295.5 929.8 290.4 923 289.9 916 289 907 285.5 896.1 283.5M265 490.9L261.6 487.3 259.2 483.5 257 480.6 254.4 478.3 252.6 475.6 250.8 473.2 248.2 469 245 466.3M867 16.6L881.4 12.7 893.1 9.3 909.2 0.4 926.8 -7.2 934.2 -11.7 942.2 -20 953 -25 960.5 -33M225.3 581.1L218.6 575.7 211.3 573 201.8 566.4 190.2 561.6 184.8 561 178.8 560.9 172.3 560.7 164.5 558.2M644.5 391.9L657.6 386.5 670.7 384.1 681.7 382.1 698.7 378.1 711.6 376.5 723.1 378.5 730.4 376.5 738.3 374.5M1192.7 93.8L1193.8 98.4 1197.6 103.7 1201.5 109.4 1204.5 112.7 1207 115.5 1209.8 120.7 1213.6 124.8 1217.8 127.5M645.5 328.4L643 339.5 641.1 347.2 641.7 355.5 641.2 366.3 640.6 371 640.4 378.6 643 384 644.5 391.9M144.2 304.4L144.5 299.2 145.8 293.3 147.7 289.9 150.4 285 152.1 282.1 153.3 278.2 155.8 275 158 271M891.6 316.7L893.7 312.2 894.2 306.4 894.4 302.8 896.3 297.8 896.6 294.3 895.9 292 896.8 287.4 896.1 283.5M343.6 3.5L341.9 0.7 341.3 -2.4 341 -4.1 340.9 -6.7 338.7 -9.7 338 -12.3 337.4 -15.8 337.4 -18.5M333.7 25.3L334.9 28.6 335.3 31.3 338 35.5 339.1 39.1 340.7 43.7 343.9 47.8 345.5 53.8 347.1 61.3M7.2 407L24.1 408.9 35.2 407.9 51.1 412.1 66.4 418.1 75.8 422.7 87.3 426.3 95.3 428.6 105.6 435.9M771.7 406.5L768.1 398.8 764 393 758.5 384.8 756 378.1 749.3 364.4 745.4 352.5 739.4 345.5 736.7 337.3M176.6 375.9L172.6 369.5 166.3 362.4 162.6 356.3 155.6 350.2 149.9 345.4 144.4 335.2 138.1 331 128.6 324.4M836.9 187.7L842 194.4 844.1 201.2 848.3 206.8 854 210.5 854.3 220.7 856.2 227.9 862.3 238.4 866.6 248.6M720.5 106.3L726.9 102.2 733.1 100.8 738.1 98 741.7 96.8 745.8 95.4 749.7 93.4 753.9 92.3 759.1 90.5M1098.7 370.5L1099.9 367.3 1100.6 362.9 1101.8 358.1 1102.5 351.8 1102.3 345.8 1102.4 339.9 1102.5 332.8 1101.2 327.2M783.5 475.1L772.3 474.7 761.4 474.9 754.3 473.3 743.5 472.4 737.6 473.1 731.5 473.8 720.3 474.5 712.4 476.3M627.9 364.7L623.2 361.3 619.4 356.5 615.7 351.5 613.5 348.1 609.7 344 605.9 339.2 602.2 337 596.6 333.4M833.9 250.2L826.1 251.7 819.7 251.4 810.1 255.5 803.2 258 797.9 259.1 792.9 260.6 784.9 263.7 777.9 265.3M697.8 603.2L695.8 607.7 692.9 611.3 690.5 613.8 687.4 616.3 681.9 620.2 677.4 624.1 671.9 624.9 665.9 628.5M245.5 581.5L249.6 587.8 253.9 591.7 258.3 598.3 263.6 602.2 275 609.4 284.7 617.6 292.4 620 301.6 621.7M550.8 108.9L545.1 108 540.6 107.6 534 105 528.1 104.9 524.3 101.6 519 98.5 514.1 96 510.4 94.8M399.5 195.4L395.3 198.9 392.4 201.7 387 205.2 384.2 208.6 379.8 212.1 376.5 213.6 371.3 219.5 368 224.4M1202.4 64.9L1201.6 67.1 1199.5 70.3 1197.7 74.1 1196.1 76.3 1195.6 82.3 1195.1 87.1 1194.5 90.9 1192.7 93.8M347.2 291.7L354.4 288.3 364.1 287.3 372.3 286.3 379.3 287.6 387.4 290.9 398.8 291.5 404 291 412.2 288.9M-22.8 350.4L-15.4 353.6 -10.1 356.7 -1.1 357.9 8.6 360.6 16.5 361.2 22.4 361.6 27.5 363.7 32.8 366.1M867 16.6L872.1 14.7 880.3 11.8 886.4 9.3 893.1 7.7 902.2 5.2 908.7 5.1 918 2.4 932.8 2M333.8 221.5L332.1 227.6 332.6 232 333.2 236.8 332.8 240.1 331.4 244.4 331.3 247.4 331.7 253 331.1 257.3M1241.3 451.1L1240.1 446.1 1238.7 439.3 1236 434.5 1234.9 429 1233.2 424.9 1231.7 420.5 1229.2 413.5 1226.2 409.7M122.9 593.3L127.3 584.3 134.6 577 137.1 570.3 140.9 566.1 143 558.6 143.8 553.2 146.1 544.9 151.1 538.7M435.6 102.4L440.7 100.9 447.4 97.3 455.1 95.7 463.2 95.4 475.1 91.7 486.1 91.5 492.6 90 503.3 89.2M453.7 179.4L458.6 181.6 462.4 183 466.3 184.9 468.5 187 473 191.5 476.6 193.5 478.7 195.7 481.4 199.9M537.1 411.1L537.5 414.6 537.7 418.1 537.3 422.1 536.1 424.3 535.8 427.4 535.5 430.8 535.3 434.1 534.5 436.5M631.4 -22.7L640.3 -10.1 646 4.3 654.7 16 662.1 30 667.6 41.8 671.8 60.1 675 73.3 673.5 85.6M1217.7 199.7L1220.9 198.7 1223.9 196.3 1228.1 195.2 1231 194.3 1234.1 192.1 1237.2 191.3 1240 190.3 1241.7 188.9M771.7 406.5L774.2 393.6 776.1 379.3 779.2 360.6 790 343.1 792.9 331.5 795.2 318.1 798.5 306.7 799.9 296M790.9 295L792.7 294.9 794.2 295.2 796.3 296.1 798.4 295.8 799.9 296M299.6 317.4L305 318.3 311.6 321.1 314.6 323.2 318.7 325.7 325.6 327.5 330.6 329.7 341.2 331 350 334M833.9 250.2L830.3 248.1 826.9 247.5 823.7 244.7 817.7 241.7 814.7 238.3 812.5 234.3 807.3 229.2 802.7 226.6M586.7 -20.7L589.2 -12.7 591.2 -7.6 597.7 -1.5 600.9 4.2 606.2 9.4 611.2 16 617.8 23.2 621.2 29.4M1194.4 611.7L1192.2 613.9 1190.5 616.8 1188.6 618.3 1186.1 620.6 1184.2 625.7 1182.2 629 1180.9 633.8 1178.5 637.8M90.7 346.8L91.2 340.9 93.6 335.9 94.8 330.2 94.4 325.1 96.2 314.2 100.8 306.7 105.7 300.7 109.9 295.9M-14.5 680.7L-16.4 678 -18.6 673 -19.2 667.9 -19.5 663.8 -21.4 659.5 -23 656 -23.8 651.5 -24.2 644.2M736.3 137.7L737 136.1 737.1 133.9 738.5 131.9 738.2 129.4 738.6 127.6 738.7 125.4M607.6 264.5L606.9 271.1 604.1 277.7 603.4 289.6 602.4 298.5 602.1 307 602.3 317.5 598.2 325.4 596.6 333.4M2.8 456L-0.2 447.3 -8.5 435.2 -18.1 423.6 -26.1 411.5 -26.9 401.9 -27.4 390 -32.2 378.6 -34.9 368.1M150.8 76.9L164.6 81.2 177.8 89.5 189.1 92.6 195.7 97.7 206.3 97.8 214.2 101.3 220.4 102.2 229.3 103.3M326.9 111.4L327.3 114.8 328.3 118.8 328.1 122.7 328.3 128.8 328.1 134.5 325.9 139.4 325.7 144.3 324.8 149M899.5 543.8L896.5 533.1 893.5 526.7 890.4 518.4 887.4 511.2 883.8 506 881.2 500.9 878.9 493.2 878 483.7M644.5 391.9L641.5 398.9 638.2 403.9 636.2 408.5 635.6 412 635 415 634.4 418.1 632.8 421.7 631.1 425M503.1 -7L512.2 -10 518.6 -9.6 526 -12 532.3 -15.2 536 -18.5 537.6 -21.3 543.1 -22.7 548.7 -26.8M-14.5 292.8L-20 288.2 -23.6 281.9 -26.1 278.5 -30 275 -32.2 266.5 -35.3 261.1 -38 256.8 -40 252.7M528.6 652.5L526.2 654.6 522.5 656.2 519.9 658.6 516.7 662.3 512.3 665.2 508.5 669.9 507.6 673.9 504.2 679M1101.7 104.4L1093.8 102.6 1087.3 100.7 1080.9 98.8 1073.6 97 1067.2 93.5 1059.4 90.9 1053.3 87.3 1046.6 83.3M836.9 187.7L830.2 192.5 826.9 197.8 823.8 203.7 816.2 210.5 813.9 215.3 811.2 219.6 808.5 222.9 802.7 226.6M7.2 407L2.2 397.5 -1.8 391.3 -8.9 382.4 -13.5 374.8 -15.6 368.9 -15.8 363.4 -20.8 356.8 -22.8 350.4M73.3 698.2L83.3 690.3 91.5 688.1 102.2 683.8 113.5 681.3 118.7 673.6 123.5 670.1 133.9 662.1 141.5 657.9M1098.7 370.5L1096.2 373.4 1091.1 376.5 1086.5 378.7 1083.1 379.6 1078.5 381.4 1072.9 381.7 1069.1 381.5 1063.1 382.6M1036.2 618.4L1031.7 619.8 1027.1 619.6 1023.5 620.7 1020.9 622.3 1017.2 623.7 1011.4 626.5 1007.9 630.3 1000.5 634.4M830.2 45.1L840.2 45.3 846.4 47.1 852.6 50.4 858.1 53.2 863.2 52.5 867.3 52.9 873.6 54 877.9 53.2M159.7 127.9L162.9 130.1 168 132 173.5 134.4 181.2 137.4 185.1 139.8 187.9 140.8 191.9 142.2 196.5 143.8M144.5 -31.1L147 -30.4 148.8 -29.3 150.5 -27.4 152.4 -26.3 154.9 -24.3 157.1 -22.4 159.6 -20.9 162.4 -20.2M1216.9 624L1218.6 622.8 1221.1 621.9 1222.9 620.5 1225 619.6M833.9 250.2L832.6 244.1 831.9 239.9 831 231.6 830.6 223.3 833.2 215 835.9 208.5 837.8 197.8 836.9 187.7M-14.5 292.8L-10 293.1 -7.1 293.1 -2.5 294.4 4 295.6 9.8 300.8 15 304.1 20.4 305.9 26.4 309.4M1101.7 104.4L1099.2 117.6 1094.7 126.7 1089.9 136.5 1081.9 148.3 1080.1 157 1073.9 167.1 1069.3 175 1068.3 181.4M364 488.2L372.1 490.5 384.7 492.9 391.4 497.1 398.6 499.7 406.4 501.8 412 502.5 418.1 504.1 424.8 507.8M607.6 264.5L599 265.6 591 264.4 581.8 267.3 574.9 268.8 568.4 271.5 560.1 271.5 547 270.4 538.1 269M18.5 69.5L10.8 67.3 3.1 65.1 -7.5 64.8 -15.8 61.7 -19.2 58 -23.2 53.7 -31.2 51.4 -38.3 46.7M1186.4 634.8L1188.8 634.4 1191 634 1193.7 633.4 1195.2 632.8 1196.5 631.6M75.4 223.3L83.4 222.6 92.5 222.3 97.8 221.2 104.2 218.7 109.9 215.8 118.2 214.9 127.1 209.1 136.6 205.6M1226.4 558.7L1225.3 570.9 1223 579.1 1222.5 587.3 1220.4 594.8 1222.8 603.5 1222.4 609.7 1224.5 614.3 1225 619.6M421.9 348.2L417.6 348.4 414 347.3 409.1 346.3 402.2 346.4 399.2 345.7 395.4 344.3 391.6 343.1 388.1 341.1M517.2 208.9L521.2 212.4 528.7 215.7 535.5 217.4 540.5 218.9 547 220.3 551.8 219.6 559.2 222.6 565.1 225.1M1226.4 558.7L1222.6 559.5 1217.9 560.1 1214 563.3 1207 565.7 1202.9 564.9 1199.6 564.1 1195.4 564.1 1190.9 565.4M435.6 102.4L434.1 96.1 432.8 89.3 432.4 81.9 429.7 72.9 427.1 68.2 425.9 62.2 423.9 53.6 419.8 46.9M456.6 637.2L457.2 634.6 457.3 632.6 458.5 630.3 459.7 627.2 460.8 624.1 461.2 621.6 462.3 619.8 464.4 617.4M264.1 6.3L259.4 3.1 250.6 0.4 244.3 -2.6 237.3 -4.9 229.2 -4.9 220.6 -8.5 213.4 -9.6 205.8 -13.7M343.6 3.5L344 1.8 345.6 -0.5 346.2 -2.6 347.1 -4.4 348.7 -5.7 350.3 -8.5 351.5 -10.1 352.9 -12.4M916.2 613.8L927.3 615 941.7 621.5 953.3 624 962.7 628.2 973.9 629 981.5 631.4 993 633.8 1000.5 634.4M575.6 69.9L580.8 60.9 586.3 52.9 591.5 50 596.4 44.2 603.7 40.3 610.6 39 616.4 34.5 621.2 29.4M129.5 397.1L130.8 391.5 132.6 385.1 131.9 378.2 132.1 368.7 130.1 360.4 131.2 351 127.1 338.3 123.2 330.2M352.9 -12.4L364.7 -17.7 372.6 -23.1 388.6 -29.5 405.4 -31.4 425 -33 439.9 -32.9 448.2 -31.7 461.6 -29.3M448.3 601.2L442.4 606.2 439.7 610.5 434.5 620.4 432 628.5 429.8 635.2 425.1 641.2 420.1 648.3 415.6 652.8M995.6 279L988 269.7 978.6 263.6 972.3 258 965.5 255.4 958.2 251.4 949.9 249.9 942.7 244.3 937 239.6M498.2 -16.8L497.2 -13.8 494.7 -10.9 492.8 -8.1 489.7 -3.7 489.2 1 489.8 7.6 487.6 11.9 485.2 19.1M229.3 103.3L234.1 111.1 239 118.9 241.3 125.5 243.9 132.9 246.8 138.7 248.3 147.9 249.8 153.4 252 159.2M932.4 79.1L933.5 85.5 933.1 93.4 933.7 98.5 932.4 103 931.7 110.2 932.7 117.6 938.1 129 940.9 136.4M435.2 433.3L438.6 431.6 441 430.1 442.7 428.1 444.3 426.6 447.8 424.3 452.9 420.8 454.8 418.6 458.4 416.5M1186.4 634.8L1194.7 638.1 1199.1 641.8 1208.7 643 1215.4 644.1 1225.6 648.7 1237.8 655.4 1246.8 661 1255.7 664.6M415.6 652.8L406.9 657.1 397 659.2 390.8 659.8 384.4 658.2 375.7 663.6 362.6 666.9 356.5 671.7 351.3 677.7M1127.5 185.3L1122.8 187.5 1116.1 190.4 1112.2 195.6 1106.7 199.4 1100.4 201.2 1095.5 204.6 1092.5 204.9 1087.9 206.4M-40 252.7L-39.6 249.6 -38.6 247.3 -37.6 245.8 -37.6 243.4 -37 241.2M2.8 456L5.6 451.9 7.8 445.7 9.7 439.6 9.3 431.5 9 423.6 6.7 418 6.8 411.8 7.2 407M517.2 208.9L514 211.9 511 217.4 508.6 219.9 504.2 222.8 500 224.5 495.3 227.1 491.2 231.1 485.9 234.8M759.1 90.5L763.7 95.2 771 98.8 781.7 105.6 791.4 109.1 804.1 115.9 813 126.3 828.2 134.6 836.4 143.1M1163 498L1163.5 501.6 1163.8 504.3 1163.6 508.7 1164 512.2 1163.9 516.1 1164.7 519.3 1165.4 522.1 1165.7 524.7M227.7 308.4L226.3 308 224.2 307.4 221.7 306.9 219.1 307 215.8 306.8 213.5 307.1 211.5 307 209.1 306.9M879.7 75.4L875.8 81.6 872.4 84.8 869.5 91.4 867.5 99.3 866 103.4 863.1 109.2 861.4 111.5 859.8 115.5M-32 196.1L-33 189.2 -35.7 183 -33.1 174.3 -33.4 164 -36 155.4 -36.5 148.1 -36.1 138.1 -39.2 129.6M1097.3 442.2L1086.4 447.6 1070.7 457.6 1058.8 463.1 1050.7 470.9 1044.2 475.6 1036.8 484.1 1029 498.7 1022 508.1M872.3 287.5L876.1 287.7 878.6 287.1 880.1 286.4 882.3 286.1 886.4 286.1 891 285.8 894 284.2 896.1 283.5M333.7 607.8L329.7 611.1 324.4 613.5 320.2 615.9 315.9 618.8 313 619.2 309.9 619.3 306 620.2 301.6 621.7M1002.8 498.8L1006.8 502.5 1011.2 509.2 1013.2 516 1016.6 525.2 1019.3 532.5 1019.1 538.8 1021 546.3 1020.6 556.1M607.6 264.5L611.8 266.2 616.1 267.9 619.5 270.1 623.4 273.2 628.7 277.6 636 283.1 638.8 287.8 642.6 294.8M862.1 154.9L861.1 152.8 860.4 150.8 859.7 149.2 859.2 147.7 859.3 145.7 859 144.5M699 142.5L696.4 137 692.4 133.3 689.5 125.8 684 117.9 679.2 110.3 676.9 98.3 674.7 92.9 673.5 85.6M922 219.3L927.4 219.3 932 219.7 937 218.7 941.3 219.3 946.8 218.9 952.2 217.2 958.1 215.2 963.7 215.4M829.7 709.9L835.7 711 842.8 710.6 851.3 707.4 857.7 706.4 863.8 704.6 868 701.4 872.1 700.5 876.9 697M419 199.3L417.1 199.4 414.8 198.8 412.4 198.3 410.6 198.3 407 196.8 404.4 195.7 402.5 195.2 399.5 195.4M922 219.3L923.7 220.9 925.7 223.6 926.8 225.7 928.7 227.4 929.6 230.7 932.7 235.2 935.5 237.2 937 239.6M150.8 76.9L151.6 66.3 153 59.8 155.8 53.4 157.7 44.2 159.8 38.2 162.3 33.3 163.3 27.2 163.9 22.7M859 144.5L856.8 144.3 855 144 852.3 144.6 848.6 144.5 846 144.1 843.7 143.7 839.5 143.5 836.4 143.1M421.9 348.2L424 355.7 425.9 361.3 431.3 372.1 438.6 378.9 440.6 386.9 444.3 397.6 453.4 406.5 458.4 416.5M388.1 341.1L387 348.9 386.8 353.9 387.2 360.4 387.2 370.3 385.3 382.7 383.4 393.6 378.8 402.7 374 410.3M531.9 366.9L528.5 360.1 524.6 356.7 519.7 350.2 515 340.8 513.8 325.4 513.1 315.3 510.5 306.7 504.6 297.9M1002.8 498.8L999.4 491.5 997.1 481.4 993.2 470.5 986.6 463 983.3 457.7 980 454.9 977.6 448.4 975.9 441.4M1098.7 -9.4L1104.1 -5.5 1109 -3.1 1117.7 -0.6 1126.4 -0.2 1136.2 5.6 1145.1 7.3 1152.4 11.1 1163.1 17M714.6 184.8L712.8 195.5 709.2 206.7 708.4 217.7 707.8 226.3 704.7 231.7 699.5 239 695 249.1 690 255.8M1068.3 181.4L1068.6 165.8 1069.9 152.6 1069.5 143.3 1067.6 132.3 1059.2 121 1054.8 111.7 1050.5 94.1 1046.6 83.3M644.6 92.8L647 100.1 647.7 107.9 648.5 111.8 649.8 117.5 650 123.1 650.3 128.5 650.2 132.8 650.7 135.8M54.3 626.3L46.8 626.6 39.4 627.6 33.6 629.5 28.8 629.8 19.3 626.2 12.5 624.5 2.8 623 -4.5 622.6M588.4 689.4L601 685.9 613.5 681.4 626.4 671.2 636.5 663.7 643.4 656.2 650 646.1 656.8 639.1 665.9 628.5M872.5 447.5L881.7 452.1 890.1 454.8 902.1 457.6 916.4 459.9 925.3 463.4 934.4 470.4 947.9 477.2 954.8 484.4M1038.3 371.1L1047.2 368.7 1058.3 365.7 1064.6 362.2 1069.2 357.7 1077.6 348.4 1086.1 340.6 1095.8 334.1 1101.2 327.2M777.6 175.3L785.7 172.8 793.4 169.2 798 166.4 803.1 161 811.8 154.4 821.7 147.3 828.5 146.5 836.4 143.1M697.8 603.2L705.3 608.4 709.9 612.9 717.4 622.4 728.3 628.9 734.7 641 741.9 648.9 745.9 654.2 753.7 658.8M1048.3 527.8L1054.2 531.8 1059.6 539.6 1068.4 545.4 1082 552.6 1090.1 558.7 1095.2 564.8 1099.5 572.7 1101.7 578.4M1020.6 556.1L1017.5 567.8 1018.4 578.6 1012.6 589.2 1007.2 602.6 1004.2 609.4 1002.8 616.5 1001.9 624.2 1000.5 634.4M1163 498L1164.8 499 1166.8 500.1 1169.3 500.4 1173 501.8 1177.7 504.8 1181.9 506.5 1184 508.7 1186.8 511.1M528.6 652.5L525 650.1 522.6 647.6 519.5 644.4 515.6 641.8 514.2 640.5 512.3 638.6 511.6 635.5 509.8 632.8M66.1 569.6L65.1 566.1 63.2 563.2 61.5 559.6 58.9 555.2 56.8 548.2 56.2 542.5 54.1 538.4 53.1 532.2M53.8 628.4L46 632.3 40.2 633.8 32.1 634.6 26.7 636.1 18.7 637.1 6.9 640.7 0.4 644.6 -10.8 646.5M333.8 221.5L337.2 220.8 341.5 220.5 346.4 219.9 351.4 219.7 355.6 220.2 359.5 220.3 363.5 222.7 368 224.4M940.9 136.4L930.3 131.1 922.9 127 916 125.8 905.6 123.3 899.1 123.6 890.4 121.2 880.5 115.9 871.1 111.8M579.7 623.3L573.1 627.3 567.3 634.1 563.9 638.4 557.6 642.2 547.3 645.9 539.6 645.6 534.5 648.4 528.6 652.5M905.2 697.1L917.7 698.2 929.7 699.1 938.8 696.4 948 694.1 956.2 693.6 967.7 688.3 976.6 689.1 985.5 687.5M376.3 450.3L374.6 453.9 372.6 457.4 370.5 462.3 368.3 465.4 368.4 470.7 366.3 476.9 364.4 483.1 364 488.2M73.3 698.2L74.7 689.6 77.9 683.1 77.3 669.9 76.8 661.8 76.9 652 77.2 641.6 77.4 635.4 75 625.9M97.7 103.2L94.5 99.4 91.8 97.1 90.4 94.3 88.5 91.2 83.7 85.5 80.9 80.8 77.3 76.9 72.8 74.6M736.7 337.3L739 340.7 740.3 346.4 740.8 349.8 740.1 352.9 739 357.1 737.4 362.4 737.2 368 738.3 374.5M891.6 316.7L891.4 319.6 892.2 322.5 893.4 324.5 893.9 326.1 895.4 328.6 898 332 901 335 902.5 338.2M394 707.6L399.9 707.4 408.4 706 413.8 704.1 418.7 703 421.7 701.5 425.8 698.6 431.5 697.2 436.1 693.8M509.8 632.8L510.2 621.8 510.4 613.7 507.3 600.9 502.1 584.8 497.3 569.4 487.3 556.9 482.9 546.6 482.8 537.6M1196.3 378.1L1198.3 371.8 1198.7 365.9 1198.2 360.9 1199 354.1 1200.9 347.1 1203.3 343 1205.4 335.2 1208 325.8M453.7 179.4L457.4 178.5 461.4 177.7 465.9 174.8 470.7 171.3 474.8 167.4 479.6 165.1 485.3 162.1 490.4 157.2M1256.9 -15.4L1252.4 -15.4 1249.6 -15.5 1244.8 -16.8 1238.6 -17.1 1232.4 -16.1 1224.2 -16.3 1217.9 -16.4 1208.9 -16.5M932.4 79.1L927.3 74 923.2 68.3 920.6 62.1 915.9 52.7 912.3 46.3 905.1 39.5 897.9 31.1 895 24.6M1112.1 693.4L1123.8 683.9 1134.7 673.3 1140.7 664.8 1148.5 655.9 1155.9 651.3 1166.1 648.3 1172.7 643.5 1178.5 637.8M963.7 215.4L965 204.9 965.2 195.9 967.1 184 974.5 171.5 972.8 161.7 972.6 151.6 971.8 141.8 970.5 132.6M970.5 132.6L975.5 129.9 978.5 126.3 981.2 124.8 985.6 123.5 992.4 120.8 998 116.6 1002.4 114 1007.5 110.8M723.5 344.5L713.2 339.2 702.6 335.8 696 329 685 320.9 678.8 317 673.5 311 667.6 306.1 662.4 303.4M196.5 143.8L187.2 150.5 180.2 152.5 174.4 157.2 170.1 160 164.9 161.7 160.1 161.4 153.3 163.8 145.2 166.7M1258.8 569.4L1257.6 579.3 1254.1 585.9 1251 590.4 1248.4 595.2 1242.4 600.4 1233.8 605.6 1230.2 613.4 1225 619.6M156.1 204.9L162.4 205.7 168.6 206.8 174.8 207.6 183.6 211.3 188.6 213.8 195.4 217.4 200.4 217.7 205.7 218.5M124.8 302.2L123.6 305.7 122.5 308.6 121.8 310.3 121.4 312.7 122.5 317.2 123.8 319.9 123 323.9 123.2 330.2M301.6 621.7L300.3 616.1 301 610.5 300.5 604.7 299.9 598.8 298.6 592.4 295.8 586.4 292.5 578.7 287.8 568.8M421.9 348.2L432.2 347.8 439 345.9 444.5 342.7 451.3 341.5 461.5 343.8 468.2 343.3 480.3 344.6 493.9 342.1M218.9 444.1L224.7 437.7 229.1 432.8 236.3 424 240.6 416.6 244.3 410 246.6 404.5 247.6 396.7 252.2 388.1M37.9 270.5L43.1 274.3 47.8 278.9 51.5 281.4 55.7 282.6 60 284.5 63.2 284.6 67.4 287.9 71.5 289.2M71.4 29.2L78.3 22.9 84.8 13.3 88.8 3.1 92.6 -5 94.9 -13.2 95.5 -19 102.6 -30.1 107.3 -38.1M937 239.6L934.6 244.6 929.5 250.4 922.8 256.9 919.8 262.5 915.8 267.3 911.6 271.8 902.7 278.5 896.1 283.5M522 494.6L518 496.5 513.2 497.4 509 502.3 502.9 506.1 499.5 507 495.7 509.6 491.8 514.3 488.3 517.1M1206.2 303.9L1200.9 300.2 1196.9 297.7 1194.6 294.7 1191.9 293 1184.7 288.3 1179 283.8 1175.3 278.8 1171.1 275.1M899.5 543.8L895 542.1 890.9 541.5 885.2 538.4 880.2 534.3 876.9 532.8 874.5 530.3 871.4 526.2 868.7 523.8M-14.5 292.8L-16.5 298.7 -17.1 306 -19.9 316.6 -20.1 326.9 -19.8 331.4 -20.1 337.2 -21.4 343.9 -22.8 350.4M1192.7 93.8L1195.2 93.2 1199.1 92 1203.3 89.1 1206.3 88.3 1209.2 86.2 1212.7 84.2 1215.2 83.7 1217.6 82.3M750.4 666.5L750.9 664.2 751.3 662.6 752.6 660.2 753.7 658.8M117.1 105.5L110 114.4 102.9 123.5 95.6 129.3 88.6 132.3 85.9 136.4 81.1 142.8 77 148.5 74.8 155.4M435.2 433.3L433.5 438.6 431.1 446.4 431.2 450.2 429.9 455.9 428.2 459.8 426.8 465.8 426.3 470.4 427.2 473.9M1204.8 199.7L1207.1 200 1209.5 200.6 1212.2 202.2 1213.9 202.6 1215.7 203.6 1218.2 203.6M1217.6 82.3L1219.6 77.9 1221.8 72.8 1223 68.5 1223.3 64.4 1222.2 59.4 1222.1 52.5 1222.3 45.9 1221.7 40.7M442.2 270.8L437.1 273.7 432.9 278.8 429.8 281.4 425.7 283.7 421.5 284.7 417.3 286.2 415.3 287.5 412.2 288.9M100.4 615.6L103.6 624.3 106.7 630.1 110.8 633.7 113.3 637.9 117.3 641.1 120.5 645.9 123.5 648.6 128.3 650.8M829.7 709.9L833.9 707 837.7 702.1 840.7 699.9 844.6 696.4 850.4 690.9 857.1 687.8 861.8 685.6 866.5 685.2M229.3 103.3L231.9 99.7 233.3 97.1 236.6 94.3 239.4 91.9 241.3 88.6 243.7 84.5 245.1 81.8 246.3 79.6M1196.5 631.6L1198.8 630.4 1200.6 629.3 1202.4 628.4 1205.5 627.2 1207.5 627.2 1209.9 626.5 1213.7 625.4 1216.9 624M582.2 27L577.3 17.8 571.2 11.4 569.1 5.3 567.3 -2.7 563.4 -9.6 558.5 -18.5 553.8 -22.8 548.7 -26.8M973.7 -27.6L977.9 -26.3 980.4 -24.9 981.9 -23.7 983.9 -21.8 987.8 -20.6 992.9 -19.4 996 -19.2 998.5 -18.4M579.7 623.3L583.7 620.3 587.2 615.4 589.3 612.5 593.5 608.6 597.2 606.4 602.2 601.8 605.8 599.6 611.4 598M1087.9 206.4L1089.2 203.1 1090.1 200.2 1091.4 198.3 1093.5 196.3 1095.6 193.9 1099.1 192 1100.6 189.7 1102.2 188.4M442.2 270.8L439.8 261.4 437.3 255.9 434.5 245.3 433.1 232.9 428.6 226.5 425.7 220.1 421.3 208.9 419 199.3M522 494.6L523.9 497.3 525.6 501.6 526.9 504.1 528.5 506.8 529.3 509.5 530.9 512.2 532.1 513.7 533.7 515.5M976.6 306.6L984.9 309.5 991.1 310.3 997.8 313 1002.2 315.7 1008.4 316.3 1012.8 316.7 1018.7 318.9 1024.3 319.3M1195.5 3.9L1196.9 1.8 1198.7 -1.4 1199.7 -4 1201.6 -6.7 1204.5 -9 1206.4 -11.5 1207.5 -13.6 1209.3 -16.4M866.5 685.2L867.7 686.8 868.3 688 869.2 689.7 870 690.8 871.8 692.6 873.3 694.6 875.4 695.7 876.9 697M245.5 581.5L250.6 581.1 256.5 579.8 260.9 579.9 263.8 579.9 268.9 578.6 275.5 574.6 282.4 572.1 287.8 568.8M872.3 287.5L870.7 283.2 869.2 279.2 868.2 275.9 868.4 271.8 867.7 264.9 865.7 259.9 866.4 255.3 866.6 248.6M621.2 29.4L622.9 31.2 623.8 33 625.8 34.2 628.4 36 630.1 37.9 631.6 39 632.7 40.7 633.9 43M571.6 505.6L573.4 500.5 574.4 492 576.8 487.2 577.7 483 580.7 480.4 584.4 476.5 588.6 469.3 590.4 464.5M517.2 208.9L523 215.2 527.1 220.6 533.7 225.1 539.4 227.8 545 231.2 549.3 235.6 556.4 239.8 563.2 243.6M746.7 117.8L744.3 121.7 743.4 124.8 742.1 126.4 739.9 128.8 739.3 132.2 738.2 134.2 736.8 136 736.3 137.7M644.6 92.8L639 94.1 634.5 94.9 628.5 96.2 623.1 95.5 617 94.8 609.6 95.5 605.4 96.8 601.8 98.8M834.1 280.5L826.4 278.7 818.6 278.3 813.6 275.7 806.7 271.7 798.1 271.6 791.7 270.2 784.9 267.6 777.9 265.3M610.4 185.5L603.7 181.1 597.4 179.4 591.9 176.9 587 176 580.3 168.8 575.5 162.3 563.3 156.7 555.1 150.7M259.1 24.4L271.1 25.3 283.5 23.3 291.9 22.8 300 19.5 307.4 19.2 313.6 18.9 323.9 21.4 333.7 25.3M1196.5 631.6L1196 628.2 1195.5 624.7 1195.1 621.6 1195.1 619.4 1195.2 616.4 1195.1 613.6 1194.4 611.7M-16.3 566.7L-15.6 575.8 -17.5 586.1 -16.7 595.5 -18.8 602.1 -20 614.9 -21.6 623.4 -23 634.6 -24.2 644.2M117.1 105.5L113.8 100.7 112.9 97.1 112.1 93.6 111.4 88.2 109.4 85 105.8 80.5 103.1 76.9 100.4 74.4M1258.1 320.7L1253.7 322.6 1249.4 325.1 1242.2 325.8 1235.5 327.4 1228.7 327.1 1222.6 328.4 1215.6 328.2 1208 325.8M1204.8 199.7L1205.8 197.8 1206.8 196.6 1208.4 194.9 1209.1 193.3 1210.9 189.9 1213 187.9 1213.2 185.6 1214.1 183.2M634.2 402.9L635.5 397.2 635 391.4 634 388.6 634.2 384.1 632.5 377.2 630.6 372.6 629 368.6 627.9 364.7M783.5 475.1L780.5 486.4 780.6 500.7 777.3 515.6 774.2 533.2 774 544.3 775 551.7 772.4 562.6 769.1 571M609.4 629.7L615.3 630.2 620.4 630.1 627.3 629 637.2 628 642.7 627.1 651.3 625.5 657.1 627.3 665.9 628.5M54.3 626.3L56.8 620.2 57.3 614.2 58.8 607.8 58.2 600 61.9 592.9 63.7 587.4 63.3 579.4 66.1 569.6M672.8 461.1L674.6 459.6 676.3 456.6 677.3 454.8 679.3 453 681.1 450.8 682.7 449.4 684.5 448.8M1268.7 683.7L1255.2 677.6 1243.9 677.2 1234.3 672.3 1228 667.6 1220.1 661.7 1209.2 651.7 1193.9 642.4 1178.5 637.8M932.4 79.1L932.3 66.9 932.7 57.9 930.7 48.3 929.8 40.7 929.5 34.2 931.9 24.6 931.8 10.6 932.8 2M1082.7 403.6L1086.2 396.7 1089.6 392 1090.8 387.6 1091.4 382.8 1094.1 380 1096.4 376.7 1097.8 374.4 1098.7 370.5M771.7 406.5L768.1 408.1 765.5 410.8 761.9 413.5 759.1 415.2 754.5 418.4 751.5 421.3 744.3 423.8 737.9 427.5M90.7 346.8L83.8 350.5 77.8 354.6 70 355.6 62.9 358.2 54.3 360.5 45.1 362 39.1 362.8 32.8 366.1M77 260.6L81.5 266.1 86.5 272.3 92 278.1 95.8 283.4 98.4 285.2 102.6 287.9 107.1 291.8 109.9 295.9M163.9 22.7L163.2 17.4 163.4 13.8 161.5 7.5 160 1.7 159.5 -4 160.4 -9.5 160.6 -14.3 162.4 -20.2M73.8 69.7L68.3 68.4 62.3 69.1 55.9 70.5 48.5 69.9 42.2 70.3 37.7 71.4 30.6 71.4 26 71.3M1186.4 634.8L1184.6 635.4 1182.4 637.1 1180.1 637.6 1178.5 637.8M645.2 157.2L646.4 156.1 648.4 155 649.7 154.3 651.4 153.7 652.9 152.4 654.6 151.3 656 149.4 657.5 148.5M737.9 427.5L737.1 421.4 736.6 417.5 737.3 409.4 740.8 402 738.1 392.4 738.5 385.8 739.2 380.5 738.3 374.5M1241.3 451.1L1225.1 459.8 1215.1 467.8 1208.3 475.4 1199.1 485.7 1191.7 489.8 1185.3 494.3 1172.5 498.4 1163 498M829.7 709.9L833.8 703.2 837.8 698.2 841.2 692.3 848 684.1 850.9 673.7 852.6 667.2 855.9 660.4 861.1 655.2M1218.2 203.6L1217.9 201.6 1217.7 199.7M601.8 98.8L597.3 95 593.8 93.4 591.4 90 589.5 88.3 585.2 82.7 581.1 79.4 578.3 73.4 575.6 69.9M347.1 61.3L348 55.5 352.6 48.1 357.4 38.2 365.8 30.4 369.8 21.4 371 15.1 375.4 10.4 379.5 4.8M601.8 98.8L604 93.2 606 85.8 609.9 77.2 615.9 68.2 622.2 61.8 625.4 56.8 630 51.8 633.9 43M1127.5 185.3L1124 185.4 1119.5 186.7 1117.5 187.5 1114.6 188.7 1112.2 188.5 1108.5 188.8 1105.5 188.1 1102.2 188.4M1193.8 200.9L1190.8 204.4 1188 207.8 1185.5 209.9 1182.7 211.3 1179.5 212.3 1176.9 214.2 1173 216.9 1169.2 217.8M571.6 505.6L565.4 507.6 559 508.3 555.7 509.4 551.3 511.7 547.5 511.7 541.3 512.5 537.8 514.6 533.7 515.5M493.9 342.1L497 338.2 499 333 500 328.4 502 323.9 502.3 317 504.1 310 503.6 303.6 504.6 297.9M1101.7 104.4L1103.6 114.5 1104.3 121.7 1106.1 130.9 1108.5 139.2 1110.5 157.4 1115.4 168.1 1121.6 177.5 1127.5 185.3M1267.2 201.2L1264 206.5 1262.4 211.8 1260.5 218.5 1258.3 224.4 1252.8 229.5 1246.8 234.2 1242.3 240.8 1240.3 245.8M799.9 296L800.2 310.8 804.5 326.7 812.6 340 815.7 349.7 818.8 371.2 820.3 385 820.1 396.6 816.9 413M251.6 237L247.6 238.6 243.8 239.2 239.4 241.1 234.7 244.2 228.7 245.9 224.3 246.3 220.2 246.2 216 245.7M1109.2 441.4L1117.1 431.7 1121 422.1 1127.9 412.9 1132.9 401.9 1137 391.5 1144.7 378.4 1152.2 363.8 1161 352.9" fill="none" stroke="#fff" stroke-width=".7" opacity=".75"/>
<path d="M873 673L889 664 912 654 931 644 948 631 957 615 964 602 974 589 980 577 987 574 992 579 990 592 984 608 979 621 984 634 987 647 992 660 1010 664 1026 660 1036 664 1049 667 1068 664 1091 660 1107 654 1121 651 1140 654 1156 641 1173 634 1199 639 1229 634 1229 673Z" fill="#a3cfe2"/>
<path d="M1178 0L1184 33 1191 65 1188 98 1191 131 1198 163 1207 196 1215 228 1219 266 1225 319 1229 339 1229 269 1228 228 1221 196 1212 163 1205 131 1202 98 1205 65 1198 33 1192 0Z" fill="#a3cfe2" opacity=".45"/>
<path d="M1032 634L1035.3 628.6 1037.5 623.6 1039.2 618.4 1042 615 1047 608.4 1049.2 602.2 1055.5 596.5 1062 595 1064.3 592.1 1068.5 589.3 1072.9 586.8 1075 584 1080 581.5 1084.7 579.9 1088.9 574.5 1094 571 1098.7 569 1102.7 566.9 1108.9 567.5 1114 568 1117.2 566.1 1120.1 564.9 1123.8 564.4 1127 563 1131 560.7 1137.3 559.2 1142.2 554.7 1147 553 1146.9 548.3 1148.4 544.8 1152 540.3 1156 536 1158.1 532.7 1161.5 530.9 1164.3 529 1166 527 1170.5 527.8 1174.6 527.5 1178.9 526.3 1182 525 1186 527.5 1188 530.1 1192.7 530.8 1199 533 1202 532.9 1205.9 534.1 1209.6 535.1 1215 537 1218.2 538.2 1221.1 540.7 1225.5 542.9 1229 543 1233.1 566.4 1236.2 591.9 1238.3 613.2 1229 634 1220.8 632.6 1213.9 634.2 1205.5 635.7 1199 639 1190.8 636 1184.7 633.1 1178.4 633.1 1173 634 1168.3 636.4 1162.8 637 1159.9 639.3 1156 641 1151.8 643.4 1146.4 646.8 1143.1 651.1 1140 654 1136.1 653.9 1132.1 652.2 1126.9 653.2 1121 651 1118.7 652.5 1115 652.6 1110.8 652.3 1107 654 1102.4 657.5 1098.2 658.2 1095.4 660 1091 660 1085.7 660.6 1081.4 661 1073.9 662.9 1068 664 1062.4 665.6 1056.8 665.2 1053.1 666.2 1049 667 1045.6 666 1041.4 666.3 1039.2 665.3 1036 664 1034.9 660.5 1035.4 657.2 1033.9 652.8 1033 649Z" fill="#dff0bd"/>
<path d="M1036 630.1C1035.8 631.1 1035.3 634.1 1035.3 636.1C1035.3 638.1 1035.6 640.1 1035.8 642.1C1036 644.1 1036.7 646.1 1036.5 648.1C1036.2 650.1 1035 652.1 1034.2 654.1C1033.4 656.1 1031.8 658.1 1031.7 660.1C1031.5 662.1 1033.3 664.1 1033.4 666.1C1033.5 668.1 1032.6 670.1 1032.2 672.1C1031.7 674.1 1031 677.1 1030.8 678.1" fill="none" stroke="#a3cfe2" stroke-width="2.2" stroke-linecap="round" stroke-linejoin="round"/>
<path d="M1031.7 660.1C1032 661.1 1033.3 664.1 1033.4 666.1C1033.5 668.1 1032.6 670.1 1032.2 672.1C1031.7 674.1 1031 677.1 1030.8 678.1" fill="none" stroke="#a3cfe2" stroke-width="5.3" stroke-linecap="round" stroke-linejoin="round"/>
<path d="M1035.8 642.1C1035.1 641.2 1032.8 639.1 1031.8 637.1C1030.8 635.1 1030 632.2 1029.8 630.1C1029.6 627.9 1030.6 625.1 1030.8 624.1" fill="none" stroke="#a3cfe2" stroke-width="1" stroke-linecap="round"/>
<path d="M1044.2 633.7C1044.2 634.7 1044 637.7 1044.1 639.7C1044.2 641.7 1045 643.7 1044.8 645.7C1044.6 647.7 1043.2 649.7 1043 651.7C1042.8 653.7 1043.2 655.7 1043.7 657.7C1044.1 659.7 1045.2 661.7 1045.6 663.7C1045.9 665.7 1045.5 667.7 1045.7 669.7C1045.9 671.7 1046.7 674.7 1047 675.7" fill="none" stroke="#a3cfe2" stroke-width="1.8" stroke-linecap="round" stroke-linejoin="round"/>
<path d="M1045.6 663.7C1045.6 664.7 1045.5 667.7 1045.7 669.7C1045.9 671.7 1046.7 674.7 1047 675.7" fill="none" stroke="#a3cfe2" stroke-width="4.2" stroke-linecap="round" stroke-linejoin="round"/>
<path d="M1043 651.7C1043.6 650.9 1046 648.7 1047 646.7C1048 644.7 1048.8 641.9 1049 639.7C1049.1 637.6 1048.1 634.7 1048 633.7" fill="none" stroke="#a3cfe2" stroke-width="1" stroke-linecap="round"/>
<path d="M1049.9 628.4C1049.9 629.4 1050.4 632.4 1050.3 634.4C1050.2 636.4 1049.9 638.4 1049.3 640.4C1048.7 642.4 1046.9 644.4 1046.9 646.4C1046.8 648.4 1048.5 650.4 1048.8 652.4C1049.1 654.4 1048.5 656.4 1048.6 658.4C1048.8 660.4 1049.2 662.4 1049.8 664.4C1050.3 666.4 1051.2 668.4 1051.7 670.4C1052.2 672.4 1052.7 675.4 1052.8 676.4" fill="none" stroke="#a3cfe2" stroke-width="2.1" stroke-linecap="round" stroke-linejoin="round"/>
<path d="M1048.6 658.4C1048.8 659.4 1049.2 662.4 1049.8 664.4C1050.3 666.4 1051.2 668.4 1051.7 670.4C1052.2 672.4 1052.7 675.4 1052.8 676.4" fill="none" stroke="#a3cfe2" stroke-width="4.2" stroke-linecap="round" stroke-linejoin="round"/>
<path d="M1049.3 640.4C1050 639.6 1052.3 637.4 1053.3 635.4C1054.3 633.4 1055.1 630.6 1055.3 628.4C1055.5 626.2 1054.5 623.4 1054.3 622.4" fill="none" stroke="#a3cfe2" stroke-width="1" stroke-linecap="round"/>
<path d="M1058.5 624.9C1058.4 625.9 1057.9 628.9 1058.2 630.9C1058.5 632.9 1059.8 634.9 1060.5 636.9C1061.2 638.9 1062.4 640.9 1062.4 642.9C1062.4 644.9 1061 646.9 1060.3 648.9C1059.7 650.9 1059 652.9 1058.4 654.9C1057.9 656.9 1056.8 658.9 1057 660.9C1057.1 662.9 1059 664.9 1059.4 666.9C1059.7 668.9 1059 670.9 1059.1 672.9C1059.1 674.9 1059.6 677.9 1059.7 678.9" fill="none" stroke="#a3cfe2" stroke-width="1.4" stroke-linecap="round" stroke-linejoin="round"/>
<path d="M1057 660.9C1057.4 661.9 1059 664.9 1059.4 666.9C1059.7 668.9 1059 670.9 1059.1 672.9C1059.1 674.9 1059.6 677.9 1059.7 678.9" fill="none" stroke="#a3cfe2" stroke-width="3.0" stroke-linecap="round" stroke-linejoin="round"/>
<path d="M1062.4 642.9C1061.8 642 1059.4 639.9 1058.4 637.9C1057.4 635.9 1056.6 633 1056.4 630.9C1056.3 628.7 1057.3 625.9 1057.4 624.9" fill="none" stroke="#a3cfe2" stroke-width="1" stroke-linecap="round"/>
<path d="M1066.2 609C1066.1 610 1065.5 613 1065.5 615C1065.4 617 1065.7 619 1065.9 621C1066 623 1065.9 625 1066.3 627C1066.8 629 1067.9 631 1068.4 633C1068.9 635 1068.9 637 1069.4 639C1069.9 641 1070.9 643 1071.6 645C1072.3 647 1072.7 649 1073.5 651C1074.2 653 1075.4 655 1076 657C1076.6 659 1077.1 661 1076.9 663C1076.8 665 1075.1 667 1075.2 669C1075.2 671 1076.3 673 1077 675C1077.7 677 1079 680 1079.4 681" fill="none" stroke="#a3cfe2" stroke-width="2.1" stroke-linecap="round" stroke-linejoin="round"/>
<path d="M1076 657C1076.2 658 1077.1 661 1076.9 663C1076.8 665 1075.1 667 1075.2 669C1075.2 671 1076.3 673 1077 675C1077.7 677 1079 680 1079.4 681" fill="none" stroke="#a3cfe2" stroke-width="4.4" stroke-linecap="round" stroke-linejoin="round"/>
<path d="M1076.9 663C1076.2 662.1 1073.9 660 1072.9 658C1071.9 656 1071.1 653.1 1070.9 651C1070.7 648.8 1071.7 646 1071.9 645" fill="none" stroke="#a3cfe2" stroke-width="1" stroke-linecap="round"/>
<path d="M1073.8 614C1073.5 615 1072.2 618 1072.3 620C1072.3 622 1073.6 624 1074 626C1074.3 628 1074.5 630 1074.4 632C1074.3 634 1073.8 636 1073.3 638C1072.7 640 1071.1 642 1071 644C1070.9 646 1072.1 648 1072.8 650C1073.6 652 1075.3 654 1075.4 656C1075.4 658 1073.3 660 1073.2 662C1073.1 664 1074.6 666 1074.8 668C1075 670 1074.7 672 1074.3 674C1074 676 1072.8 679 1072.5 680" fill="none" stroke="#a3cfe2" stroke-width="1.4" stroke-linecap="round" stroke-linejoin="round"/>
<path d="M1075.4 656C1075 657 1073.3 660 1073.2 662C1073.1 664 1074.6 666 1074.8 668C1075 670 1074.7 672 1074.3 674C1074 676 1072.8 679 1072.5 680" fill="none" stroke="#a3cfe2" stroke-width="3.9" stroke-linecap="round" stroke-linejoin="round"/>
<path d="M1073.2 662C1072.6 661.2 1070.2 659 1069.2 657C1068.2 655 1067.4 652.2 1067.2 650C1067.1 647.8 1068.1 645 1068.2 644" fill="none" stroke="#a3cfe2" stroke-width="1" stroke-linecap="round"/>
<path d="M1081.9 614C1081.5 615 1079.8 618 1079.5 620C1079.2 622 1080.4 624 1080.1 626C1079.8 628 1077.9 630 1077.7 632C1077.5 634 1078.8 636 1078.9 638C1078.9 640 1077.8 642 1078 644C1078.2 646 1079.2 648 1080 650C1080.7 652 1082 654 1082.5 656C1082.9 658 1082.1 660 1082.5 662C1082.9 664 1084.8 666 1085.1 668C1085.4 670 1084.6 672 1084.1 674C1083.6 676 1082.3 679 1081.9 680" fill="none" stroke="#a3cfe2" stroke-width="1.7" stroke-linecap="round" stroke-linejoin="round"/>
<path d="M1082.5 656C1082.5 657 1082.1 660 1082.5 662C1082.9 664 1084.8 666 1085.1 668C1085.4 670 1084.6 672 1084.1 674C1083.6 676 1082.3 679 1081.9 680" fill="none" stroke="#a3cfe2" stroke-width="4.5" stroke-linecap="round" stroke-linejoin="round"/>
<path d="M1080 650C1079.3 649.2 1077 647 1076 645C1075 643 1074.1 640.2 1074 638C1073.8 635.8 1074.8 633 1075 632" fill="none" stroke="#a3cfe2" stroke-width="1" stroke-linecap="round"/>
<path d="M1086.2 592.7C1086.1 593.7 1085.7 596.7 1085.7 598.7C1085.8 600.7 1086.5 602.7 1086.3 604.7C1086.1 606.7 1085.2 608.7 1084.5 610.7C1083.8 612.7 1082.2 614.7 1082.2 616.7C1082.1 618.7 1083.9 620.7 1084.1 622.7C1084.2 624.7 1082.9 626.7 1083.1 628.7C1083.3 630.7 1084.7 632.7 1085.5 634.7C1086.2 636.7 1087.3 638.7 1087.5 640.7C1087.8 642.7 1087.1 644.7 1086.9 646.7C1086.8 648.7 1086.7 650.7 1086.7 652.7C1086.7 654.7 1086.7 656.7 1086.8 658.7C1087 660.7 1087.3 662.7 1087.6 664.7C1087.8 666.7 1087.9 668.7 1088.1 670.7C1088.2 672.7 1088.3 675.7 1088.4 676.7" fill="none" stroke="#a3cfe2" stroke-width="1.7" stroke-linecap="round" stroke-linejoin="round"/>
<path d="M1086.9 646.7C1086.9 647.7 1086.7 650.7 1086.7 652.7C1086.7 654.7 1086.7 656.7 1086.8 658.7C1087 660.7 1087.3 662.7 1087.6 664.7C1087.8 666.7 1087.9 668.7 1088.1 670.7C1088.2 672.7 1088.3 675.7 1088.4 676.7" fill="none" stroke="#a3cfe2" stroke-width="4.2" stroke-linecap="round" stroke-linejoin="round"/>
<path d="M1087.5 640.7C1088.2 639.9 1090.5 637.7 1091.5 635.7C1092.5 633.7 1093.4 630.9 1093.5 628.7C1093.7 626.5 1092.7 623.7 1092.5 622.7" fill="none" stroke="#a3cfe2" stroke-width="1" stroke-linecap="round"/>
<path d="M1097.2 595.4C1097.1 596.4 1096.7 599.4 1096.8 601.4C1096.9 603.4 1098 605.4 1098 607.4C1097.9 609.4 1097 611.4 1096.6 613.4C1096.2 615.4 1095.3 617.4 1095.6 619.4C1095.8 621.4 1097.6 623.4 1098 625.4C1098.5 627.4 1098.1 629.4 1098.1 631.4C1098.2 633.4 1098.8 635.4 1098.4 637.4C1098 639.4 1096.4 641.4 1095.9 643.4C1095.4 645.4 1095.4 647.4 1095.4 649.4C1095.4 651.4 1096.2 653.4 1095.8 655.4C1095.5 657.4 1093.7 659.4 1093.3 661.4C1093 663.4 1093.7 665.4 1093.9 667.4C1094.2 669.4 1094.9 671.4 1094.6 673.4C1094.4 675.4 1092.7 678.4 1092.3 679.4" fill="none" stroke="#a3cfe2" stroke-width="1.8" stroke-linecap="round" stroke-linejoin="round"/>
<path d="M1095.4 649.4C1095.5 650.4 1096.2 653.4 1095.8 655.4C1095.5 657.4 1093.7 659.4 1093.3 661.4C1093 663.4 1093.7 665.4 1093.9 667.4C1094.2 669.4 1094.9 671.4 1094.6 673.4C1094.4 675.4 1092.7 678.4 1092.3 679.4" fill="none" stroke="#a3cfe2" stroke-width="3.6" stroke-linecap="round" stroke-linejoin="round"/>
<path d="M1098 607.4C1098.6 606.5 1101 604.4 1102 602.4C1103 600.4 1103.8 597.5 1104 595.4C1104.1 593.2 1103.1 590.4 1103 589.4" fill="none" stroke="#a3cfe2" stroke-width="1" stroke-linecap="round"/>
<path d="M1102.6 597.2C1102.4 598.2 1101.7 601.2 1101.8 603.2C1101.8 605.2 1102.5 607.2 1102.9 609.2C1103.3 611.2 1104.3 613.2 1104.1 615.2C1103.9 617.2 1102.4 619.2 1101.6 621.2C1100.8 623.2 1099.6 625.2 1099.3 627.2C1099.1 629.2 1099.7 631.2 1100.3 633.2C1100.8 635.2 1102.5 637.2 1102.7 639.2C1102.9 641.2 1101.6 643.2 1101.4 645.2C1101.1 647.2 1101.1 649.2 1101.1 651.2C1101.2 653.2 1101.7 655.2 1101.6 657.2C1101.6 659.2 1101 661.2 1100.7 663.2C1100.4 665.2 1100.3 667.2 1100 669.2C1099.7 671.2 1099.2 674.2 1099 675.2" fill="none" stroke="#a3cfe2" stroke-width="1.4" stroke-linecap="round" stroke-linejoin="round"/>
<path d="M1101.4 645.2C1101.3 646.2 1101.1 649.2 1101.1 651.2C1101.2 653.2 1101.7 655.2 1101.6 657.2C1101.6 659.2 1101 661.2 1100.7 663.2C1100.4 665.2 1100.3 667.2 1100 669.2C1099.7 671.2 1099.2 674.2 1099 675.2" fill="none" stroke="#a3cfe2" stroke-width="3.7" stroke-linecap="round" stroke-linejoin="round"/>
<path d="M1102.7 639.2C1103.3 638.4 1105.7 636.2 1106.7 634.2C1107.7 632.2 1108.5 629.4 1108.7 627.2C1108.8 625 1107.8 622.2 1107.7 621.2" fill="none" stroke="#a3cfe2" stroke-width="1" stroke-linecap="round"/>
<path d="M1110.4 582.3C1110.3 583.3 1109.6 586.3 1109.7 588.3C1109.9 590.3 1111.3 592.3 1111.2 594.3C1111 596.3 1109 598.3 1108.7 600.3C1108.3 602.3 1108.8 604.3 1109.1 606.3C1109.3 608.3 1110.2 610.3 1110.3 612.3C1110.3 614.3 1109.7 616.3 1109.3 618.3C1108.9 620.3 1107.8 622.3 1107.9 624.3C1107.9 626.3 1109.4 628.3 1109.4 630.3C1109.5 632.3 1108.6 634.3 1108.1 636.3C1107.6 638.3 1106.8 640.3 1106.4 642.3C1106.1 644.3 1106 646.3 1106.1 648.3C1106.2 650.3 1107.3 652.3 1107.1 654.3C1107 656.3 1105.6 658.3 1105.1 660.3C1104.6 662.3 1104.4 664.3 1104.1 666.3C1103.8 668.3 1103.1 670.3 1103.3 672.3C1103.4 674.3 1104.7 677.3 1105 678.3" fill="none" stroke="#a3cfe2" stroke-width="1.5" stroke-linecap="round" stroke-linejoin="round"/>
<path d="M1106.4 642.3C1106.4 643.3 1106 646.3 1106.1 648.3C1106.2 650.3 1107.3 652.3 1107.1 654.3C1107 656.3 1105.6 658.3 1105.1 660.3C1104.6 662.3 1104.4 664.3 1104.1 666.3C1103.8 668.3 1103.1 670.3 1103.3 672.3C1103.4 674.3 1104.7 677.3 1105 678.3" fill="none" stroke="#a3cfe2" stroke-width="4.1" stroke-linecap="round" stroke-linejoin="round"/>
<path d="M1106.1 648.3C1106.8 647.5 1109.1 645.3 1110.1 643.3C1111.1 641.3 1111.9 638.5 1112.1 636.3C1112.3 634.1 1111.3 631.3 1111.1 630.3" fill="none" stroke="#a3cfe2" stroke-width="1" stroke-linecap="round"/>
<path d="M1118.7 574C1118.6 575 1117.9 578 1117.9 580C1117.9 582 1118.2 584 1118.7 586C1119.1 588 1120.4 590 1120.7 592C1120.9 594 1120.7 596 1120.4 598C1120.1 600 1119.5 602 1119 604C1118.4 606 1117.3 608 1117 610C1116.7 612 1117.4 614 1117.2 616C1116.9 618 1115.5 620 1115.5 622C1115.5 624 1116.6 626 1117.1 628C1117.7 630 1118.9 632 1118.9 634C1118.9 636 1117.7 638 1117.3 640C1116.8 642 1116 644 1116.1 646C1116.2 648 1117.3 650 1117.7 652C1118.1 654 1118.1 656 1118.4 658C1118.8 660 1119.9 662 1120 664C1120.2 666 1119.7 668 1119.2 670C1118.8 672 1117.6 675 1117.3 676" fill="none" stroke="#a3cfe2" stroke-width="1.4" stroke-linecap="round" stroke-linejoin="round"/>
<path d="M1118.9 634C1118.6 635 1117.7 638 1117.3 640C1116.8 642 1116 644 1116.1 646C1116.2 648 1117.3 650 1117.7 652C1118.1 654 1118.1 656 1118.4 658C1118.8 660 1119.9 662 1120 664C1120.2 666 1119.7 668 1119.2 670C1118.8 672 1117.6 675 1117.3 676" fill="none" stroke="#a3cfe2" stroke-width="3.3" stroke-linecap="round" stroke-linejoin="round"/>
<path d="M1118.7 586C1118 585.2 1115.7 583 1114.7 581C1113.7 579 1112.8 576.2 1112.7 574C1112.5 571.9 1113.5 569 1113.7 568" fill="none" stroke="#a3cfe2" stroke-width="1" stroke-linecap="round"/>
<path d="M1125.8 573C1125.6 574 1125.2 577 1125 579C1124.8 581 1124.7 583 1124.5 585C1124.4 587 1124.3 589 1124.1 591C1124 593 1123.4 595 1123.7 597C1123.9 599 1125.8 601 1125.8 603C1125.9 605 1124.8 607 1124.1 609C1123.3 611 1121.5 613 1121.5 615C1121.4 617 1123.1 619 1123.8 621C1124.5 623 1125 625 1125.8 627C1126.5 629 1127.9 631 1128.3 633C1128.7 635 1127.6 637 1128 639C1128.3 641 1129.5 643 1130.3 645C1131.1 647 1132.4 649 1132.5 651C1132.6 653 1131.1 655 1131.1 657C1131 659 1131.8 661 1132.3 663C1132.9 665 1133.7 667 1134.1 669C1134.5 671 1134.8 674 1134.9 675" fill="none" stroke="#a3cfe2" stroke-width="1.6" stroke-linecap="round" stroke-linejoin="round"/>
<path d="M1128.3 633C1128.2 634 1127.6 637 1128 639C1128.3 641 1129.5 643 1130.3 645C1131.1 647 1132.4 649 1132.5 651C1132.6 653 1131.1 655 1131.1 657C1131 659 1131.8 661 1132.3 663C1132.9 665 1133.7 667 1134.1 669C1134.5 671 1134.8 674 1134.9 675" fill="none" stroke="#a3cfe2" stroke-width="3.6" stroke-linecap="round" stroke-linejoin="round"/>
<path d="M1121.5 615C1120.8 614.2 1118.5 612 1117.5 610C1116.5 608 1115.6 605.2 1115.5 603C1115.3 600.8 1116.3 598 1116.5 597" fill="none" stroke="#a3cfe2" stroke-width="1" stroke-linecap="round"/>
<path d="M1131.1 572.1C1130.8 573.1 1130.2 576.1 1129.6 578.1C1129 580.1 1127.7 582.1 1127.4 584.1C1127.1 586.1 1128 588.1 1127.9 590.1C1127.7 592.1 1126.7 594.1 1126.7 596.1C1126.8 598.1 1128.5 600.1 1128.4 602.1C1128.2 604.1 1126 606.1 1126 608.1C1125.9 610.1 1127.6 612.1 1128.1 614.1C1128.6 616.1 1128.6 618.1 1129.1 620.1C1129.6 622.1 1130.6 624.1 1131.3 626.1C1132 628.1 1132.7 630.1 1133.4 632.1C1134.1 634.1 1135 636.1 1135.4 638.1C1135.9 640.1 1136.2 642.1 1135.8 644.1C1135.5 646.1 1133.5 648.1 1133.3 650.1C1133.1 652.1 1134.7 654.1 1134.6 656.1C1134.5 658.1 1133.3 660.1 1132.9 662.1C1132.4 664.1 1131.9 666.1 1131.8 668.1C1131.8 670.1 1132.5 672.1 1132.7 674.1C1132.9 676.1 1132.8 679.1 1132.8 680.1" fill="none" stroke="#a3cfe2" stroke-width="1.5" stroke-linecap="round" stroke-linejoin="round"/>
<path d="M1135.4 638.1C1135.5 639.1 1136.2 642.1 1135.8 644.1C1135.5 646.1 1133.5 648.1 1133.3 650.1C1133.1 652.1 1134.7 654.1 1134.6 656.1C1134.5 658.1 1133.3 660.1 1132.9 662.1C1132.4 664.1 1131.9 666.1 1131.8 668.1C1131.8 670.1 1132.5 672.1 1132.7 674.1C1132.9 676.1 1132.8 679.1 1132.8 680.1" fill="none" stroke="#a3cfe2" stroke-width="4.7" stroke-linecap="round" stroke-linejoin="round"/>
<path d="M1133.4 632.1C1132.7 631.2 1130.4 629.1 1129.4 627.1C1128.4 625.1 1127.5 622.2 1127.4 620.1C1127.2 617.9 1128.2 615.1 1128.4 614.1" fill="none" stroke="#a3cfe2" stroke-width="1" stroke-linecap="round"/>
<path d="M1141 574.2C1140.8 575.2 1140.5 578.2 1140.1 580.2C1139.8 582.2 1138.7 584.2 1138.8 586.2C1138.9 588.2 1140.4 590.2 1140.7 592.2C1141 594.2 1140.4 596.2 1140.6 598.2C1140.8 600.2 1142 602.2 1142.1 604.2C1142.2 606.2 1141.7 608.2 1141.3 610.2C1140.9 612.2 1140 614.2 1139.7 616.2C1139.5 618.2 1139.6 620.2 1139.9 622.2C1140.2 624.2 1141.6 626.2 1141.6 628.2C1141.5 630.2 1139.9 632.2 1139.8 634.2C1139.8 636.2 1140.7 638.2 1141.4 640.2C1142 642.2 1142.9 644.2 1143.6 646.2C1144.2 648.2 1144.6 650.2 1145.1 652.2C1145.7 654.2 1147 656.2 1146.8 658.2C1146.7 660.2 1144.6 662.2 1144.3 664.2C1144 666.2 1144.5 668.2 1144.9 670.2C1145.4 672.2 1146.5 675.2 1146.8 676.2" fill="none" stroke="#a3cfe2" stroke-width="1.1" stroke-linecap="round" stroke-linejoin="round"/>
<path d="M1139.8 634.2C1140.1 635.2 1140.7 638.2 1141.4 640.2C1142 642.2 1142.9 644.2 1143.6 646.2C1144.2 648.2 1144.6 650.2 1145.1 652.2C1145.7 654.2 1147 656.2 1146.8 658.2C1146.7 660.2 1144.6 662.2 1144.3 664.2C1144 666.2 1144.5 668.2 1144.9 670.2C1145.4 672.2 1146.5 675.2 1146.8 676.2" fill="none" stroke="#a3cfe2" stroke-width="2.9" stroke-linecap="round" stroke-linejoin="round"/>
<path d="M1138.8 586.2C1138.2 585.4 1135.8 583.2 1134.8 581.2C1133.8 579.2 1133 576.4 1132.8 574.2C1132.7 572 1133.7 569.2 1133.8 568.2" fill="none" stroke="#a3cfe2" stroke-width="1" stroke-linecap="round"/>
<path d="M1145.6 562C1145.6 563 1145.8 566 1145.7 568C1145.7 570 1145.4 572 1145.3 574C1145.2 576 1145 578 1145.2 580C1145.4 582 1146.8 584 1146.6 586C1146.4 588 1144.9 590 1144 592C1143.2 594 1142.4 596 1141.7 598C1141 600 1140.4 602 1139.8 604C1139.1 606 1138.5 608 1137.8 610C1137.1 612 1135.5 614 1135.6 616C1135.6 618 1137.3 620 1138.1 622C1138.8 624 1139.9 626 1139.9 628C1139.8 630 1138.1 632 1137.7 634C1137.4 636 1137.9 638 1137.8 640C1137.6 642 1137.1 644 1136.8 646C1136.5 648 1136.1 650 1135.8 652C1135.5 654 1135.1 656 1135.1 658C1135.1 660 1135.6 662 1135.8 664C1136 666 1136.3 668 1136.3 670C1136.2 672 1135.7 675 1135.5 676" fill="none" stroke="#a3cfe2" stroke-width="1.2" stroke-linecap="round" stroke-linejoin="round"/>
<path d="M1139.9 628C1139.5 629 1138.1 632 1137.7 634C1137.4 636 1137.9 638 1137.8 640C1137.6 642 1137.1 644 1136.8 646C1136.5 648 1136.1 650 1135.8 652C1135.5 654 1135.1 656 1135.1 658C1135.1 660 1135.6 662 1135.8 664C1136 666 1136.3 668 1136.3 670C1136.2 672 1135.7 675 1135.5 676" fill="none" stroke="#a3cfe2" stroke-width="3.9" stroke-linecap="round" stroke-linejoin="round"/>
<path d="M1139.8 604C1139.1 603.2 1136.8 601 1135.8 599C1134.8 597 1133.9 594.2 1133.8 592C1133.6 589.9 1134.6 587 1134.8 586" fill="none" stroke="#a3cfe2" stroke-width="1" stroke-linecap="round"/>
<path d="M1153.1 553.9C1153.2 554.9 1153.2 557.9 1153.4 559.9C1153.6 561.9 1154.4 563.9 1154.5 565.9C1154.6 567.9 1154.4 569.9 1153.9 571.9C1153.4 573.9 1152.4 575.9 1151.7 577.9C1151.1 579.9 1150.4 581.9 1150 583.9C1149.7 585.9 1149.4 587.9 1149.4 589.9C1149.4 591.9 1149.6 593.9 1149.9 595.9C1150.3 597.9 1151.3 599.9 1151.4 601.9C1151.5 603.9 1150.6 605.9 1150.8 607.9C1150.9 609.9 1152 611.9 1152.3 613.9C1152.7 615.9 1152.9 617.9 1153 619.9C1153 621.9 1152.8 623.9 1152.6 625.9C1152.5 627.9 1152.1 629.9 1152 631.9C1151.9 633.9 1151.8 635.9 1151.9 637.9C1152.1 639.9 1152.9 641.9 1153 643.9C1153.1 645.9 1152.5 647.9 1152.6 649.9C1152.7 651.9 1153.5 653.9 1153.6 655.9C1153.7 657.9 1153.6 659.9 1153.4 661.9C1153.1 663.9 1152.3 665.9 1152.1 667.9C1151.9 669.9 1152.1 671.9 1152.3 673.9C1152.5 675.9 1153.1 678.9 1153.3 679.9" fill="none" stroke="#a3cfe2" stroke-width="1.1" stroke-linecap="round" stroke-linejoin="round"/>
<path d="M1152 631.9C1152 632.9 1151.8 635.9 1151.9 637.9C1152.1 639.9 1152.9 641.9 1153 643.9C1153.1 645.9 1152.5 647.9 1152.6 649.9C1152.7 651.9 1153.5 653.9 1153.6 655.9C1153.7 657.9 1153.6 659.9 1153.4 661.9C1153.1 663.9 1152.3 665.9 1152.1 667.9C1151.9 669.9 1152.1 671.9 1152.3 673.9C1152.5 675.9 1153.1 678.9 1153.3 679.9" fill="none" stroke="#a3cfe2" stroke-width="2.9" stroke-linecap="round" stroke-linejoin="round"/>
<path d="M1149.9 595.9C1150.6 595 1152.9 592.9 1153.9 590.9C1154.9 588.9 1155.8 586 1155.9 583.9C1156.1 581.7 1155.1 578.9 1154.9 577.9" fill="none" stroke="#a3cfe2" stroke-width="1" stroke-linecap="round"/>
<path d="M1160.8 521C1161.1 522 1162.1 525 1162.8 527C1163.5 529 1164.8 531 1165 533C1165.3 535 1164.2 537 1164.4 539C1164.6 541 1165.9 543 1166.5 545C1167.1 547 1167.9 549 1168 551C1168 553 1167 555 1166.7 557C1166.5 559 1166.9 561 1166.5 563C1166.2 565 1164.6 567 1164.6 569C1164.5 571 1165.8 573 1166.2 575C1166.6 577 1166.6 579 1167.1 581C1167.5 583 1168.5 585 1169.1 587C1169.7 589 1170.2 591 1170.6 593C1171 595 1171.1 597 1171.5 599C1171.8 601 1172.4 603 1172.7 605C1172.9 607 1173.3 609 1173 611C1172.7 613 1171.2 615 1171 617C1170.7 619 1171.8 621 1171.4 623C1171.1 625 1169.6 627 1168.8 629C1168.1 631 1167.1 633 1167 635C1166.9 637 1168.6 639 1168.4 641C1168.2 643 1166.8 645 1166 647C1165.3 649 1164.6 651 1163.9 653C1163.2 655 1161.8 657 1161.8 659C1161.8 661 1163.8 663 1163.8 665C1163.9 667 1162.8 669 1162.1 671C1161.4 673 1160.1 676 1159.7 677" fill="none" stroke="#a3cfe2" stroke-width="2.0" stroke-linecap="round" stroke-linejoin="round"/>
<path d="M1173 611C1172.7 612 1171.2 615 1171 617C1170.7 619 1171.8 621 1171.4 623C1171.1 625 1169.6 627 1168.8 629C1168.1 631 1167.1 633 1167 635C1166.9 637 1168.6 639 1168.4 641C1168.2 643 1166.8 645 1166 647C1165.3 649 1164.6 651 1163.9 653C1163.2 655 1161.8 657 1161.8 659C1161.8 661 1163.8 663 1163.8 665C1163.9 667 1162.8 669 1162.1 671C1161.4 673 1160.1 676 1159.7 677" fill="none" stroke="#a3cfe2" stroke-width="4.5" stroke-linecap="round" stroke-linejoin="round"/>
<path d="M1164.4 539C1163.7 538.2 1161.4 536 1160.4 534C1159.4 532 1158.6 529.2 1158.4 527C1158.2 524.9 1159.2 522 1159.4 521" fill="none" stroke="#a3cfe2" stroke-width="1" stroke-linecap="round"/>
<path d="M1166.9 533.7C1167 534.7 1167.3 537.7 1167.8 539.7C1168.2 541.7 1168.9 543.7 1169.5 545.7C1170.2 547.7 1171.4 549.7 1171.9 551.7C1172.3 553.7 1172 555.7 1172.3 557.7C1172.6 559.7 1174 561.7 1173.9 563.7C1173.7 565.7 1171.6 567.7 1171.4 569.7C1171.3 571.7 1172.6 573.7 1172.8 575.7C1173.1 577.7 1172.7 579.7 1172.9 581.7C1173.1 583.7 1174.2 585.7 1174 587.7C1173.9 589.7 1172.1 591.7 1172 593.7C1171.8 595.7 1172.7 597.7 1173.3 599.7C1173.9 601.7 1175.5 603.7 1175.5 605.7C1175.5 607.7 1173.8 609.7 1173.2 611.7C1172.7 613.7 1172.4 615.7 1172.3 617.7C1172.2 619.7 1172.3 621.7 1172.7 623.7C1173 625.7 1174.3 627.7 1174.4 629.7C1174.4 631.7 1173.5 633.7 1173 635.7C1172.5 637.7 1171.8 639.7 1171.4 641.7C1170.9 643.7 1170.2 645.7 1170.1 647.7C1169.9 649.7 1170.3 651.7 1170.7 653.7C1171 655.7 1171.8 657.7 1172 659.7C1172.1 661.7 1171.6 663.7 1171.4 665.7C1171.2 667.7 1170.9 669.7 1170.7 671.7C1170.5 673.7 1170.3 676.7 1170.2 677.7" fill="none" stroke="#a3cfe2" stroke-width="1.4" stroke-linecap="round" stroke-linejoin="round"/>
<path d="M1172.3 617.7C1172.4 618.7 1172.3 621.7 1172.7 623.7C1173 625.7 1174.3 627.7 1174.4 629.7C1174.4 631.7 1173.5 633.7 1173 635.7C1172.5 637.7 1171.8 639.7 1171.4 641.7C1170.9 643.7 1170.2 645.7 1170.1 647.7C1169.9 649.7 1170.3 651.7 1170.7 653.7C1171 655.7 1171.8 657.7 1172 659.7C1172.1 661.7 1171.6 663.7 1171.4 665.7C1171.2 667.7 1170.9 669.7 1170.7 671.7C1170.5 673.7 1170.3 676.7 1170.2 677.7" fill="none" stroke="#a3cfe2" stroke-width="3.7" stroke-linecap="round" stroke-linejoin="round"/>
<path d="M1175.5 605.7C1176.2 604.8 1178.5 602.7 1179.5 600.7C1180.5 598.7 1181.4 595.8 1181.5 593.7C1181.7 591.5 1180.7 588.7 1180.5 587.7" fill="none" stroke="#a3cfe2" stroke-width="1" stroke-linecap="round"/>
<path d="M1175.4 513.6C1175.4 514.6 1175 517.6 1175.4 519.6C1175.8 521.6 1177.5 523.6 1177.8 525.6C1178.2 527.6 1177.2 529.6 1177.4 531.6C1177.5 533.6 1178.7 535.6 1178.7 537.6C1178.6 539.6 1177 541.6 1176.9 543.6C1176.8 545.6 1177.5 547.6 1177.9 549.6C1178.3 551.6 1178.9 553.6 1179.2 555.6C1179.6 557.6 1180 559.6 1180.1 561.6C1180.3 563.6 1180.2 565.6 1180.2 567.6C1180.2 569.6 1180 571.6 1180.1 573.6C1180.2 575.6 1180.4 577.6 1180.9 579.6C1181.3 581.6 1182.9 583.6 1182.9 585.6C1183 587.6 1181.8 589.6 1181.1 591.6C1180.5 593.6 1179.2 595.6 1179 597.6C1178.9 599.6 1179.7 601.6 1180.3 603.6C1180.9 605.6 1182.1 607.6 1182.5 609.6C1182.9 611.6 1182.6 613.6 1182.6 615.6C1182.5 617.6 1182.1 619.6 1182.3 621.6C1182.4 623.6 1183.5 625.6 1183.4 627.6C1183.3 629.6 1182.3 631.6 1181.8 633.6C1181.3 635.6 1181 637.6 1180.6 639.6C1180.1 641.6 1179.2 643.6 1179 645.6C1178.8 647.6 1179.5 649.6 1179.4 651.6C1179.4 653.6 1178.9 655.6 1178.5 657.6C1178.1 659.6 1177.2 661.6 1177.1 663.6C1177 665.6 1177.5 667.6 1178.1 669.6C1178.6 671.6 1180.1 674.6 1180.4 675.6" fill="none" stroke="#a3cfe2" stroke-width="1.4" stroke-linecap="round" stroke-linejoin="round"/>
<path d="M1182.5 609.6C1182.5 610.6 1182.6 613.6 1182.6 615.6C1182.5 617.6 1182.1 619.6 1182.3 621.6C1182.4 623.6 1183.5 625.6 1183.4 627.6C1183.3 629.6 1182.3 631.6 1181.8 633.6C1181.3 635.6 1181 637.6 1180.6 639.6C1180.1 641.6 1179.2 643.6 1179 645.6C1178.8 647.6 1179.5 649.6 1179.4 651.6C1179.4 653.6 1178.9 655.6 1178.5 657.6C1178.1 659.6 1177.2 661.6 1177.1 663.6C1177 665.6 1177.5 667.6 1178.1 669.6C1178.6 671.6 1180.1 674.6 1180.4 675.6" fill="none" stroke="#a3cfe2" stroke-width="2.9" stroke-linecap="round" stroke-linejoin="round"/>
<path d="M1178.5 657.6C1177.8 656.8 1175.5 654.6 1174.5 652.6C1173.5 650.6 1172.7 647.8 1172.5 645.6C1172.3 643.5 1173.3 640.6 1173.5 639.6" fill="none" stroke="#a3cfe2" stroke-width="1" stroke-linecap="round"/>
<path d="M1183.8 524.1C1184.1 525.1 1185.3 528.1 1185.7 530.1C1186 532.1 1186.2 534.1 1186.1 536.1C1186 538.1 1185.3 540.1 1184.9 542.1C1184.4 544.1 1184.1 546.1 1183.4 548.1C1182.8 550.1 1181.4 552.1 1180.9 554.1C1180.5 556.1 1181 558.1 1180.8 560.1C1180.7 562.1 1180.6 564.1 1180.2 566.1C1179.8 568.1 1178.9 570.1 1178.5 572.1C1178.1 574.1 1178.1 576.1 1177.8 578.1C1177.5 580.1 1176.8 582.1 1176.9 584.1C1177 586.1 1178.4 588.1 1178.3 590.1C1178.2 592.1 1176.3 594.1 1176.4 596.1C1176.6 598.1 1178.6 600.1 1179 602.1C1179.4 604.1 1178.8 606.1 1178.9 608.1C1179 610.1 1179.3 612.1 1179.4 614.1C1179.5 616.1 1179 618.1 1179.2 620.1C1179.5 622.1 1180.4 624.1 1181 626.1C1181.5 628.1 1182.3 630.1 1182.7 632.1C1183 634.1 1182.9 636.1 1182.9 638.1C1183 640.1 1182.7 642.1 1182.9 644.1C1183 646.1 1183.5 648.1 1184 650.1C1184.5 652.1 1185.6 654.1 1185.9 656.1C1186.1 658.1 1185.2 660.1 1185.3 662.1C1185.5 664.1 1185.9 666.1 1186.5 668.1C1187.2 670.1 1188.6 672.1 1188.9 674.1C1189.3 676.1 1188.8 679.1 1188.8 680.1" fill="none" stroke="#a3cfe2" stroke-width="1.3" stroke-linecap="round" stroke-linejoin="round"/>
<path d="M1179.4 614.1C1179.4 615.1 1179 618.1 1179.2 620.1C1179.5 622.1 1180.4 624.1 1181 626.1C1181.5 628.1 1182.3 630.1 1182.7 632.1C1183 634.1 1182.9 636.1 1182.9 638.1C1183 640.1 1182.7 642.1 1182.9 644.1C1183 646.1 1183.5 648.1 1184 650.1C1184.5 652.1 1185.6 654.1 1185.9 656.1C1186.1 658.1 1185.2 660.1 1185.3 662.1C1185.5 664.1 1185.9 666.1 1186.5 668.1C1187.2 670.1 1188.6 672.1 1188.9 674.1C1189.3 676.1 1188.8 679.1 1188.8 680.1" fill="none" stroke="#a3cfe2" stroke-width="3.3" stroke-linecap="round" stroke-linejoin="round"/>
<path d="M1184.9 542.1C1185.6 541.3 1187.9 539.1 1188.9 537.1C1189.9 535.1 1190.7 532.3 1190.9 530.1C1191.1 528 1190.1 525.1 1189.9 524.1" fill="none" stroke="#a3cfe2" stroke-width="1" stroke-linecap="round"/>
<path d="M1189.2 533.5C1189.4 534.5 1189.6 537.5 1190.2 539.5C1190.7 541.5 1191.8 543.5 1192.5 545.5C1193.2 547.5 1194.3 549.5 1194.4 551.5C1194.5 553.5 1193.5 555.5 1193 557.5C1192.5 559.5 1191.9 561.5 1191.4 563.5C1190.9 565.5 1190.6 567.5 1190.2 569.5C1189.7 571.5 1188.6 573.5 1188.5 575.5C1188.4 577.5 1189.1 579.5 1189.6 581.5C1190.1 583.5 1190.8 585.5 1191.5 587.5C1192.1 589.5 1193.4 591.5 1193.5 593.5C1193.7 595.5 1192.2 597.5 1192.3 599.5C1192.4 601.5 1194 603.5 1194.2 605.5C1194.3 607.5 1193.4 609.5 1193.2 611.5C1193 613.5 1192.7 615.5 1192.8 617.5C1192.9 619.5 1194.2 621.5 1194 623.5C1193.8 625.5 1192.6 627.5 1191.8 629.5C1191.1 631.5 1189.8 633.5 1189.7 635.5C1189.7 637.5 1191.3 639.5 1191.5 641.5C1191.6 643.5 1190.7 645.5 1190.4 647.5C1190.1 649.5 1189.7 651.5 1189.6 653.5C1189.6 655.5 1189.8 657.5 1190 659.5C1190.3 661.5 1191.2 663.5 1191 665.5C1190.7 667.5 1189 669.5 1188.4 671.5C1187.8 673.5 1187.7 676.5 1187.5 677.5" fill="none" stroke="#a3cfe2" stroke-width="1.5" stroke-linecap="round" stroke-linejoin="round"/>
<path d="M1192.8 617.5C1193 618.5 1194.2 621.5 1194 623.5C1193.8 625.5 1192.6 627.5 1191.8 629.5C1191.1 631.5 1189.8 633.5 1189.7 635.5C1189.7 637.5 1191.3 639.5 1191.5 641.5C1191.6 643.5 1190.7 645.5 1190.4 647.5C1190.1 649.5 1189.7 651.5 1189.6 653.5C1189.6 655.5 1189.8 657.5 1190 659.5C1190.3 661.5 1191.2 663.5 1191 665.5C1190.7 667.5 1189 669.5 1188.4 671.5C1187.8 673.5 1187.7 676.5 1187.5 677.5" fill="none" stroke="#a3cfe2" stroke-width="4.0" stroke-linecap="round" stroke-linejoin="round"/>
<path d="M1191.5 587.5C1190.8 586.6 1188.5 584.5 1187.5 582.5C1186.5 580.5 1185.6 577.6 1185.5 575.5C1185.3 573.3 1186.3 570.5 1186.5 569.5" fill="none" stroke="#a3cfe2" stroke-width="1" stroke-linecap="round"/>
<path d="M1197.5 520.5C1197.6 521.5 1197.5 524.5 1198 526.5C1198.5 528.5 1200.1 530.5 1200.4 532.5C1200.7 534.5 1199.8 536.5 1199.8 538.5C1199.7 540.5 1200.3 542.5 1200 544.5C1199.7 546.5 1198.6 548.5 1198 550.5C1197.5 552.5 1196.9 554.5 1196.9 556.5C1196.8 558.5 1197.9 560.5 1197.7 562.5C1197.5 564.5 1195.7 566.5 1195.7 568.5C1195.7 570.5 1197 572.5 1197.7 574.5C1198.4 576.5 1199.8 578.5 1199.9 580.5C1199.9 582.5 1197.7 584.5 1197.8 586.5C1197.8 588.5 1199.8 590.5 1200 592.5C1200.3 594.5 1199.3 596.5 1199.4 598.5C1199.5 600.5 1200.4 602.5 1200.8 604.5C1201.3 606.5 1202.1 608.5 1202.1 610.5C1202.2 612.5 1201.1 614.5 1201.1 616.5C1201.1 618.5 1201.7 620.5 1202 622.5C1202.3 624.5 1202.4 626.5 1202.8 628.5C1203.2 630.5 1204.3 632.5 1204.4 634.5C1204.5 636.5 1203.2 638.5 1203.2 640.5C1203.2 642.5 1203.9 644.5 1204.5 646.5C1205.1 648.5 1206.3 650.5 1206.9 652.5C1207.4 654.5 1207.6 656.5 1207.8 658.5C1208 660.5 1208.3 662.5 1208 664.5C1207.7 666.5 1206.3 668.5 1206 670.5C1205.6 672.5 1205.9 675.5 1205.9 676.5" fill="none" stroke="#a3cfe2" stroke-width="1.4" stroke-linecap="round" stroke-linejoin="round"/>
<path d="M1202.1 610.5C1202 611.5 1201.1 614.5 1201.1 616.5C1201.1 618.5 1201.7 620.5 1202 622.5C1202.3 624.5 1202.4 626.5 1202.8 628.5C1203.2 630.5 1204.3 632.5 1204.4 634.5C1204.5 636.5 1203.2 638.5 1203.2 640.5C1203.2 642.5 1203.9 644.5 1204.5 646.5C1205.1 648.5 1206.3 650.5 1206.9 652.5C1207.4 654.5 1207.6 656.5 1207.8 658.5C1208 660.5 1208.3 662.5 1208 664.5C1207.7 666.5 1206.3 668.5 1206 670.5C1205.6 672.5 1205.9 675.5 1205.9 676.5" fill="none" stroke="#a3cfe2" stroke-width="3.1" stroke-linecap="round" stroke-linejoin="round"/>
<path d="M1202 622.5C1201.3 621.7 1199 619.5 1198 617.5C1197 615.5 1196.2 612.7 1196 610.5C1195.8 608.3 1196.8 605.5 1197 604.5" fill="none" stroke="#a3cfe2" stroke-width="1" stroke-linecap="round"/>
<path d="M1205.8 534.9C1205.8 535.9 1206.3 538.9 1206.1 540.9C1205.9 542.9 1204.6 544.9 1204.5 546.9C1204.3 548.9 1205 550.9 1205.2 552.9C1205.5 554.9 1206.1 556.9 1205.9 558.9C1205.7 560.9 1204.2 562.9 1204.2 564.9C1204.3 566.9 1205.8 568.9 1206.3 570.9C1206.7 572.9 1207.3 574.9 1207.1 576.9C1206.9 578.9 1205.1 580.9 1205.1 582.9C1205.2 584.9 1207.3 586.9 1207.4 588.9C1207.4 590.9 1205.9 592.9 1205.5 594.9C1205 596.9 1204.6 598.9 1204.6 600.9C1204.7 602.9 1205.5 604.9 1205.8 606.9C1206 608.9 1206.1 610.9 1206.3 612.9C1206.4 614.9 1206.4 616.9 1206.6 618.9C1206.7 620.9 1207.2 622.9 1207.3 624.9C1207.4 626.9 1207.3 628.9 1207.1 630.9C1206.9 632.9 1206.6 634.9 1206.1 636.9C1205.7 638.9 1205.1 640.9 1204.4 642.9C1203.8 644.9 1202.4 646.9 1202.2 648.9C1202 650.9 1202.9 652.9 1203.3 654.9C1203.7 656.9 1204.4 658.9 1204.6 660.9C1204.9 662.9 1204.6 664.9 1204.9 666.9C1205.1 668.9 1206 670.9 1206.1 672.9C1206.2 674.9 1205.5 677.9 1205.4 678.9" fill="none" stroke="#a3cfe2" stroke-width="1.3" stroke-linecap="round" stroke-linejoin="round"/>
<path d="M1206.6 618.9C1206.7 619.9 1207.2 622.9 1207.3 624.9C1207.4 626.9 1207.3 628.9 1207.1 630.9C1206.9 632.9 1206.6 634.9 1206.1 636.9C1205.7 638.9 1205.1 640.9 1204.4 642.9C1203.8 644.9 1202.4 646.9 1202.2 648.9C1202 650.9 1202.9 652.9 1203.3 654.9C1203.7 656.9 1204.4 658.9 1204.6 660.9C1204.9 662.9 1204.6 664.9 1204.9 666.9C1205.1 668.9 1206 670.9 1206.1 672.9C1206.2 674.9 1205.5 677.9 1205.4 678.9" fill="none" stroke="#a3cfe2" stroke-width="3.1" stroke-linecap="round" stroke-linejoin="round"/>
<path d="M1204.6 660.9C1204 660 1201.6 657.9 1200.6 655.9C1199.6 653.9 1198.8 651 1198.6 648.9C1198.5 646.7 1199.5 643.9 1199.6 642.9" fill="none" stroke="#a3cfe2" stroke-width="1" stroke-linecap="round"/>
<path d="M1211.7 541.2C1211.3 542.2 1209.7 545.2 1209.4 547.2C1209 549.2 1209.6 551.2 1209.4 553.2C1209.2 555.2 1208 557.2 1208.1 559.2C1208.1 561.2 1209.4 563.2 1209.5 565.2C1209.6 567.2 1209 569.2 1208.7 571.2C1208.4 573.2 1208.1 575.2 1207.8 577.2C1207.6 579.2 1207.4 581.2 1207.3 583.2C1207.3 585.2 1207.3 587.2 1207.5 589.2C1207.8 591.2 1208.9 593.2 1209 595.2C1209.1 597.2 1208 599.2 1208.2 601.2C1208.4 603.2 1210 605.2 1210 607.2C1210 609.2 1208.5 611.2 1208 613.2C1207.4 615.2 1207.3 617.2 1206.8 619.2C1206.2 621.2 1205.4 623.2 1204.7 625.2C1204 627.2 1202.8 629.2 1202.7 631.2C1202.6 633.2 1203.7 635.2 1204.1 637.2C1204.6 639.2 1205.4 641.2 1205.3 643.2C1205.2 645.2 1204.2 647.2 1203.7 649.2C1203.1 651.2 1202.4 653.2 1202.1 655.2C1201.7 657.2 1201.5 659.2 1201.6 661.2C1201.8 663.2 1202.4 665.2 1202.9 667.2C1203.4 669.2 1204.1 671.2 1204.5 673.2C1205 675.2 1205.6 678.2 1205.8 679.2" fill="none" stroke="#a3cfe2" stroke-width="1.7" stroke-linecap="round" stroke-linejoin="round"/>
<path d="M1204.7 625.2C1204.4 626.2 1202.8 629.2 1202.7 631.2C1202.6 633.2 1203.7 635.2 1204.1 637.2C1204.6 639.2 1205.4 641.2 1205.3 643.2C1205.2 645.2 1204.2 647.2 1203.7 649.2C1203.1 651.2 1202.4 653.2 1202.1 655.2C1201.7 657.2 1201.5 659.2 1201.6 661.2C1201.8 663.2 1202.4 665.2 1202.9 667.2C1203.4 669.2 1204.1 671.2 1204.5 673.2C1205 675.2 1205.6 678.2 1205.8 679.2" fill="none" stroke="#a3cfe2" stroke-width="3.9" stroke-linecap="round" stroke-linejoin="round"/>
<path d="M1208.7 571.2C1208 570.4 1205.7 568.2 1204.7 566.2C1203.7 564.2 1202.9 561.4 1202.7 559.2C1202.5 557 1203.5 554.2 1203.7 553.2" fill="none" stroke="#a3cfe2" stroke-width="1" stroke-linecap="round"/>
<path d="M1218.1 528.9C1217.8 529.9 1216.7 532.9 1216.5 534.9C1216.3 536.9 1216.6 538.9 1216.6 540.9C1216.7 542.9 1217.2 544.9 1217 546.9C1216.8 548.9 1215.9 550.9 1215.4 552.9C1215 554.9 1214.1 556.9 1214.1 558.9C1214.2 560.9 1215.8 562.9 1215.6 564.9C1215.4 566.9 1213.3 568.9 1213.2 570.9C1213 572.9 1214.1 574.9 1214.7 576.9C1215.3 578.9 1216 580.9 1216.8 582.9C1217.5 584.9 1218.8 586.9 1219.1 588.9C1219.4 590.9 1218.6 592.9 1218.5 594.9C1218.4 596.9 1218.7 598.9 1218.8 600.9C1218.9 602.9 1219 604.9 1219.2 606.9C1219.4 608.9 1219.4 610.9 1219.9 612.9C1220.4 614.9 1221.8 616.9 1222.4 618.9C1223 620.9 1223.4 622.9 1223.4 624.9C1223.3 626.9 1222.2 628.9 1222.3 630.9C1222.5 632.9 1223.9 634.9 1224.2 636.9C1224.5 638.9 1224 640.9 1224.1 642.9C1224.2 644.9 1224.3 646.9 1224.6 648.9C1224.9 650.9 1226 652.9 1225.8 654.9C1225.6 656.9 1223.4 658.9 1223.2 660.9C1223 662.9 1224.3 664.9 1224.6 666.9C1225 668.9 1225.3 670.9 1225.5 672.9C1225.6 674.9 1225.4 677.9 1225.4 678.9" fill="none" stroke="#a3cfe2" stroke-width="1.6" stroke-linecap="round" stroke-linejoin="round"/>
<path d="M1222.4 618.9C1222.5 619.9 1223.4 622.9 1223.4 624.9C1223.3 626.9 1222.2 628.9 1222.3 630.9C1222.5 632.9 1223.9 634.9 1224.2 636.9C1224.5 638.9 1224 640.9 1224.1 642.9C1224.2 644.9 1224.3 646.9 1224.6 648.9C1224.9 650.9 1226 652.9 1225.8 654.9C1225.6 656.9 1223.4 658.9 1223.2 660.9C1223 662.9 1224.3 664.9 1224.6 666.9C1225 668.9 1225.3 670.9 1225.5 672.9C1225.6 674.9 1225.4 677.9 1225.4 678.9" fill="none" stroke="#a3cfe2" stroke-width="4.7" stroke-linecap="round" stroke-linejoin="round"/>
<path d="M1218.5 594.9C1219.2 594 1221.5 591.9 1222.5 589.9C1223.5 587.9 1224.3 585 1224.5 582.9C1224.7 580.7 1223.7 577.9 1223.5 576.9" fill="none" stroke="#a3cfe2" stroke-width="1" stroke-linecap="round"/>
<path d="M1226.6 524.4C1226.7 525.4 1227.2 528.4 1226.8 530.4C1226.4 532.4 1224.8 534.4 1224.4 536.4C1224 538.4 1224.3 540.4 1224.4 542.4C1224.5 544.4 1225.1 546.4 1225.1 548.4C1225.2 550.4 1224.9 552.4 1224.9 554.4C1224.9 556.4 1224.7 558.4 1225.2 560.4C1225.7 562.4 1226.9 564.4 1227.6 566.4C1228.3 568.4 1229.6 570.4 1229.6 572.4C1229.7 574.4 1227.8 576.4 1227.7 578.4C1227.7 580.4 1228.9 582.4 1229.3 584.4C1229.6 586.4 1230.2 588.4 1229.9 590.4C1229.6 592.4 1228.1 594.4 1227.6 596.4C1227 598.4 1227.2 600.4 1226.8 602.4C1226.5 604.4 1226 606.4 1225.4 608.4C1224.8 610.4 1223.6 612.4 1223.2 614.4C1222.9 616.4 1223 618.4 1223.5 620.4C1223.9 622.4 1225.5 624.4 1225.7 626.4C1225.9 628.4 1224.6 630.4 1224.8 632.4C1224.9 634.4 1226.2 636.4 1226.7 638.4C1227.2 640.4 1227.9 642.4 1227.7 644.4C1227.6 646.4 1225.8 648.4 1225.8 650.4C1225.8 652.4 1227.3 654.4 1227.7 656.4C1228.1 658.4 1227.7 660.4 1228.2 662.4C1228.6 664.4 1229.9 666.4 1230.4 668.4C1231 670.4 1231.1 672.4 1231.5 674.4C1231.9 676.4 1232.6 679.4 1232.8 680.4" fill="none" stroke="#a3cfe2" stroke-width="1.4" stroke-linecap="round" stroke-linejoin="round"/>
<path d="M1223.2 614.4C1223.3 615.4 1223 618.4 1223.5 620.4C1223.9 622.4 1225.5 624.4 1225.7 626.4C1225.9 628.4 1224.6 630.4 1224.8 632.4C1224.9 634.4 1226.2 636.4 1226.7 638.4C1227.2 640.4 1227.9 642.4 1227.7 644.4C1227.6 646.4 1225.8 648.4 1225.8 650.4C1225.8 652.4 1227.3 654.4 1227.7 656.4C1228.1 658.4 1227.7 660.4 1228.2 662.4C1228.6 664.4 1229.9 666.4 1230.4 668.4C1231 670.4 1231.1 672.4 1231.5 674.4C1231.9 676.4 1232.6 679.4 1232.8 680.4" fill="none" stroke="#a3cfe2" stroke-width="4.9" stroke-linecap="round" stroke-linejoin="round"/>
<path d="M1223.5 620.4C1224.1 619.6 1226.5 617.4 1227.5 615.4C1228.5 613.4 1229.3 610.6 1229.5 608.4C1229.6 606.2 1228.6 603.4 1228.5 602.4" fill="none" stroke="#a3cfe2" stroke-width="1" stroke-linecap="round"/>
<path d="M996 610.6C995.6 611.6 994.1 614.6 993.6 616.6C993.1 618.6 992.5 620.6 992.8 622.6C993.1 624.6 995 626.6 995.3 628.6C995.5 630.6 994.9 632.6 994.4 634.6C993.8 636.6 992.6 638.6 992.1 640.6C991.7 642.6 992.2 644.6 991.8 646.6C991.4 648.6 990 650.6 989.8 652.6C989.5 654.6 990.6 656.6 990.3 658.6C990.1 660.6 988.5 662.6 988.4 664.6C988.2 666.6 989.5 668.6 989.3 670.6C989 672.6 987.3 675.6 986.9 676.6" fill="none" stroke="#a3cfe2" stroke-width="1.9" stroke-linecap="round"/>
<path d="M1001.1 597.9C1001.2 598.9 1001.3 601.9 1001.2 603.9C1001.1 605.9 1000.2 607.9 1000.4 609.9C1000.5 611.9 1001.8 613.9 1002.3 615.9C1002.9 617.9 1003.6 619.9 1003.6 621.9C1003.7 623.9 1003 625.9 1002.8 627.9C1002.7 629.9 1002.9 631.9 1002.7 633.9C1002.6 635.9 1002 637.9 1002 639.9C1002 641.9 1002.7 643.9 1002.8 645.9C1002.8 647.9 1002.1 649.9 1002.2 651.9C1002.3 653.9 1003.1 655.9 1003.5 657.9C1003.8 659.9 1004.1 661.9 1004.1 663.9C1004.1 665.9 1003.3 667.9 1003.6 669.9C1003.9 671.9 1005.4 674.9 1005.8 675.9" fill="none" stroke="#a3cfe2" stroke-width="1.5" stroke-linecap="round"/>
<path d="M1006.1 614.3C1006.2 615.3 1006.3 618.3 1006.4 620.3C1006.4 622.3 1006.3 624.3 1006.6 626.3C1006.8 628.3 1007.8 630.3 1007.9 632.3C1008.1 634.3 1007.3 636.3 1007.5 638.3C1007.7 640.3 1008.6 642.3 1009.2 644.3C1009.7 646.3 1010.8 648.3 1011 650.3C1011.2 652.3 1010.1 654.3 1010.4 656.3C1010.7 658.3 1012.3 660.3 1012.6 662.3C1012.8 664.3 1012.3 666.3 1011.9 668.3C1011.5 670.3 1010.6 673.3 1010.3 674.3" fill="none" stroke="#a3cfe2" stroke-width="2.3" stroke-linecap="round"/>
<path d="M1011.4 614.7C1011.6 615.7 1012.4 618.7 1012.4 620.7C1012.5 622.7 1011.5 624.7 1011.7 626.7C1011.8 628.7 1013 630.7 1013.3 632.7C1013.5 634.7 1013.1 636.7 1013.3 638.7C1013.5 640.7 1014 642.7 1014.6 644.7C1015.1 646.7 1016.1 648.7 1016.6 650.7C1017.1 652.7 1017.1 654.7 1017.6 656.7C1018.2 658.7 1019.9 660.7 1019.9 662.7C1019.9 664.7 1018.2 666.7 1017.6 668.7C1016.9 670.7 1016.2 673.7 1015.9 674.7" fill="none" stroke="#a3cfe2" stroke-width="2.3" stroke-linecap="round"/>
<path d="M1017.8 602.9C1017.9 603.9 1018.4 606.9 1018.7 608.9C1019 610.9 1019.5 612.9 1019.5 614.9C1019.5 616.9 1018.7 618.9 1018.6 620.9C1018.6 622.9 1018.8 624.9 1019.1 626.9C1019.5 628.9 1020.8 630.9 1020.6 632.9C1020.5 634.9 1018.7 636.9 1018.4 638.9C1018.1 640.9 1019.3 642.9 1019 644.9C1018.7 646.9 1017.1 648.9 1016.7 650.9C1016.3 652.9 1016.3 654.9 1016.6 656.9C1016.8 658.9 1018 660.9 1018.4 662.9C1018.8 664.9 1018.6 666.9 1019.1 668.9C1019.7 670.9 1021.2 673.9 1021.6 674.9" fill="none" stroke="#a3cfe2" stroke-width="1.2" stroke-linecap="round"/>
<path d="M1021.1 635C1021.4 636 1023 639 1023.2 641C1023.4 643 1022.6 645 1022.4 647C1022.1 649 1021.6 651 1021.4 653C1021.2 655 1020.9 657 1021.2 659C1021.4 661 1022.7 663 1022.8 665C1022.8 667 1021.4 669 1021.3 671C1021.2 673 1022.1 676 1022.3 677" fill="none" stroke="#a3cfe2" stroke-width="2.6" stroke-linecap="round"/>
<path d="M1028.5 611C1028.9 612 1030.9 615 1030.9 617C1031 619 1029.5 621 1029 623C1028.5 625 1028.4 627 1027.9 629C1027.5 631 1026.4 633 1026.5 635C1026.5 637 1027.9 639 1028.2 641C1028.5 643 1028.3 645 1028.3 647C1028.3 649 1028 651 1028.3 653C1028.7 655 1030.2 657 1030.4 659C1030.6 661 1029.3 663 1029.5 665C1029.6 667 1030.8 669 1031.4 671C1031.9 673 1032.6 676 1032.8 677" fill="none" stroke="#a3cfe2" stroke-width="1.9" stroke-linecap="round"/>
<path d="M1032.8 609.7C1033 610.7 1034 613.7 1034.3 615.7C1034.6 617.7 1034.4 619.7 1034.8 621.7C1035.2 623.7 1036.6 625.7 1036.6 627.7C1036.6 629.7 1034.6 631.7 1034.6 633.7C1034.6 635.7 1036.6 637.7 1036.8 639.7C1037 641.7 1036.1 643.7 1035.6 645.7C1035.1 647.7 1034 649.7 1033.6 651.7C1033.2 653.7 1032.9 655.7 1033.1 657.7C1033.3 659.7 1034.3 661.7 1034.8 663.7C1035.2 665.7 1035.8 667.7 1035.7 669.7C1035.5 671.7 1034 674.7 1033.7 675.7" fill="none" stroke="#a3cfe2" stroke-width="1.9" stroke-linecap="round"/>
<ellipse cx="1048" cy="160" rx="1.6" ry="4.5" fill="#a3cfe2"/><ellipse cx="1103" cy="199" rx="4" ry="2.6" fill="#a3cfe2"/>
<path d="M1005 0L1009.1 3.9 1011.8 7.5 1017.8 9.5 1022 13 1025.7 20.1 1031.2 24.8 1034.7 31.9 1035 39 1044 38.1 1053.1 40.2 1061.3 40.8 1071 42 1072.9 46.3 1074.2 51.9 1077.7 57.1 1081 65 1086.8 66.5 1094.4 69.8 1100 72 1103 75 1101.5 80.1 1100.1 84.5 1096.7 88 1094 94 1078 88.8 1060.6 89.4 1044.8 92.6 1022 91 1023.3 95.3 1024.3 98.6 1024.6 103 1025 108 1018.1 116.8 1012.5 127 1008.4 135 1004 142 997.9 139.8 991.1 139.8 985.3 137.1 979 133 978.9 137.5 978.6 143.4 979.9 148.6 979 153 973.9 159 968.7 161.4 963.8 167.2 958 176 960.5 181 963.9 188.4 968.4 193.9 973 202 977.2 203.6 980.5 203.6 983.8 204.9 987 205 993.7 208.8 1001.9 212.2 1009.1 218.1 1021 222 1031.2 230.5 1040.2 233 1051.1 237.9 1064 239 1065.5 249 1068.5 256.7 1068.4 262.8 1067 269 1066.7 274.4 1066.1 278.2 1064.8 283.5 1064 290 1058.9 294.3 1052.8 297.7 1047.7 300.7 1042 307 1041.9 312.9 1042.3 318.8 1040.2 323.7 1040 329 1042 334.2 1044.8 339.8 1044.8 344 1047 349 1049.7 353.3 1053.1 358.4 1057.7 363.4 1062 372 1064.4 381.3 1066.8 393.2 1070.9 397.7 1074 406 1079.4 407.1 1085.2 409.9 1091.1 407.7 1100 408 1096 411.1 1094 414.1 1092.6 417 1091 419 1091.1 422.8 1089.5 428 1087.1 434 1085 439 1086.3 443.5 1088.3 446.4 1089.1 452.9 1091 458 1092.6 464.5 1094.8 471.5 1097.3 475.5 1098 481 1098.4 485.6 1096.4 491.4 1095.7 497.2 1094 504 1095.5 513 1098.2 519.4 1100.1 524.8 1101 530 1101.4 535.9 1103.4 540.9 1104.4 547.6 1104 553 1107.6 555.5 1110.2 558.7 1112.2 562.7 1114 569 1114.6 573.8 1115.4 577.9 1114.2 582.9 1114 589 1111.3 593.4 1108.3 599.8 1106.7 607.9 1107 615 1107 622.2 1108.2 628.6 1111.5 633.3 1114 641 1115.3 646.1 1118.7 652.5 1121.2 657.8 1124 664 1125.9 668.4 1129 672" fill="none" stroke="#8f8f8f" stroke-width=".8" stroke-linejoin="round"/>
<g font-family="'Liberation Sans',sans-serif">
<text font-size="11.5" text-anchor="middle" x="58" y="57.1" font-weight="bold" stroke="#fff" stroke-opacity=".55" stroke-width="1.800" paint-order="stroke" stroke-linejoin="round" fill="#7d7d7d">Prayagraj</text>
<text font-size="11.5" text-anchor="middle" x="229" y="73.1" font-weight="bold" stroke="#fff" stroke-opacity=".55" stroke-width="1.800" paint-order="stroke" stroke-linejoin="round" fill="#7d7d7d">Varanasi</text>
<text font-size="11.5" text-anchor="middle" x="376" y="135.1" font-weight="bold" stroke="#fff" stroke-opacity=".55" stroke-width="1.800" paint-order="stroke" stroke-linejoin="round" fill="#7d7d7d">Sasaram</text>
<text font-size="11.5" text-anchor="middle" x="521" y="160.1" font-weight="bold" stroke="#fff" stroke-opacity=".55" stroke-width="1.800" paint-order="stroke" stroke-linejoin="round" fill="#7d7d7d">Gaya</text>
<text font-size="11.5" text-anchor="middle" x="596" y="96.1" font-weight="bold" stroke="#fff" stroke-opacity=".55" stroke-width="1.800" paint-order="stroke" stroke-linejoin="round" fill="#7d7d7d">Bihar Sharif</text>
<text font-size="11.5" text-anchor="middle" x="179" y="256.1" font-weight="bold" stroke="#fff" stroke-opacity=".55" stroke-width="1.800" paint-order="stroke" stroke-linejoin="round" fill="#7d7d7d">Singrauli</text>
<text font-size="11.5" text-anchor="middle" x="735" y="67.1" font-weight="bold" stroke="#fff" stroke-opacity=".55" stroke-width="1.800" paint-order="stroke" stroke-linejoin="round" fill="#7d7d7d">Munger</text>
<text font-size="11.5" text-anchor="middle" x="809" y="88.1" font-weight="bold" stroke="#fff" stroke-opacity=".55" stroke-width="1.800" paint-order="stroke" stroke-linejoin="round" fill="#7d7d7d">Bhagalpur</text>
<text font-size="11.5" text-anchor="middle" x="978" y="127.1" font-weight="bold" stroke="#fff" stroke-opacity=".55" stroke-width="1.800" paint-order="stroke" stroke-linejoin="round" fill="#7d7d7d">Malda</text>
<text font-size="11.5" text-anchor="middle" x="1158" y="152.1" font-weight="bold" stroke="#fff" stroke-opacity=".55" stroke-width="1.800" paint-order="stroke" stroke-linejoin="round" fill="#7d7d7d">Bogra</text>
<text font-size="11.5" text-anchor="middle" x="1044" y="229.1" font-weight="bold" stroke="#fff" stroke-opacity=".55" stroke-width="1.800" paint-order="stroke" stroke-linejoin="round" fill="#7d7d7d">Rajshahi</text>
<text font-size="11.5" text-anchor="middle" x="1139" y="5.1" font-weight="bold" stroke="#fff" stroke-opacity=".55" stroke-width="1.800" paint-order="stroke" stroke-linejoin="round" fill="#7d7d7d">Rangpur</text>
<text font-size="11.5" text-anchor="middle" x="880" y="3.1" font-weight="bold" stroke="#fff" stroke-opacity=".55" stroke-width="1.800" paint-order="stroke" stroke-linejoin="round" fill="#7d7d7d">Purnia</text>
<text font-size="11.5" text-anchor="middle" x="1049" y="324.1" font-weight="bold" stroke="#fff" stroke-opacity=".55" stroke-width="1.800" paint-order="stroke" stroke-linejoin="round" fill="#7d7d7d">Meherpur</text>
<text font-size="11.5" text-anchor="middle" x="808" y="338.1" font-weight="bold" stroke="#fff" stroke-opacity=".55" stroke-width="1.800" paint-order="stroke" stroke-linejoin="round" fill="#7d7d7d">Asansol</text>
<text font-size="11.5" text-anchor="middle" x="861" y="362.1" font-weight="bold" stroke="#fff" stroke-opacity=".55" stroke-width="1.800" paint-order="stroke" stroke-linejoin="round" fill="#7d7d7d">Durgapur</text>
<text font-size="11.5" text-anchor="middle" x="938" y="409.1" font-weight="bold" stroke="#fff" stroke-opacity=".55" stroke-width="1.800" paint-order="stroke" stroke-linejoin="round" fill="#7d7d7d">Bardhaman</text>
<text font-size="11.5" text-anchor="middle" x="1012" y="469.1" font-weight="bold" stroke="#fff" stroke-opacity=".55" stroke-width="1.800" paint-order="stroke" stroke-linejoin="round" fill="#7d7d7d">Chandannagar</text>
<text font-size="11.5" text-anchor="middle" x="1008" y="516.1" font-weight="bold" stroke="#fff" stroke-opacity=".55" stroke-width="1.800" paint-order="stroke" stroke-linejoin="round" fill="#7d7d7d">Kolkata</text>
<text font-size="11.5" text-anchor="middle" x="856" y="551.1" font-weight="bold" stroke="#fff" stroke-opacity=".55" stroke-width="1.800" paint-order="stroke" stroke-linejoin="round" fill="#7d7d7d">Kharagpur</text>
<text font-size="11.5" text-anchor="middle" x="1184" y="476.1" font-weight="bold" stroke="#fff" stroke-opacity=".55" stroke-width="1.800" paint-order="stroke" stroke-linejoin="round" fill="#7d7d7d">Khulna</text>
<text font-size="11.5" text-anchor="middle" x="1142" y="514.1" font-weight="bold" stroke="#fff" stroke-opacity=".55" stroke-width="1.800" paint-order="stroke" stroke-linejoin="round" fill="#7d7d7d">Smma Jubaer</text>
<text font-size="11.5" text-anchor="middle" x="257" y="428.1" font-weight="bold" stroke="#fff" stroke-opacity=".55" stroke-width="1.800" paint-order="stroke" stroke-linejoin="round" fill="#7d7d7d">Ambikapur</text>
<text font-size="11.5" text-anchor="middle" x="186" y="550.1" font-weight="bold" stroke="#fff" stroke-opacity=".55" stroke-width="1.800" paint-order="stroke" stroke-linejoin="round" fill="#7d7d7d">Korba</text>
<text font-size="11.5" text-anchor="middle" x="104" y="593.1" font-weight="bold" stroke="#fff" stroke-opacity=".55" stroke-width="1.800" paint-order="stroke" stroke-linejoin="round" fill="#7d7d7d">Bilaspur</text>
<text font-size="11.5" text-anchor="middle" x="500" y="569.1" font-weight="bold" stroke="#fff" stroke-opacity=".55" stroke-width="1.800" paint-order="stroke" stroke-linejoin="round" fill="#7d7d7d">Rourkela</text>
<text font-size="11.500" font-weight="bold" text-anchor="end" x="18.5" y="195.6" fill="#7d7d7d" stroke="#fff" stroke-opacity=".55" stroke-width="1.800" paint-order="stroke">Vindhya</text>
<text font-size="11.500" font-weight="bold" text-anchor="end" x="1.6" y="209.1" fill="#7d7d7d" stroke="#fff" stroke-opacity=".55" stroke-width="1.800" paint-order="stroke">chal</text>
<text font-size="8.6" text-anchor="middle" x="333" y="174.1" stroke="#fff" stroke-opacity=".55" stroke-width="1.800" paint-order="stroke" stroke-linejoin="round" fill="#7a7a7a">Kaimur WLS</text>
<text font-size="8.6" text-anchor="middle" x="715" y="646.1" stroke="#fff" stroke-opacity=".55" stroke-width="1.800" paint-order="stroke" stroke-linejoin="round" fill="#7a7a7a">Similipal-</text>
<text font-size="8.6" text-anchor="middle" x="715" y="656.1" stroke="#fff" stroke-opacity=".55" stroke-width="1.800" paint-order="stroke" stroke-linejoin="round" fill="#7a7a7a">Hadagarh WLS/</text>
<text font-size="8.6" text-anchor="middle" x="715" y="666.1" stroke="#fff" stroke-opacity=".55" stroke-width="1.800" paint-order="stroke" stroke-linejoin="round" fill="#7a7a7a">Tiger Reserve</text>
<text font-size="8.6" text-anchor="middle" x="1082" y="633.1" stroke="#fff" stroke-opacity=".55" stroke-width="1.800" paint-order="stroke" stroke-linejoin="round" fill="#7a7a7a">Sunderban</text>
<text font-size="8.6" text-anchor="middle" x="1082" y="643.1" stroke="#fff" stroke-opacity=".55" stroke-width="1.800" paint-order="stroke" stroke-linejoin="round" fill="#7a7a7a">Tiger Reserve</text>
<text font-size="8.6" text-anchor="middle" x="1172" y="604.1" stroke="#fff" stroke-opacity=".55" stroke-width="1.800" paint-order="stroke" stroke-linejoin="round" fill="#7a7a7a">Sundarban</text>
<text font-size="8.6" text-anchor="middle" x="1172" y="614.1" stroke="#fff" stroke-opacity=".55" stroke-width="1.800" paint-order="stroke" stroke-linejoin="round" fill="#7a7a7a">Reserved Forest</text>
<path d="M333 162c-3.2 0-3.8-2.4-2.6-3.6c-.2-2 2-3 3.2-2.2c1.6-1 3.8.2 3.2 2.2c1.2 1.400-.2 3.600-3 3.600zM332.3 161.5h1.400v3.400h1.800v.9h-5v-.9h1.800z" fill="#4a4a4a"/>
<path d="M715 633c-3.2 0-3.8-2.4-2.6-3.6c-.2-2 2-3 3.2-2.2c1.6-1 3.8.2 3.2 2.2c1.2 1.400-.2 3.600-3 3.600zM714.3 632.5h1.400v3.400h1.800v.9h-5v-.9h1.800z" fill="#4a4a4a"/>
<path d="M1082 621c-3.2 0-3.8-2.4-2.6-3.6c-.2-2 2-3 3.2-2.2c1.6-1 3.8.2 3.2 2.2c1.2 1.400-.2 3.600-3 3.600zM1081.3 620.5h1.400v3.400h1.800v.9h-5v-.9h1.800z" fill="#4a4a4a"/>
<path d="M1172 592c-3.2 0-3.8-2.4-2.6-3.6c-.2-2 2-3 3.2-2.2c1.6-1 3.8.2 3.2 2.2c1.2 1.400-.2 3.600-3 3.600zM1171.3 591.5h1.400v3.400h1.800v.9h-5v-.9h1.800z" fill="#4a4a4a"/>
</g>
<path d="M277 266L278.9 261.6 280.2 258.8 281.8 255 283 251 283.5 246.9 282.6 243.4 281.7 239.2 282 233 283.3 230.2 285.6 228.8 288.2 224.3 288 221 286.4 219 286.2 215.5 284.5 213.5 284 211 284.3 207.9 284.9 206.3 286 204 289.5 203.8 292.9 203 296.1 201.3 299 199 309.3 200.7 315.3 197.6 324.8 200.7 332 201 335.6 198.4 340.9 197.9 347.1 197.6 352 198 357.2 196.8 360 194.6 362.1 193.4 366 193 368.6 188.4 370.7 185.7 372.2 184 374 181 376.6 182.7 379.8 186 381.4 189.3 383 191 385.3 192.8 386.7 196.6 389 201.7 389 206 390.3 204.6 391.5 202.3 392.7 201.1 394 199 396.4 198 397.9 197.3 400 197 402.2 197.2 404.5 196.1 407 194.5 409.5 195.8 411.2 197.2 412.5 198 414.6 196.7 415 195.2 416 193.5 418 193.9 419.5 194.5 420.4 196.1 421.9 198.4 421.8 200.9 422 204 419.5 205.3 417.7 206 416.5 206.5 416.2 208.9 417 211 419 211.6 421 213.5 421.2 215.7 422 217 425.8 219.4 429.5 219.5 431.8 223.3 437 226 440.1 228.1 442 231.6 443.1 233.5 446 235 447.7 233.3 448.9 230.5 449.6 227 451 224 452.3 223.1 454.7 222.5 457.3 221.2 459 219 462.9 218.5 465.5 219.2 467.7 219.5 471 221 470.6 218.8 470.6 215.8 471.3 213.1 473 211 477.5 210.1 480.1 208.9 483.5 205.8 486 203 487.2 202.4 488.4 200.7 491.1 201 493 200 493.1 202 493.7 204 493.8 207.1 496 210 498.4 210.1 500.4 210.5 502 210 501.4 213.6 502.4 216.3 502.9 218.6 504 221 506.1 222.8 509 223.9 511.3 224 513 224 515.5 221.8 517.5 219.4 519.4 218.3 522 216 525.3 217.8 527.7 219.7 530.1 220 532 220 534.8 219.2 538.3 216.8 540.3 214.7 543 211 547 208.3 550.3 206.2 555.2 206.2 559 204 560.4 202.6 561.7 200.5 563.8 199.3 567 199 572.2 199.6 577.4 197.5 580.5 196.7 584 195 587.8 195.2 590.4 193.8 595.4 193 599 193 600.4 191.8 602.3 190 604.7 189.2 606 188 608.9 188.6 611.8 190.7 614.3 190 617 190 617.3 187.4 617.6 185.6 618 184 617.5 180.9 617.3 179 615.2 177.5 614 174 616.1 170.8 617.5 168.1 619.8 167.6 622 166 621.4 163.2 622.4 160.4 624.4 155.7 627 153 631.9 151.6 636.4 150.6 642.9 153.6 649 155 649.8 157.7 649.5 160 651.1 161.2 652 163 654.2 163 655.8 163.7 658.7 164 662 165 665.1 164 667.5 162.3 669.9 161.6 672 160 676.4 162.6 679.6 163.3 681.1 165.2 683 168 682.7 170 682.5 172.4 683 174.7 684 176 684 179.4 682.9 182.1 682 184.2 682 186 682.7 188.7 685.1 191.3 686.9 194.2 689 195 691.7 193.9 693.9 191.2 695.5 188 697 186 699.5 187.9 701 189.8 703 191 705.2 189.3 707.3 189.1 710.1 189.1 712 190 711.6 193.3 709.1 197.1 708.4 201.6 709 206 711.5 209.1 713.2 211.1 715.9 212.4 717 214 719.8 216.5 723.8 218.5 728.7 221.5 733 224 733.8 219.2 735.7 213.6 737.4 209.3 737 206 740.2 203.8 742.1 202.3 743.4 198.1 746 195 747.6 192.5 750.1 191.4 752.5 189.4 754 188 755 189.5 755.9 190.9 757.9 191.6 759 193 761.9 192.8 763.5 191.7 765.5 191.4 768 191 770.2 189.9 771.2 188.4 773.4 186.4 776 185 778.6 185.2 780.6 184.7 782 185 783.1 186.7 783.8 189.4 783.6 191.4 783 193 785.5 194.1 789.4 194.5 792.5 194.7 797 195 796.7 193 796.6 190.9 797.1 188.6 798 186 799 184.8 800 182.9 801.6 181.9 803 181 805.2 181.9 806.4 183 809 184 812.5 183.2 814.9 183.3 817.1 182.8 819 181 820.4 177.8 822.2 176.3 822.6 173.1 822 169 822.1 165.3 822.5 162.6 824.3 158.3 827 156 825.9 153.4 824 151 826 149.4 826.8 147.4 830.2 144.6 833 144 834.1 140.3 834.2 136.5 832.7 133.5 833 129 832.5 126.8 831.9 124.8 832.3 121.6 834 119 837.5 116.3 838.5 113.1 842.9 108.9 847 108 850.1 108.2 852.2 107.5 854 106 854.7 102 855.7 98.2 855.5 93 858 89 860.1 89.6 862.8 90.5 865.1 90.1 867 90 867.5 88.5 869 87 871.6 87.6 873.5 87.3 875.1 89.2 877 90 878.3 88 879.4 86.1 881.3 84.5 882 83 882.9 81.1 883.1 79.5 882.3 76.9 882 75 883.9 76.8 885.8 77.6 887.6 77.7 889 78 889.2 75.8 889.6 73.2 890.3 71.8 892 70 894.2 69.1 896 68 896.4 69.6 898 71 901.8 71.7 905.2 71.9 908.2 72.8 911 74 911 77.2 911.8 79.7 913.1 81.5 913 83 915.6 83.4 918.7 84.4 920.8 83.7 924 84 924.6 86.5 926.8 88.8 926.9 92 927 95 926.6 98.8 926.8 101.1 927.4 103.3 927 105 927.7 106.9 930.2 108.7 931.8 109.6 934 111 936.3 112.5 937.4 114.8 940.3 117.8 942 120 943.9 122 945.3 124.8 947.2 127.1 949 129 950.1 130.1 950.4 132 952 132.9 953 135 952.1 137.4 951.6 139.1 952 141 949.8 142.5 949.2 144.1 947.8 144 946 145 943.6 145.5 941 146 940 148.8 940.5 151.7 939.7 153.5 939 155 938.5 157.1 937.2 158.5 937 161 934.4 162.1 932 163 934.4 164.6 935.6 166.1 936 168 939 167.3 940.4 166.5 942 166 942.4 168.9 942.8 171.2 942.2 174.2 943 176 943 177.9 944.2 180.4 944 182.4 944 184 943.5 186.4 943.3 188.4 941.9 190.7 941 193 939.1 193.2 937.3 194.8 935.3 194.5 934 195 931.1 194.3 929.6 192.9 928 191 929.8 194.3 929.7 197.9 928.6 200.2 928 204 928.6 205.7 929.2 207.7 930.2 209 931 211 930.3 213.5 927.7 216.2 927.1 218.9 927 221 926.6 225 924.8 228.9 922.8 232 921 234 918.9 234.7 916.5 235.6 914.6 237.2 914 239 912.4 239.9 910.9 242.2 909.7 243.8 907 245 906.5 247.6 906 250 908.5 250.4 910.1 251.7 911.2 252.9 913 254 913 256.5 912.2 258.4 912 260 908.8 261 905.6 263.1 901.6 264.1 897 263 895.1 264.9 894.6 266.8 893.7 268.7 893 270 891.3 269.2 889.3 268.1 887 266 885.8 269.4 883.5 273.5 884 276 884 279 882.6 280.5 880.9 282.6 878.6 284.5 877 286 872.8 284.3 866.6 283.9 862 283.9 859 283 856.7 282.1 854.4 281.4 850 279.6 847 279 847.7 281.1 849.1 282.7 849.5 284.1 849 286 849.5 288.1 850.8 291.1 851.9 292.6 854 294 853.9 295.7 854.6 297.8 854 299.3 854 301 851.2 301.3 848 301 847.3 304 846.8 307.1 846.7 309.3 847 311 844.3 309.8 842.1 309.4 840.4 308.3 839 308 836.5 309.9 835.2 311.4 834.4 313.2 834 315 831.8 314.4 829.9 312.9 828.6 311.4 827 311 824.8 311 822 310.7 820.1 308.7 817 308 813.7 307.5 808.9 307.6 801.8 306.8 797 304 795.8 305.7 795.5 307.6 795.2 310 793 313 791.3 313.5 789.4 314.7 786.6 315.3 784 315 784.3 316.7 785.5 318.7 785.6 321.1 786 324 784 326.2 783.2 329.8 782.1 332.4 781 334 777.3 333.6 773.8 332 770.9 331.8 767 334 762.7 335.4 758.6 336.8 755.5 336.3 752 338 750.1 339.4 747 341.5 744.5 341.7 742 343 739 343.8 734.8 343.1 732.2 344 729 344 725.8 345.4 724.3 348.1 722.8 349.3 721 351 719.6 352.7 718.6 356.2 717.5 360.7 718 364 716.7 366.3 714.9 367.5 712 369.3 709 371 706.2 372.6 704 373.2 702.3 374.3 701 375 699.1 373.1 698.3 371.2 698.2 369.6 698 368 696.1 367.4 694 366.1 691.6 366.4 688 366 688.4 363.7 688.2 361 687.5 359 687 356 684.6 354.1 682.5 353 680.4 353.2 677 353 674.8 354 672.8 354.8 671.3 354.3 669 355 670.7 357.4 671.6 359.9 671.7 361.8 672 364 669.8 365.1 667.7 366.8 665.4 368.3 662 369 656.9 369.7 653.7 370.4 650 370.5 647 370 648.4 371.9 648.8 375.1 648.1 377.2 648 379 648.6 381.9 648.7 384.3 649 386 649.3 388.5 648.1 391.7 647.2 395.7 644 399 643 400.8 642.3 402.7 641 405 641.4 407.5 641.2 410.3 642.6 411.8 643 414 645 416.8 646.8 417.9 649.5 419.8 652 421 654 421.5 655.3 422.3 657 423 659.5 422.6 661.7 421.3 666 420.8 669 420 670.4 422.9 671.5 424.9 674 427.3 677 430 679.9 430.5 682.4 430.2 684 430 684.4 433.4 687.2 436.9 690.2 438.6 692 441 693.2 442.6 694.7 443.8 695 446.5 697 449 699.3 448.5 701.6 446.1 704.2 445.5 707 443 710.2 443.2 713.1 444.3 716.5 445.6 719 445 723 447 729.3 447.3 732.7 448.6 737 448 740.1 447.3 742.2 446.2 744 446 743.7 448.8 742 451 739.5 452.1 738.5 453.6 735.1 454.7 732 455 731.2 457.5 730.7 460.3 731.6 463 731 465 730.6 467.6 729.4 471 729 475.4 727 479 730.2 480.9 732.8 483.3 735.9 485.7 737 489 739.3 488.3 740.7 487.7 742.3 487.7 744 488 747.2 491.3 750.4 493 753.2 495.5 757 496 757 500 756.6 504.4 757.1 507.6 759 510 763.4 511.2 768.1 510.1 772.2 508.8 777 510 777.1 515.3 777.7 519.5 780.5 522.9 782 526 780.7 526.4 778.9 526.8 776 526 776.4 527.8 777.8 530.4 778.8 532.6 779 535 781 534.9 783.2 536.1 785.8 537.9 788 538 787.1 540 787.1 542.3 787.2 544 788 546 788.3 548.4 789.9 551.4 791.6 552.9 794 555 794.8 558 794 560 792.2 561.6 789.4 562 785.5 562 783 563 782.3 565.5 781 568 777.3 567.2 771.7 568.9 768.2 567.1 764 565 763.2 562.8 763.3 560.3 762.6 559 761 558 755.5 557.9 751.7 557.1 748.6 556.2 746 554 744.5 551.2 741.9 547.8 740.1 546.5 737 546 735.8 548.3 734.4 549.9 730.2 551 728 553 724.6 550 720.9 549.3 718.3 547.3 717 544 713.7 541.7 711.9 539 709.1 536 707 531 704 529.3 700.3 528.2 696.6 527.9 694 528 690.7 526.9 688.5 526.6 685.7 524.7 682 523 681.2 520.6 680.2 518.1 676.4 516.9 674 514 672.2 515.3 670.7 517.6 669.4 518.8 667 520 665.7 522.2 664.3 525 662.5 525.8 661 528 663.5 531.3 667 533.7 666.7 536.4 668 539 668.1 542.2 668.7 545.1 667.6 547.8 667 551 669.3 552.2 671 553 668.4 554.1 666.3 555.1 664.7 557.8 663 559 666 561.8 667.7 565.2 667.8 568.1 669 571 667.4 573.3 665.2 576.2 664.6 578.3 664 581 663 586.7 663.5 592 659.1 595.9 657 601 655.3 603.2 654.1 603.9 652 605 648.8 604.2 644.7 604.8 641.8 603.5 637 604 635 602.7 634 601.3 632.6 600.5 631 599 631.4 597.3 631.7 595.7 632.9 593.7 634 591 636.2 590.7 637.3 589.8 639 589 638.4 587.2 637 585 634.6 586.2 630.7 587.6 629.3 589.5 627 591 621.2 590.8 615.7 592.4 611.2 591.1 609 589 606 588.2 602.1 585.4 597.1 585.5 594 584 589.7 584.3 585.5 582.3 582.9 579.2 577 578 574.3 578.9 570.6 578.9 568.4 580.3 566 581 564 583.1 561.2 584.9 559.6 588.6 559 591 558.4 593.3 556.9 594.7 554.8 596.9 553 600 552.4 597.9 552 596.4 551 594 547.8 591.3 543.5 589.8 539.4 589.9 534 589 531.9 588.7 529.4 587.1 526.6 586.3 523 585 520.8 586.4 518 588 519.7 585.3 521.5 584 521.8 582.4 523 581 522.9 578.2 524.7 575.4 525.4 573.3 527 571 528.5 568.4 530.3 566.8 530 564 531 561 532.8 558.7 533.7 556.5 534.7 554.7 536 554 536 551.4 534.1 548.2 534.2 544.8 533 541 530.4 538 528.8 534 528 530.9 529 526 525.3 528.3 520.7 530.6 516.2 531.3 512 530 509 531.4 506.8 533 504.9 533.8 502 534 498.8 533.1 495.5 531.6 490.4 532 487 531 485.6 532.8 482.7 533.7 480.4 534.4 477 536 472.2 534.6 469.6 533 465.5 532 462 533 458.2 531.9 455 532.9 449.9 534.9 446 535 444.5 538 442.4 541 440.4 542.4 437 544 433.9 545.6 429.7 545.8 425.6 546.9 421 548 418.6 547.6 416.2 545.7 412.8 545.1 409 544 406.9 542.4 405 541.2 401.2 540.4 399 538 396.5 536.3 395.4 535.5 394 534 393.6 530.9 393.2 528.3 393 526 391.5 525.5 389.4 524.3 387.4 522.3 386 521 384.2 520.4 381.7 519.6 378.8 518.4 376 519 375.2 517.1 374 515 375.8 513.1 377 511.1 377.4 509.6 378 508 379.9 506.4 381.4 505.5 382.3 502.4 384 501 386.8 500.4 390.2 500.2 395.5 498.5 399 499 400.5 497.7 402.1 497 404 496.7 407 496 407 493.1 406.5 490.2 407.5 487.1 408 484 411.1 482.7 413.2 482.4 415.4 481.3 417 479 419.1 476.1 420.2 473.4 422.1 469.1 422 466 423.6 464.7 425.2 463.3 426.7 461 429 459 428.1 456.6 428 453.4 427.1 451.5 427 449 425.2 449.9 422.4 449.6 420.7 448.7 418 448 416 448.5 413 449 413 447 411.8 444.5 410.8 442.6 411 441 409.2 442.8 407 445 405.4 443.4 404.5 441.7 403 439 400.8 439.8 399 440 397.9 442.2 397.8 444.1 398 446.6 398 449 395.9 447.2 394 446 394 443.1 394.6 439 393.3 436.4 393 434 393.6 432 393 430.1 394.4 427.3 396 426 393.3 425.7 391 425.1 388.8 423.8 387 424 385.7 422.8 385.2 420.5 383.6 418.1 381 416 379 411.9 379.8 406.6 380.9 403.7 382 401 382.7 398.3 382.3 396.2 382.9 393.8 384 391 381.6 388.8 380.3 387.2 378 385.9 376 385 374.3 384.5 372.6 382.7 371 380 369.9 377.1 370.2 374 370 372 371 370 372 367.8 373.4 366.2 375 365.2 377 364 376 362.1 376.2 358.9 376.3 355.3 377 353 376.3 351 374.5 349.8 374.5 347.1 373 344 370.5 344.6 368.6 344.7 366.8 344.8 364 345 363 346.8 363.1 349.3 362.5 351.4 363 353 358.8 352 356 349.9 352.9 350.8 348 350 345.8 349.1 343.1 348.9 340.8 346.7 338 344 335.2 341.3 334.7 338.7 334.8 333.6 333 329 333.8 324.9 333 320.3 332.4 316.5 331 314 323 312.1 318 310.3 314.2 307.3 312 304 307.3 299.7 304.5 294.5 303.9 290.5 304 286 303.5 282.9 302.4 279.6 300.5 277.7 299 275 293.3 274.1 285.3 270.9 280.2 268.9Z" fill="#1a9641"/>
<path d="M765.6 565.8L775.3 534.5M775.3 534.5L773.8 534.9 772.2 536.3 769.5 536.3 768.2 537.4 765.9 538.2 763.4 539.4 761.6 539.2M753.8 557.5L754.4 555 755.8 552.9 757.1 548.8 759.9 546.7 762 543.8 761.6 539.2M400.6 197L395.7 213.5M364.9 193.1L368 211.7M368 211.7L370.7 211.7 373 213.5 375.9 214.2 378.7 213.4 383 214 388.4 212.5 392.7 212.3 395.7 213.5M346.9 318.4L332.3 316.3M312.8 305.3L325.5 293.8M346.9 318.4L345.7 316.8 344.7 313.8 345.7 311 345.6 308.6 344.2 306.6 343.9 304.2 345 301 344.1 298.1M344.1 298.1L342 296.6 340 295.9 338.4 295.3 336.3 295.6 332.2 296.3 329.5 296.4 327.4 296 325.5 293.8M552.5 318.8L555.1 316 557.9 313.7 557 309.9 558.9 305.2 559.4 302 561.8 297.4 561.4 294.5 561 291.6M552.5 318.8L553.3 320.4 554.2 322.2 556.4 323.7 558 324.3M558 324.3L560.5 323.2 562.6 323.1 564.8 321.9 567.5 320.9 570.1 321.2 572.3 322.3 575.1 322 577.7 320.2M561.6 291.2L562.4 293.4 565 295.7 566.5 299.2 566.3 304.4 569.2 307.6 572.3 309.3 573.8 316.5 577.9 319.6M581.7 339.1L582.3 336.9 583.9 335.1 584.2 331.4 582.8 328.7 580.9 326.5 579 325.5 579.3 322.5 577.7 320.2M581.7 339.1L581.4 341.7 579.9 342.9 578.8 344.1 577.5 344.9 575.9 346.3 573 345.6 570.7 346.9M558 324.3L556.6 327.2 556 328.6 554.6 329.9 554.9 332.6 554 334.6 555.2 335.4 556 337.2M570.7 346.9L569.1 346 568.5 344.5 567.1 342.3 564.8 341 562.2 339.7 560.2 339.2 558.2 338.4 556 337.2M346.9 318.4L349 319.5 350.8 322.4 352 323.7 353.7 324.7 356 325.9 358.2 325.8 360 325.8M363.1 346.6L361.2 342.2 359.9 338.7 357 336.8 356.8 333.1 358.2 331 358.4 327.7 360 325.8M374.5 349.3L376.3 348.6 379.9 349.1 382.4 350.8 387.5 351.7 391.4 354M361.3 324.6L364.4 325.8 367.7 326.7 370.3 325.9 371.9 324.5 374.9 324.5 377.4 322.4 378.5 319.3 381.1 317.3M381.1 317.3L385.9 319.9 389 321.3 391.8 324.7 392.1 328.2 392.2 331.2 394.2 334.4 394.5 336.7 394.9 340.2M360 325.8L361.3 324.6M391.4 354L391.9 352.2 392.4 350.4 394.8 349 396 346.9 395.7 344.1 394.8 342.6 394.9 340.2M663.2 589.1L657 584.5 642 581M613.5 591.7L617.9 582.1M642 581L638.6 579.3 636 578.8 633.5 577.8 630.6 577.2 627.7 575.9 623.9 577 622.5 580.2 617.9 582.1M397.5 220.6L397.1 224.8 397.6 227.9 394.4 230.5 393.6 233.9 391.2 238.2 387.3 239.3 386.4 241.1 384.6 243.7M384.6 243.7L381.9 243.6 379.5 245.1 377.5 243.4 375.1 242.9 372.7 242.7 371.6 241.3 369.5 240.5M395.7 213.5L395 214.9 395.2 216.7 396.6 218.5 397.5 220.6M368 211.7L366.4 213.7 364.3 214.2 361.7 215.4M369.5 240.5L368.8 238.9 369.1 236.7 368.1 234.2 366.3 231.8 364.5 229.6 363.1 228.6 360 228.6M360 228.6L359.4 226.7 358.8 225.3 359.3 222.3M361.7 215.4L361.1 217 359.5 218.2 360 220 359.3 222.3M595.1 343.8L592.4 342.1 590.6 340.8 588.7 339.7 587.3 340.2 585.3 339.3 583.6 339.6 581.7 339.1M595.1 343.8L595.3 339.8 595.8 333.9 597 330.5 599.2 327.3 601.9 324.1 602.6 320.4 604.9 318.6 607.3 316.7M577.9 319.6L579.8 316.9 583.6 313.8 587.9 313.8 594.2 312.4 597 311.1 598.4 308.5 600.5 306.5 604 305.8M604 305.8L605 308.8 606.3 310.5 607.6 313.4 608 314.7 607.3 316.7M595.1 343.8L595.8 345.4 597.3 347.5 599.3 349.7M599.3 349.7L602.4 347.9 604.2 345.7 607.7 344.4 611.4 345.1 615.9 341.2 621.1 340.8 625.7 337.4 629.8 338M607.3 316.7L610.2 318.9 613.2 318.5 616 321.1 617.9 325 621.2 328.3 625.8 330.7 628.7 333.7 629.8 338M619.4 262.5L618.5 265 617.2 268.6 618.4 270.4 618.6 272.6 619.3 277.4 618.6 280.9 617.7 285.2 618.5 288M619.4 262.5L621.1 261.2 623.3 261.1 625.5 261.9 627.5 262M627.5 262L628.4 264.5 627.9 266.5 630.5 268.8 631 272.7 632.7 274.7 635.3 276.3 637.4 277.5 640.2 278M618.5 288L620.6 288.4 623.6 287.8 625.7 290 627.6 291.2 630.4 290.3 632.7 291 635.6 289.4 638.3 286.8M638.3 286.8L638.4 285 637.4 283.1 638.6 281.3 638.7 279.8 640.2 278M603.7 297.7L603.4 300.5 603.6 302.4 603.8 304.4 604.1 305.6M603.7 297.7L601.5 295.8 599 293.7 596.6 291.5 595.5 288.7 592.8 286.2 590.5 283.5 586.3 280.8 584.3 277M561.6 291.2L563 288.6 564 286.6 565 284.9 564.7 282.6 565.7 280.8 567.2 278.9 569.4 277.6 570.4 275.8M584.3 277L581.3 276.3 579.4 276.1 577.5 275.1 575.6 275.3 574.1 274.7 572.4 274.8 570.4 275.8M561 291.6L557.6 292.6 553.7 291 551 292.9 547.4 292.5 543.2 292.5 540.5 294.8 538.3 296.3 536.3 296.5M536.3 296.5L533.9 294.9 533.6 293 532.8 291.7M538.9 266.2L537.6 269.3 538.2 272 536.5 276 537.2 279.2 535.2 281.7 535.4 285.4 535.2 288.5 532.8 291.7M538.9 266.2L542.8 270.2 546.8 270.9 549.6 272.7 551.4 275.7 555.9 277 562.1 274.7 566.1 274.8 570.3 275.7M759.2 510.1L757.9 512.1 750.9 517 752.5 524.5 750.8 529.9M775.3 534.5L774 520.7 776.7 509.9M761.6 539.2L760.7 537.2 757.9 535.9 757.2 533.9 756.3 532.2 754.3 532 752.8 531.6 750.8 529.9M569.4 354L566.6 354.3 564.6 354.9 562.9 356.8 560.5 358 558.2 357.8 555.9 359.2 553.9 359.5M569.4 354L569.2 356.9 569.9 360 572.1 362.2 572.7 364.2 575 366.3 577 367.6 578.1 369.8M578.1 369.8L577 371.8 577.4 374.8M577.4 374.8L575.2 375.1 572.2 375.4 568.7 376.4 565.2 377.1 563.8 374.5 559.5 372.9 556.4 373.9 552.5 372.2M552.5 372.2L552.1 370.1 552.3 368.5 552.7 366.5 553.7 365.1 554.1 362.3 553.9 359.5M570.7 346.9L570.3 348.2 570.2 350.2 570.3 352.4 569.4 354M540.9 347.8L542.3 349.8 542.2 351.5 544.7 352.3 546.5 355 548.6 355 550.5 355.8 552.1 357.4 553.9 359.5M542.1 344.6L541.2 346 540.9 347.8M556 337.2L555.9 339.3 554.4 341.2 551.4 341.8 549.5 343.4 547.6 343.6 545 345 542.1 344.6M599.3 349.7L598.6 351.8 599.5 354M599.5 354L596.9 355.1 594.3 356 591.7 359 590.5 363.1 587.6 365 583.3 367.1 580.3 368.9 578.1 369.8M580.1 382.8L584 382.2 588.9 380.8 593.6 377.4 597.8 377.6 602.5 375.8 605.6 377.1 609.6 374.6 612.5 371.7M580.1 382.8L579 381.1 578.4 378.2 578.1 376.2 577.4 374.8M599.5 354L600.3 355.8 601.4 358.8 602.5 360.5 604.1 362.4 607.2 363.6 609.3 365.4 611.6 368.7 612.5 371.7M657.8 459.8L659.1 456.9 658 452.6 657.5 448.5 654.5 442.8 651.5 440.6 648.1 438.1 645 434.8 644.2 429.9M647.8 465.8L648.8 464.3 650.4 463.2 652.4 462 654.3 461.5 655.5 460.2 657.8 459.8M647.8 465.8L645.7 465.5 642.4 464.8 639.1 462.5 637.7 460 634.7 459.9 631.7 457.9 628.3 458.4 624.9 458.5M624.9 458.5L627.4 454.3 632.4 452.7 638 450 641.2 444.3 641.1 440.4 643 437.9 642.5 432.9 644.2 429.9M624.9 458.5L623.6 459 621.7 459.6 619.6 460.6 616.2 460.1 615.4 462.1 613.1 464.1 610.2 465.7 606.9 465.6M606.9 465.6L609.9 466.5 611.2 468.4 614 470.9 614.7 473.9 615.8 476.4 617.9 477.8 619.1 478.7 619.6 480.7M647.8 465.8L648.2 467.9 647.6 470 647.2 471.6 646.3 473.1 646.2 474.6 646.5 476.3 645.9 479.3M645.9 479.3L643.6 479.2 640.2 479.1 637.9 477.4 635.2 476.7 631.1 478.8 628 479.1 622.5 478.7 619.6 480.7M657.8 459.8L659.6 461.4 662.6 462.2 664.3 461.3 666 461.3M666 461.3L664.4 464.8 665.3 470.4 666 473.3 665.4 477.2 666.1 479.7 667.6 482 667.2 483.9 667.4 486.8M667.4 486.8L665.4 486.6 663 484.8 660.4 484.6 658.7 484.2 655.5 482.8 652.5 482.8 649 481.5 646.2 479.9M750.8 529.9L748.7 528.9 747.2 529 744.5 530.4 742.8 531.1 740.3 531.6 738.6 532.7 736.6 532.1 735.3 532.5M748.7 492.1L748 493.4 748 496.4 747.1 498.7 744.6 499.8 742.1 501.2 739.2 502.1M739.2 502.1L739.5 506.1 738.6 508.5 737.2 511.6 733.3 513.2 732.9 517.3 732.5 521.1 734.7 525.9 735.3 532.5M747 554.9L744.3 549.7 742.3 547.3 738.2 544.8 738.5 541.1 737.1 537.8 736.2 535.9 734.7 533.2M516.1 284.9L517.5 286.1 519.1 286.5 521.6 287.1 523.8 287.2 526.5 288.9 528.6 291.1 531.2 291.3 532.8 291.7M516.1 284.9L514.8 287 514.3 289.1 514.5 291.5 515.3 292.9 514.7 296 513.4 298.2 512.2 300.4 511.1 303.8M536.3 296.5L536 298.5 534.2 300.7 534.8 302.6 534.8 304.6 533.1 305.4 531.8 307 531.5 309.7M511.1 303.8L513.9 303.2 518.3 302.6 520 303.2 522.7 304.3 523.7 306.7 525.9 308.5 529 309.4 531.5 309.7M552.5 318.8L550.3 319.3 548.3 319.7 546.4 319.6 544 319.9 540.8 321.3 537.1 320 535.2 319.8 533.2 317.9M531.5 309.7L530.6 312 531.2 313.9 532.2 316.3 533.2 317.9M542.1 344.6L538.5 343.7 536.4 341.1 533.8 338.3 532 335.2 532.2 332.5 531 328.8 531.2 325.1 531 322.3M531 322.3L532.1 320.6 533.2 317.9M511.1 303.8L508.8 304.7 507.4 305.7 506.1 304.8 504.2 305 501.7 306.9 501.1 309.1M506.9 270.5L508 272.2 509.1 273.3 509.7 275.1 510.5 277.1 512.2 280.1 513.6 281.9 515.7 283.3 516.1 284.9M506.9 270.5L505.1 270.8 503.5 271 501.7 273.1 499 274.7 496.6 276.2M496.6 276.2L498 280.6 496.7 283.7 496.8 290.8 493.2 295.1 494.7 298.6 495.7 303.5 497.6 306.4 501.1 309.1M291.5 273.4L300.8 264.8M325.5 293.8L327.2 291.2 326.8 288.1 330 285.7 332 280.7 330.5 277.6 331.1 275.3 329.6 272.8 329.6 269.4M329.6 269.4L326.8 268.5 322.9 269.2 320.2 270.3 317.4 269.8 314.4 266.1 308.5 264.8 304.1 265.7 300.8 264.8M666 461.3L668.4 460.5 670.2 461 672.2 460.6 673.5 459.3 675.3 457M675.3 457L678.2 460 682.5 462.5 686.1 463.4 689.2 462.4 691.1 463.5 693.5 464.7 694.3 466.6 696.6 468.2M667.4 486.8L668.5 488.5 669.8 489.7 670.5 492.2M670.5 492.2L672.9 489.6 677.5 487.3 681 486.2 683.8 485.4 685.2 480.5 688.8 474 692.7 469.7 696.5 468.5M604.1 305.6L606.4 306.4 609 308.8 613.1 311.4 617.3 311.3 621.3 310.4 627.6 310.7 632.5 312.1 638.8 310.9M603.7 297.7L605.7 297 608.7 296.6 610.4 295 612.9 294 613.7 292 615.4 290 617.3 289 618.5 288M638.3 286.8L640.3 288.8 642 291.2M638.8 310.9L640 307.5 641.7 305.6 641.9 302.6 644.2 299.6 644 297.8 644 295.2 642.7 292.7 642 291.2M454.8 273.2L453.4 272.9 451.3 272.9 449 272.3 446.9 272.7 445.2 272.6 442.9 274.7M428.8 245.9L430.6 250.5 433.6 252.2 436.5 256.4 438.3 259.2 440.8 264.8 443.3 268 443.3 271.9 442.9 274.7M454.8 273.2L457.3 265.3 455.4 256.1 454 250.8 449.6 245.1 452.5 242.2 454.1 237 456.1 231.8 459.9 229.4M435.4 229.5L434.3 232.1 434.7 234.7 433.5 238 433.2 240.3 432.7 241.6 432 243.6 430.4 244.9 428.8 245.9M435.4 229.5L438.1 228.6 438.9 227.3M459.9 229.4L457.3 227.9 456.7 225.8 455 223.9 454.3 222.6M397.5 220.6L404.4 220.8 408.6 219.7 413.3 222.3 418.3 223.8 421.3 225.3 425.6 225 429.5 226.5 435.4 229.5M552.2 206.2L552.6 207.1 556.8 211.2 562.6 212.4 568.1 218.4M572.9 199.3L572.3 200.7 574.3 206.5 572.7 211.5 568.1 218.4M649.1 269.6L646.9 271.5 646 274.5 643.3 275.1 642.5 277 640.2 278M627.5 262L627.5 259.2 629.2 256.5 631.2 254.1 635.1 252.1 636.8 251 638.8 249.6 641 248.8 642.4 247.7M649.1 269.6L650.4 267.4 650.1 264.4M642.4 247.7L642.8 249.9 645 252.2 646.6 254.7 646.4 257.4 646.4 259.3 647.5 262.2 648.6 263.2 650.1 264.4M652.3 163L649.7 164.1 647.2 164.6 645.5 166.8 642.4 166.8 641 167.7 638.5 168.2M621.9 165.6L623.4 165 638.5 168.2M920.9 234L905.9 225.3M905.9 225.3L901.2 227.6 898.5 230.8 896.3 232.9 894.8 236.2 892.7 237.3 891.4 239 889.9 241.1 887.2 243.2M883.1 280L879.5 278.5M887.2 243.2L886.1 248.4 882.6 252 882.5 256.8 881.8 261.9 881.4 265.7 880.3 269.9 880.3 274.1 879.5 278.5M391.4 354L392.6 355.2M392.6 355.2L391.6 361.2 387.6 365.9 386.7 368.8 387 373.3 384.5 379 382.1 383.7 381.1 388.2M382.5 399.2L383.2 400.6M392.6 355.2L394.8 356 397.6 355 400.3 354.6 402.3 355.5 404.1 356.2 405.6 357.3 407 359.4 409.2 360.7M409.2 360.7L407.9 363.5 406.6 364.9 407.8 367.8 407.2 370.6 407.8 374.1 407.6 377.1 409.3 379.6 409.3 384M383.2 400.6L384.9 400.2 386.9 399.5 389 400 390.4 400.3M391.6 399.9L393.3 398.7 396 398 398.7 396.4 399.9 393.5 400.5 391.1 402.7 388.4 405.6 386.1 409.3 384M617.8 581.2L619.8 577.8 619.6 574.8 622 572.3 622.4 568.6 624.7 567.3 626.4 565.6 626.4 562.6 627.5 559.5M617.8 581.2L617.6 578.1 617.2 574.9 615.2 572.4 614.4 568.3 610.2 566.1 608.8 561.9 604 559.1 600.3 556.5M627.5 559.5L624.5 558.2 622.1 556.2 618.5 556.7 613.9 555.9 609.7 552.3 605.6 551.2 602.2 545.4 597.1 543.1M600.3 556.5L598 554.4 597.4 552.4 596.5 549.8 596.4 547.9 597.1 545.9 597.1 543.1M601.1 585.4L600.2 580.2 602.1 574.2 604.3 565.3 600.3 556.5M596.9 542.6L595 543.4 591.8 543.7 589.1 545.6 586 549 583.8 550 582.2 552.4 580.1 553.3 578.3 553M570.2 579.1L570.4 576.9 571.8 573.3 573.4 569.8 577.9 566.8 577.1 563.6 576 560.2 576.9 556.4 578.3 553M646.2 479.9L643.1 485 643.7 489.3 646.1 495.2 648.2 499.6 646.9 503.1 643.3 506.8 641.2 508.7 640.2 512.7M619.6 480.7L621.2 483.6 623.5 485.2 623 488.6 624.1 491.1 625.6 494.4 627.5 496.5 628 500 627.6 504M627.6 504L628.4 506.8 630.6 508.8 632.2 509.8 634 510 636.2 511.2 637.4 512.4M637.4 512.4L640.2 512.7M597.5 539.9L600.5 538.8 603.4 538.4 605.3 537.7 606.8 535.7 608.4 534.4 611.3 533.8 613.5 533 615 533.5M593.3 531L594.4 533.6 595.6 536.1 596.5 538 597.5 539.9M608.3 506.3L610.3 506.4 611.9 506 614.3 507.9 616.4 508.6 618.2 506.2 622.3 503.8 625.3 503.2 627.6 504M593.3 531L596.3 528.7 597.7 526.5 600.4 523.4 603.5 520.1 606.6 517.4 608.2 514.8 609 510.9 608.3 506.3M637.4 512.4L633.3 513.4 629.8 514 625.9 516.5 623.8 520.2 620.3 521.1 616.8 525.3 615.8 529.9 615 533.5M384.6 243.7L385.6 245.3 387.3 246.8 387.8 249.8M428.8 245.9L427.5 247.4 424.8 248.1 422.7 250 420.6 250.7 419.4 251.6 417.6 252M387.8 249.8L392.7 249.4 397.3 249.4 399.9 248 402.7 245.8 405.7 249.8 408.5 251.5 413.9 250.3 417.6 252M442.9 274.7L440.8 276.8M440.8 276.8L437.9 277.3 436.4 278.5 432.6 280.2 429.9 280.1 427.4 282.9 422.9 283.6 417.9 282.9 413.5 280.8M417.6 252L416.8 256.6 417.3 260.4 416 264.3 414.7 267.5 415 270.1 415.2 274.2 415.2 277.9 413.5 280.8M509.9 332L514.1 331.1 518.3 332.3 521 331.6 523.7 329.5 524.7 327.2 527.1 323.9 528.9 323.3 531 322.3M509.9 332L509.1 330.7 508.7 328.8 507.6 327.3 505.3 326.7 503.5 325.6 500.7 324 498 322.9 495.8 323.8M501.1 309.1L499 311 498.9 314.1 496.9 314.4 495.7 315.9M495.8 323.8L494.5 321.9 494.2 320.4 494.7 318 495.7 315.9M424.5 335.2L427.3 340.7 433.8 345 437.3 345.4 442.7 346.9 448.4 345.8 454.7 343.7 458.2 344.9 462.8 344.9M424.5 335.2L426 340.1 426.3 344.3 426 347.2 423.2 350 419.4 351.7 416.7 355.1 414.6 357.7 414.7 359.9M428.4 364.2L426.5 362.9 424.8 362.3 422.6 363 421 363.3 420.2 361.7 418.2 360.6 416.8 360.3 414.7 359.9M428.4 364.2L432.1 360.6 437.9 356.6 441.4 354.1 444.8 352.1 448.1 349.1 451.8 348.4 456.8 350.9 463.8 350.6M463.8 350.6L464.5 348.1 463.8 346.3M463.8 346.3L462.8 344.9M418 321.8L421.6 318.4 427.1 318.4 429.9 315.8 433.8 314.6 439.3 316.4 443.4 322.7 449.8 320.6 455.1 322.2M424.5 335.2L423.4 333.7 422.2 331.9 421.3 329.5 420.2 327.9 419.6 326.4 418.1 324 418 321.8M462.8 344.9L463.6 342.9 463.5 339.9 461.8 337.6 460.9 335.3 459.8 332.2 459.1 329.7 457.7 325.7 455.1 322.2M369.5 240.5L367.6 241.7 366.7 243.8 364.1 246.2 362.6 247.9 360.9 249.5 360.1 251.3 357.9 252 355.6 253.7M360 228.6L353.2 229.4 348.7 233.2 345.5 234.7 341 235.5 337.8 237.1 333.9 238.8 331.1 237.8 328.8 237.5M335.9 251.2L337.8 250.7 340.8 250.3 343.4 251.8 347.6 254.1 350.1 253.2 351.8 252.9 354.2 253.2 355.6 253.7M335.9 251.2L335.2 249.9 335.1 247.6 334.4 245.6 332.3 244 331.1 242.8 329.3 241.6 328.4 239.6 328.7 237.8M329.6 269.4L331 268.5M331 268.5L332.3 266.2 331.7 263.4 333.3 260.7 333 258.5 333.2 256.5 335.2 254.7 335.8 252.7 335.9 251.2M300.8 264.8L301.3 262.2 303.3 260.6 302.7 257.9 302.6 254.6 304.8 253.6 305.8 252.2 306 250 306.8 246.5M328.7 237.8L325.4 238.6 322.9 237.6 321.7 238.9 319 239.4 315.2 241.5 311 241.9 309.2 245.2 306.8 246.5M285.6 228.8L287.8 230 291.5 232.2 296.2 232.9M296.2 232.9L296.3 235.5 296.6 237.5 298.1 239.8 299.9 242 301.6 241.8 303.4 242.7 304.4 244.5 306.8 246.5M689.9 504.5L687.3 505.3 685.6 506.1 683.5 507.7 681 510.1 679.5 511.1 678.5 513.4 676.1 514 675.1 515.3M689.9 504.5L692 503.4 694.4 501.8 696.9 503 699.6 502.5 702.8 504.3 706.3 504.5 709.4 503.4 712.7 504.9M712.7 504.9L714.2 505.5 715.7 506.6 717.2 508 718.3 510M718.3 510L717.3 512.2 714.3 514.7 712.4 516.9 711.1 518.4 710.1 522.9 707.7 525.2 707.8 530.2 708.2 533.8M670.5 492.2L669.9 493.8 670.3 496.1 668.6 498.8 668.6 501.1 668 504.1 667.7 507.9 670.4 511 671.5 514.3M702.1 485L700.2 484 698.2 481.7 697.7 479.7 696.8 478.1 696.9 475.2 698 473.2 696.6 471 696.5 468.5M671.5 514.3L673.1 514.5 673.2 514.6M702.1 485L701.5 487.2 699.3 489.8 698.8 491.7 698.4 493.5 697.4 496.3 696.9 499.1 693.5 500.5 689.9 504.5M711.4 489.1L709.3 488.3 707.5 487 705.8 486.4 704.1 486 702.1 485M711.4 489.1L710.3 491.9 710 494.4 708.7 496.8 709.1 498.5 710.6 500.1 711.9 501.7 711.9 503.2 712.7 504.9M734.2 484.5L732.5 486.6 729.3 487.5 727.5 490.1 724.5 490.9 721.9 490.7 718.9 490.5 715 490.1 711.4 489.1M739.2 502.1L737.1 503.5 734.2 504.5 732.7 506.5 732.1 509.4 729.2 509.9 725.1 508.1 722.3 509.3 718.3 510M734.7 533.2L730.5 532.6 727.1 534.8 724.5 534.9 722.2 535.3 719 534.2 714.2 536.2 711.2 535.5 708.8 535.2M470.9 214.7L474.7 214.4 480.4 215.1 484.9 219 490 224.3 499 225.7M478 245.1L475.8 241.3 474 239 472.1 237.1 468 236.3 466.3 235.4 463.9 234.2 461.8 231.8 459.9 229.4M478 245.1L481 244.5 483.4 243.9 485.6 245.4 487.5 246.2 488.9 245.7M488.9 245.7L490 242.9 489.9 239 489.9 234.4 491.7 231.7 494.5 230.6 496.5 230.1 497.4 228.3 499 225.7M536.3 225.2L533.7 223.2 533.4 221 532.7 219.8M536.3 225.2L537.8 228.5 538.2 230.8 540.5 235.5 539.3 239.7 536.9 243.5 534.1 249.5 532.6 254.7 529.6 259.5M523.5 259.9L520.9 256.9 519 251.1 522.7 244.3 521.2 237.5 521.6 233.1 519.3 227.3 516.6 224.6 514.6 222.5M523.5 259.9L525 259.5 527.3 259.9 529.6 259.5M557.7 237.9L553.7 236.8 550.6 236 547.8 236.5 543.9 235.4 541.1 234.3 538.1 231.2 537.2 227.7 536.3 225.2M532.5 260.4L537.1 259.1 540.2 255.7 544 255 548.4 254.6 551.9 249.9 556.5 247.8 556.4 242.6 557.7 237.9M532.5 260.4L529.6 259.5M501 254L502.8 251.6 504.6 248.5 507.8 243.3 510.4 239.6 510.8 235.4 511.2 230.1 512 225.8 514.3 222.9M508.7 266.6L507.5 264.5 505.9 263.7 504.5 261.3 504.3 259.5 503.3 257.1 502.8 255.6 501 254M508.7 266.6L510.3 265.7 512.7 264.9 514.9 263.5 516.3 262 517.5 260.7 519.7 259.8 521.1 260 523.5 259.9M538.9 266.2L538.4 263.7 536.6 262.1 534.6 261.3 532.5 260.4M506.9 270.5L507.6 268.7 508.7 266.6M499 225.7L500.6 225 502.4 223.6 505.5 222.5 505.6 222.4M501 254L498.9 253.3 497.6 252.9 496.5 250.9 494.3 248.7 493.1 247 491.4 246.1 488.9 245.7M638.5 168.2L637.4 169.5 635.8 171.7 633.5 171.9 632.1 172.3 632.4 175.7 631.1 178.6 630 180.5 627.8 181.8M617.4 180.5L622.9 179.8 627.8 181.8M623.9 203.6L625.2 200.7 625.9 196.9 626.7 194.4 627.4 192.4 627.3 190.6 627.9 189.2 628.4 187.5 629.1 185.3M627.8 181.8L629.1 183.4 629.1 185.3M595.7 193L596.3 193.2 597.2 196.5 599 199.5M623.9 203.6L620.7 204 617.7 206.3 614.8 205.7 612.2 205.2 609.4 204.1 606.2 203 604.2 202.6 601.3 201.1M601.3 201.1L599 199.5M599 199.5L596.5 200.1 593.9 202.5 592.3 203.5 591.1 205.4 590.9 209.7 589.4 212.9 589.1 216.8 589 219.6M568.1 218.4L568.2 220.9 569.3 222.6M569.3 222.6L571.6 221.4 573 220.2 575.4 220.4 577.9 220.5 581 219.9 584.3 218.1 586.7 218.8 589 219.6M557.7 237.9L560.8 237.5 562.8 237.8 564.5 238.6M569.3 222.6L568.9 226 566.7 228.5 565.9 230.4 563.8 231.5 563.4 233.6 562.8 235.2 563 237 564.5 238.6M570.3 275.7L570.4 270.1 569.6 266.5 571.2 263.8 573.4 260.9 572.8 253.8 569.4 249.8 565.7 246 565.5 239.9M565.5 239.9L564.5 238.6M629.1 185.3L631.3 187.3 635.6 187.7 637.1 190.1 638.8 192.8 642.1 192.6 644.5 194.2 645.7 195.8 647.3 196.8M623.9 203.6L624.1 206 625.4 207.3 627.5 208.9 629.5 210.9 631.6 211.6 633.3 212.8 635 213.5M647.3 196.8L645.9 198.7 644.3 199.8 644.5 203 643.2 204.6 641.4 205.8 640.6 208.7 638.2 211.1 635 213.5M654.3 163L653.7 167.3 656.3 171.4 656.6 175 657.2 179.3 658.4 181.6 660.2 184.8 660.2 188.4 659.9 191.1M647.3 196.8L649.8 197.6 651.2 197.5 653.3 196.7 654.6 195.5 655.5 193.7 657.5 192.3 659.9 191.1M612.7 227L611.7 224.2 612.6 220.5 609.6 217.7 607.5 214.6 603.9 211.5 601.6 208.3 600.9 204 601.3 201.1M612.7 227L615.6 225.6 618.2 224.7 621.4 224.1 624 224.5 627.3 225.3 630.1 225.3 633.2 224.4 636.4 225.5M635 213.5L636.6 215.2 637.3 218.2 637.7 220.6 637.3 222.2 637.3 223.8 636.4 225.5M659.9 191.1L661 192.3 663.1 193.4M636.4 225.5L637.9 227.2M637.9 227.2L641.8 225.3 645.5 222.5 647.8 219.7 650 217.5 653.1 215.8 655.4 215.1 659.6 212.8 663.9 213.4M663.9 213.4L663.6 210.6 664.5 207.9 664.4 205.1 666.4 202 666.2 198.8 664.6 197.3 664.4 194.7 663.1 193.4M936.3 112.5L929.3 122.1M929.3 122.1L929.4 123.8 930.1 126 931.9 126.9 933.1 129.7 933.1 132.2 932.9 135.8 933 138.8 932.7 140.8M940.8 146.4L940.4 144.8 936.4 142.6 932.7 140.8M942.3 168.6L941.3 168.6 938.4 167.5M935.7 166.5L934.8 166.2 930.5 165.8 925.4 167.3 920.8 165.1M932.7 140.8L927.7 143.1 924.1 144.6 921.2 143.9 917.5 142.5 915.8 142.2 913.6 142.5 911.1 142.4 907.8 143.4M920.8 165.1L918.8 163 917.5 161 917.2 158.9 916.3 157.8 915.4 155.9 913.1 154.8 911.8 153.1 910.4 152.9M910.4 152.9L911 150.3 910.4 148.2 908.8 145.5 907.8 143.4M734.2 484.5L730.5 482.8 725 480.8 722.8 474.3 719 471.3 716.4 468.3 714.6 466 709.3 464.6 706.4 461.9M726.1 447.2L716.5 454.4 706.4 461.9M696.6 468.2L698.4 467.9 700.6 467.4 700.8 465.8 702.2 463.9 704.2 462.3M706.4 461.9L704.2 462.3M540.9 347.8L539.7 348.6 538.2 349.7 536.9 349.8 535 349.4 533.5 351 531.8 353.2 530.8 354.2 529.4 355.6M543.7 380.6L541.8 380.1 540.8 378.7M552.5 372.2L551 373.7 550.1 374.8 548.7 377.2 547 379.3 545 379.6 543.7 380.6M540.8 378.7L539.4 376.3 538.3 374.8 537.3 371.8 535.5 369.9 534.5 366.8 533.5 363.2 531.9 359.1 529.4 355.6M513.5 346.5L514.6 348.2 516.2 348.6 516.7 350.9 518.8 352.4 520.8 353.1 522.2 355.5 526.1 354.6 529 355.6M513.5 346.5L512.5 345.4 511.1 343.8 510.4 341.4 508.6 339.1 509.3 336.9 510.6 335.8 510.8 333.4 509.9 332M628.8 425.3L626.7 425.5 624.2 424.5 621 423.4 618.5 421.7 615 421.4 613 419.7 610.5 419.1 608.6 418.7M628.8 425.3L631.3 424.5 633.3 423.5 634.8 422.8 637.2 422.5 639.6 422 641.7 421.4 643.6 422.2 644.9 423.2M647 418L642.3 418.4 636 416.5 631.4 413.4 628.5 409.2 622.5 408.6 618.7 407.2 613.1 401.7 608 399.5M648.1 418.8L647 420.2 645.7 421 644.9 423.2M608.6 418.7L606.7 417.2 605.5 415.5 603.8 413.5 602.4 412.4 602.4 410.4 602.8 409.2 602.5 406.4 601 404.7M601 404.7L602.5 401.9 604.3 400.4 606.5 400.2 608 399.5M597.8 450.7L599.5 453.3M597.8 450.7L603.3 447.3 606.6 444.7 608.1 440.4 608.3 436.7 607.4 432.4 608.4 428.1 609.8 424 608.6 418.7M599.5 453.3L605.5 450.1 610.1 445.7 613.2 443.1 618.8 439.3 619.3 433.7 623.3 429.6 626.2 428.4 628.8 425.3M606.9 465.6L605.6 464.8 603.3 464.7M603.3 464.7L603.7 463.2 604.3 461.5 603.5 459.1 602.8 457.6 600.3 455.8 599.5 453.3M644.2 429.9L643.9 427.3 644.8 425.8 644.9 423.2M615.7 386.2L614.5 388.1 613.1 389.3 611.7 390.5 609.9 390.6 608.4 393.1 607.8 395.6 608.5 397.4 608 399.5M647.4 394.8L645 390.3 636.5 393.9 630.1 392.6 622.8 387.3 615.7 386.2M593.3 531L591.8 529 591.9 527.2 591.6 525.5 590.7 524.2 588.9 523.1 586.2 521.3 584.5 520.6 582.2 520.1M582.2 520.1L581.5 517.4 581.8 515.4 580.8 513.6 580.7 511 580.7 508.3 581.8 506.8 581.8 503.7 579.8 500.9M608.3 506.3L605.3 503.8 602.8 498.7 600.9 496.2 601.1 493.1 598.4 493 596.4 491.7 593.9 491.2 590.6 489.6M579.8 500.9L581.6 498.7 581.4 496.2 582.5 494.7 585.2 493.3 587.8 492.9 588.9 490.5 590.6 489.6M603.3 464.7L601.6 464.6 599.8 465.9 599.4 467.1 599.2 469 597.1 470.6M590.6 489.6L590.8 487.3 591.9 485.2 593.6 483.5 594.6 482.2 596.3 480 596.5 476 596.9 472.9 597.1 470.6M590.4 445L588.2 444.8 585.6 444.7 584 445.5 581.9 444.7 579.6 444.4 578 443.4 576 443.7 574.1 444.3M590.4 445L592.1 446.7 594.3 447.8 596.4 449.5 597.8 450.7M574.1 444.3L572.8 446 570.9 447.5 568.1 449.2 564.9 449.9 562.8 451.1 560.9 453.2 560.4 455.1 559.4 456M562.1 462.9L562.7 460.9 561.9 458.8 560.3 457.4 559.4 456M562.1 462.9L563.9 464.7 565.3 467.1 566.7 468.8 568.2 469.2 570.4 469.2 571.9 470.1M571.9 470.1L573.9 468.9 576.7 467.3 579.7 466.9 583.8 465.4 587.6 465.5 590.7 466.5 592.6 469 597.1 470.6M563.3 525.1L560.7 522.9 559.9 520.2 559.3 515.8 558.3 513.2 555.8 512.7 552.9 511.8 550.3 509.6 549.7 507.5M582.2 520.1L578.4 521.1 576.1 522.8 575.2 524.4 573.1 525.9 571.5 526.2 569.3 525.4 566.8 524.2 563.3 525.1M579.8 500.9L577.2 501.4 573.4 501.5 570.9 501 569.5 499.6 567.1 498.6 565.6 497.4 564.1 497.4 562.5 496M549.7 507.5L550.6 505.1 552.9 503.1 555.3 502.3 556.8 501.2 557.9 500.5 559.6 499.5 561.3 498.3 562.5 496M571.9 470.1L570.5 472.8 570 475.5 567.1 476 563.7 479.2 562.3 481.8 561.7 484.7 560.1 486.6 559.5 488.1M559.5 488.1L560.6 490.1 560.1 492.4 561.5 494.2 562.5 496M597.5 539.9L596.9 542.6M578.3 553L575.6 552 573.4 552.6 570.9 550.6 567.5 550.2 565.1 548.4 562.7 547.9 559 547.4 555.7 544.8M563.3 525.1L562.2 526.5 560.9 528.8 559.2 529.6 558.2 531.4 556.4 533.6 555.8 536M555.8 536L554.5 537.7 554.8 540.5 555.1 542.8 555.7 544.8M555.8 536L552.1 535.2 549.4 533.3 546.6 532.6 543.7 533.1 543.2 529.4 540.2 524.8 537.7 522.8 533.3 520.7M549.7 507.5L547.2 508.3 544.9 509.8 541.8 510 539.9 508.7M539.9 508.7L537.2 510.1 536.2 512.5 535.2 513.9 535.3 517.1 534.5 518.7 533.3 520.7M659.3 516.4L654.2 520.3 649.8 525.7 649.8 530.5 648.6 538.3 652.3 541.6 653.2 545.3 653 551.1 653 558.2M659.3 516.4L656.6 516.7 655.1 518.1 652.9 518.3 650.7 518.2 649.8 517.2 648.3 517 646.9 515.5M646.9 515.5L645.5 521.3 643 526.5 637.9 529.2 635.5 531.8 636.8 536.6 638.3 541.6 637.6 545.9 637.4 550.8M647 559.5L644.7 558.6 643.4 557.8 641.2 555.6 638.3 554.5M647 559.5L648.7 559.7 650.6 559.3 653 558.2M638.3 554.5L638.1 552.9 637.4 550.8M664.3 558.1L657.5 558.4 653 558.2M671.5 514.3L669.5 515.8 667.5 515.9 666.4 516.7 664.8 517.8 662 516.7 659.3 516.4M640.2 512.7L643 514.1 645.5 514.6 646.9 515.5M615 533.5L617.7 537 620.6 540.9 623.4 543 624.7 547.6 628.3 547.1 630.8 547.4 634.6 549.6 637.4 550.8M642 581L643.6 578.2 645.3 574.3 647.4 572.3 648.4 569 648.3 567.2 648.4 565.2 648.8 562 647 559.5M627.5 559.5L629.8 559.1 632.1 558.4 633.9 555.8 635.9 555.8 638.3 554.5M355.6 253.7L354.6 257.6 354.1 260.9 354.1 262.9 354 265.8 356 268.3 356.9 270.1 357.3 273.2 357.4 277.7M387.8 249.8L388.1 252 387.1 254.7 386.2 256.2 385.8 258.9 386.6 260.7 387.2 262.4M387.2 262.4L383.6 264.1 381.8 268.4 378.1 270.9 375.9 275.6 370.5 275.1 365 274.6 361 277.6 357.4 277.7M344.1 298.1L345.7 295.9 345.6 294.1 346.4 292.2 347.4 290.2 349.5 289.2 351.8 289.4 354.3 286.2 357.2 285.7M361.3 324.6L362.3 320.7 361.1 315.8 363.3 314.1 364.1 311.1 365 307.6 363.9 303.6 366.5 299.6 368.5 292.9M368.5 292.9L366.1 292 364.3 290.2 363.4 288.8 363.2 286.5 361.8 286.5 359.9 285.9 357.2 285.7M331 268.5L333 272.3 335.8 273.2 337.7 274.5 339.4 277.1 343.1 278 346.6 278.8 352.3 279.1 356.7 279.1M357.2 285.7L357.4 282.6 356.3 280.6 356.7 279.1M357.4 277.7L356.7 279.1M477.9 299.6L475.4 301.4 474 303.1 471.8 304.5 470.6 305.6 467.5 305.2 465.4 304.3 463.2 304.6 461 306.7M477.9 299.6L480.2 297.2 481.3 295.4 482.3 293.6 482.8 292 481.1 289.1 479.9 286.6 480.7 283.5 481.3 279M461 306.7L460.7 301.5 458.5 298 457 295.4 455.6 292.5 456.5 287.2 454.7 283.3 456.1 279.1 455.9 273.6M481.3 279L479.2 278.2 477.2 278.3 476.6 275.8 474 274.1M474 274.1L471.8 272.8 468.2 273.3 466.3 274.6 464 275.1 462 275 460.2 274.3 458.6 273.8 455.9 273.6M455.1 322.2L456.2 319.9 455.8 317.1 454.8 315.7 455 313.1M455 313.1L456 311.6 457.4 310.7 458.5 308 461 306.7M495.8 323.8L490.8 326.2 486.4 328.3 483 326.5 479.2 326.6 471.6 328.9 467.5 334.4 464.5 338.8 463.8 346.3M495.7 315.9L494.7 312.1 494.6 309 492.8 306.8 490.3 305.5 488.1 303.8 485.5 303 482.2 301.1 477.9 299.6M496.6 276.2L494.3 276.1 491.7 276.1 489.7 276.8 488.3 278.5 485.2 279.3 483.4 278.9 481.3 279M440.8 276.8L440 279.6 437.3 281.3 436.4 283.9 435.7 286.8 435.2 290.2 434.6 293.4 437.4 295.9 439.8 301.3M439.8 301.3L440.9 302.5 442.5 303.9 444.4 306 446.1 307.6 447.7 309.3 450.8 311.1 452.7 312.5 455 313.1M478 245.1L480.9 250.4 479.5 255.6 478.4 259.8 477.3 262.9 477.1 265.6 475.7 268.4 474.5 271.4 474 274.1M337.6 214L336.2 209.8 334 204.8 335.1 201.7 334.3 199.3M337.6 214L337 215.7 335.5 217.7 333.2 218.6 329.8 219.4 327.9 221.1 327.7 222.7 327.1 224.8 326.9 227.1M326.9 227.1L325.3 225.4 324.5 222.4 322.6 221.1 321.1 220.6 317 220.6 314.3 218.1 313.2 215 311.3 213.1M311.3 213.1L310.7 211 309 210.1 309.1 207.7 309.6 205.7M309.6 205.7L316.5 198M361.7 215.4L355.7 208.6 346.2 204.5 345.7 197.7M359.3 222.3L356.1 220.5 353.1 220.1 350.5 218.3 346.9 217.6 345.3 215.9 342.7 215.3 339.8 214 337.6 214M328.8 237.5L328.3 235.1 327.3 232.7 327.2 230.5 326.4 228.5 326.9 227.1M296.2 232.9L300.6 230.2 303.1 226.7 303.6 223.9 305.7 221.6 307.8 218.8 310.3 217.5 310.8 215.3 311.3 213.1M285.6 214.7L291.3 212.3 297.8 208.7 304.1 206.1 309.6 205.7M602.9 237.7L600.8 237.1 599 237.5 596.7 237M602.9 237.7L603.6 239.3 605.2 240.3 605.2 242.1 607.1 243.9 608.5 246.2 609.1 248.4 609.6 250.5 610.9 251.6M585.2 275.9L585.5 271.4 584.9 268.1 587.2 263.7 588.5 258.7 587.8 254.5 586.3 249.7 589 245.5 592.3 239.4M585.2 275.9L588.7 272.7 590.3 269.3 591.9 266.3 595.4 265 600.6 263.6 604.9 260.9 608.8 260.2 611.4 257.5M592.3 239.4L594.4 239.3 595.6 238 596.7 237M611.4 257.5L611 255.5 612 253.9 610.9 251.6M589 219.6L588.8 221.9 590.3 224.8 592.2 226.2 593.7 228.5 594.8 229.8 596.2 231.3 597.3 234.7 596.7 237M612.7 227L612.2 228.9 610.9 230 608.8 232.3 606.3 234.2 604.9 236.6 602.9 237.7M640.2 233.9L639.8 231.1 639.7 229.3 637.9 227.2M640.2 233.9L639.1 237.7 636.1 242.9 629.7 244.1 626.6 247.6 621.9 248.2 617.6 249 614 250.4 610.9 251.6M565.5 239.9L568.5 241.6 571.4 240.9 574.6 241.8 578.3 243.3 581.6 242.4 584.5 239.8 587.8 239.5 592.3 239.4M619.4 262.5L617.1 261.6 616 260 613.4 259.3 611.4 257.5M642.4 247.7L642.5 245.6 643.9 243.2 643.6 241.4 644 239.1M640.2 233.9L641.2 236 641.7 237.6 644 239.1M675.3 457L678.1 453.2 680.3 446.4 685 440.8 686.2 435.6M614.3 372.7L618.2 371.2 621.2 368 626.7 364.9 628.8 358.4 633.5 357.3 637.9 355.7 641.1 356.5 644.6 355.7M614.3 372.7L613.9 374.4 613.8 376 613.1 377.6 613.3 380.3 614.4 381.8 615.3 382.8 615.2 384.7 615.7 386.2M660 369.3L655.1 367.5 647.6 363.7 644.6 355.7M612.5 371.7L614.3 372.7M629.8 338L631.1 337.4 633 336.8 634.9 337.5 637.5 338.6 639.1 339.6 640 340.6 641.4 342 644.2 342M644.6 355.7L644.9 352.6 645.2 350.2 645 347.3 643.5 345.5 644.4 343.5 644.2 342M704.2 462.3L698 455.9 697.6 448.9M638.8 310.9L638.5 313.3 639.8 315.4 642.4 316.1 644.2 318.7 646.9 322.7 649.4 325.4 648.6 328.1 649.3 331.4M649.3 331.4L648.8 333.1 649.7 334.7M644.2 342L646.5 340.1 648.3 339.2 649.5 336.8 649.7 334.7M854.4 297.1L853.8 296.6 841.5 293.5 830.3 286.9 818.6 286.6M818.6 286.6L817.1 290.4 816.3 296 812.5 297.3 809.9 301.4 809 307 809.4 307.6M906.8 202.4L905.3 200.4 904 199 901.2 198.3 899 197.8 897.2 197 896.3 195.6M906.8 202.4L909.6 201.9 911.3 200.9 913.1 199 914.9 197 917.6 195.9 920.2 196.6 921.3 194.7 922.8 194.1M896.3 195.6L897.5 194.2 899 193.7 901.2 191.8 901.3 189.8 903.9 187.3 905.9 185.4 907 182.3 906.2 179.9M922.8 194.1L920.8 192.8 919.7 190.4 917 189.7 915 187.6 913.3 185.8 912.8 183.8 912.3 181 913.1 179.3M913.1 179.3L911.6 179.1 909.4 179.2 907.8 179.4 906.2 179.9M904.9 223.5L904.9 221.1 905.7 218.3 904.9 216.1 905.5 214.5 904.7 211.5 906.2 208.5 907.3 206.1 906.8 202.4M904.9 223.5L902.3 222.3 898.3 222.8 894.9 220.7 893.4 217.9 890.7 216.6 887.4 215.2 885.4 211.5 883.8 208.5M883.8 208.5L884.7 207.1 885.4 204.8 887.1 204.7 888.8 203.1 887.7 201 888.1 198.9 888.6 197.6M888.6 197.6L890.2 197.1 892.6 196.9 894.4 196.6 896.3 195.6M929.6 197.9L922.8 194.1M905.9 225.3L904.9 223.5M920.8 165.1L918.6 167.2 917.9 169.1 917.1 170.5 915.6 172.2 914.5 173.7 912.8 176.6 913.1 179.3M887.2 243.2L884.6 240.4 883.5 238 883 235.1 882.4 233.4 879.5 229.2 878 225.7 875.5 224.3 872.7 223.3M883.8 208.5L881.4 209.5M872.7 223.3L872.8 220.3 874.5 217.9 875.4 216.5 877.2 215.1 879 213 880.1 211.1 881.4 209.5M562.9 432.4L561.4 433.2 559.5 432.7 557 431.2 555.2 430.3 552.5 430.6M562.9 432.4L565.8 431.5 567.3 429.9 570.5 428.3 571.4 426 575.1 423.6 578.5 422.9 580.1 419.4 581.8 415.2M552.5 430.6L550.4 425.9 549.1 421.3 547 418.8 545.1 415.8 546.6 412.2 546 409 545.5 406.6 547.2 403.7M578.4 399.9L580.3 400.9 581.6 401.8 582.8 403.9M578.4 399.9L576.5 402.3 572.1 402.8 568.6 403.8 565.8 407 560.9 407 555.5 406.3 551.1 405 548.1 402.7M581.8 415.2L581.9 412.9 582.3 409.9 582.2 408.6 582.6 406.6 582.8 403.9M559.4 456L556.9 456 554.5 454.6 551.1 455 549 453.6 546.1 452.3 543.3 451.2 542.4 449.3 541.1 447.5M541.1 447.5L541.8 444.6 542 442.6 544.3 439.1 546.6 436.7 548.6 436 549.8 434.4 550.7 432.6 552.5 430.6M574.1 444.3L573.9 442.4 573 439.7 571.9 437.8 569.9 436 568.4 435.3 566.3 435.2 564.9 433.1 562.9 432.4M590.4 445L586.7 441.5 583.8 438.5 581.3 436 581.1 432.2 583.2 428.9 583.1 424.9 582.5 419.3 581.8 415.2M580.1 382.8L579.7 385 581.1 388 581.5 390.4 582.5 393.7 582 395.2 581 396.6 579.7 397.8 578.4 399.9M601 404.7L598.9 406.5 595.4 407.8 593.5 407.6 591.2 407.3 588.4 406.7 585.7 406.6 584.3 405.6 582.8 403.9M543.7 380.6L543.9 383.3 543.1 387.1 542.9 390 542.5 392.1 543 394.3 544.6 397.4 547.3 399.8 548.1 402.7M530.6 460.5L532 462.6 533.9 464.9 536.3 467.2 538.2 470.2 542.9 472 545.4 473.9 548.1 474.1 550.8 474.8M530.6 460.5L533.1 464.6 534 469.2 533.7 474 532.9 477.1 532.3 480.4 532 484.2 531.6 487 531.9 488.8M531.9 488.8L535.5 487.3 537.8 485.6 541 485.3 543.8 486 546.3 486.2 548.5 484.4 550.7 483.8 552.2 483M550.8 474.8L550 477.1 550.9 479.6 551.5 481.7 552.2 483M559.5 488.1L558.5 486.6 555.9 485.6 553.9 483.9 552.2 483M530.1 492.2L530.6 493.8 531.6 495.7 532 498.4 532.9 501.5 535.5 502.3 537.3 505.5 538.9 507.3 539.9 508.7M530.1 492.2L530.4 490.2 531.9 488.8M562.1 462.9L562.2 465 562.1 467.5 561.2 469 559.9 470 557.1 472.1 554.7 472 553.4 473.9 550.8 474.8M427 524.5L428.8 522.2 429.7 518.7 430.4 513.1 429 509 431.9 505.9 433.5 503.2 436.3 497.8 439.4 493.2M427 524.5L422 520.2 419.5 513.8 416.6 506 411 501.5 406.9 497.4 404.6 496.6M410.2 483.1L414.2 485 419.4 487.4 425.7 487 429.4 485.1 434.3 486 437.1 488.3M439.4 493.2L437.9 490.6 437.1 488.3M466.1 521.4L459.5 528.6 455.1 532.8M466.1 521.4L466.7 519.3 466.7 517.6 465.3 515.7 465.5 512.6 464.7 509.3 463.8 506.6 465.7 503.6 465.8 501.2M465.8 501.2L461.5 500 458.8 498.6 456.5 496 452 495.5 447.7 493.6 445.3 492.2 442.8 492.6 439.4 493.2M432.1 545.7L432.2 545.2 427.5 535.5 427 524.5M528.3 568.8L529.2 570.1 530.6 573 534.1 574 537.9 575.5M535.6 550.9L536.4 550.5 540.3 551.5 542.7 550.2 545.6 550.6 548.4 550.7M537.9 575.5L539.6 573.7 541.3 572.9 544 572.2 546.6 570.6 548.1 568.4 550 568.2 552.3 566.5M552.3 566.5L551 564.7 550.8 563 549.6 561.6 548.7 558.9 548.8 556.4 548.2 554.6 548.4 552.8 548.4 550.7M544.6 590.2L543.3 588.2 537.9 575.5M533.3 520.7L531.4 521.2 529.7 522.4 527.5 524.1 526.7 525.6 524.6 526.2M524.6 526.2L523.2 529.2 523.1 529.5M555.7 544.8L554.1 546 552.3 546.8 550.6 549.4 548.4 550.7M569.4 579.7L569.1 579.2 566.8 577.2 563 575.6 560.2 574.1 558.5 572.6 555.5 571.3 554.1 569 552.3 566.5M478.1 535.5L478.5 534.2 482.6 533.8M490.4 532L500.8 521.7M500.8 521.7L503.4 522 506.8 523.9 510.7 525.2 513 527 517.1 526.5 519.7 527.7 522.1 527.4 524 525.8M390.4 400.3L393.3 401.4 395.3 403.6 398.6 406.1 403.3 408.4 405.1 412.7 405.9 415.9 408.8 419.2 413.5 423.4M413.5 423.4L408 426.5 400.5 430.2 394.1 436.4 393.5 436.7M439.6 481.3L438.3 482.9 438.1 484.8 437.2 486.5 437.1 488.3M434.3 457.4L433.4 461 433 463.7 433.5 465.8 432.9 467.9 433 472.4 435.1 475.1 436.3 479.1 439.6 481.3M434.3 457.4L432.4 456.4 431.6 454.3M428.1 455.2L431.6 454.3M513.5 346.5L511.1 348.5 510.4 351.3 510.7 353.7 508.9 356.3 506.1 359 502.6 361.4 498.6 364.1 495.4 364.9M463.8 350.6L464 353 466 355.2 467.3 356.6 468.3 358.8M468.3 358.8L470.8 359.9 474.6 360.8 476.7 362.2 479.4 363.6 483.2 363.7 488.2 361.1 493.1 362.1 495.4 364.9M535.9 406.5L538.6 405.2 540.7 404.9 542.6 403.2 544.5 403.1 547.2 403.7M535.9 406.5L531.3 406.2 527.2 409.3 525.1 413.3 522.8 415.4 521.3 418.7 518.5 422.7 518.7 426.5 519.2 429.4M541.1 447.5L539.3 448.8 537 449 534.2 449.8M519.2 429.4L519 432.6 519 435 521.9 436.8 522.8 440.7 524 444.5 526.3 445.9 529.1 449 534.2 449.8M530.6 460.5L529.8 458.6M529.8 458.6L531.4 456.1 531.4 454.1 532.6 451.5 534.2 449.8M381.1 317.3L381.7 315.2 384 312.9M368.5 292.9L370.5 292.7 372.9 293.6M384 312.9L382.2 310.9 382.3 307.9 380.3 306.2 376.8 303.7 376.2 302.2 375.5 299.7 374.2 296.4 372.9 293.6M861.1 90L867 97.2M872.8 141.5L873.1 135.2 874.3 129.9 872.9 124.9 872.8 120.7 868.3 116.7 866.5 111.4 865.5 105 867 97.2M837.1 116.6L838.8 118.4 857.2 122.8 872.8 141.6M685.9 193.4L683.6 193.5 680.8 195.1 678.2 196 675.7 197.6 672.1 196.5 670.1 194.1 666.4 194.4 663.1 193.4M929.3 122.1L927.2 121.7 925.4 121.3 923.6 120.9 921.6 121.1M907.3 142.7L911 141 912.6 138.9 915.6 136 919.1 134.3 919.3 131.5 919.7 128.6 920.5 125.3 921.6 121.1M649.7 334.7L652 334.9 654.1 336 656.6 335.2 660.5 333.4 664.8 334.8 667.9 333.9 670.2 332.3 672.6 332.4M696.9 367.6L696.1 362.1 694.1 354.2 688.9 344 683.7 336.3 672.6 332.4M878.4 277.8L875.6 272.5 873.9 265.6 873.3 256.3 868.7 252 864.4 246.6 858.9 242.5 853.6 242.2 850.1 241.5M872.7 223.3L870.4 223.5M850.1 241.5L852.7 238.2 856 237 859.3 234.2 864.4 233.1 867.3 231.8 868.4 230.2 870.1 227 870.4 223.5M466.1 521.4L468.9 518.3 473.4 515.2 477.8 515.2 482.8 514 486.6 512.5 488.6 510.4 493.9 510.6 497.2 509.1M500.8 521.7L500.6 518.5 499.5 516.5 498.7 513.5 497.5 511.6 497.9 509.5M524 525.8L523 522.8 522 520 520.6 517.9 520.7 515 519.6 511.1 516.9 507.8 514.1 505.1 511.6 503.9M497.9 509.5L499.5 510.5 501.5 510.8 504.1 508.9 506.8 508.8 507.5 506.8 508.5 505.5 509.8 504.4 511.6 503.9M530.1 492.2L528.7 491.4 526.5 491.3 524.1 491.2 522.1 492 520.3 491.8 518.8 491.5 516.2 493.2M516.2 493.2L515.5 495.9 514 497.2 513.6 498.7 512.9 500.2 512 501.7 511.6 503.9M466.7 371.7L467 375.3 466 379.2 466.1 381.2 467.6 383.8 468.3 385.6 469.5 388.3 470.6 391.2 470.7 393.3M466.7 371.7L461.4 372.2 455.2 374.6 449.5 374.9 445.8 378.6 441.9 382.2 439.9 385.2 436.3 387.1 432.7 390.2M469.5 396.2L470.7 393.3M469.5 396.2L465.6 400.3 461.5 401.8 459.1 404.2 455.8 405.4 449.6 406.1 442.8 405.6 438.8 407.5 433.2 407.4M432.7 390.2L432.2 393.2 431 395.5M431 395.5L430.7 397.7 432 399.5 432.3 402.4 432.3 405.6M432.3 405.6L433.2 407.4M468.3 358.8L468.5 360.6 467.6 362.7 466.6 364.6 466.2 366.6 466.4 368.7 466.7 371.7M428.4 364.2L428.3 367.2 428 369.4 429.5 372 429.1 375.4 430.6 379 430 381.9 430.3 387.5 432.7 390.2M409.2 360.7L411.8 360.4 414.7 359.9M409.3 384L412.1 385.6 414.8 387.4 418.6 387 421.8 388.8 424 389.9 426.9 391.3 429.1 393.7 431 395.5M391.6 399.9L396.5 401 400.1 406.4 406.1 406.8 411.5 405.5 416 404.1 421.3 404.7 427.4 406.8 432.3 405.6M432.8 416.1L430.6 417.5 428.9 418.7 425.8 418 424 418.8 421.2 419.6 418.2 422.5 416.2 422.5 413.5 423.4M432.8 416.1L432.5 414.5 433.7 412.4 433.4 409.4 433.2 407.4M519.2 429.4L515.8 428.7 513.2 427.5 511.1 426.2 509.6 424.2 507.7 425.7 504.9 426.3 501.1 426.9 498.4 426.9M498.4 426.9L498 432.7 500.3 435.9 499.4 440.5 497.8 443.4 499.4 446.6 500.9 452 502.8 455.1 504.6 457.5M529.8 458.6L527.9 457.4 525.4 457.6 524.1 457.8 522.4 459.2 520.8 460.3 518.3 461.9M518.3 461.9L516.5 461.9 514.3 461.1 512.4 461.6 510.9 462.1 508.1 460.8 505.7 459.1 504.6 457.5M516.2 493.2L515.5 491.8 514.2 490.5 512.1 489.5 509.4 488.5 508.6 486.6 507.3 484.6M518.3 461.9L519.9 464.3 519.5 468.6 519.3 470.6 517.9 473.3 515.1 475.6 511.7 478.5 509.5 481.2 507.3 484.6M502.4 407.2L501.7 404.2 500.2 402.8 498 401.2 496.6 399.7 494.4 398.3 492.5 395.2 490 393.9M502.4 407.2L504.1 405.4 506.1 403.1 508.3 400.6 510.5 400.2 511.7 398.6 513.3 397.6 516 396.2M490 393.9L490.6 391.7 493.6 389.5 495.6 385.7 498.4 384.6 500.4 384 502.1 381.4 504.3 380.1 505.2 377M516 396.2L515.4 394.2 514.2 392.5 514.9 390.4 514.9 388.8 513.7 386.9 512.5 384.9 512.9 383.4 512.6 381M505.2 377L507.6 378.1 509.4 378.2 511.3 379.4M511.3 379.4L512.6 381M498.3 426.8L494.9 425.7 491.7 426.6 489.6 427.1 486.4 427.3 484.7 427 483.1 427.8 481.4 428.8 478.9 429.1M498.3 426.8L498.3 423.4 499.7 421.1 500.6 417.6 502.5 415.4 502.3 412.4 501 410.7 501.1 409.2 502.4 407.2M476.8 428.2L478.9 429.1M470.7 393.3L473.4 394.2 475.5 396 479.1 395.8 482.2 396.2 484.1 395.9 485.7 396.3 487.9 395.5 490 393.9M476.8 428.2L475.7 424.9 476.1 419.8 474.4 415.8 470.3 413.9 466.6 408.7 466.3 403.1 466.7 399.7 469.5 396.2M535.9 406.5L533.1 403.1 530.5 401.4 530.1 399.4 528 397.4 526.3 395.5 522.8 394.6 519.4 395.4 516 396.2M495.4 364.9L496.8 366.7 497.7 367.8 499.6 370 501.9 372 504 373.3 505 375.4 505.2 377M540.8 378.7L537.1 378.1 534.4 378.3 530.2 378.8 526.7 376.3 523.4 378 518.9 379.4 516.1 379.2 512.6 381M529 355.6L524.4 357.9 522.5 363.1 519.6 364.7 514.4 365.9 514.4 368.6 514.9 371.9 512.4 374.4 511.3 379.4M460.9 445.2L461.7 443.4 462.6 441.4 463.2 439 464.9 435.8 467.1 433.9 468.1 431.1 470.6 429.3 473.4 429.2M460.9 445.2L459.4 448.5 456.6 450.6 452.6 452.6 447.3 451.9 442.8 451.1 439.1 452.3 436.7 450.7 434.1 449.4M473.4 429.2L467.9 430 463.6 428 459.9 425.9 457.6 422.1 451.9 422.6 447.5 421.7 443.6 422.7 437.5 423.8M434.1 449.4L437.1 445.7 437 441.6 437.5 437 436.6 434.1 436.7 431.3 435.6 428 437.2 426.1 437.5 423.8M431.6 454.3L432.7 451.3 434.1 449.4M461.5 464.8L461.6 463.2 461.9 461.4 462.5 458.8 462.5 456.5 461.3 452.9 459.7 450.8 460.6 447.5 460.9 445.2M434.3 457.4L438 458.1 441.3 462.7 444.5 465.1 447.7 465.6 451.1 465.5 454.2 463.6 458.5 463.2 461.5 464.8M476.8 428.2L475.5 429.1 473.4 429.2M432.8 416.1L434.9 418.2 436.2 419.9 436.8 421.5 437.5 423.8M465.3 475L466.3 477.4 467.6 479 467.5 481.3 468.8 483.5 469.6 485.1 472.5 487 474.9 486.8M465.3 475L465.1 472.4 464.9 469.9 464.2 468 463.4 466.6M463.4 466.6L467.4 464.7 469.9 460.9 470.8 458.3 472.4 455.4 474.7 456.1 477.5 455.3 480 454.2 481.1 452.1M474.9 486.8L477.7 487.4 479.6 486.7 482.8 486.5 485 485M481.1 452.1L482 454.2 483.4 454.8 485 456 486.7 458.4 487 459.8 488.3 461.4 490 462.1 492 463.5M492 463.5L493.8 467 493.3 470.1 493.3 473.5 492.2 476.2 491.8 479.1 489.9 480.8 488.4 482.1 487.6 483.2M485 485L487.6 483.2M465.8 501.2L467.2 499.7 469.3 498.8 471.6 495.8 472.7 493.4 472 491.6 472.6 490 473 488.2 474.9 486.8M439.6 481.3L441.6 482.9 444.7 483.5 448.4 482.6 451.1 481.2 455.8 479.2 457.6 475.9 461.4 474.5 465.3 475M461.5 464.8L463.4 466.6M478.9 429.1L480 431.5 481.5 434.4 481.3 435.9 482 438.1 481 441.3 482.6 446.1 481.1 449.4 481.1 452.1M497.2 509.1L496 504.9 494.4 502.6 496.1 500.3 496.3 496.5 493.5 494.6 491 489.9 486.6 488.3 485 485M504.6 457.5L503.8 459.3 503 460.6 501.2 461.1 500.2 462.3 497.7 462.5 495.3 464 493.9 463.2 492 463.5M507.3 484.6L505.6 484.1 503.5 483.1 500.6 482.3 498.3 483 496.3 483.1 493.9 484.5 490.6 483.2 487.6 483.2M439.8 301.3L438 303.3 435.3 303.5 433.6 303.5 431.6 303.7M418 321.8L416.6 320.4M431.6 303.7L429.9 305.5 428 306.3 425.4 308.1 423 309.3 421.9 312.1 422.2 314.7 418.3 317 416.6 320.4M394.9 340.2L397.9 336.8 402.2 335.4 403.5 332.8 406.8 331.1 407.7 329 408.7 326.2 410.4 322.1 412.6 319.7M412.6 319.7L414.9 320.7 416.6 320.4M396.8 281.6L399.4 281.1 400.9 281.5 402.4 282.8 404.3 282.5 405.4 281.5 408.4 281.8 410.1 283.3M396.7 281.7L395.6 284.5 394.8 286.9 394 289.8 391.3 292.1 392.3 296.6 390.6 299.5 391.7 304 393.3 309.9M410.1 283.3L411 285.7M411 285.7L411.8 288.6 412.4 292.8 412.7 297.1 411.2 299.9 410.6 304.8 408.9 309 409.2 314.5 411.1 317.8M393.3 309.9L396.6 311 399.1 311.4 402.1 312.4 404.9 313.3 406.8 313.8 408.8 315.6 411.1 317.8M387.2 262.4L389.8 264.9 391.6 266.8 393.3 267.7 394.5 269.3 394.6 272.9 396.3 276.5 395.6 279.6 396.8 281.6M372.9 293.6L375.6 291.8 379.3 289.4 381.3 287.8 384.3 287 387.6 284.5 391 283.2 393.5 283.3 396.7 281.7M413.5 280.8L411.4 281.9 410.1 283.3M384 312.9L386.6 312.1 388.5 310.1 391.2 310.1 393.3 309.9M431.6 303.7L429.5 302.4 427.3 299.2 423.2 297.3 418.3 296.8 416.2 292.7 415.9 289.7 413.2 288.7 411 285.7M412.6 319.7L411.1 317.8M913 81.9L910.5 86.6 904.5 89.1 902.1 93.1 899.5 94.9 894.7 98.8 887.1 99.7 881.8 100 876.8 98.6M913.7 83.1L913.8 84.2 913.5 87.5 911.6 91 908.8 94.3 909.7 97.5 910.9 99.9 909.4 103.9 908.9 107.5M908.9 107.5L907.5 110 905.2 111.8 903.5 112.7 902.9 114.7 901 114.8 898.4 115.4 896.9 117.1 894.4 118.3M876.8 98.6L880.3 100.3 881.8 102.7 884.1 105 885.6 106.8 887 110.4 891.1 113 892.4 116.1 894.4 118.3M867 97.2L868.9 96.7 871.3 96.5 873.9 97.4 876.8 98.6M921.6 121.1L920 119.9 917.9 119.9 917.4 117.7 915.8 116.6 913.3 115.3 911.7 111.3 910.8 109 908.9 107.5M907.3 142.7L904.5 143.3 901.7 142.2 899.5 142 897.4 142.1 896.5 139.5 893.5 136.8 891 136.2 888.3 135.2M888.3 135.2L888.2 132.9 889.4 130.9 890.4 129.2 893.2 128.1 892.6 126.3 893.5 123.5 894.1 120.4 894.4 118.3M872.8 141.5L875.5 139.7 879 140 880.7 139.5 882.4 137.9 883.8 137.2 885.4 136 888.3 135.2M673.1 258.5L668.3 257.2 663.7 252.7 661 249.9 657.7 249.5 655.6 248.5 653.7 246.1 652.2 243.4 650.7 239.8M673.1 258.5L674.8 259.3 677.1 259.8M677.1 259.8L674.8 257.7 674.1 253.4 674.8 250.5 674.7 245.8 675.7 241.7 676 238.8 676.6 233.8 678.3 228.1M650.7 239.8L651.8 237.4 654.6 235.1 658.1 232.4 663.2 232.2 667.3 230.7 670.7 228.2 674.5 228.8 678.3 228.1M644 239.1L645.7 238.5 647.8 239.4 650.7 239.8M650.1 264.4L652.8 263.4 654.9 260.4 658.6 261.2 662.4 260 665.3 260.1 668.5 258.1 670.5 258.5 673.1 258.5M663.9 213.4L664.6 217.3 666.8 219.1 670.5 219.9 673.1 221.7 675 222.5 676.4 222.9 676.9 226 678.7 227.5M685.9 193.4L685.1 195.8 686.5 198.7 685.3 202.5 684 204.7 684.2 209.1 686.3 211.7 689.3 213.5 691.7 216.8M678.7 227.5L681.4 227.5 683.4 225.8M691.7 216.8L689.3 218.3 687.2 219.4 686 220.3 684.7 221.5 683.9 223.2 683.4 225.8M723.7 348.6L723.7 348.5 720.8 343.4M672.6 332.4L673.2 329.5 675 328.3 676.1 326.6 678.3 324.9 680 325.1 681.5 325M681.5 325L687.4 324.6 691.7 325.2 697.4 328.2 702.2 330.3 706.6 333.8 711.5 334.3 718.4 338.5 720.8 343.4M649.1 269.6L651.8 269.8 653.6 270.8 655.4 270.6 657.4 271.1 659 272.8 659.7 274.4 660.8 276.2M642 291.2L644.2 291.8 646.2 291.9 648.1 290.5 650.8 289.7 653.7 290.7 656.2 289.8 658.4 290.8 659.3 292.7M660.8 276.2L660 278.9 658.8 280.7 658.3 282.4 658.2 285.3 658 287.1 658.2 289.9 659.3 292.7M649.3 331.4L654.1 324.3 658.9 321.4 659.3 316.2 661.7 312.4 661.6 308.4 662.4 305.9 665.5 302.5 665.9 297.1M659.3 292.7L660.5 294.8 662.9 296.1 665.9 297.1M830 144.7L835.9 148.9 837.3 154.4 836.1 159.4 836 164.7 838.8 168.2M822.2 176.2L822.4 176.2 824 175 826.1 174.7 828.8 175.6 831.8 174 832.9 170.7 835.1 169.6 838.8 168.2M834 140.4L838.3 138.4 842.9 145.8 853.7 149.9 856.1 156.2 861.1 159.7M861.1 159.7L859 161.6 857.5 162 855.1 162.2 853.3 164 851.9 165 850.7 167.1 849.4 168.9M838.8 168.2L840.7 167.4 843.9 167.5 845.5 168.2 846.7 168.9 849.4 168.9M870.1 150.5L867.9 152.3 867.7 154.1 867.4 155.8 866.2 156.7 864.7 157.6 862 159.4M870.1 150.5L873.6 153.1 875.7 157.1 877.8 160.2 877.8 162.7 881.8 162.7 886 162.8 889.1 164.2 892 168.6M862 159.4L864.4 161.1 866.7 163.9 866.7 167 867.6 171.5 869.7 174.1 869.6 176.9 870.7 180.5 872.6 183.8M893.5 172.6L890.8 173.6 888.5 176.4 886.9 178.4 885.6 180 885.3 182.7 884.7 184.5 883.1 185.2 882.1 186.5M893.5 172.6L892.9 170.9 892 168.6M882.1 186.5L879.6 187.4 877.9 187.2 876.1 186.7 874.8 186.4 873.3 185.1 872.6 183.8M872.8 141.6L872.2 144 872.4 146.2 871.1 148.4 870.1 150.5M910.4 152.9L907.7 153.8 906.6 155.9 902.3 157.1 899.2 156.7 896.6 160.2 895 164 892.7 165.9 892 168.6M906.2 179.9L903.3 179.8 901.1 178.5 899.4 177.7 898.1 176.5 897.4 174.7 895.5 173.8 893.5 172.6M888.6 197.6L886.7 195.1 887 192.4 884.6 191.6 883.7 190.3 882.9 188.2 882.1 186.5M881.4 209.5L879.6 207.9 878.6 205 876.4 203.9 875.3 201.3 872.6 200 869.4 199.9 865.9 200 861.5 197.9M861.5 197.9L862.3 196.3 863.8 194.3 866.2 193.5 868.2 191.6 868.5 189.4 869.6 187.9 871.5 186.9 872.6 183.8M766.6 293.4L765.7 297 766.8 301.8 765.6 307.9 766.3 312.1 764.9 315.7 762.8 317.3 763.5 321 762.4 324.1M766.6 293.4L769.9 295.4 771.5 299.7 776 300.6 779 304 781.6 304.9 783.6 306.6 786 306.6 789.1 306.3M789.7 307.8L789.1 306.3M789.7 307.8L786.8 309.4 783.5 310.5 779.9 312.3 774.7 313.8 773.4 317.4 772 321.7 768.4 325.2 766.1 327.3M766.1 327.3L763.8 326.5 762.4 324.1M757 274L757.5 275.4 758.1 277.5 758.4 279.4 758.2 281.1M758.2 281.1L759.6 282.3 761.1 283.3 762.2 285.8 762.2 288.4 763.8 291.1 765.1 292.2 766.6 293.4M780.5 264L778 262.4 775.9 262.5 774.3 261.1M796 287L795.3 281.4 794.9 276.8 793.2 274.4 790.1 272.2 788.1 270.6 784.9 268.9 783 265.7 780.5 264M760.8 262.1L761.5 265 760.6 267.5 759.2 269.5 757.4 270.8 756.9 272.4 757 274M796 287L793.6 288.9 792.3 290.8 791.2 293.1 791.6 295.5 791.5 298.3 789.5 301 789.9 303.8 789.1 306.3M774.3 261.1L772.3 261.7 769.6 262.9 768 262.4 766.2 263.2 763.2 263.5 760.8 262.1M796 287L798.4 286.5 801 285.2 803.7 284.8 806.1 283.1 810.2 282.1 813.1 283.6 815.9 283.7 818.5 286.2M794.4 311.1L793.6 310.9 791.4 309.7 789.7 307.8M760.7 336.1L766.1 327.3M708.7 217.8L705.8 216.6 703.3 216.8 701 215.2 697.5 215.1 695.3 215.6 693.6 216.7 691.7 216.8M708.7 217.8L710.5 217.3 712.4 217.2 713.5 216.3 715.7 215.8 716.4 214.7 716.6 213.5M843.2 238.3L840.8 238.9 837.9 239.4M850.1 241.5L848.1 240.3 846.6 239.6 844.5 238.8 843.2 238.3M878.4 277.8L873.7 279.2 865.9 280.7 860.2 283.3M847 279L846.3 278.2 838.3 271.1 831.6 272.7 825.5 269.6M837.9 239.4L836.3 241.7 834.6 245.7 834.1 249.8 831.9 252.9 827.8 257.1 825.7 260.4 824.6 265 825.5 269.6M818.5 286.2L819.5 284.4 820.1 282.9 820.7 280.8 821.5 279.1 821.8 277.3 822.3 275.4 821.9 273.3 822.2 271M780.5 264L783.8 265.8 787.4 266.7 792.7 267.1 797.1 268.1 799.9 267 802.4 265.4 808.1 264.5 811.6 263M811.6 263L814 263.7 815.6 264.2 816.5 265.5 817.7 266.7 818.8 267.7 819.1 269.8 820.8 270.1 822.2 271M825.5 269.6L823.8 269.6 822.2 271M764.8 191.5L764 196 763.5 202.4 766.4 206.8M744.7 196.6L744.9 196.8 750.8 198.2 754.3 199.1 756.8 201.5 762.7 203.3 766.4 206.8M719.1 288.6L717.9 287.8 716.9 285.9 716 283.7 715.2 281.7 715.7 279.1M735.9 248.7L738.2 249.1 739.5 250.5 740.5 252.1 743.1 253.1 745.1 252.7 747.3 251.1 750.7 251.1 752.8 251.5M760.8 262.1L758.4 260 757.1 258.5 756.3 256.4 755.2 255 753.5 254.1 752.8 251.5M735.9 248.7L734.4 248.5 732.8 247.3 729.8 246.8 727.5 246.3 724 247.4 723.4 249.3 721.2 250.7M757 274L752.6 278.2 745.4 279.7 742 283.3 740.3 287.8 737 287.7 732.5 286.7 727.8 289.7 720.4 289M715.7 279.1L717.3 274.2 718.4 270.2 716.8 267.2 716.2 264.2 717.4 261 718.9 257.7 721.6 254 721.2 250.7M708.7 217.8L709.7 221.4 710.9 226.1 707.7 231 706.8 235.4 709.4 238.8 709.2 243.9 711.5 245.8 713.2 248.3M683.4 225.8L684.7 231.4 685.8 235.8 687.4 240.7 691.9 243.7 696.9 245.2 699 247.8 702.1 249.3 704.6 250.3M704.6 250.3L706.8 249.7 708.3 248.1 710.3 249 713.2 248.3M735.9 248.7L730.8 244.7 728.4 237.6 727.3 231.6 721.6 226.8 722.8 221.9 723.6 218.3M721.2 250.7L719.9 249.4 717.5 247.9 715.8 247.3 713.2 248.3M704.6 250.3L703 252 701.2 253.6 699.6 254.3 697.2 254.8 694.9 256.5 693.5 257.7 691.7 260.5 689.7 263.6M677.1 259.8L678.9 261.8M678.9 261.8L681.5 262.1 683.2 263.6 684.7 262.4 686.3 262.6 688.5 262.6 689.7 263.6M660.8 276.2L663.7 275.3 664.9 273.7 666.4 272.5 667.9 270.2 669.6 269.9 670.9 268.6 672.3 268.9 674.5 268.7M678.9 261.8L677.5 263.6 675.6 264.7 675.6 267.2 674.5 268.7M665.9 297.1L667.5 296.2 670.2 296.2 672.3 296 673.8 296.7M674.5 268.7L677.2 274 679.7 278.3 677.6 281.8 678 285.6 675.5 287.2 674 289.6 672.5 292.7 673.8 296.7M715.7 279.1L714.2 275.5 710.8 273.9 705.6 272 701.8 272.1 698 270.4 694.9 270.2 692.6 269.2 690.9 266M689.7 263.6L690.9 266M796.6 204.2L799.5 202.5 802.2 201.7 803.6 199.1 805.3 198.1 808.4 198.1 811.9 196.7 817 197 820.5 195.8M796.6 204.2L798.6 206.8 798.9 209.9 799.9 214.2 802.1 216.6 804.5 220.1 809 223.1 809.5 227.3 810.4 230.4M820.5 195.8L821.4 198 822 200.7 823.4 204.3 823.7 207.2 823.8 208.8 824.1 211.4 824.3 213.5 824.9 214.8M824.9 214.8L824.4 218.5 822.1 221.8 819.8 223.4 817.6 223.9 816.5 225.3 815.2 227.8 815.1 229.6 814.1 231.4M810.4 230.4L812 231.2 813.5 231.5M788.8 194.4L790.6 197.1 792.5 202.1 795.7 203.7M820.4 177.8L820.7 178.8 822.2 180 823.6 181.7 823.7 183.7 823.8 186.1 824.9 188.1 824.3 190.4 823.6 192.3M823.6 192.3L821.7 193.2 820.5 195.8M811.6 263L812.1 259.5 813.3 255.8 811.9 250.5 812.6 244.4 813 241.7 813.8 239.2 813.6 234.9 813.5 231.5M792.6 238.4L790.1 241 789 243.8 787.5 246.3 787 249.6 784.4 252.3 781.6 256.8 776.6 258 774.3 261.1M792.6 238.4L795.5 238.2 798.2 236.1 800.7 236.1 803.9 236.1 804.3 234.1 806.1 231.9 808.7 231.5 810.4 230.4M837.9 239.4L834.1 240 831.4 240.8 829.1 239.6 827.3 239.4 824 237.7 822.8 234.8 817.2 233.5 814.1 231.4M846.6 194.9L844.2 196.2M846.6 194.9L849.6 196.1 852.5 196.8 854.7 198.4 856.8 197.8 858.7 198.5M844.2 196.2L844.4 198.7 843.6 200.4 843.1 202.6 844.4 204.9 844.3 207.4 843.4 209.4 842.1 210.5 840.6 212.6M858.7 198.5L858.4 200.2 858.9 202.7 860.4 203.4 861.4 205.3 861.4 207.9 862.6 209.6 862.2 212.3 859.4 215.5M859.4 215.5L857.3 217.5 855.6 218.6 854 218.5 852.2 220.8 849.7 221.6 847.6 220.8 845 221.8M845 221.8L844.7 219.2 842.9 217.8 840.9 215.5 840.6 212.6M849.4 168.9L850 173.3 848.2 176.3 846.9 179.5 845.9 182.8 845.9 186 845 190.1 846 192.6 846.6 194.9M823.6 192.3L825.8 192.1 828 194 830.3 195.9 831 197.9 834.9 199 838.1 199.4 841.1 198.4 844.2 196.2M861.5 197.9L858.7 198.5M824.9 214.8L827.1 214.5 828.6 213.1 831.1 211.9 833.6 211.7 835.2 210.7 837.6 211.2 839.1 212 840.6 212.6M870.4 223.5L867.7 222.3 866.3 220.8 865.2 219.3 864.4 217.7 863 216.4 861.6 216.1 859.4 215.5M843.2 238.3L842.4 235.5 842.9 233.8 841.9 231.6 841.9 229.7 842.6 226.9 844 224.1 845 221.8M753.1 249.9L752.9 246 753 243.2 752.6 240.7 753.5 237.3 752.8 235.3 751.3 232.7 751.7 230.6 752.2 228.9M753.1 249.9L757.2 245.4 757.2 238.8 761.9 235.5 766.8 233.6 771.4 231.3 776.4 229.6 779.9 225.3 780.4 221.1M752.2 228.9L753.9 226.8 755.6 225.6 758.5 223.8 760.5 222.7 760.7 218.5 763.8 215.2 767.2 214.1 768.7 212M768.7 212L770.5 211.7 772.5 212.6 774.7 213.4 776.3 214.6 778.1 215.2 780.7 215.1M780.7 215.1L780.2 216.5 780.1 218.6 780.4 221.1M752.8 251.5L753.1 249.9M737.6 205.6L739.1 210.8 744.4 213.9 746.7 216.8 746.6 220.5 749.6 223.6 752.2 228.9M792.6 238.4L791.2 235.4 788.6 234.4 785.1 232.9 783.4 230.8 783 228.1 782.2 225.7 780.9 223.7 780.4 221.1M766.4 206.8L766.9 210 768.7 212M795.7 203.7L792.7 205.2 790.8 207.8 788.9 209.2 786.8 209 785.3 210.1 783 211.3 781.6 213.7 780.7 215.1M721 342.8L720.5 338.9 719.3 336.5 719.1 334.3 718.5 331.9 716 330.7 714.9 328.1 715.5 325.3 714.4 322M721 342.8L721.7 338.5 724.7 335 727.8 328.6 732.3 325.7 734.6 322.6 737.7 321.5 741.2 321.4 744.1 319.5M714.4 322L715.1 319.9 716.3 318.6 715.4 315.2 716 312.9 718.1 309.4 721.6 308.1 722.1 305.1 725.1 301.7M725.1 301.7L728.3 302.2 730.7 303.9 731.6 308.3 734.1 310.3 736.5 311.8 738.7 311.8 740.5 311.9 742.4 311.3M744.1 319.5L744.7 317.9 744.1 316.2 743 313.5 742.4 311.3M762.4 324.1L759.9 324.8 756.5 324.4 754.9 321.8 752.5 320.9 749.9 320.7 748.2 319.3 746.4 319.2 744.1 319.5M758.2 281.1L758.1 286.1 755.1 291.2 752.6 294.6 750.3 298.6 747.9 299.5 744.9 302.4 742.2 306.1 742.4 311.3M720.4 289L721.8 290.6 723.1 291.4 724.9 293.8 724.9 295.9 724.5 297.6 724.5 299.4 725.1 301.7M701.2 310.4L701.1 308.8 700.8 306.4 700.4 303.7 700.9 300.8 702.5 299.6 704.6 297.4 705.9 295.2 706.4 293.7M701.2 310.4L699.9 311.9 697.4 312.8 694.9 313.5 691.7 314.4 690.4 313.6 688 313.5 685.2 314.1M685.2 314.1L684.3 312.6 684 310.2 682.3 307.8 679.1 306.2 679.8 302.9 679 300.7 677.3 299.6 676.6 297.8M676.6 297.8L676.5 295.9 677.8 294.2 680.2 293.3 682.1 290.9 684.5 289.2 686.7 289.4 690 288.4 692.5 287.4M706.4 293.7L704.5 292.4 703.2 291.8 702 289.1 700 288.7 696.8 289.3 694.2 288.8 692.5 287.4M714.4 322L712 320 710.7 318.2 709.7 317.1 708.1 315.1 706.7 313.7 703.3 311.7 701.2 310.4M719.1 288.6L718 289.9 716.8 291.3 715.2 291.9 713.2 293.6 710.5 294.3 708.3 294.8 706.4 293.7M681.5 325L683 322.3 684.6 320.4 685.5 317.8 684.7 315.7 685.2 314.1M673.8 296.7L676.6 297.8M690.9 266L691.5 269.3 692.3 271.6 690.9 274.1 691.3 276.3 691.8 279.1 691.2 282.4 691.2 284.9 692.5 287.4" fill="none" stroke="#04180b" stroke-width=".8" stroke-linejoin="round"/>
<path d="M346.2 223.7L359 223 357.8 230.7 353 233 351.3 240 348.5 238.8 349 231.9Z" fill="#999999" stroke="#06200f" stroke-width=".8" stroke-linejoin="round"/>
<path d="M388 247L393.9 247 395 252.8 391.6 255 390.4 265.6 383.4 265.6 381 258.6 384.6 255Z" fill="#999999" stroke="#06200f" stroke-width=".8" stroke-linejoin="round"/>
<path d="M410.9 263.3L418.3 261 427.7 261 428.8 268 423 270.3 416 271.4 412.5 270.3Z" fill="#ffffbf" stroke="#06200f" stroke-width=".8" stroke-linejoin="round"/>
<path d="M432.8 262L437 258.6 444 263.3 451 263.3 455.6 260.3 456.8 264.5 451 269 441.6 270.3 434.6 268Z" fill="#ffffbf" stroke="#06200f" stroke-width=".8" stroke-linejoin="round"/>
<path d="M517 264L527 261 539 266 548 269 546 276 537 276 532 270 521 270Z" fill="#999999" stroke="#06200f" stroke-width=".8" stroke-linejoin="round"/>
<path d="M713 321L722 318 721 330 714 330Z" fill="#999999" stroke="#06200f" stroke-width=".8" stroke-linejoin="round"/>
<path d="M400 197L407 194.5 412.5 198 416 193.5 419.5 194.5 422 204 416.5 206.5 417 211 421 213.5 420 217 416 215.5 413.5 211 408 211 405.5 203 401 200.5Z" fill="#a6d96a" stroke="#06200f" stroke-width=".8" stroke-linejoin="round"/>
<path d="M882 75L889 78 892 70 896 68 898 71 911 74 913 83 924 84 927 95 923 96 919 84 912 83 907 86 894 83 882 83Z" fill="#999999" stroke="#06200f" stroke-width=".8" stroke-linejoin="round"/>
<path d="M787 221L794 217 802 219 801 226 807 236 796 236 791 231Z" fill="#a6d96a" stroke="#06200f" stroke-width=".8" stroke-linejoin="round"/>
<path d="M509 334L516 331 521 334 527 330 532 338 524 341 521 350 514 351 512 343 508 339Z" fill="#d7191c" stroke="#06200f" stroke-width=".8" stroke-linejoin="round"/>
<path d="M600.9 350.5L604.1 348.9 609.5 355.6 620 357.5 621.1 359.8 615.3 369.1 608.3 365.6 601.8 358.6Z" fill="#d7191c" stroke="#06200f" stroke-width=".8" stroke-linejoin="round"/>
<path d="M609.5 290.4L614.9 294.6 613.5 299.3 608.8 306.3 608.3 315.6 613.5 316.7 611.8 322.6 609.5 323.7 608.8 344 596.7 340 583.9 335.4 581.6 331.9 586.2 319 589.7 310.9 599 307.4 602.5 301.6 604.8 294.6Z" fill="#a6d96a" stroke="#06200f" stroke-width=".8" stroke-linejoin="round"/>
<path d="M568.8 316.7L575.7 315.6 586.2 319 581.6 331.9 583.9 335.4 578 338.4 568.3 330Z" fill="#b7e07f" stroke="#06200f" stroke-width=".8" stroke-linejoin="round"/>
<path d="M587 411L594 404 606 405 613 413 619 419 614 426 602 424 588 424Z" fill="#ffffbf" stroke="#06200f" stroke-width=".8" stroke-linejoin="round"/>
<path d="M646.1 449.3L651.9 445.8 664.7 443.4 670.6 442.3 674 453.9 684.5 455.1 691.5 459.7 696.2 463.2 693.8 470.2 688 469.1 683.4 462.1 675.2 460.9 664.7 463.2 663.6 471.4 660.1 481.9 655.4 491.2 660.1 493.5 661.2 500.5 650.8 502.4 646.1 498.2 646.8 488.8 651.9 479.5 653.8 465.6 644.9 462.1Z" fill="#a6d96a" stroke="#06200f" stroke-width=".8" stroke-linejoin="round"/>
<path d="M693.4 451.6L706.6 442.3 720.6 445.8 714.8 453.9 710.1 462.1 711.3 469.1 699.7 466.7 695 462.1Z" fill="#a6d96a" stroke="#06200f" stroke-width=".8" stroke-linejoin="round"/>
<path d="M622.8 518L628.6 509.8 640.3 507.5 649.6 507 647.3 514.5 650.8 518 646.1 525.6 636.8 523.8 626.3 521.4Z" fill="#a6d96a" stroke="#06200f" stroke-width=".8" stroke-linejoin="round"/>
<path d="M751.6 521.4L756.7 512.1 775.3 511 780 516.8 782.3 526.1 775.3 526.6 777.7 534.3 788.1 537.7 788.1 545.9 777.7 540.1 769.5 536.6 756.7 544.7 751.6 538.9Z" fill="#a6d96a" stroke="#06200f" stroke-width=".8" stroke-linejoin="round"/>
<path d="M423.2 348.7L434.5 347.3 441.5 354.4 440.1 368.4 434.5 378.3 432.5 392.4 421.8 399.4 409.1 400.8 402 392.4 407.7 389.6 411.9 375.5 420.4 362.8Z" fill="#a6d96a" stroke="#06200f" stroke-width=".8" stroke-linejoin="round"/>
<path d="M395.9 410.7L409.1 400.8 417.6 410.7 431.6 409.3 434.5 422 441.5 430.4 440.1 437.5 428.8 427.6 420.4 431.8 413.3 434.6 407.7 427.6 403.5 422Z" fill="#a6d96a" stroke="#06200f" stroke-width=".8" stroke-linejoin="round"/>
<path d="M393 432.7L399.3 427.6 407.7 427.6 413.3 434.6 417.6 440.3 418.4 448.7 413.3 447.3 411.9 443 409.1 446 404.9 441.7 400.7 440.3 399.3 447.3 395 446Z" fill="#fdae61" stroke="#06200f" stroke-width=".8" stroke-linejoin="round"/>
<path d="M472 346L479 343 489 355 502 356 509 364 503 383 498 381 497 373 491 378 488 370 492 366 482 359Z" fill="#a6d96a" stroke="#06200f" stroke-width=".8" stroke-linejoin="round"/>
<path d="M528 394.7L531.5 387.7 538.5 384.2 541.3 390 554.8 387.7 561.8 391.2 562.9 397 554.8 400.5 552.9 404 549 399.4 540.8 399.4 536.2 404 529.6 401.7Z" fill="#a6d96a" stroke="#06200f" stroke-width=".8" stroke-linejoin="round"/>
<path d="M399 534L409 523 418 529 427 534 438 540 436 545 421 548 409 544 399 539Z" fill="#a6d96a" stroke="#06200f" stroke-width=".8" stroke-linejoin="round"/>
<path d="M462 524L469 525 484 523 494 523 494 528 484 531 477 536 466 534Z" fill="#a6d96a" stroke="#06200f" stroke-width=".8" stroke-linejoin="round"/>
<path d="M277 266L278.9 261.6 280.2 258.8 281.8 255 283 251 283.5 246.9 282.6 243.4 281.7 239.2 282 233 283.3 230.2 285.6 228.8 288.2 224.3 288 221 286.4 219 286.2 215.5 284.5 213.5 284 211 284.3 207.9 284.9 206.3 286 204 289.5 203.8 292.9 203 296.1 201.3 299 199 309.3 200.7 315.3 197.6 324.8 200.7 332 201 335.6 198.4 340.9 197.9 347.1 197.6 352 198 357.2 196.8 360 194.6 362.1 193.4 366 193 368.6 188.4 370.7 185.7 372.2 184 374 181 376.6 182.7 379.8 186 381.4 189.3 383 191 385.3 192.8 386.7 196.6 389 201.7 389 206 390.3 204.6 391.5 202.3 392.7 201.1 394 199 396.4 198 397.9 197.3 400 197 402.2 197.2 404.5 196.1 407 194.5 409.5 195.8 411.2 197.2 412.5 198 414.6 196.7 415 195.2 416 193.5 418 193.9 419.5 194.5 420.4 196.1 421.9 198.4 421.8 200.9 422 204 419.5 205.3 417.7 206 416.5 206.5 416.2 208.9 417 211 419 211.6 421 213.5 421.2 215.7 422 217 425.8 219.4 429.5 219.5 431.8 223.3 437 226 440.1 228.1 442 231.6 443.1 233.5 446 235 447.7 233.3 448.9 230.5 449.6 227 451 224 452.3 223.1 454.7 222.5 457.3 221.2 459 219 462.9 218.5 465.5 219.2 467.7 219.5 471 221 470.6 218.8 470.6 215.8 471.3 213.1 473 211 477.5 210.1 480.1 208.9 483.5 205.8 486 203 487.2 202.4 488.4 200.7 491.1 201 493 200 493.1 202 493.7 204 493.8 207.1 496 210 498.4 210.1 500.4 210.5 502 210 501.4 213.6 502.4 216.3 502.9 218.6 504 221 506.1 222.8 509 223.9 511.3 224 513 224 515.5 221.8 517.5 219.4 519.4 218.3 522 216 525.3 217.8 527.7 219.7 530.1 220 532 220 534.8 219.2 538.3 216.8 540.3 214.7 543 211 547 208.3 550.3 206.2 555.2 206.2 559 204 560.4 202.6 561.7 200.5 563.8 199.3 567 199 572.2 199.6 577.4 197.5 580.5 196.7 584 195 587.8 195.2 590.4 193.8 595.4 193 599 193 600.4 191.8 602.3 190 604.7 189.2 606 188 608.9 188.6 611.8 190.7 614.3 190 617 190 617.3 187.4 617.6 185.6 618 184 617.5 180.9 617.3 179 615.2 177.5 614 174 616.1 170.8 617.5 168.1 619.8 167.6 622 166 621.4 163.2 622.4 160.4 624.4 155.7 627 153 631.9 151.6 636.4 150.6 642.9 153.6 649 155 649.8 157.7 649.5 160 651.1 161.2 652 163 654.2 163 655.8 163.7 658.7 164 662 165 665.1 164 667.5 162.3 669.9 161.6 672 160 676.4 162.6 679.6 163.3 681.1 165.2 683 168 682.7 170 682.5 172.4 683 174.7 684 176 684 179.4 682.9 182.1 682 184.2 682 186 682.7 188.7 685.1 191.3 686.9 194.2 689 195 691.7 193.9 693.9 191.2 695.5 188 697 186 699.5 187.9 701 189.8 703 191 705.2 189.3 707.3 189.1 710.1 189.1 712 190 711.6 193.3 709.1 197.1 708.4 201.6 709 206 711.5 209.1 713.2 211.1 715.9 212.4 717 214 719.8 216.5 723.8 218.5 728.7 221.5 733 224 733.8 219.2 735.7 213.6 737.4 209.3 737 206 740.2 203.8 742.1 202.3 743.4 198.1 746 195 747.6 192.5 750.1 191.4 752.5 189.4 754 188 755 189.5 755.9 190.9 757.9 191.6 759 193 761.9 192.8 763.5 191.7 765.5 191.4 768 191 770.2 189.9 771.2 188.4 773.4 186.4 776 185 778.6 185.2 780.6 184.7 782 185 783.1 186.7 783.8 189.4 783.6 191.4 783 193 785.5 194.1 789.4 194.5 792.5 194.7 797 195 796.7 193 796.6 190.9 797.1 188.6 798 186 799 184.8 800 182.9 801.6 181.9 803 181 805.2 181.9 806.4 183 809 184 812.5 183.2 814.9 183.3 817.1 182.8 819 181 820.4 177.8 822.2 176.3 822.6 173.1 822 169 822.1 165.3 822.5 162.6 824.3 158.3 827 156 825.9 153.4 824 151 826 149.4 826.8 147.4 830.2 144.6 833 144 834.1 140.3 834.2 136.5 832.7 133.5 833 129 832.5 126.8 831.9 124.8 832.3 121.6 834 119 837.5 116.3 838.5 113.1 842.9 108.9 847 108 850.1 108.2 852.2 107.5 854 106 854.7 102 855.7 98.2 855.5 93 858 89 860.1 89.6 862.8 90.5 865.1 90.1 867 90 867.5 88.5 869 87 871.6 87.6 873.5 87.3 875.1 89.2 877 90 878.3 88 879.4 86.1 881.3 84.5 882 83 882.9 81.1 883.1 79.5 882.3 76.9 882 75 883.9 76.8 885.8 77.6 887.6 77.7 889 78 889.2 75.8 889.6 73.2 890.3 71.8 892 70 894.2 69.1 896 68 896.4 69.6 898 71 901.8 71.7 905.2 71.9 908.2 72.8 911 74 911 77.2 911.8 79.7 913.1 81.5 913 83 915.6 83.4 918.7 84.4 920.8 83.7 924 84 924.6 86.5 926.8 88.8 926.9 92 927 95 926.6 98.8 926.8 101.1 927.4 103.3 927 105 927.7 106.9 930.2 108.7 931.8 109.6 934 111 936.3 112.5 937.4 114.8 940.3 117.8 942 120 943.9 122 945.3 124.8 947.2 127.1 949 129 950.1 130.1 950.4 132 952 132.9 953 135 952.1 137.4 951.6 139.1 952 141 949.8 142.5 949.2 144.1 947.8 144 946 145 943.6 145.5 941 146 940 148.8 940.5 151.7 939.7 153.5 939 155 938.5 157.1 937.2 158.5 937 161 934.4 162.1 932 163 934.4 164.6 935.6 166.1 936 168 939 167.3 940.4 166.5 942 166 942.4 168.9 942.8 171.2 942.2 174.2 943 176 943 177.9 944.2 180.4 944 182.4 944 184 943.5 186.4 943.3 188.4 941.9 190.7 941 193 939.1 193.2 937.3 194.8 935.3 194.5 934 195 931.1 194.3 929.6 192.9 928 191 929.8 194.3 929.7 197.9 928.6 200.2 928 204 928.6 205.7 929.2 207.7 930.2 209 931 211 930.3 213.5 927.7 216.2 927.1 218.9 927 221 926.6 225 924.8 228.9 922.8 232 921 234 918.9 234.7 916.5 235.6 914.6 237.2 914 239 912.4 239.9 910.9 242.2 909.7 243.8 907 245 906.5 247.6 906 250 908.5 250.4 910.1 251.7 911.2 252.9 913 254 913 256.5 912.2 258.4 912 260 908.8 261 905.6 263.1 901.6 264.1 897 263 895.1 264.9 894.6 266.8 893.7 268.7 893 270 891.3 269.2 889.3 268.1 887 266 885.8 269.4 883.5 273.5 884 276 884 279 882.6 280.5 880.9 282.6 878.6 284.5 877 286 872.8 284.3 866.6 283.9 862 283.9 859 283 856.7 282.1 854.4 281.4 850 279.6 847 279 847.7 281.1 849.1 282.7 849.5 284.1 849 286 849.5 288.1 850.8 291.1 851.9 292.6 854 294 853.9 295.7 854.6 297.8 854 299.3 854 301 851.2 301.3 848 301 847.3 304 846.8 307.1 846.7 309.3 847 311 844.3 309.8 842.1 309.4 840.4 308.3 839 308 836.5 309.9 835.2 311.4 834.4 313.2 834 315 831.8 314.4 829.9 312.9 828.6 311.4 827 311 824.8 311 822 310.7 820.1 308.7 817 308 813.7 307.5 808.9 307.6 801.8 306.8 797 304 795.8 305.7 795.5 307.6 795.2 310 793 313 791.3 313.5 789.4 314.7 786.6 315.3 784 315 784.3 316.7 785.5 318.7 785.6 321.1 786 324 784 326.2 783.2 329.8 782.1 332.4 781 334 777.3 333.6 773.8 332 770.9 331.8 767 334 762.7 335.4 758.6 336.8 755.5 336.3 752 338 750.1 339.4 747 341.5 744.5 341.7 742 343 739 343.8 734.8 343.1 732.2 344 729 344 725.8 345.4 724.3 348.1 722.8 349.3 721 351 719.6 352.7 718.6 356.2 717.5 360.7 718 364 716.7 366.3 714.9 367.5 712 369.3 709 371 706.2 372.6 704 373.2 702.3 374.3 701 375 699.1 373.1 698.3 371.2 698.2 369.6 698 368 696.1 367.4 694 366.1 691.6 366.4 688 366 688.4 363.7 688.2 361 687.5 359 687 356 684.6 354.1 682.5 353 680.4 353.2 677 353 674.8 354 672.8 354.8 671.3 354.3 669 355 670.7 357.4 671.6 359.9 671.7 361.8 672 364 669.8 365.1 667.7 366.8 665.4 368.3 662 369 656.9 369.7 653.7 370.4 650 370.5 647 370 648.4 371.9 648.8 375.1 648.1 377.2 648 379 648.6 381.9 648.7 384.3 649 386 649.3 388.5 648.1 391.7 647.2 395.7 644 399 643 400.8 642.3 402.7 641 405 641.4 407.5 641.2 410.3 642.6 411.8 643 414 645 416.8 646.8 417.9 649.5 419.8 652 421 654 421.5 655.3 422.3 657 423 659.5 422.6 661.7 421.3 666 420.8 669 420 670.4 422.9 671.5 424.9 674 427.3 677 430 679.9 430.5 682.4 430.2 684 430 684.4 433.4 687.2 436.9 690.2 438.6 692 441 693.2 442.6 694.7 443.8 695 446.5 697 449 699.3 448.5 701.6 446.1 704.2 445.5 707 443 710.2 443.2 713.1 444.3 716.5 445.6 719 445 723 447 729.3 447.3 732.7 448.6 737 448 740.1 447.3 742.2 446.2 744 446 743.7 448.8 742 451 739.5 452.1 738.5 453.6 735.1 454.7 732 455 731.2 457.5 730.7 460.3 731.6 463 731 465 730.6 467.6 729.4 471 729 475.4 727 479 730.2 480.9 732.8 483.3 735.9 485.7 737 489 739.3 488.3 740.7 487.7 742.3 487.7 744 488 747.2 491.3 750.4 493 753.2 495.5 757 496 757 500 756.6 504.4 757.1 507.6 759 510 763.4 511.2 768.1 510.1 772.2 508.8 777 510 777.1 515.3 777.7 519.5 780.5 522.9 782 526 780.7 526.4 778.9 526.8 776 526 776.4 527.8 777.8 530.4 778.8 532.6 779 535 781 534.9 783.2 536.1 785.8 537.9 788 538 787.1 540 787.1 542.3 787.2 544 788 546 788.3 548.4 789.9 551.4 791.6 552.9 794 555 794.8 558 794 560 792.2 561.6 789.4 562 785.5 562 783 563 782.3 565.5 781 568 777.3 567.2 771.7 568.9 768.2 567.1 764 565 763.2 562.8 763.3 560.3 762.6 559 761 558 755.5 557.9 751.7 557.1 748.6 556.2 746 554 744.5 551.2 741.9 547.8 740.1 546.5 737 546 735.8 548.3 734.4 549.9 730.2 551 728 553 724.6 550 720.9 549.3 718.3 547.3 717 544 713.7 541.7 711.9 539 709.1 536 707 531 704 529.3 700.3 528.2 696.6 527.9 694 528 690.7 526.9 688.5 526.6 685.7 524.7 682 523 681.2 520.6 680.2 518.1 676.4 516.9 674 514 672.2 515.3 670.7 517.6 669.4 518.8 667 520 665.7 522.2 664.3 525 662.5 525.8 661 528 663.5 531.3 667 533.7 666.7 536.4 668 539 668.1 542.2 668.7 545.1 667.6 547.8 667 551 669.3 552.2 671 553 668.4 554.1 666.3 555.1 664.7 557.8 663 559 666 561.8 667.7 565.2 667.8 568.1 669 571 667.4 573.3 665.2 576.2 664.6 578.3 664 581 663 586.7 663.5 592 659.1 595.9 657 601 655.3 603.2 654.1 603.9 652 605 648.8 604.2 644.7 604.8 641.8 603.5 637 604 635 602.7 634 601.3 632.6 600.5 631 599 631.4 597.3 631.7 595.7 632.9 593.7 634 591 636.2 590.7 637.3 589.8 639 589 638.4 587.2 637 585 634.6 586.2 630.7 587.6 629.3 589.5 627 591 621.2 590.8 615.7 592.4 611.2 591.1 609 589 606 588.2 602.1 585.4 597.1 585.5 594 584 589.7 584.3 585.5 582.3 582.9 579.2 577 578 574.3 578.9 570.6 578.9 568.4 580.3 566 581 564 583.1 561.2 584.9 559.6 588.6 559 591 558.4 593.3 556.9 594.7 554.8 596.9 553 600 552.4 597.9 552 596.4 551 594 547.8 591.3 543.5 589.8 539.4 589.9 534 589 531.9 588.7 529.4 587.1 526.6 586.3 523 585 520.8 586.4 518 588 519.7 585.3 521.5 584 521.8 582.4 523 581 522.9 578.2 524.7 575.4 525.4 573.3 527 571 528.5 568.4 530.3 566.8 530 564 531 561 532.8 558.7 533.7 556.5 534.7 554.7 536 554 536 551.4 534.1 548.2 534.2 544.8 533 541 530.4 538 528.8 534 528 530.9 529 526 525.3 528.3 520.7 530.6 516.2 531.3 512 530 509 531.4 506.8 533 504.9 533.8 502 534 498.8 533.1 495.5 531.6 490.4 532 487 531 485.6 532.8 482.7 533.7 480.4 534.4 477 536 472.2 534.6 469.6 533 465.5 532 462 533 458.2 531.9 455 532.9 449.9 534.9 446 535 444.5 538 442.4 541 440.4 542.4 437 544 433.9 545.6 429.7 545.8 425.6 546.9 421 548 418.6 547.6 416.2 545.7 412.8 545.1 409 544 406.9 542.4 405 541.2 401.2 540.4 399 538 396.5 536.3 395.4 535.5 394 534 393.6 530.9 393.2 528.3 393 526 391.5 525.5 389.4 524.3 387.4 522.3 386 521 384.2 520.4 381.7 519.6 378.8 518.4 376 519 375.2 517.1 374 515 375.8 513.1 377 511.1 377.4 509.6 378 508 379.9 506.4 381.4 505.5 382.3 502.4 384 501 386.8 500.4 390.2 500.2 395.5 498.5 399 499 400.5 497.7 402.1 497 404 496.7 407 496 407 493.1 406.5 490.2 407.5 487.1 408 484 411.1 482.7 413.2 482.4 415.4 481.3 417 479 419.1 476.1 420.2 473.4 422.1 469.1 422 466 423.6 464.7 425.2 463.3 426.7 461 429 459 428.1 456.6 428 453.4 427.1 451.5 427 449 425.2 449.9 422.4 449.6 420.7 448.7 418 448 416 448.5 413 449 413 447 411.8 444.5 410.8 442.6 411 441 409.2 442.8 407 445 405.4 443.4 404.5 441.7 403 439 400.8 439.8 399 440 397.9 442.2 397.8 444.1 398 446.6 398 449 395.9 447.2 394 446 394 443.1 394.6 439 393.3 436.4 393 434 393.6 432 393 430.1 394.4 427.3 396 426 393.3 425.7 391 425.1 388.8 423.8 387 424 385.7 422.8 385.2 420.5 383.6 418.1 381 416 379 411.9 379.8 406.6 380.9 403.7 382 401 382.7 398.3 382.3 396.2 382.9 393.8 384 391 381.6 388.8 380.3 387.2 378 385.9 376 385 374.3 384.5 372.6 382.7 371 380 369.9 377.1 370.2 374 370 372 371 370 372 367.8 373.4 366.2 375 365.2 377 364 376 362.1 376.2 358.9 376.3 355.3 377 353 376.3 351 374.5 349.8 374.5 347.1 373 344 370.5 344.6 368.6 344.7 366.8 344.8 364 345 363 346.8 363.1 349.3 362.5 351.4 363 353 358.8 352 356 349.9 352.9 350.8 348 350 345.8 349.1 343.1 348.9 340.8 346.7 338 344 335.2 341.3 334.7 338.7 334.8 333.6 333 329 333.8 324.9 333 320.3 332.4 316.5 331 314 323 312.1 318 310.3 314.2 307.3 312 304 307.3 299.7 304.5 294.5 303.9 290.5 304 286 303.5 282.9 302.4 279.6 300.5 277.7 299 275 293.3 274.1 285.3 270.9 280.2 268.9Z" fill="none" stroke="#06200f" stroke-width="1.1" stroke-linejoin="round"/>
<g font-family="'Liberation Sans',sans-serif">
<text font-size="11.5" text-anchor="middle" x="767" y="210.1" font-weight="bold" stroke="#fff" stroke-opacity=".55" stroke-width="1.800" paint-order="stroke" stroke-linejoin="round" opacity="0.8" fill="#7c807c">Deoghar</text>
<text font-size="11.5" text-anchor="middle" x="728" y="321.1" font-weight="bold" stroke="#fff" stroke-opacity=".55" stroke-width="1.800" paint-order="stroke" stroke-linejoin="round" opacity="0.8" fill="#7c807c">Dhanbad</text>
<text font-size="11.5" text-anchor="middle" x="567" y="388.1" font-weight="bold" stroke="#fff" stroke-opacity=".55" stroke-width="1.800" paint-order="stroke" stroke-linejoin="round" opacity="0.8" fill="#7c807c">Ranchi</text>
<text font-size="11.5" text-anchor="middle" x="694" y="479.1" font-weight="bold" stroke="#fff" stroke-opacity=".55" stroke-width="1.800" paint-order="stroke" stroke-linejoin="round" opacity="0.8" fill="#7c807c">Jamshedpur</text>
</g>
</svg>
</div>
<div id="tabs"><div class="abs" style="left:0;top:0;width:213px;height:34px;background:#007a4d"></div><div class="abs" style="left:426px;top:0;width:1px;height:34px;background:#cfcfcf"></div></div>
<div class="abs" style="z-index:6;left:0;top:0"><div style="position:absolute;top:83.5px;font-size:13.5px;line-height:19px;white-space:nowrap;letter-spacing:-0.62px;font-weight:bold;color:#fff;left:791.3px;">DATA</div><div style="position:absolute;top:83.5px;font-size:13.5px;line-height:19px;white-space:nowrap;letter-spacing:-1.04px;font-weight:bold;color:#00794c;left:970.4px;">FILTERED AREAS</div><div style="position:absolute;top:83.5px;font-size:13.5px;line-height:19px;white-space:nowrap;letter-spacing:-0.94px;font-weight:bold;color:#00794c;left:1205px;">ANALYSIS</div></div>
<div class="ctl" style="top:68px;height:44px"><div class="abs" style="left:0;top:22px;width:22px;height:1px;background:#e3e3e3"></div><svg class="abs" style="left:0;top:0" width="22" height="44" viewBox="0 0 22 44" stroke="#222" stroke-width="2" fill="none"><path d="M6.500 11.300H15.500M11 6.800V15.800M6.500 33.200H15.500"/></svg></div>
<div class="ctl" style="top:119px;height:22px"><svg class="abs" style="left:0;top:0" width="22" height="22" viewBox="0 0 22 22" fill="#2a2f35"><path d="M11 5.200L16.500 8.300 11 11.400 5.500 8.300z"/><path d="M6.800 10.600L5.500 11.400 11 14.500 16.500 11.400 15.200 10.600 11 13z"/></svg></div>
<div class="ctl" style="top:148px;height:22px"><svg class="abs" style="left:0;top:0" width="22" height="22" viewBox="0 0 22 22" fill="none" stroke="#2a2f35" stroke-width="1"><circle cx="11" cy="11" r="5.300"/><path d="M11.400 7.800v.9M11.200 10l-.6 4.200" stroke-width="1.100"/></svg></div>
<div id="attr"></div><div class="abs" style="z-index:6;left:0;top:0"><div style="position:absolute;top:720.0px;font-size:9.5px;line-height:13px;white-space:nowrap;letter-spacing:-0.18px;color:#444;left:1446px;">© Mapbox © OpenStreetMap</div><div style="position:absolute;top:720.0px;font-size:9.5px;line-height:13px;white-space:nowrap;letter-spacing:-0.01px;font-weight:bold;color:#333;left:1569px;">Improve this map</div></div>
<svg class="abs" style="left:428px;top:711px;z-index:4" width="70" height="19" viewBox="0 0 70 19"><circle cx="8.400" cy="9.400" r="7.300" fill="#fff" fill-opacity=".92" stroke="#666" stroke-opacity=".55" stroke-width=".8"/><path d="M9.600 5.400a4 4 0 0 1 2.200 6.800c-1.900 1.800-5.600 1.300-5.600 1.300s-.5-3.600 1.400-5.500a4 4 0 0 1 2-2.600z" fill="#8d8d8d"/><path d="M9.800 7.300l.6 1.300 1.300.6-1.300.6-.6 1.300-.6-1.300-1.300-.6 1.300-.6z" fill="#fff"/><text x="18.600" y="14" font-family="'Liberation Sans',sans-serif" font-weight="bold" font-size="11.900" fill="#fff" stroke="#777" stroke-opacity=".8" stroke-width="1.500" paint-order="stroke" letter-spacing=".1">mapbox</text></svg>
<div id="right"></div>
<div id="rightb"></div>
<div style="position:absolute;top:68.5px;font-size:12px;line-height:17px;white-space:nowrap;letter-spacing:-0.21px;color:#00794c;left:1737px;">Clear all datasets</div>
<div class="abs" style="left:1653px;top:94px;width:232px;height:1px;background:#dedede"></div>
<div class="abs" style="left:1653px;top:204px;width:232px;height:1px;background:#dedede"></div>
<i class="abs" style="left:1663.5px;top:107.2px;width:2px;height:2px;background:#a9a9a9"></i><i class="abs" style="left:1666.6px;top:107.2px;width:2px;height:2px;background:#a9a9a9"></i><i class="abs" style="left:1663.5px;top:110.2px;width:2px;height:2px;background:#a9a9a9"></i><i class="abs" style="left:1666.6px;top:110.2px;width:2px;height:2px;background:#a9a9a9"></i><i class="abs" style="left:1663.5px;top:113.2px;width:2px;height:2px;background:#a9a9a9"></i><i class="abs" style="left:1666.6px;top:113.2px;width:2px;height:2px;background:#a9a9a9"></i><i class="abs" style="left:1663.5px;top:116.2px;width:2px;height:2px;background:#a9a9a9"></i><i class="abs" style="left:1666.6px;top:116.2px;width:2px;height:2px;background:#a9a9a9"></i><i class="abs" style="left:1663.5px;top:119.2px;width:2px;height:2px;background:#a9a9a9"></i><i class="abs" style="left:1666.6px;top:119.2px;width:2px;height:2px;background:#a9a9a9"></i><i class="abs" style="left:1663.5px;top:122.2px;width:2px;height:2px;background:#a9a9a9"></i><i class="abs" style="left:1666.6px;top:122.2px;width:2px;height:2px;background:#a9a9a9"></i>
<div style="position:absolute;top:104.5px;font-size:12px;line-height:17px;white-space:nowrap;letter-spacing:-0.56px;left:1679.5px;">Maternal Death Block</div>
<div style="position:absolute;top:108.0px;font-size:8.5px;line-height:12px;white-space:nowrap;letter-spacing:0.24px;color:#555;left:1795px;">[%]</div>
<svg class="abs" style="left:1828px;top:106px" width="57" height="14" viewBox="0 0 57 14" fill="none" stroke="#2f353b" stroke-width="1"><circle cx="7.300" cy="7" r="5"/><path d="M7.300 2a5 5 0 0 0 0 10z" fill="#2f353b"/><circle cx="26.500" cy="7" r="5"/><path d="M26.900 4v.9M26.700 6.200l-.5 3.900"/><path d="M41 2.800L49 11.200M49 2.800L41 11.200"/></svg>
<div class="abs" style="left:1684px;top:139px;width:188.500px;height:3px;box-shadow:0 1px 1.500px rgba(0,0,0,.3);background:linear-gradient(90deg,#1a9641 0%,#1a9641 20%,#a6d96a 20%,#a6d96a 40%,#ffffbf 40%,#ffffbf 60%,#fdae61 60%,#fdae61 80%,#d7191c 80%,#d7191c 100%)"></div>
<div style="position:absolute;top:151.0px;font-size:9px;line-height:13px;white-space:nowrap;letter-spacing:-0.00px;left:1684px;">0.00</div>
<div style="position:absolute;top:151.0px;font-size:9px;line-height:13px;white-space:nowrap;letter-spacing:-0.00px;left:1855px;">5.26</div>
<div class="abs" style="left:1684px;top:178.500px;width:48px;height:3.500px;background:#999"></div>
<div style="position:absolute;top:173.8px;font-size:8px;line-height:11px;white-space:nowrap;letter-spacing:-0.16px;left:1743.7px;">Not Available</div>
<div id="tl"></div><div id="knob"></div>
</body>
</html>
